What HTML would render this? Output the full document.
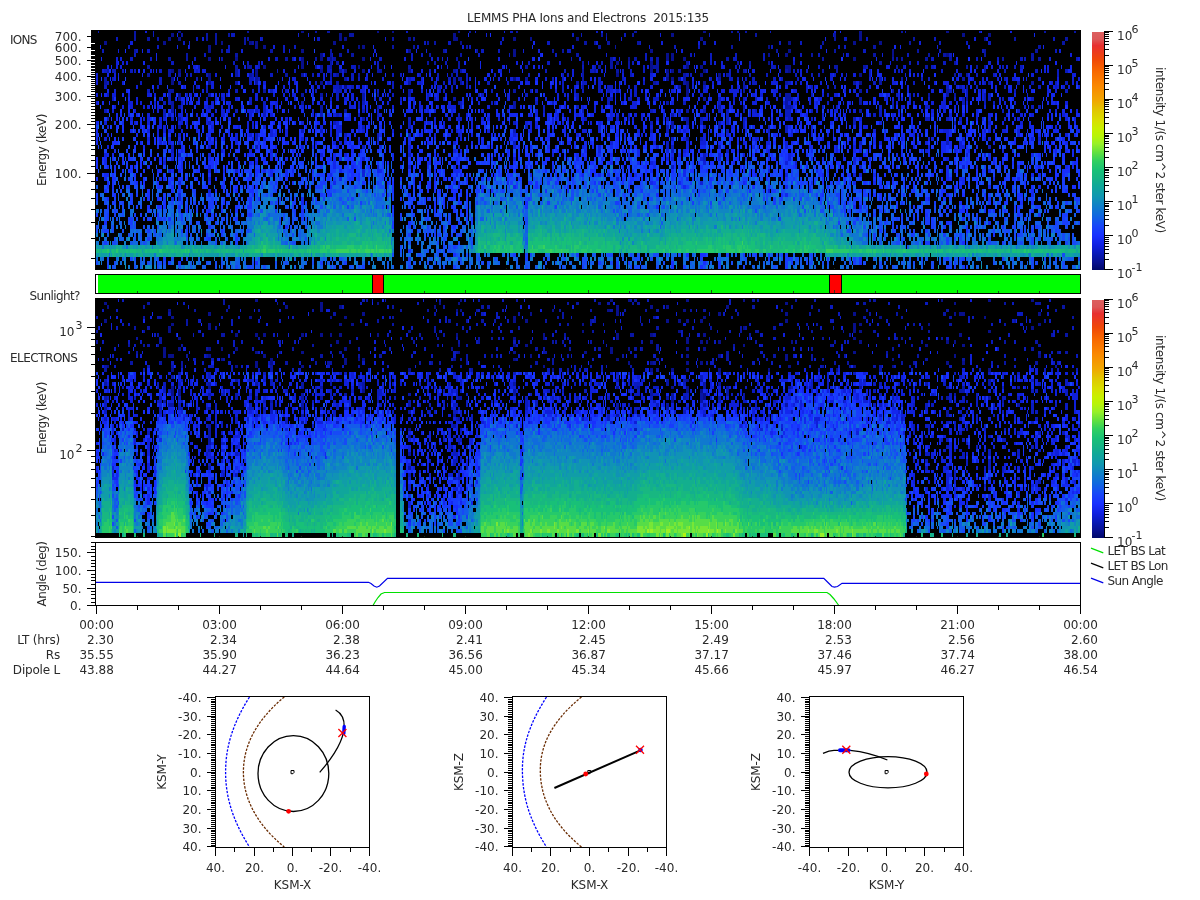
<!DOCTYPE html>
<html lang="en"><head><meta charset="utf-8"><title>LEMMS PHA Ions and Electrons 2015:135</title>
<style>
html,body{margin:0;padding:0;background:#fff;}
body{width:1200px;height:900px;overflow:hidden;}
svg{display:block;font-family:'DejaVu Sans','Liberation Sans',sans-serif;font-size:12px;fill:#2a2a2a;}
</style></head><body>
<svg width="1200" height="900" viewBox="0 0 1200 900">
<defs><linearGradient id="cb" x1="0" y1="1" x2="0" y2="0"><stop offset="0.0000" stop-color="#000868"/><stop offset="0.0314" stop-color="#081090"/><stop offset="0.0614" stop-color="#0818b0"/><stop offset="0.1029" stop-color="#1020e0"/><stop offset="0.1443" stop-color="#1830ff"/><stop offset="0.1857" stop-color="#1848f8"/><stop offset="0.2286" stop-color="#1068e0"/><stop offset="0.2700" stop-color="#1080c8"/><stop offset="0.3114" stop-color="#1098b0"/><stop offset="0.3543" stop-color="#10a898"/><stop offset="0.3957" stop-color="#18b880"/><stop offset="0.4171" stop-color="#18c078"/><stop offset="0.4586" stop-color="#30d060"/><stop offset="0.4929" stop-color="#60e040"/><stop offset="0.5300" stop-color="#98f028"/><stop offset="0.5629" stop-color="#b8f408"/><stop offset="0.5929" stop-color="#c8f000"/><stop offset="0.6257" stop-color="#d8e000"/><stop offset="0.6686" stop-color="#e0c800"/><stop offset="0.7100" stop-color="#f0a800"/><stop offset="0.7729" stop-color="#fa8800"/><stop offset="0.8357" stop-color="#f86800"/><stop offset="0.8857" stop-color="#f04808"/><stop offset="0.9429" stop-color="#e83030"/><stop offset="0.9700" stop-color="#dc5858"/><stop offset="1.0000" stop-color="#dc6060"/></linearGradient></defs>
<rect x="96" y="30" width="984" height="239" fill="#000"/>
<rect x="96" y="298" width="984" height="239" fill="#000"/>
<g fill="none" shape-rendering="crispEdges">
<path stroke="#070f8c" stroke-width="3" d="M178 31.5h3m120 0h3m73 0h2m13 0h2m64 0h2m243 0h3m153 0h3m84 0h3"/>
<path stroke="#070f8c" stroke-width="4" d="M171 35h3m165 0h3m111 0h3m215 0h3m185 0h3m100 0h3m23 0h3M168 39h3m7 0h3m158 0h3m2 0h3m61 0h3m42 0h5m55 0h3m14 0h2m44 0h3m121 0h3m156 0h3m122 0h2M104 43h3m56 0h3m55 0h2m26 0h3m3 0h3m75 0h3m124 0h2m326 0h3m62 0h3m23 0h3M208 47h3m44 0h3m5 0h3m92 0h2m2 0h3m403 0h2M208 51h3m90 0h3m104 0h3m102 0h3m134 0h3m135 0h3m101 0h2M320 55h3m190 0h3m150 0h3m2 0h3m94 0h2m15 0h3m104 0h2m52 0h3M208 59h3m24 0h3m63 0h3m16 0h3m7 0h2m30 0h3m263 0h2m36 0h3m2 0h3m9 0h3m167 0h3M301 63h3m312 0h3m31 0h3m115 0h2M263 67h3m35 0h3m54 0h2m290 0h3m33 0h3m11 0h3m82 0h6M171 71h3m4 0h3m74 0h3m62 0h3m21 0h3m15 0h3m43 0h3m239 0h3m13 0h3m2 0h3m29 0h3m82 0h3M208 75h3m44 0h3m358 0h3m81 0h3m15 0h3m138 0h3M171 79h3m34 0h3m302 0h3m150 0h3m2 0h3M171 83h3m34 0h3m109 0h3m363 0h3m14 0h3m153 0h3M344 87h3m339 0h3M686 91h3M178 95h3m505 0h3"/>
<path stroke="#0815a5" stroke-width="3" d="M134 31.5h2m111 0h2m66 0h2m10 0h3m139 0h2m45 0h2m116 0h3m94 0h2m4 0h2m6 0h2m154 0h2m141 0h2m28 0h2"/>
<path stroke="#0815a5" stroke-width="4" d="M134 35h2m45 0h2m23 0h2m7 0h2m11 0h2m119 0h5m247 0h2m3 0h1m25 0h2m121 0h2m77 0h2M134 39h2m11 0h3m7 0h2m47 0h2m7 0h2m27 0h2m1 0h2m143 0h2m19 0h2m419 0h2m77 0h2m99 0h2m49 0h3M215 43h2m27 0h2m6 0h2m173 0h2m5 0h2m148 0h3m7 0h2m11 0h3m27 0h3m63 0h3m116 0h2m85 0h2m151 0h3M392 47h2m19 0h2m51 0h2m130 0h3m14 0h1m115 0h2m140 0h3m162 0h3M134 51h2m85 0h2m47 0h3m57 0h2m111 0h2m31 0h2m74 0h2m8 0h2m212 0h2m56 0h2m81 0h2m65 0h2m49 0h3M186 55h2m47 0h3m92 0h2m7 0h3m9 0h3m75 0h2m29 0h2m114 0h3m232 0h2m60 0h3m52 0h2m13 0h3m38 0h2m45 0h3M168 59h3m15 0h2m33 0h2m62 0h3m27 0h2m16 0h3m120 0h2m152 0h3m21 0h3m19 0h3m67 0h3m93 0h2m68 0h2m2 0h2m3 0h2m22 0h3m21 0h3m50 0h2m27 0h3m4 0h3M330 63h2m4 0h3m88 0h2m5 0h2m22 0h2m122 0h2m26 0h3m15 0h2m26 0h3m27 0h3m48 0h2m10 0h2m128 0h3m72 0h2M147 67h3m85 0h3m9 0h5m63 0h2m3 0h3m7 0h2m76 0h3m47 0h2m65 0h3m70 0h3m9 0h3m15 0h2m23 0h6m175 0h4m25 0h3m30 0h2m27 0h3m38 0h2m8 0h2m6 0h2M107 71h2m59 0h3m64 0h3m101 0h3m35 0h5m71 0h3m4 0h2m120 0h2m10 0h2m20 0h3m37 0h3m19 0h3m62 0h2m40 0h3m34 0h2m12 0h2m146 0h2M147 75h3m18 0h3m7 0h3m54 0h3m11 0h3m33 0h3m13 0h3m26 0h2m4 0h3m19 0h2m91 0h2m129 0h2m82 0h3m14 0h3m40 0h3m225 0h2m10 0h2M104 79h3m148 0h3m86 0h3m106 0h3m2 0h4m63 0h3m54 0h2m94 0h3m2 0h3m32 0h3m180 0h2m59 0h3M104 83h3m128 0h3m17 0h3m78 0h3m69 0h3m42 0h3m4 0h2m4 0h2m108 0h3m74 0h3m27 0h3m57 0h2m40 0h3m65 0h3m23 0h3m72 0h2m32 0h3m26 0h3m11 0h3M339 87h3m240 0h2m94 0h3m62 0h2m221 0h2M168 91h6m89 0h3m142 0h3m102 0h3m227 0h2m114 0h3m30 0h2m52 0h3M208 95h3m90 0h3m16 0h3m39 0h3m12 0h2m29 0h3m374 0h6m137 0h2m16 0h3m5 0h2M178 99h3m181 0h3m88 0h3m247 0h3m79 0h6m68 0h3m104 0h2M171 103h3m127 0h3m154 0h2m53 0h3m150 0h3m116 0h3m71 0h3M171 107h3m4 0h3m139 0h3m54 0h2m134 0h3m202 0h3m22 0h2m40 0h6M171 111h3m146 0h3m21 0h3m339 0h3m14 0h3m153 0h3M671 115h3M178 119h3m181 0h3m321 0h3M671 123h3m12 0h3M178 127h3m490 0h3m44 0h3M686 139h3"/>
<path stroke="#0a1abf" stroke-width="3" d="M98 31.5h1m54 0h1m252 0h2m102 0h3m83 0h2m172 0h1m134 0h1m73 0h2"/>
<path stroke="#0a1abf" stroke-width="4" d="M153 35h1m77 0h4m337 0h2m7 0h1m42 0h2m83 0h1m29 0h1m93 0h1M116 39h2m78 0h2m63 0h2m54 0h3m182 0h2m102 0h1m237 0h3m19 0h2m66 0h2m117 0h2M183 43h2m239 0h2m22 0h3m49 0h2m45 0h3m90 0h1m138 0h2m19 0h2m137 0h2m25 0h2m20 0h3M128 47h2m27 0h2m69 0h2m53 0h2m9 0h2m121 0h2m50 0h2m203 0h2m22 0h2m71 0h2m47 0h2m16 0h2m4 0h2M102 51h2m32 0h2m9 0h3m76 0h4m53 0h2m62 0h2m96 0h2m34 0h3m14 0h2m67 0h4m292 0h3m73 0h2m41 0h2m71 0h2M134 55h2m68 0h2m126 0h1m78 0h2m8 0h2m55 0h2m29 0h1m45 0h2m88 0h2m43 0h2m18 0h2m23 0h2m26 0h2m35 0h2m16 0h2m23 0h1m3 0h2m58 0h2m40 0h3M130 59h3m17 0h2m42 0h2m79 0h3m14 0h2m33 0h3m2 0h1m46 0h3m29 0h2m24 0h2m132 0h1m43 0h1m29 0h2m3 0h3m57 0h2m21 0h4m26 0h2m166 0h3m42 0h2m19 0h2m21 0h3m1 0h2m50 0h2M171 63h3m59 0h2m12 0h2m9 0h2m117 0h2m66 0h2m81 0h2m17 0h3m9 0h2m40 0h2m29 0h2m69 0h3m4 0h2m81 0h2m114 0h2m6 0h2m24 0h3M198 67h2m58 0h2m67 0h3m21 0h5m21 0h2m203 0h2m10 0h2m47 0h2m38 0h3m49 0h2m12 0h2m20 0h5m42 0h2m46 0h2m35 0h2m26 0h3m68 0h2m10 0h2m4 0h3M104 71h3m5 0h4m6 0h2m6 0h3m1 0h2m23 0h3m34 0h2m79 0h1m16 0h2m31 0h5m97 0h2m25 0h2m87 0h2m17 0h2m24 0h4m28 0h2m6 0h2m11 0h2m61 0h2m21 0h2m6 0h2m6 0h2m46 0h2m2 0h2m7 0h2m61 0h2m27 0h2m41 0h2m61 0h2m29 0h3m19 0h2m6 0h3M186 75h2m2 0h2m14 0h2m44 0h2m16 0h3m32 0h2m5 0h2m19 0h3m15 0h3m38 0h2m6 0h2m17 0h2m16 0h2m17 0h2m8 0h2m26 0h2m32 0h2m32 0h2m3 0h2m61 0h2m54 0h3m1 0h2m37 0h2m18 0h2m15 0h2m27 0h2m14 0h2m5 0h2m14 0h2m33 0h2m88 0h3m14 0h2m15 0h2m62 0h2M112 79h2m45 0h3m34 0h2m51 0h5m4 0h2m70 0h2m19 0h3m4 0h2m48 0h3m26 0h2m9 0h3m15 0h2m84 0h2m8 0h2m34 0h3m21 0h2m86 0h2m17 0h4m4 0h2m6 0h2m5 0h3m18 0h3m5 0h2m14 0h2m80 0h3m2 0h2m35 0h2m5 0h2m74 0h2m32 0h3M107 83h2m31 0h2m17 0h3m16 0h3m68 0h3m63 0h2m10 0h3m62 0h2m25 0h2m13 0h2m7 0h2m42 0h3m17 0h2m53 0h2m18 0h5m11 0h3m42 0h2m11 0h3m93 0h5m31 0h3m4 0h2m76 0h3m37 0h2m69 0h2m69 0h2m8 0h3M104 87h3m50 0h2m37 0h2m8 0h2m125 0h6m12 0h3m38 0h2m6 0h2m35 0h4m10 0h2m13 0h2m94 0h2m34 0h3m6 0h6m15 0h2m4 0h3m66 0h3m39 0h2m59 0h2m3 0h2m14 0h2m5 0h2m110 0h3m10 0h3m14 0h2m26 0h2m32 0h3m14 0h2M147 91h3m56 0h2m27 0h3m14 0h2m16 0h3m12 0h3m27 0h2m19 0h6m35 0h2m60 0h2m2 0h2m6 0h2m38 0h2m37 0h2m3 0h3m24 0h2m10 0h2m6 0h2m14 0h3m6 0h3m6 0h3m15 0h3m169 0h2m141 0h3m10 0h3m1 0h2m46 0h2m49 0h3M107 95h2m59 0h3m15 0h2m148 0h3m53 0h2m33 0h2m49 0h2m1 0h3m41 0h3m48 0h3m55 0h3m63 0h3m108 0h2m14 0h2m67 0h2m11 0h2m2 0h2m51 0h2m16 0h2m2 0h3M112 99h2m45 0h3m6 0h3m35 0h2m13 0h2m26 0h3m78 0h2m4 0h3m61 0h2m25 0h2m5 0h2m7 0h2m122 0h2m7 0h3m28 0h6m15 0h4m21 0h6m59 0h3m12 0h2m8 0h2m10 0h2m9 0h2m23 0h2m135 0h2m24 0h2m6 0h3m19 0h2m2 0h3m11 0h2m27 0h3M163 103h3m2 0h3m10 0h2m66 0h3m11 0h3m92 0h2m2 0h3m95 0h2m29 0h2m1 0h2m39 0h3m14 0h2m53 0h3m73 0h3m32 0h3m106 0h2m63 0h2m19 0h2m47 0h3m19 0h2m7 0h2M208 107h3m52 0h3m92 0h2m100 0h2m81 0h2m31 0h3m212 0h2m29 0h2m12 0h2m41 0h3m10 0h2m31 0h5m101 0h3m4 0h3M104 111h3m56 0h3m69 0h3m17 0h3m5 0h3m96 0h3m12 0h2m164 0h2m37 0h2m66 0h3m25 0h3m37 0h3m5 0h3m14 0h2m10 0h2m28 0h6m20 0h2m66 0h3m120 0h2m13 0h3M163 115h3m2 0h3m92 0h3m54 0h3m13 0h3m19 0h2m17 0h2m79 0h2m168 0h2m96 0h3m56 0h6m82 0h3m3 0h3M107 119h2m62 0h3m234 0h3m47 0h4m122 0h3m29 0h3m9 0h2m36 0h3m14 0h3m14 0h3m23 0h3m14 0h2m43 0h3m20 0h2m40 0h3m69 0h5m16 0h3m10 0h3M208 123h3m122 0h3m72 0h3m102 0h3m134 0h3m47 0h3m15 0h3m5 0h3m14 0h2m108 0h3m98 0h2m32 0h3M362 127h3m43 0h3m114 0h3m138 0h3m34 0h3m37 0h2m23 0h2m15 0h3M301 131h3m16 0h3m190 0h3m134 0h3m13 0h3m57 0h3m39 0h2m15 0h3M255 135h3m86 0h3m30 0h2m29 0h3m47 0h2M255 139h3m119 0h2m292 0h3m26 0h3m65 0h2M178 143h3m332 0h3m150 0h3m190 0h3m84 0h3M171 147h3m34 0h3m44 0h3m104 0h3m301 0h3m2 0h3m44 0h3m267 0h3M171 151h3m497 0h3m52 0h3M178 155h3m227 0h3m292 0h3M703 159h3M671 167h3"/>
<path stroke="#0f1fd9" stroke-width="3" d="M145 31.5h2m328 0h1m28 0h1m329 0h2m174 0h2"/>
<path stroke="#0f1fd9" stroke-width="4" d="M298 35h1m9 0h1m177 0h1m173 0h1M202 39h2m56 0h1m124 0h1m235 0h1m117 0h1m234 0h2m10 0h2M130 43h3m56 0h1m406 0h2m63 0h2m35 0h2m14 0h2m203 0h2M189 47h1m83 0h2m67 0h2m118 0h2m108 0h2m75 0h1m287 0h1m30 0h2M118 51h1m122 0h2m46 0h1m84 0h2m30 0h2m18 0h1m96 0h1m14 0h2m141 0h2m376 0h2M323 55h2m281 0h1m87 0h1m151 0h1m35 0h1m187 0h2M116 59h2m2 0h2m146 0h2m29 0h2m103 0h2m25 0h2m9 0h1m4 0h1m50 0h2m79 0h2m32 0h2m4 0h1m173 0h2m254 0h2m27 0h2M116 63h2m4 0h2m2 0h2m133 0h2m69 0h1m41 0h2m140 0h2m70 0h1m7 0h2m116 0h2m5 0h2m48 0h2m27 0h2m88 0h1m65 0h2m30 0h3m6 0h2M107 67h2m7 0h2m2 0h2m71 0h3m48 0h2m9 0h3m183 0h1m5 0h1m54 0h2m34 0h2m52 0h2m21 0h1m31 0h2m48 0h1m23 0h4m161 0h4m15 0h1m28 0h2m55 0h2m6 0h2m5 0h2m39 0h2M102 71h2m46 0h2m1 0h1m40 0h2m2 0h2m2 0h4m32 0h2m43 0h2m57 0h2m10 0h2m55 0h2m8 0h2m39 0h4m34 0h2m7 0h1m62 0h2m22 0h2m3 0h2m67 0h1m81 0h3m24 0h2m19 0h2m75 0h2m15 0h2m5 0h2m6 0h2m45 0h2m39 0h2m21 0h3m21 0h2m1 0h2M96 75h2m16 0h2m99 0h2m21 0h2m77 0h3m3 0h2m17 0h2m22 0h2m49 0h2m28 0h1m124 0h2m7 0h1m40 0h2m8 0h2m16 0h3m70 0h2m75 0h2m28 0h3m8 0h2m3 0h1m6 0h3m49 0h1m7 0h2m2 0h2m49 0h2m25 0h2m34 0h3m38 0h4M96 79h2m16 0h2m176 0h4m27 0h2m22 0h2m17 0h2m14 0h2m27 0h4m6 0h2m8 0h2m36 0h2m27 0h2m10 0h3m3 0h4m25 0h2m77 0h2m17 0h2m18 0h2m52 0h1m112 0h3m11 0h2m23 0h2m85 0h2m10 0h2m2 0h2m8 0h2m13 0h2m7 0h2m4 0h4m10 0h1m30 0h2m13 0h2m4 0h2M96 83h2m24 0h2m87 0h3m49 0h3m28 0h2m34 0h2m55 0h2m28 0h2m2 0h2m25 0h3m11 0h2m14 0h2m45 0h5m29 0h2m33 0h2m5 0h2m17 0h1m3 0h2m45 0h3m18 0h2m18 0h2m3 0h1m31 0h2m20 0h7m22 0h2m18 0h2m34 0h3m33 0h4m38 0h2m7 0h6m25 0h2m3 0h2m1 0h2m22 0h2m43 0h2m19 0h2m2 0h2M136 87h2m45 0h2m8 0h1m4 0h2m11 0h3m44 0h2m23 0h2m27 0h2m3 0h3m3 0h2m22 0h4m7 0h2m2 0h3m1 0h2m63 0h2m12 0h2m22 0h2m47 0h2m30 0h2m22 0h2m5 0h1m68 0h3m21 0h2m16 0h2m37 0h2m4 0h2m46 0h3m21 0h2m3 0h2m40 0h3m10 0h2m36 0h2m47 0h2m4 0h3m30 0h2m32 0h2m22 0h2m2 0h2m3 0h3m3 0h2m8 0h2M114 91h2m37 0h1m39 0h1m8 0h2m24 0h2m28 0h2m45 0h2m26 0h3m8 0h3m2 0h2m9 0h5m24 0h2m20 0h2m8 0h2m14 0h2m116 0h2m44 0h2m7 0h3m17 0h2m39 0h3m29 0h5m13 0h4m4 0h10m1 0h2m31 0h5m15 0h4m47 0h2m7 0h3m10 0h2m39 0h2m22 0h3m7 0h2m36 0h2m1 0h2m24 0h2m37 0h2m6 0h2M96 95h2m14 0h4m12 0h2m17 0h3m4 0h2m34 0h2m29 0h4m1 0h2m27 0h3m15 0h2m8 0h2m7 0h4m16 0h2m37 0h3m33 0h2m40 0h2m6 0h2m6 0h2m60 0h3m47 0h2m5 0h2m1 0h2m5 0h2m30 0h1m17 0h2m4 0h2m13 0h2m62 0h1m23 0h4m15 0h3m5 0h3m10 0h3m3 0h2m16 0h2m23 0h2m10 0h4m18 0h3m27 0h2m10 0h2m17 0h2m63 0h2m30 0h2m11 0h1M136 99h2m60 0h2m15 0h2m6 0h2m10 0h3m17 0h3m19 0h1m16 0h2m24 0h3m21 0h3m4 0h3m25 0h3m31 0h2m22 0h2m32 0h2m34 0h3m8 0h2m15 0h3m7 0h2m10 0h2m42 0h2m21 0h2m11 0h3m5 0h2m76 0h2m20 0h2m29 0h2m19 0h2m10 0h2m7 0h4m8 0h3m51 0h4m4 0h2m4 0h2m1 0h2m6 0h2m32 0h3m36 0h2m43 0h1M96 103h2m30 0h5m3 0h2m2 0h2m12 0h2m30 0h2m8 0h2m13 0h3m14 0h3m44 0h3m34 0h2m35 0h2m36 0h2m11 0h2m11 0h2m4 0h2m27 0h3m27 0h2m142 0h2m8 0h5m34 0h3m32 0h2m25 0h2m5 0h2m10 0h5m9 0h4m13 0h2m3 0h3m4 0h2m12 0h2m5 0h2m20 0h2m3 0h1m5 0h2m45 0h2m11 0h2m20 0h3m7 0h5m3 0h3m4 0h2m8 0h2m36 0h2m8 0h2m39 0h2m8 0h3M114 107h2m6 0h2m6 0h3m10 0h2m2 0h3m7 0h5m19 0h2m21 0h4m3 0h3m7 0h2m5 0h2m25 0h3m12 0h3m2 0h2m17 0h2m5 0h3m45 0h5m8 0h3m14 0h3m10 0h2m19 0h2m4 0h4m14 0h2m9 0h8m31 0h3m20 0h3m17 0h2m27 0h2m3 0h2m16 0h2m10 0h2m5 0h2m7 0h3m17 0h7m66 0h3m25 0h2m168 0h4m36 0h5m8 0h2m28 0h2m38 0h2m31 0h2M112 111h2m20 0h2m21 0h2m22 0h2m23 0h5m4 0h2m4 0h4m3 0h2m17 0h7m4 0h2m17 0h1m34 0h2m105 0h2m3 0h2m1 0h2m5 0h2m15 0h2m28 0h3m23 0h2m26 0h3m17 0h2m37 0h2m14 0h3m40 0h3m7 0h2m35 0h3m18 0h2m26 0h2m1 0h3m40 0h2m3 0h2m14 0h2m9 0h2m5 0h4m11 0h2m2 0h3m42 0h2m21 0h2m8 0h3m9 0h3m30 0h2m77 0h2m19 0h2M128 115h2m17 0h3m28 0h5m3 0h2m8 0h2m13 0h3m7 0h4m24 0h3m18 0h3m39 0h2m1 0h2m16 0h3m3 0h3m37 0h3m47 0h2m20 0h2m13 0h2m62 0h2m3 0h3m5 0h2m12 0h2m3 0h2m12 0h3m31 0h3m3 0h3m15 0h3m4 0h2m20 0h2m13 0h3m25 0h2m29 0h2m10 0h2m1 0h7m22 0h2m23 0h2m14 0h2m14 0h2m4 0h2m23 0h2m21 0h2m7 0h2m6 0h2m38 0h3m10 0h3m11 0h2m10 0h3m15 0h2m12 0h3m8 0h3m28 0h3M130 119h3m10 0h2m2 0h3m9 0h3m1 0h3m15 0h2m23 0h2m41 0h3m33 0h3m89 0h2m55 0h2m12 0h3m5 0h2m13 0h2m8 0h3m3 0h3m8 0h2m52 0h2m1 0h2m7 0h2m1 0h2m13 0h2m23 0h6m19 0h2m7 0h2m13 0h3m44 0h5m37 0h2m38 0h3m3 0h2m29 0h2m12 0h2m21 0h3m30 0h2m2 0h2m51 0h3m24 0h2m10 0h3m13 0h2m8 0h2m1 0h3m45 0h3m6 0h2M104 123h3m27 0h2m11 0h3m9 0h3m16 0h5m3 0h2m18 0h2m39 0h2m3 0h2m47 0h3m32 0h3m74 0h2m9 0h2m1 0h4m3 0h2m7 0h2m26 0h2m52 0h3m2 0h2m3 0h3m14 0h2m3 0h2m3 0h2m18 0h2m6 0h2m6 0h3m217 0h2m59 0h3m77 0h3m40 0h2m16 0h3M107 127h2m48 0h5m1 0h3m45 0h3m7 0h2m15 0h2m7 0h2m3 0h2m9 0h3m49 0h2m3 0h3m7 0h2m4 0h6m16 0h2m83 0h2m26 0h2m57 0h2m3 0h3m60 0h3m49 0h3m33 0h3m42 0h2m78 0h2m50 0h5m120 0h3m64 0h2M147 131h3m7 0h2m4 0h3m2 0h3m10 0h2m13 0h2m72 0h3m12 0h3m42 0h2m4 0h6m16 0h2m2 0h3m27 0h2m57 0h2m3 0h2m2 0h2m25 0h3m40 0h2m20 0h2m28 0h5m11 0h3m36 0h3m38 0h3m2 0h3m59 0h2m44 0h2m18 0h2m60 0h3m37 0h2m28 0h6m35 0h2m2 0h3m2 0h2m7 0h4m11 0h3M107 135h2m48 0h2m19 0h3m54 0h3m11 0h3m18 0h3m12 0h3m42 0h2m4 0h3m80 0h2m13 0h2m24 0h2m9 0h2m40 0h3m51 0h2m7 0h3m28 0h3m31 0h2m60 0h3m20 0h3m39 0h2m21 0h2m18 0h2m14 0h2m84 0h2m31 0h3m68 0h3m45 0h3M104 139h3m40 0h3m9 0h3m6 0h3m37 0h3m4 0h2m6 0h2m10 0h3m14 0h2m9 0h3m35 0h3m40 0h3m11 0h2m100 0h2m221 0h3m17 0h3m49 0h4m57 0h2m4 0h2m25 0h2m41 0h2m7 0h2m25 0h2m1 0h3m12 0h3m13 0h3m19 0h2m2 0h3m40 0h3m4 0h3M159 143h3m6 0h3m64 0h3m77 0h2m16 0h3m3 0h3m16 0h2m17 0h2m74 0h3m154 0h3m40 0h3m30 0h3m11 0h6m37 0h2m21 0h4m15 0h3m91 0h3m43 0h3m31 0h3m31 0h2M107 147h2m192 0h3m32 0h3m69 0h3m47 0h2m6 0h2m45 0h3m66 0h2m14 0h3m55 0h3m27 0h3m96 0h3m48 0h2m15 0h3m3 0h3m51 0h2m13 0h2m29 0h6M221 151h2m26 0h3m18 0h3m135 0h3m42 0h3m4 0h2m136 0h3m65 0h3m14 0h3m82 0h2m66 0h2m21 0h3m63 0h3m26 0h2m46 0h2M104 155h3m64 0h3m34 0h3m109 0h3m21 0h3m111 0h2m92 0h2m74 0h2m88 0h3m22 0h2m23 0h2m18 0h3m175 0h2m16 0h2M171 159h3m61 0h3m124 0h3m148 0h3m112 0h2m36 0h3m2 0h3m26 0h3m15 0h3m67 0h3m62 0h3m3 0h3m84 0h3M163 163h3m89 0h3m392 0h3m50 0h3m79 0h3m7 0h2m56 0h3M208 167h3m166 0h2m29 0h3m47 0h2m399 0h3m100 0h3M168 171h3m37 0h3m24 0h3m124 0h3m403 0h2m184 0h2m32 0h3M362 175h3m420 0h3m65 0h3m3 0h3M208 179h3m405 0h3M178 183h3m277 0h2m240 0h3M208 191h3m557 0h2M178 195h3M178 199h3"/>
<path stroke="#1327ed" stroke-width="3" d="M601 31.5h2m237 0h1m140 0h1"/>
<path stroke="#1327ed" stroke-width="4" d="M177 35h1m290 0h1m565 0h1M825 39h1M533 43h2M100 47h1m76 0h1m10 0h1m184 0h1m158 0h1m361 0h2m4 0h1m142 0h1M142 51h1m273 0h1m58 0h1m200 0h1m149 0h1M156 55h1m216 0h1m166 0h2m236 0h1m159 0h1M101 59h1m54 0h1m62 0h1m74 0h2m74 0h1m161 0h3m341 0h1m79 0h2M118 63h1m24 0h2m47 0h1m114 0h1m156 0h2m14 0h1m140 0h1m15 0h3m26 0h3m20 0h1m50 0h2m129 0h1m144 0h1m38 0h2M111 67h1m76 0h2m6 0h2m27 0h1m72 0h1m18 0h3m19 0h3m29 0h1m12 0h1m95 0h1m23 0h1m1 0h1m13 0h2m11 0h2m70 0h1m88 0h1m44 0h1m38 0h1m191 0h2m14 0h2m35 0h1m20 0h2m15 0h1m8 0h2M143 71h2m11 0h1m28 0h1m66 0h2m180 0h2m55 0h2m5 0h2m105 0h1m14 0h1m149 0h1m92 0h3m104 0h2m2 0h2m92 0h4M107 75h2m9 0h1m23 0h1m104 0h2m77 0h1m45 0h1m53 0h1m2 0h2m56 0h3m10 0h2m36 0h2m21 0h1m42 0h1m48 0h3m60 0h1m116 0h1m43 0h5m39 0h2m35 0h1m40 0h2m13 0h2M185 79h1m68 0h1m27 0h1m82 0h1m40 0h2m28 0h1m38 0h1m8 0h3m6 0h1m12 0h1m28 0h3m33 0h1m18 0h2m2 0h2m54 0h3m39 0h2m15 0h1m6 0h1m25 0h1m36 0h2m21 0h4m86 0h2m64 0h1m11 0h2m14 0h2m28 0h4M111 83h1m82 0h2m64 0h1m27 0h2m6 0h2m11 0h2m14 0h2m44 0h1m2 0h2m13 0h2m13 0h4m28 0h1m38 0h1m44 0h2m30 0h2m65 0h1m98 0h3m70 0h2m13 0h2m88 0h2m7 0h1m62 0h2m21 0h2m6 0h2m41 0h1m6 0h2m6 0h2M241 87h2m20 0h3m23 0h1m6 0h2m44 0h2m12 0h2m76 0h2m5 0h1m14 0h2m17 0h1m91 0h2m7 0h3m25 0h1m10 0h1m3 0h1m57 0h1m28 0h3m3 0h2m25 0h1m39 0h2m35 0h2m59 0h2m11 0h1m10 0h2m25 0h2m28 0h1m11 0h2m19 0h2m15 0h4m35 0h2M107 91h2m17 0h2m145 0h2m7 0h1m5 0h1m7 0h2m14 0h2m54 0h2m4 0h2m50 0h1m57 0h2m120 0h1m6 0h3m3 0h2m20 0h2m4 0h2m12 0h2m11 0h2m22 0h2m17 0h1m31 0h2m4 0h2m3 0h5m6 0h2m38 0h2m1 0h2m6 0h2m74 0h2m65 0h1m8 0h2m2 0h1m5 0h2m9 0h2m13 0h2m14 0h1m4 0h3m15 0h2M104 95h3m15 0h2m26 0h2m11 0h3m28 0h2m4 0h1m14 0h2m2 0h1m69 0h1m36 0h1m5 0h1m9 0h2m38 0h2m1 0h1m40 0h1m7 0h3m29 0h2m1 0h2m25 0h2m45 0h2m58 0h1m6 0h3m2 0h1m4 0h1m28 0h1m6 0h3m11 0h1m21 0h2m24 0h3m34 0h2m122 0h4m5 0h2m53 0h3m32 0h3m66 0h2m2 0h4M128 99h2m45 0h1m5 0h4m1 0h2m5 0h1m44 0h2m21 0h2m3 0h2m17 0h3m59 0h2m7 0h2m16 0h2m13 0h2m13 0h2m2 0h5m13 0h1m9 0h1m25 0h2m12 0h2m20 0h2m54 0h1m19 0h2m11 0h1m27 0h1m55 0h3m9 0h6m9 0h2m8 0h4m9 0h2m70 0h2m46 0h2m30 0h3m45 0h2m36 0h3m10 0h2m2 0h5m18 0h2m7 0h2m2 0h2m10 0h2m3 0h2m20 0h2M102 103h2m46 0h2m5 0h2m24 0h2m4 0h3m6 0h2m4 0h4m18 0h2m42 0h5m6 0h1m35 0h3m3 0h2m5 0h2m12 0h3m7 0h2m9 0h3m14 0h2m47 0h2m29 0h2m32 0h2m52 0h2m3 0h2m7 0h2m28 0h4m49 0h2m4 0h3m4 0h1m2 0h2m32 0h1m19 0h1m11 0h2m62 0h2m19 0h2m31 0h2m14 0h5m1 0h2m2 0h3m1 0h2m7 0h2m19 0h2m16 0h3m71 0h2m26 0h1m14 0h1m4 0h2m2 0h4M128 107h2m24 0h2m38 0h2m35 0h2m8 0h2m36 0h2m18 0h2m4 0h2m2 0h2m25 0h3m15 0h2m10 0h2m58 0h3m2 0h2m9 0h3m2 0h1m61 0h1m10 0h2m59 0h1m2 0h3m19 0h1m107 0h2m1 0h1m3 0h4m4 0h2m29 0h3m30 0h2m7 0h2m10 0h4m15 0h1m4 0h2m7 0h2m58 0h2m6 0h2m22 0h2m25 0h2m29 0h2m7 0h2m2 0h2M107 111h2m19 0h2m23 0h1m38 0h1m9 0h2m22 0h2m38 0h2m2 0h3m10 0h2m16 0h3m28 0h1m33 0h2m21 0h2m15 0h7m8 0h2m3 0h1m15 0h1m10 0h3m40 0h2m11 0h1m59 0h2m3 0h2m3 0h2m20 0h3m11 0h1m76 0h2m3 0h1m14 0h2m23 0h2m32 0h2m3 0h2m31 0h2m19 0h3m10 0h1m40 0h2m53 0h2m13 0h2m10 0h2m10 0h1m29 0h2m16 0h1m22 0h2m11 0h3M116 115h2m2 0h2m14 0h2m33 0h3m1 0h1m26 0h2m2 0h2m18 0h2m5 0h2m92 0h3m19 0h2m38 0h2m13 0h2m15 0h2m22 0h3m21 0h2m16 0h3m6 0h4m2 0h2m5 0h9m10 0h2m17 0h3m5 0h2m17 0h2m3 0h5m6 0h4m12 0h1m6 0h2m7 0h2m19 0h2m2 0h2m25 0h2m45 0h2m12 0h2m3 0h2m37 0h2m19 0h2m2 0h2m24 0h3m10 0h1m22 0h2m16 0h2m8 0h2m2 0h2m31 0h3m57 0h2m19 0h2m10 0h2m3 0h2m16 0h2m2 0h2m6 0h2m4 0h3m8 0h4M116 119h2m22 0h2m44 0h2m10 0h2m15 0h2m11 0h3m7 0h2m23 0h3m9 0h2m13 0h2m52 0h7m3 0h2m4 0h2m4 0h2m53 0h2m46 0h2m36 0h2m38 0h3m7 0h2m15 0h2m5 0h1m42 0h2m19 0h2m16 0h2m44 0h1m19 0h2m32 0h2m3 0h2m1 0h2m3 0h2m36 0h2m18 0h2m50 0h2m23 0h2m69 0h2m67 0h2M96 123h2m16 0h2m6 0h2m6 0h3m3 0h2m2 0h2m51 0h1m17 0h3m41 0h3m15 0h2m4 0h2m13 0h2m21 0h3m3 0h2m33 0h4m6 0h2m19 0h2m48 0h2m17 0h2m21 0h3m18 0h2m5 0h1m6 0h2m10 0h2m29 0h2m6 0h2m32 0h2m12 0h5m4 0h2m6 0h2m32 0h3m52 0h4m4 0h2m14 0h2m53 0h2m18 0h2m8 0h3m13 0h1m12 0h3m49 0h2m21 0h2m30 0h2m44 0h2m15 0h2m37 0h2m4 0h2M140 127h2m1 0h2m26 0h3m12 0h2m2 0h2m4 0h2m35 0h5m39 0h1m27 0h2m53 0h2m6 0h2m9 0h3m18 0h2m9 0h2m11 0h2m22 0h3m25 0h2m38 0h2m46 0h2m40 0h1m3 0h3m21 0h3m6 0h4m45 0h2m39 0h2m10 0h2m2 0h2m1 0h3m18 0h3m12 0h3m4 0h2m3 0h2m47 0h2m2 0h3m3 0h3m36 0h2m1 0h2m8 0h2m4 0h2m87 0h2m9 0h6m6 0h5m17 0h2m15 0h2m6 0h2M96 131h2m32 0h3m1 0h2m7 0h2m26 0h3m24 0h2m8 0h6m14 0h2m17 0h2m26 0h2m2 0h2m70 0h3m6 0h2m59 0h2m1 0h2m1 0h6m4 0h2m19 0h2m9 0h2m57 0h2m17 0h3m12 0h4m8 0h2m14 0h2m24 0h3m24 0h2m41 0h3m11 0h3m7 0h2m19 0h4m2 0h2m16 0h2m6 0h2m1 0h2m27 0h4m15 0h2m17 0h1m50 0h2m23 0h2m23 0h2m3 0h4m6 0h3m2 0h2m26 0h2m22 0h2m6 0h2m11 0h1m7 0h3m15 0h6m17 0h4M96 135h2m38 0h2m60 0h2m6 0h5m12 0h2m3 0h2m14 0h2m1 0h2m9 0h2m13 0h4m43 0h3m24 0h4m3 0h2m23 0h3m18 0h2m11 0h2m6 0h2m6 0h2m12 0h2m2 0h4m40 0h2m1 0h2m20 0h2m29 0h3m14 0h2m50 0h3m5 0h2m11 0h3m5 0h2m3 0h3m13 0h3m49 0h3m8 0h2m2 0h2m14 0h2m22 0h5m10 0h3m27 0h2m13 0h1m10 0h2m23 0h2m13 0h2m10 0h2m3 0h4m4 0h4m4 0h2m2 0h2m26 0h3m14 0h2m14 0h4m52 0h3m3 0h2m1 0h2m25 0h2M96 139h2m80 0h3m50 0h4m42 0h1m27 0h2m29 0h3m10 0h2m17 0h2m38 0h3m2 0h2m12 0h2m5 0h2m42 0h2m1 0h3m25 0h4m22 0h3m7 0h5m7 0h2m22 0h1m19 0h2m21 0h2m4 0h2m8 0h1m9 0h3m78 0h2m4 0h2m1 0h2m7 0h2m1 0h3m63 0h2m14 0h2m37 0h3m8 0h2m10 0h2m5 0h2m8 0h2m67 0h2m30 0h2m39 0h2m5 0h3M96 143h2m42 0h2m5 0h3m13 0h3m5 0h3m34 0h6m44 0h2m25 0h3m4 0h2m11 0h2m37 0h3m2 0h2m57 0h3m16 0h4m8 0h2m30 0h2m5 0h2m1 0h3m23 0h2m50 0h2m1 0h2m3 0h4m3 0h2m8 0h3m3 0h2m79 0h3m16 0h2m26 0h3m8 0h2m6 0h2m6 0h2m8 0h2m34 0h2m4 0h2m10 0h2m16 0h2m18 0h2m4 0h3m17 0h3m37 0h2m2 0h2m22 0h5m3 0h3m62 0h2m8 0h2m12 0h3m10 0h2m12 0h3M143 147h2m12 0h2m22 0h2m55 0h2m12 0h2m21 0h2m35 0h2m1 0h2m34 0h3m14 0h2m9 0h3m94 0h2m9 0h3m1 0h2m25 0h2m10 0h2m15 0h3m5 0h2m17 0h2m8 0h3m5 0h2m16 0h3m17 0h2m68 0h6m34 0h2m10 0h3m2 0h2m7 0h2m41 0h4m7 0h2m5 0h2m5 0h2m33 0h2m70 0h5m3 0h3m24 0h2m77 0h2M114 151h2m65 0h2m13 0h2m25 0h2m52 0h1m14 0h2m57 0h3m6 0h2m94 0h2m8 0h2m39 0h2m21 0h2m20 0h2m3 0h2m3 0h2m3 0h2m15 0h3m35 0h2m4 0h2m7 0h3m46 0h3m21 0h2m19 0h4m2 0h2m16 0h2m9 0h2m23 0h2m2 0h2m14 0h2m9 0h2m10 0h2m17 0h3m45 0h2m6 0h2m10 0h2m5 0h2m11 0h5m10 0h2m1 0h3m6 0h2m42 0h2m41 0h2m8 0h3m4 0h2M107 155h2m3 0h2m72 0h2m40 0h2m17 0h7m16 0h3m2 0h2m38 0h2m16 0h3m22 0h2m32 0h2m40 0h2m1 0h2m55 0h2m11 0h2m26 0h3m38 0h3m3 0h2m14 0h3m9 0h3m24 0h3m31 0h3m4 0h3m2 0h3m20 0h2m18 0h3m62 0h2m13 0h2m35 0h1m19 0h3m30 0h2m3 0h2m25 0h2m11 0h2m45 0h3m40 0h3m21 0h2m15 0h2M104 159h3m52 0h3m1 0h3m15 0h2m25 0h3m44 0h3m5 0h3m4 0h3m12 0h3m42 0h2m1 0h3m3 0h3m50 0h2m45 0h2m15 0h2m8 0h2m23 0h2m83 0h3m5 0h3m14 0h2m123 0h3m8 0h2m6 0h2m21 0h2m41 0h2m9 0h2m10 0h2m7 0h3m23 0h2m8 0h3m61 0h3m16 0h3m11 0h2m10 0h3m2 0h2M104 163h3m74 0h2m66 0h3m81 0h3m91 0h4m25 0h2m152 0h3m24 0h3m13 0h3m77 0h2m14 0h2m76 0h2m125 0h2m37 0h2m7 0h2m70 0h2M107 167h2m25 0h2m11 0h3m31 0h2m150 0h3m15 0h3m73 0h2m24 0h3m54 0h3m12 0h3m2 0h2m20 0h2m68 0h2m29 0h3m87 0h2m50 0h2m9 0h2m117 0h3m18 0h3m27 0h2m39 0h3m18 0h3m24 0h3m4 0h2M157 171h2m12 0h3m4 0h3m42 0h2m38 0h3m4 0h3m12 0h3m4 0h2m45 0h3m35 0h5m52 0h2m17 0h7m92 0h2m96 0h3m30 0h3m130 0h2m9 0h2m112 0h2m3 0h3M104 175h5m140 0h3m18 0h3m12 0h3m42 0h2m102 0h2m20 0h2m2 0h2m68 0h2m50 0h2m14 0h3m6 0h3m20 0h2m2 0h3m46 0h3m69 0h2m65 0h2m49 0h3m70 0h3m82 0h3m4 0h3M104 179h3m52 0h3m1 0h3m173 0h3m92 0h2m7 0h2m8 0h3m10 0h2m218 0h3m203 0h2m52 0h3m10 0h6m28 0h2m22 0h3M107 183h2m99 0h3m122 0h3m117 0h3m51 0h2m141 0h3m25 0h3m62 0h2m66 0h2m40 0h3m17 0h3m86 0h3M221 187h2m235 0h2m53 0h3m167 0h3m99 0h3m166 0h2m3 0h3m26 0h3m47 0h3M235 191h3m716 0h2m75 0h3M208 195h3m197 0h3m42 0h3m329 0h3m158 0h3m82 0h3M171 199h3m127 0h3m624 0h2m58 0h3M301 203h3M853 207h3m3 0h3M208 211h3M988 223h3"/>
<path stroke="#182ffe" stroke-width="4" d="M490 35h1M314 39h1M125 51h1M376 55h1m165 0h1m410 0h1M841 59h2m125 0h2m11 0h1M342 63h2m178 0h1M391 67h1m45 0h2m103 0h1m153 0h1m111 0h1M109 71h2m27 0h2m228 0h2m152 0h1m142 0h1m29 0h1m175 0h1m51 0h1m58 0h2m57 0h1M175 75h1m55 0h2m71 0h1m80 0h1m17 0h1m374 0h1m92 0h1m37 0h2m23 0h2M110 79h1m7 0h1m55 0h1m2 0h1m42 0h1m68 0h1m17 0h1m94 0h1m20 0h1m131 0h2m7 0h2m115 0h2m130 0h1m26 0h1m31 0h1m3 0h1m29 0h1m116 0h1M206 83h2m30 0h2m14 0h1m3 0h2m18 0h1m144 0h1m98 0h1m12 0h3m4 0h1m7 0h2m3 0h2m24 0h1m33 0h1m21 0h3m56 0h1m1 0h2m37 0h2m26 0h1m60 0h1m6 0h1m67 0h2m140 0h1M152 87h2m27 0h2m2 0h1m34 0h1m9 0h1m80 0h1m53 0h1m176 0h1m12 0h2m31 0h1m16 0h1m70 0h1m70 0h1m11 0h1m48 0h1m32 0h2m1 0h2m30 0h1m72 0h3m64 0h1m6 0h1m37 0h1M128 91h2m113 0h3m22 0h2m5 0h2m32 0h2m54 0h1m37 0h1m25 0h2m44 0h3m26 0h1m4 0h1m14 0h1m7 0h1m94 0h1m17 0h2m13 0h1m16 0h4m13 0h1m70 0h1m25 0h2m50 0h1m5 0h2m40 0h1m47 0h2m82 0h1m10 0h1M101 95h1m74 0h1m8 0h1m3 0h1m6 0h2m13 0h3m14 0h2m117 0h2m16 0h1m6 0h1m107 0h1m5 0h1m35 0h1m137 0h1m16 0h1m62 0h2m5 0h1m90 0h2m4 0h2m55 0h2m62 0h1m31 0h2m62 0h1M114 99h2m46 0h1m13 0h1m13 0h2m25 0h2m85 0h1m7 0h2m89 0h1m41 0h2m34 0h5m38 0h1m152 0h1m11 0h1m36 0h3m10 0h1m17 0h3m35 0h2m11 0h1m5 0h4m72 0h1m119 0h2m16 0h1m14 0h1m2 0h1M98 103h1m10 0h1m82 0h1m22 0h2m2 0h1m3 0h2m63 0h1m9 0h1m109 0h3m18 0h2m40 0h2m69 0h1m4 0h3m4 0h1m33 0h1m26 0h1m5 0h1m2 0h3m10 0h3m9 0h1m58 0h1m34 0h2m54 0h1m18 0h2m32 0h1m117 0h2m38 0h2m11 0h1m33 0h2M112 107h2m129 0h1m22 0h2m9 0h1m30 0h1m17 0h1m3 0h2m38 0h1m37 0h3m25 0h1m4 0h1m27 0h2m52 0h2m29 0h1m6 0h3m3 0h2m36 0h1m1 0h3m39 0h1m9 0h1m1 0h2m26 0h1m4 0h1m50 0h2m23 0h1m2 0h3m19 0h2m93 0h1m5 0h2m15 0h2m4 0h2m25 0h3m13 0h3m28 0h2m33 0h1m36 0h3M120 111h2m11 0h1m34 0h3m4 0h1m9 0h1m58 0h2m22 0h2m12 0h1m5 0h1m69 0h2m14 0h2m53 0h2m12 0h2m26 0h2m2 0h1m2 0h2m50 0h2m27 0h2m26 0h1m16 0h1m56 0h2m8 0h3m3 0h1m3 0h2m48 0h4m25 0h3m28 0h2m4 0h2m7 0h2m32 0h1m25 0h2m37 0h1m19 0h3m21 0h3m10 0h3m105 0h2M133 115h1m8 0h1m103 0h1m5 0h2m7 0h2m3 0h2m5 0h2m55 0h2m15 0h2m19 0h2m1 0h1m112 0h2m34 0h2m28 0h2m2 0h1m32 0h2m18 0h3m20 0h2m38 0h1m23 0h1m3 0h2m59 0h1m11 0h2m29 0h2m30 0h2m4 0h1m47 0h2m17 0h2m8 0h2m6 0h5m7 0h1m3 0h2m13 0h2m14 0h2m4 0h1m16 0h2m11 0h2M111 119h1m7 0h1m6 0h2m22 0h2m1 0h3m10 0h1m16 0h3m22 0h3m12 0h2m56 0h2m6 0h1m8 0h1m16 0h2m54 0h1m10 0h2m35 0h2m21 0h1m23 0h2m36 0h1m33 0h2m22 0h2m62 0h1m43 0h1m23 0h1m19 0h2m43 0h1m37 0h2m7 0h2m33 0h2m13 0h3m42 0h4m32 0h1m28 0h2m40 0h2m13 0h1m18 0h1m4 0h2M98 123h1m20 0h1m33 0h3m36 0h1m3 0h4m17 0h2m11 0h1m29 0h1m9 0h3m12 0h3m1 0h1m25 0h2m8 0h1m4 0h2m47 0h3m2 0h1m41 0h1m14 0h1m42 0h2m1 0h3m55 0h2m3 0h2m20 0h2m14 0h1m7 0h2m30 0h2m13 0h2m11 0h3m11 0h1m21 0h2m77 0h2m6 0h2m2 0h2m12 0h2m7 0h5m30 0h2m34 0h2m93 0h2m2 0h2m6 0h2m5 0h2m64 0h2M111 127h1m4 0h2m4 0h2m23 0h3m25 0h1m18 0h2m12 0h3m44 0h3m12 0h3m6 0h2m4 0h3m16 0h1m28 0h3m30 0h2m66 0h3m2 0h4m15 0h2m2 0h2m20 0h2m10 0h2m2 0h2m36 0h2m7 0h3m2 0h2m13 0h2m2 0h3m29 0h1m9 0h2m1 0h3m59 0h3m2 0h3m11 0h1m2 0h3m11 0h2m7 0h2m35 0h3m41 0h2m40 0h1m47 0h4m15 0h2m19 0h2m18 0h2m6 0h4m4 0h2m12 0h2m9 0h2m49 0h5m8 0h2m9 0h2M122 131h2m78 0h2m37 0h2m3 0h1m13 0h3m10 0h2m7 0h1m16 0h2m11 0h2m1 0h2m6 0h2m1 0h1m29 0h2m8 0h2m14 0h2m22 0h2m18 0h1m20 0h1m14 0h2m7 0h2m11 0h2m118 0h1m1 0h1m13 0h1m35 0h3m22 0h2m25 0h1m12 0h2m19 0h1m45 0h3m9 0h6m14 0h2m5 0h3m6 0h2m21 0h3m39 0h2m4 0h2m6 0h2m2 0h2m4 0h3m40 0h6m57 0h3m4 0h3m6 0h2M111 135h1m35 0h3m13 0h3m2 0h3m12 0h2m1 0h2m43 0h2m19 0h2m7 0h5m33 0h5m62 0h2m24 0h2m23 0h2m79 0h2m10 0h3m7 0h2m1 0h1m26 0h2m2 0h1m24 0h2m6 0h1m13 0h3m11 0h1m37 0h3m27 0h3m22 0h1m5 0h2m1 0h1m3 0h4m54 0h2m33 0h2m25 0h2m4 0h2m10 0h3m11 0h3m18 0h2m38 0h2m32 0h4m2 0h2m3 0h2m14 0h2m23 0h3m3 0h1m2 0h5m8 0h1M114 139h2m38 0h2m1 0h2m24 0h2m13 0h2m11 0h3m7 0h2m7 0h1m16 0h5m27 0h2m2 0h2m5 0h2m2 0h2m3 0h2m22 0h2m62 0h4m13 0h2m20 0h1m4 0h2m12 0h2m9 0h2m38 0h2m2 0h2m11 0h5m2 0h2m45 0h4m11 0h2m12 0h2m17 0h4m34 0h3m25 0h2m34 0h1m11 0h2m52 0h2m35 0h2m11 0h1m4 0h2m7 0h2m4 0h3m30 0h4m66 0h2m14 0h2m21 0h2m7 0h4m18 0h1m2 0h2m28 0h2M112 143h6m36 0h2m38 0h2m8 0h2m25 0h2m5 0h2m23 0h3m4 0h3m9 0h3m9 0h2m21 0h3m12 0h1m14 0h2m11 0h2m4 0h4m34 0h2m18 0h2m5 0h2m15 0h3m5 0h2m33 0h2m50 0h2m47 0h2m21 0h4m9 0h2m10 0h1m4 0h2m16 0h2m56 0h2m50 0h3m7 0h2m8 0h2m11 0h2m10 0h2m9 0h1m8 0h2m3 0h3m42 0h2m8 0h2m1 0h2m8 0h2m15 0h2m7 0h1m24 0h3m3 0h2m42 0h2m12 0h1m2 0h2m13 0h2m1 0h2m4 0h2m7 0h3m13 0h2M112 147h2m20 0h2m47 0h2m4 0h1m16 0h2m7 0h2m9 0h2m3 0h2m25 0h2m3 0h3m4 0h5m24 0h2m24 0h1m6 0h4m6 0h2m3 0h4m3 0h4m31 0h2m20 0h2m4 0h2m18 0h2m61 0h2m14 0h2m7 0h3m43 0h1m43 0h4m3 0h2m10 0h3m6 0h4m6 0h3m56 0h2m9 0h2m20 0h2m2 0h2m9 0h3m5 0h2m18 0h3m9 0h2m39 0h2m1 0h2m3 0h2m22 0h3m3 0h3m4 0h4m2 0h2m9 0h2m10 0h2m14 0h3m12 0h3m5 0h4m8 0h2m49 0h3m24 0h2m1 0h4m25 0h2M143 151h2m33 0h3m2 0h2m26 0h3m16 0h1m4 0h5m15 0h5m23 0h2m9 0h2m5 0h3m16 0h5m7 0h1m44 0h2m6 0h1m3 0h2m28 0h4m86 0h1m8 0h2m27 0h3m5 0h2m24 0h1m33 0h1m8 0h2m6 0h2m16 0h3m37 0h2m6 0h2m17 0h4m62 0h2m17 0h2m34 0h2m7 0h2m7 0h3m7 0h2m1 0h2m75 0h3m17 0h2m6 0h2m68 0h2m3 0h2m2 0h2m13 0h2m8 0h2M128 155h2m93 0h2m19 0h2m20 0h2m24 0h2m2 0h2m1 0h2m22 0h2m22 0h2m2 0h3m57 0h2m4 0h2m29 0h3m9 0h2m25 0h3m12 0h2m5 0h1m3 0h3m2 0h2m5 0h5m29 0h2m3 0h2m8 0h2m5 0h1m2 0h3m9 0h2m65 0h2m1 0h3m17 0h3m3 0h2m3 0h1m2 0h3m7 0h2m9 0h2m14 0h2m13 0h3m5 0h3m8 0h2m8 0h2m2 0h3m5 0h2m58 0h3m10 0h2m20 0h2m17 0h2m47 0h2m46 0h4m6 0h2m1 0h3m18 0h3m21 0h3M96 159h2m4 0h2m8 0h2m8 0h2m4 0h2m10 0h2m12 0h2m22 0h3m30 0h3m1 0h2m58 0h3m42 0h3m4 0h3m17 0h4m9 0h2m6 0h2m30 0h2m6 0h3m6 0h6m1 0h2m3 0h2m22 0h3m2 0h2m38 0h4m16 0h2m8 0h2m15 0h5m17 0h2m25 0h2m7 0h1m6 0h3m9 0h2m39 0h2m13 0h3m36 0h1m17 0h2m34 0h5m9 0h3m26 0h2m40 0h3m39 0h2m3 0h2m4 0h2m20 0h3m48 0h2m18 0h2m2 0h2m45 0h2m7 0h3m11 0h2M96 163h2m24 0h2m12 0h2m2 0h2m1 0h2m14 0h3m42 0h2m2 0h6m1 0h2m11 0h2m8 0h2m12 0h2m9 0h3m11 0h1m1 0h2m2 0h2m30 0h2m10 0h3m17 0h2m2 0h5m4 0h2m15 0h2m3 0h2m3 0h2m19 0h3m8 0h2m13 0h2m1 0h4m7 0h3m7 0h2m9 0h2m5 0h4m14 0h2m13 0h1m3 0h3m12 0h2m5 0h3m5 0h4m5 0h2m20 0h2m14 0h4m7 0h2m4 0h3m14 0h2m15 0h2m2 0h2m19 0h3m5 0h2m10 0h3m9 0h2m10 0h4m17 0h2m33 0h2m8 0h2m40 0h2m16 0h4m9 0h2m12 0h3m3 0h2m32 0h2m4 0h2m2 0h2m26 0h2m16 0h3m4 0h2m44 0h2m6 0h3m21 0h2m7 0h2m17 0h2m2 0h2M96 167h2m16 0h2m14 0h3m7 0h2m36 0h3m17 0h2m4 0h4m3 0h3m1 0h2m6 0h2m1 0h2m10 0h2m37 0h1m1 0h2m11 0h2m26 0h3m31 0h2m4 0h2m6 0h2m30 0h2m11 0h2m51 0h2m23 0h2m5 0h2m16 0h2m56 0h2m18 0h2m32 0h2m13 0h4m3 0h3m21 0h2m24 0h3m37 0h2m26 0h2m11 0h2m10 0h2m5 0h2m25 0h2m1 0h3m5 0h2m1 0h3m25 0h2m13 0h2m6 0h2m2 0h2m19 0h2m2 0h2m43 0h2m38 0h2m19 0h1m1 0h2m4 0h3m9 0h2m6 0h2m11 0h2M114 171h2m6 0h2m4 0h5m10 0h2m14 0h3m19 0h2m13 0h4m15 0h2m21 0h2m15 0h5m52 0h2m35 0h5m54 0h3m8 0h2m8 0h2m6 0h4m2 0h2m15 0h2m36 0h2m7 0h2m4 0h3m29 0h2m17 0h2m10 0h3m11 0h6m36 0h2m11 0h2m24 0h3m16 0h4m12 0h2m21 0h2m9 0h2m1 0h2m4 0h2m1 0h3m26 0h2m2 0h3m32 0h2m21 0h1m19 0h3m45 0h2m4 0h2m15 0h2m20 0h2m18 0h2m57 0h3m11 0h2m4 0h2m5 0h8M112 175h2m20 0h2m72 0h3m12 0h2m13 0h2m15 0h3m34 0h2m33 0h3m21 0h3m4 0h2m61 0h2m6 0h2m8 0h2m10 0h2m13 0h2m23 0h2m1 0h2m11 0h2m1 0h3m42 0h2m24 0h1m8 0h2m2 0h2m28 0h2m15 0h2m2 0h2m102 0h2m1 0h3m11 0h2m13 0h2m35 0h4m5 0h2m14 0h1m3 0h4m33 0h2m10 0h2m19 0h2m12 0h3m42 0h2m46 0h2m18 0h2m9 0h4m3 0h3m13 0h2M96 179h2m14 0h4m27 0h2m26 0h3m4 0h5m3 0h2m8 0h2m17 0h2m6 0h2m10 0h3m9 0h5m33 0h3m24 0h2m13 0h3m19 0h5m4 0h2m40 0h2m11 0h2m6 0h2m22 0h2m1 0h3m20 0h2m8 0h3m3 0h3m4 0h2m11 0h2m9 0h2m37 0h2m63 0h2m6 0h4m7 0h2m13 0h3m7 0h3m41 0h2m54 0h2m13 0h2m2 0h3m34 0h2m14 0h2m4 0h2m27 0h3m52 0h2m11 0h2m6 0h3m24 0h2m26 0h2m6 0h4m39 0h2M112 183h2m22 0h2m5 0h2m12 0h2m9 0h3m52 0h2m50 0h2m15 0h2m68 0h3m22 0h2m3 0h2m19 0h2m4 0h2m6 0h4m3 0h2m30 0h2m60 0h4m3 0h3m17 0h2m37 0h2m26 0h2m6 0h2m21 0h3m75 0h2m12 0h2m44 0h2m29 0h2m20 0h2m3 0h2m12 0h3m3 0h2m8 0h3m10 0h2m19 0h2m28 0h3m13 0h3m14 0h2m24 0h2m20 0h2M107 187h2m3 0h2m43 0h5m9 0h3m4 0h3m5 0h2m18 0h2m15 0h2m10 0h3m9 0h2m3 0h2m1 0h3m19 0h1m7 0h3m17 0h2m23 0h2m60 0h2m6 0h2m6 0h3m16 0h4m3 0h2m12 0h5m28 0h3m51 0h3m29 0h2m59 0h2m122 0h3m54 0h2m16 0h2m50 0h3m31 0h2m41 0h2m46 0h2m18 0h2m5 0h3m38 0h4M104 191h3m40 0h3m21 0h3m4 0h3m34 0h2m32 0h5m138 0h2m33 0h2m5 0h2m3 0h2m10 0h7m2 0h2m19 0h3m7 0h2m52 0h2m20 0h2m59 0h2m11 0h2m106 0h2m58 0h2m102 0h2m6 0h2m18 0h5m56 0h2m61 0h3M114 195h2m31 0h3m102 0h2m76 0h2m134 0h2m188 0h3m122 0h2m39 0h2m49 0h3m3 0h3m21 0h2m36 0h2m19 0h3m19 0h2m31 0h6M107 199h2m38 0h3m7 0h2m4 0h3m83 0h3m6 0h2m140 0h2m11 0h2m12 0h2m14 0h2m6 0h5m2 0h2m6 0h2m411 0h3m2 0h2m39 0h3m15 0h3m71 0h3M163 203h3m49 0h2m6 0h2m24 0h3m182 0h2m7 0h2m13 0h4m63 0h3m373 0h2m56 0h3m26 0h3m13 0h2m14 0h3m8 0h3M107 207h2m38 0h3m7 0h5m1 0h3m12 0h3m40 0h2m12 0h3m9 0h5m140 0h2m40 0h2m15 0h2m72 0h3m128 0h3m237 0h2m15 0h2m31 0h3m13 0h3m19 0h2m31 0h3M186 211h2m18 0h2m13 0h2m12 0h3m63 0h3m130 0h2m17 0h3m4 0h2m4 0h2m491 0h6m1 0h2m16 0h2m2 0h3m2 0h2m9 0h2m25 0h3M157 215h2m47 0h2m41 0h3m673 0h3m38 0h2m49 0h3m18 0h3M168 219h3m64 0h3m228 0h2m494 0h3M104 223h3m301 0h3m47 0h2m486 0h3M208 227h3m74 0h3m165 0h3m510 0h2m34 0h2M221 231h2m743 0h2M993 235h2M208 239h3m24 0h3M962 243h3M408 251h3M453 255h3m230 0h3m11 0h6M408 259h3m448 0h3M178 263h3m74 0h3m413 0h3m29 0h3m153 0h3M671 267h3m26 0h3"/>
<path stroke="#183cfb" stroke-width="4" d="M314 51h1M468 59h1m69 0h2M243 63h1m70 0h1M829 67h1M125 71h1m622 0h1M1028 75h1M101 79h1m23 0h1m75 0h1m288 0h1m174 0h1m159 0h1m56 0h1m69 0h2m47 0h1M124 83h1m496 0h1m278 0h1m23 0h1m11 0h1M167 87h1m107 0h2m144 0h2m71 0h2m96 0h2m102 0h1m79 0h2m298 0h2M292 91h2m90 0h1m48 0h1m137 0h1m97 0h1m19 0h1m192 0h1m70 0h1M167 95h1m9 0h1m133 0h1m119 0h2m72 0h1m159 0h1m85 0h1m61 0h1m69 0h3m21 0h2m82 0h2M125 99h1m28 0h2m32 0h1m107 0h2m67 0h1m102 0h1m112 0h1m7 0h1m30 0h1m26 0h2m111 0h3m20 0h2M118 103h1m122 0h2m4 0h2m41 0h2m84 0h1m128 0h1m164 0h1m94 0h1m74 0h1m83 0h1m53 0h1M100 107h1m51 0h1m9 0h1m299 0h2m64 0h2m44 0h2m119 0h1m69 0h1m17 0h2m39 0h1m51 0h1m81 0h1m42 0h1m40 0h1M254 111h1m78 0h3m56 0h2m22 0h1m14 0h3m14 0h3m17 0h1m88 0h2m22 0h1m94 0h1m19 0h1m32 0h2m28 0h1m39 0h1m22 0h2m22 0h1m21 0h1m89 0h1m20 0h3m34 0h1m10 0h1m7 0h3M130 115h3m5 0h2m26 0h1m25 0h1m8 0h1m2 0h2m19 0h1m32 0h2m44 0h1m39 0h3m121 0h1m53 0h1m9 0h1m116 0h1m26 0h1m19 0h1m12 0h1m6 0h1m6 0h2m23 0h1m11 0h3m99 0h1m5 0h1m17 0h2m3 0h1m31 0h1m14 0h1m116 0h2M104 119h3m15 0h2m52 0h1m43 0h1m4 0h1m81 0h1m15 0h2m91 0h3m7 0h1m48 0h1m10 0h1m22 0h1m25 0h3m12 0h2m2 0h1m94 0h1m128 0h1m20 0h1m8 0h1m31 0h1m3 0h2m36 0h1m48 0h3m20 0h2m39 0h2m31 0h1m39 0h2m2 0h2M100 123h1m65 0h1m18 0h1m8 0h2m19 0h2m3 0h1m7 0h2m48 0h1m4 0h2m7 0h2m5 0h2m6 0h1m1 0h2m28 0h3m29 0h1m1 0h1m29 0h1m27 0h2m35 0h1m35 0h1m42 0h3m4 0h1m11 0h1m54 0h1m41 0h2m51 0h1m16 0h4m96 0h1m42 0h1m21 0h2m19 0h2m37 0h1m23 0h2m59 0h1M96 127h2m20 0h1m14 0h1m8 0h1m9 0h2m13 0h1m34 0h2m36 0h1m27 0h2m41 0h1m64 0h1m79 0h2m20 0h2m6 0h1m6 0h1m12 0h1m48 0h2m44 0h2m1 0h1m54 0h2m13 0h2m33 0h1m27 0h2m31 0h3m18 0h2m6 0h1m8 0h1m15 0h1m5 0h3m5 0h2m31 0h1m144 0h1m24 0h1m1 0h1m30 0h2M104 131h3m9 0h2m20 0h2m2 0h1m2 0h2m72 0h2m4 0h3m35 0h3m38 0h1m4 0h2m6 0h3m59 0h3m2 0h1m26 0h2m4 0h2m26 0h2m19 0h2m12 0h1m12 0h1m10 0h1m5 0h3m10 0h1m14 0h2m3 0h2m43 0h1m24 0h2m6 0h3m3 0h1m43 0h3m15 0h1m24 0h4m29 0h1m9 0h3m18 0h1m14 0h2m43 0h2m42 0h1m23 0h1m30 0h1m27 0h1m8 0h2m10 0h2m28 0h1m26 0h3m24 0h2M98 135h1m2 0h1m41 0h2m30 0h1m43 0h1m20 0h1m19 0h1m7 0h2m45 0h2m48 0h1m18 0h1m31 0h1m51 0h1m7 0h2m50 0h2m8 0h2m12 0h2m50 0h1m15 0h2m6 0h2m4 0h3m22 0h2m4 0h1m79 0h2m61 0h1m13 0h2m16 0h1m5 0h1m9 0h3m7 0h3m3 0h1m52 0h3m31 0h3m66 0h1m17 0h1m4 0h2m15 0h2m6 0h2M109 139h1m8 0h1m3 0h2m9 0h3m53 0h1m16 0h2m35 0h1m14 0h2m6 0h7m9 0h1m29 0h2m18 0h1m38 0h1m92 0h2m25 0h2m1 0h2m26 0h1m17 0h3m18 0h1m9 0h1m4 0h3m11 0h2m15 0h3m10 0h1m6 0h3m39 0h1m38 0h1m16 0h1m17 0h2m28 0h3m21 0h2m5 0h2m8 0h2m46 0h4m25 0h1m8 0h1m6 0h2m28 0h1m21 0h3m16 0h1m20 0h2m33 0h1m11 0h1m14 0h1m6 0h2M118 143h1m17 0h2m4 0h1m14 0h2m3 0h1m3 0h1m14 0h2m32 0h2m6 0h2m15 0h1m3 0h5m5 0h4m2 0h1m27 0h1m23 0h2m37 0h3m20 0h2m8 0h1m119 0h1m5 0h3m5 0h2m3 0h1m23 0h3m54 0h1m8 0h2m5 0h1m9 0h2m74 0h2m6 0h2m36 0h3m15 0h1m24 0h2m11 0h1m53 0h1m8 0h1m20 0h2m9 0h2m14 0h2m53 0h2m10 0h2m22 0h2m11 0h1m3 0h1m3 0h3m12 0h1m12 0h2m9 0h4M98 147h1m12 0h1m54 0h1m29 0h2m2 0h1m46 0h2m12 0h2m3 0h2m14 0h1m40 0h2m2 0h3m28 0h2m5 0h1m19 0h1m14 0h2m69 0h2m2 0h1m5 0h6m36 0h1m8 0h1m9 0h1m53 0h2m3 0h2m4 0h3m3 0h2m35 0h3m7 0h3m45 0h1m20 0h2m39 0h1m7 0h3m2 0h2m6 0h2m6 0h1m24 0h1m4 0h1m60 0h1m108 0h2m3 0h2m14 0h3m8 0h3m25 0h3m3 0h3M104 151h3m19 0h2m6 0h2m27 0h4m1 0h3m19 0h2m74 0h4m18 0h1m1 0h2m6 0h1m28 0h5m7 0h3m20 0h3m14 0h3m2 0h1m15 0h2m32 0h2m7 0h2m49 0h4m8 0h1m15 0h1m2 0h3m10 0h2m5 0h2m7 0h1m41 0h2m9 0h6m7 0h2m5 0h1m33 0h2m15 0h3m11 0h2m63 0h2m4 0h2m16 0h2m2 0h3m18 0h2m1 0h2m71 0h1m5 0h3m28 0h2m37 0h1m34 0h2m31 0h1m32 0h2M120 155h4m9 0h1m9 0h2m5 0h2m5 0h2m30 0h4m7 0h1m13 0h1m2 0h2m41 0h3m19 0h1m47 0h2m4 0h6m18 0h5m17 0h2m20 0h2m21 0h4m22 0h5m6 0h2m15 0h3m7 0h2m5 0h2m156 0h3m11 0h1m38 0h1m2 0h2m28 0h1m4 0h1m31 0h2m2 0h2m24 0h4m20 0h1m39 0h3m3 0h3m86 0h2m8 0h3m54 0h3m4 0h1m3 0h1M130 159h3m14 0h3m18 0h3m12 0h2m7 0h1m3 0h2m2 0h1m16 0h2m42 0h2m16 0h2m1 0h1m7 0h2m34 0h1m17 0h3m4 0h3m28 0h2m29 0h2m11 0h1m7 0h3m5 0h1m8 0h2m7 0h2m2 0h2m21 0h3m74 0h2m5 0h1m7 0h3m33 0h5m10 0h2m18 0h6m5 0h2m7 0h1m21 0h2m20 0h2m17 0h2m20 0h2m26 0h2m6 0h2m80 0h3m16 0h2m11 0h1m5 0h2m2 0h2m2 0h2m33 0h2m2 0h1m7 0h4m8 0h1m5 0h2m9 0h2m7 0h2m32 0h3M102 163h2m12 0h2m8 0h2m22 0h2m26 0h3m8 0h1m27 0h2m25 0h2m20 0h2m31 0h5m19 0h2m7 0h1m25 0h2m55 0h1m1 0h2m17 0h1m5 0h1m38 0h5m1 0h3m35 0h3m41 0h2m5 0h8m3 0h1m10 0h3m14 0h1m14 0h2m15 0h2m12 0h2m8 0h3m4 0h3m11 0h2m14 0h1m9 0h3m5 0h3m10 0h1m17 0h2m20 0h2m2 0h2m3 0h3m2 0h2m11 0h2m14 0h3m5 0h3m14 0h2m33 0h1m9 0h2m34 0h2m4 0h2m26 0h4m2 0h4m19 0h2m2 0h2m2 0h2m16 0h3m11 0h3m8 0h1m6 0h2m11 0h3M104 167h3m19 0h2m35 0h3m26 0h1m38 0h2m16 0h3m3 0h5m22 0h1m7 0h2m4 0h2m17 0h2m13 0h3m3 0h6m2 0h5m7 0h2m8 0h2m14 0h2m31 0h1m1 0h2m15 0h3m4 0h1m20 0h2m40 0h1m1 0h1m2 0h1m3 0h3m4 0h2m57 0h2m6 0h1m8 0h2m5 0h1m30 0h3m3 0h3m35 0h3m5 0h3m3 0h3m15 0h4m3 0h6m62 0h8m21 0h2m17 0h1m13 0h2m4 0h3m23 0h3m4 0h4m17 0h2m6 0h2m17 0h2m20 0h2m12 0h4m10 0h2m9 0h2m2 0h2m3 0h2m6 0h2m10 0h2m16 0h2m15 0h2m15 0h2M136 171h2m55 0h3m30 0h2m2 0h1m2 0h2m6 0h2m1 0h8m9 0h2m5 0h2m3 0h2m14 0h3m38 0h6m6 0h2m3 0h2m7 0h4m8 0h2m12 0h2m8 0h2m19 0h2m66 0h3m71 0h2m5 0h2m7 0h1m7 0h2m26 0h3m3 0h3m3 0h1m2 0h2m4 0h2m10 0h1m6 0h2m7 0h3m4 0h2m35 0h6m4 0h2m9 0h4m10 0h2m26 0h2m8 0h3m3 0h2m10 0h2m9 0h2m14 0h2m16 0h2m8 0h1m6 0h3m17 0h3m12 0h2m92 0h4m7 0h2m4 0h2m3 0h2m11 0h3m7 0h1m14 0h1m33 0h4M102 175h2m36 0h2m11 0h1m3 0h2m4 0h3m20 0h2m4 0h2m8 0h2m29 0h2m6 0h2m17 0h1m7 0h2m9 0h2m9 0h2m7 0h2m11 0h2m3 0h8m7 0h1m14 0h2m5 0h4m8 0h2m9 0h2m3 0h2m3 0h2m19 0h3m25 0h1m5 0h3m8 0h3m6 0h2m5 0h2m27 0h4m7 0h1m40 0h2m19 0h1m7 0h2m15 0h2m5 0h1m11 0h4m9 0h2m7 0h4m9 0h3m3 0h3m7 0h3m2 0h5m2 0h3m28 0h1m8 0h3m8 0h4m38 0h2m3 0h2m1 0h2m10 0h2m13 0h2m26 0h2m5 0h2m34 0h2m15 0h2m29 0h5m26 0h2m10 0h2m12 0h2m9 0h2m11 0h4m7 0h3m45 0h3M128 179h2m4 0h2m32 0h3m23 0h2m35 0h2m30 0h3m13 0h2m20 0h3m1 0h2m16 0h2m8 0h3m11 0h2m7 0h2m10 0h2m12 0h2m1 0h1m6 0h2m43 0h2m70 0h1m10 0h2m28 0h2m15 0h2m2 0h3m8 0h2m35 0h1m4 0h2m8 0h6m5 0h2m3 0h3m18 0h3m7 0h2m9 0h2m3 0h1m11 0h1m2 0h2m23 0h2m4 0h4m46 0h2m5 0h2m9 0h2m1 0h2m27 0h1m5 0h2m8 0h3m17 0h3m21 0h2m10 0h2m49 0h2m4 0h4m30 0h4m16 0h1m11 0h3m6 0h6m9 0h3m3 0h2m6 0h2M134 183h2m4 0h2m56 0h2m4 0h2m24 0h1m7 0h2m7 0h2m34 0h2m14 0h2m19 0h6m51 0h2m10 0h2m45 0h1m25 0h2m46 0h3m3 0h2m29 0h3m7 0h2m10 0h2m1 0h2m7 0h1m16 0h3m2 0h1m9 0h2m13 0h2m10 0h1m40 0h2m7 0h2m17 0h3m5 0h1m79 0h2m1 0h4m2 0h2m6 0h2m14 0h3m3 0h4m26 0h2m18 0h4m6 0h2m5 0h2m4 0h2m6 0h2m6 0h3m28 0h2m10 0h2m9 0h2m1 0h2m30 0h2m28 0h2m3 0h2m2 0h2m7 0h3m13 0h2M122 187h2m4 0h2m13 0h2m45 0h2m10 0h4m24 0h1m2 0h2m6 0h2m1 0h2m15 0h2m10 0h2m40 0h8m31 0h2m31 0h2m24 0h2m54 0h2m5 0h2m31 0h1m6 0h2m46 0h2m35 0h2m37 0h1m15 0h3m15 0h2m5 0h2m3 0h3m17 0h2m2 0h2m56 0h2m30 0h2m41 0h1m3 0h2m35 0h4m6 0h2m7 0h2m2 0h2m88 0h2m13 0h2m33 0h2m6 0h2m5 0h3m13 0h2M112 191h2m6 0h2m71 0h3m27 0h2m1 0h2m2 0h1m2 0h2m40 0h2m50 0h3m17 0h2m17 0h2m17 0h1m18 0h2m7 0h2m4 0h4m14 0h2m8 0h1m18 0h2m8 0h4m22 0h2m88 0h2m2 0h2m8 0h1m33 0h1m57 0h2m26 0h3m34 0h2m6 0h5m46 0h2m35 0h3m1 0h3m3 0h2m21 0h2m4 0h2m11 0h2m49 0h3m7 0h2m8 0h2m13 0h2m13 0h4m13 0h2m20 0h2m2 0h2m5 0h3M96 195h2m14 0h2m16 0h3m3 0h2m25 0h3m28 0h2m30 0h4m8 0h2m80 0h3m4 0h3m52 0h2m3 0h2m3 0h2m23 0h2m18 0h4m19 0h2m7 0h2m5 0h2m16 0h2m102 0h3m23 0h2m72 0h2m9 0h1m106 0h2m2 0h2m14 0h4m7 0h2m14 0h5m1 0h2m38 0h2m28 0h2m8 0h3m2 0h2m20 0h2m10 0h3m15 0h2m60 0h2m2 0h4M96 199h2m16 0h2m14 0h3m10 0h2m14 0h3m28 0h2m19 0h3m9 0h2m22 0h2m28 0h1m1 0h2m13 0h2m16 0h2m1 0h2m6 0h2m26 0h3m38 0h2m14 0h3m13 0h2m3 0h2m6 0h2m9 0h3m77 0h2m94 0h2m17 0h2m18 0h2m58 0h2m38 0h2m8 0h3m5 0h2m10 0h2m5 0h2m18 0h2m16 0h2m6 0h1m2 0h2m2 0h6m90 0h3m32 0h2m20 0h2m12 0h3m1 0h2m5 0h3m40 0h6M112 203h4m3 0h1m2 0h2m6 0h3m48 0h2m10 0h3m12 0h6m12 0h2m10 0h2m35 0h2m15 0h4m9 0h2m53 0h2m49 0h2m4 0h2m2 0h2m1 0h2m11 0h2m27 0h2m8 0h2m69 0h3m65 0h4m28 0h2m43 0h2m16 0h2m61 0h3m44 0h2m5 0h2m9 0h2m4 0h2m1 0h2m4 0h3m3 0h3m34 0h2m23 0h2m11 0h2m5 0h2m50 0h2m2 0h2m7 0h2m49 0h2m6 0h3m8 0h2M136 207h2m48 0h2m8 0h2m6 0h2m2 0h6m24 0h2m37 0h1m14 0h2m7 0h3m43 0h2m38 0h2m19 0h3m2 0h2m14 0h2m12 0h2m8 0h3m10 0h2m87 0h2m286 0h3m17 0h3m73 0h2m73 0h2m19 0h6m10 0h2m2 0h4M114 211h2m31 0h3m28 0h3m15 0h2m77 0h2m17 0h2m96 0h2m17 0h2m14 0h2m8 0h2m405 0h2m3 0h2m8 0h3m4 0h2m11 0h3m2 0h2m29 0h2m4 0h2m2 0h5m13 0h3m3 0h3m62 0h2m1 0h3m24 0h2m32 0h2M96 215h2m9 0h2m5 0h2m18 0h2m4 0h2m39 0h2m28 0h3m1 0h2m30 0h2m45 0h2m5 0h3m88 0h2m6 0h2m11 0h2m12 0h2m5 0h2m3 0h2m15 0h2m2 0h2m4 0h2m376 0h2m27 0h3m25 0h2m10 0h2m26 0h2m33 0h2m84 0h6M107 219h2m19 0h5m10 0h2m2 0h3m7 0h5m1 0h3m15 0h2m28 0h3m9 0h2m76 0h3m96 0h2m25 0h2m10 0h2m4 0h2m24 0h2m383 0h3m37 0h2m3 0h2m10 0h2m2 0h2m6 0h5m1 0h3m42 0h2m15 0h2m9 0h2m18 0h2m36 0h3M130 223h3m73 0h2m7 0h2m175 0h2m54 0h3m15 0h2m3 0h2m365 0h2m13 0h3m28 0h2m6 0h2m31 0h5m1 0h3m15 0h3m32 0h2m69 0h2m5 0h6M186 227h2m204 0h2m14 0h3m2 0h2m12 0h2m14 0h2m6 0h2m439 0h2m2 0h2m33 0h3m9 0h3m30 0h2m36 0h2m19 0h3M104 231h5m38 0h3m31 0h2m3 0h2m27 0h2m217 0h2m7 0h2m8 0h3m423 0h3m10 0h2m19 0h2m10 0h3m13 0h2m50 0h2m36 0h3m21 0h2M186 235h2m18 0h2m13 0h2m12 0h3m170 0h3m16 0h2m5 0h2m3 0h2m10 0h2m3 0h2m2 0h2m411 0h3m20 0h2m13 0h4m13 0h2m13 0h3m13 0h3m55 0h3M147 239h3m56 0h2m235 0h2m428 0h3m70 0h3m5 0h2m3 0h3m26 0h3m40 0h3M104 243h3m128 0h3m220 0h2m465 0h5m16 0h3m53 0h2m27 0h3M443 247h2m8 0h3M513 255h3m9 0h3m48 0h3m147 0h3m14 0h2m10 0h2m11 0h2m15 0h3M163 259h3m292 0h2m65 0h3m172 0h3m65 0h2m15 0h8m34 0h2m24 0h3m90 0h3m13 0h3m37 0h2M168 263h3m149 0h3m21 0h3m251 0h3m15 0h3m9 0h2m88 0h3m64 0h3m3 0h2m60 0h3m98 0h2M107 267h2m253 0h3m43 0h3m42 0h3m126 0h2m32 0h3m64 0h3m32 0h3m22 0h2m40 0h3m158 0h3m5 0h2m6 0h3m1 0h2"/>
<path stroke="#174af6" stroke-width="4" d="M486 91h1M374 95h2m164 0h2M314 99h1m590 0h1M217 103h2m196 0h1M504 107h1m28 0h2m477 0h2M241 111h2m84 0h3m54 0h1m1 0h1m16 0h1m98 0h2m29 0h2m84 0h1m128 0h1m30 0h2m120 0h2m34 0h1M124 115h1m42 0h1m22 0h2m119 0h1m5 0h3m71 0h1m197 0h1m75 0h1m31 0h1m127 0h1M260 119h1m255 0h2m163 0h2m12 0h1m27 0h2m15 0h2m62 0h2m18 0h1m114 0h2m11 0h1m31 0h2m73 0h2M120 123h2m192 0h1m292 0h3m59 0h1m25 0h1m69 0h1m117 0h1m157 0h1M102 127h2m6 0h1m117 0h2m31 0h2m15 0h1m35 0h1m59 0h2m8 0h1m6 0h1m39 0h2m35 0h1m18 0h3m15 0h1m73 0h2m88 0h1m46 0h2m61 0h2m32 0h3m17 0h1m96 0h1m6 0h1m14 0h1m25 0h1m2 0h1M240 131h1m67 0h1m107 0h1m19 0h1m68 0h1m95 0h2m7 0h3m213 0h1m59 0h2m64 0h2m24 0h1m93 0h2M153 135h1m47 0h1m39 0h2m96 0h3m103 0h2m31 0h2m22 0h2m185 0h1m58 0h1m2 0h1m19 0h2m40 0h1m84 0h2m101 0h1m57 0h2M99 139h1m93 0h1m79 0h2m32 0h1m3 0h1m61 0h1m5 0h3m29 0h2m55 0h1m36 0h1m22 0h2m62 0h2m40 0h3m12 0h1m9 0h1m14 0h2m20 0h1m24 0h4m35 0h3m50 0h1m80 0h2m21 0h2m19 0h1m27 0h2m29 0h2m25 0h2m31 0h2M100 143h1m18 0h1m57 0h1m23 0h1m19 0h2m38 0h2m15 0h1m20 0h2m19 0h3m48 0h1m1 0h1m29 0h1m17 0h2m11 0h2m6 0h3m2 0h1m39 0h3m40 0h2m10 0h1m45 0h1m35 0h2m6 0h2m82 0h1m42 0h1m103 0h3m3 0h2m63 0h2m65 0h1m6 0h2m64 0h2M101 147h1m26 0h2m37 0h1m33 0h3m17 0h2m73 0h2m9 0h2m61 0h1m32 0h1m23 0h2m7 0h1m16 0h3m24 0h1m15 0h2m37 0h3m19 0h2m17 0h3m27 0h1m19 0h1m68 0h1m10 0h2m2 0h2m9 0h2m14 0h2m16 0h2m16 0h3m49 0h1m75 0h2m65 0h2m32 0h2m6 0h2m11 0h1m2 0h1M118 151h1m14 0h1m16 0h2m24 0h1m37 0h1m97 0h2m3 0h3m46 0h2m2 0h2m96 0h1m36 0h1m7 0h3m16 0h1m7 0h2m40 0h2m17 0h4m29 0h3m6 0h4m18 0h1m3 0h1m4 0h2m30 0h2m41 0h2m1 0h3m4 0h1m5 0h1m12 0h1m18 0h2m15 0h2m2 0h2m21 0h2m63 0h1m16 0h1m13 0h1m11 0h3m13 0h1m91 0h2m17 0h2M138 155h2m23 0h3m10 0h1m6 0h3m16 0h2m17 0h2m10 0h2m19 0h1m57 0h2m40 0h2m9 0h1m37 0h1m128 0h1m7 0h3m58 0h2m2 0h2m19 0h1m7 0h3m10 0h2m4 0h3m58 0h4m7 0h1m7 0h2m5 0h2m7 0h2m19 0h1m2 0h3m21 0h2m9 0h1m17 0h1m3 0h3m43 0h3m13 0h2m9 0h2m6 0h2m25 0h1m26 0h1m16 0h2m69 0h2M114 159h2m2 0h1m6 0h1m7 0h3m6 0h1m32 0h2m27 0h2m15 0h2m24 0h2m45 0h2m2 0h1m5 0h1m10 0h2m48 0h3m4 0h1m72 0h2m15 0h2m4 0h1m15 0h2m21 0h2m11 0h2m52 0h2m28 0h1m21 0h1m7 0h3m40 0h1m74 0h3m11 0h2m13 0h2m14 0h3m68 0h1m2 0h1m12 0h2m27 0h2m41 0h2m54 0h2m17 0h3m1 0h3M176 163h1m8 0h1m10 0h2m4 0h2m10 0h1m16 0h2m49 0h1m9 0h4m2 0h1m13 0h2m16 0h2m4 0h3m27 0h2m3 0h1m31 0h1m7 0h2m55 0h1m11 0h1m5 0h1m4 0h3m22 0h2m12 0h3m9 0h1m12 0h2m31 0h1m5 0h2m20 0h3m13 0h5m53 0h2m4 0h1m3 0h3m3 0h2m15 0h2m12 0h2m21 0h5m16 0h2m33 0h2m22 0h1m15 0h3m3 0h1m21 0h2m4 0h1m15 0h1m10 0h2m30 0h3m4 0h2m65 0h1m11 0h3m9 0h2m2 0h2M110 167h2m7 0h1m16 0h2m18 0h1m18 0h1m1 0h1m11 0h1m3 0h1m58 0h2m14 0h2m5 0h2m22 0h5m1 0h2m10 0h3m38 0h2m11 0h1m7 0h3m5 0h2m62 0h2m11 0h2m56 0h1m5 0h2m2 0h1m10 0h2m12 0h2m5 0h2m10 0h3m3 0h2m4 0h1m1 0h4m11 0h1m13 0h1m1 0h1m5 0h1m4 0h2m3 0h3m9 0h1m6 0h3m44 0h6m5 0h2m13 0h4m9 0h1m16 0h4m3 0h2m3 0h2m3 0h2m5 0h2m19 0h2m12 0h4m30 0h1m9 0h4m2 0h1m29 0h2m36 0h1m22 0h3m3 0h1m22 0h3m6 0h2m58 0h2M98 171h1m12 0h1m40 0h1m64 0h2m47 0h2m7 0h4m9 0h1m5 0h2m2 0h1m6 0h2m2 0h2m33 0h3m18 0h1m4 0h1m2 0h3m11 0h2m13 0h1m24 0h2m12 0h2m35 0h3m5 0h1m6 0h1m2 0h2m2 0h2m3 0h1m18 0h1m3 0h2m8 0h2m2 0h3m22 0h2m3 0h2m7 0h1m2 0h4m28 0h3m1 0h1m5 0h1m7 0h3m4 0h4m4 0h1m10 0h3m3 0h3m5 0h2m2 0h3m5 0h3m27 0h1m9 0h3m2 0h2m24 0h2m17 0h2m19 0h2m5 0h2m5 0h2m9 0h2m28 0h1m18 0h1m18 0h1m37 0h2m9 0h2m24 0h1m25 0h2m4 0h2M111 175h1m2 0h2m4 0h2m11 0h1m37 0h3m1 0h2m4 0h2m2 0h1m14 0h1m57 0h2m22 0h3m3 0h1m9 0h1m9 0h1m6 0h2m32 0h2m17 0h2m4 0h2m3 0h3m2 0h1m28 0h3m1 0h2m39 0h2m56 0h4m39 0h3m12 0h2m12 0h1m12 0h2m16 0h1m2 0h2m76 0h6m10 0h1m9 0h3m6 0h2m22 0h4m7 0h1m2 0h3m19 0h4m92 0h1m29 0h2m14 0h1m11 0h3m32 0h2m30 0h1m3 0h3m19 0h2M130 179h3m12 0h2m6 0h1m2 0h1m9 0h1m18 0h1m16 0h2m39 0h4m8 0h6m14 0h2m4 0h2m25 0h1m6 0h2m9 0h1m52 0h3m7 0h2m67 0h2m15 0h3m32 0h6m17 0h2m5 0h2m5 0h3m9 0h2m18 0h2m11 0h2m11 0h1m4 0h5m5 0h1m7 0h2m31 0h2m11 0h2m2 0h3m37 0h3m5 0h3m13 0h1m4 0h1m9 0h2m1 0h3m5 0h2m18 0h5m2 0h2m11 0h3m5 0h2m9 0h2m17 0h1m9 0h3m18 0h2m22 0h2m3 0h1m4 0h2m6 0h2m67 0h3m25 0h1m3 0h3m1 0h2m5 0h3m8 0h1m3 0h1M109 183h1m4 0h2m2 0h1m11 0h4m19 0h1m2 0h1m14 0h3m2 0h1m4 0h2m9 0h1m28 0h2m29 0h2m1 0h3m3 0h2m7 0h3m4 0h1m11 0h1m11 0h3m1 0h2m5 0h2m16 0h2m12 0h3m2 0h2m7 0h2m5 0h1m13 0h3m2 0h1m23 0h3m30 0h1m9 0h2m7 0h2m2 0h2m30 0h2m2 0h2m2 0h1m1 0h1m13 0h2m10 0h1m7 0h2m19 0h1m5 0h2m5 0h2m8 0h3m3 0h4m13 0h3m5 0h1m4 0h2m10 0h2m7 0h2m2 0h2m2 0h1m10 0h3m35 0h2m18 0h3m2 0h2m4 0h2m8 0h4m12 0h2m11 0h2m9 0h2m2 0h5m11 0h1m4 0h2m3 0h2m83 0h2m41 0h1m50 0h3m8 0h2m3 0h2m14 0h4m3 0h2m14 0h1M104 187h3m12 0h1m6 0h2m6 0h4m24 0h1m5 0h3m21 0h1m47 0h1m8 0h3m29 0h1m27 0h2m14 0h1m30 0h2m2 0h2m12 0h2m3 0h5m33 0h4m15 0h1m47 0h2m5 0h2m27 0h2m3 0h3m5 0h2m3 0h2m12 0h2m17 0h3m2 0h3m5 0h3m1 0h1m7 0h2m15 0h6m7 0h1m7 0h6m1 0h2m10 0h3m21 0h1m16 0h1m44 0h1m7 0h1m22 0h1m10 0h2m28 0h2m16 0h1m3 0h1m2 0h2m44 0h1m9 0h2m12 0h1m14 0h2m18 0h2m6 0h3m13 0h1m2 0h2m6 0h3m14 0h4m20 0h3m39 0h2m4 0h3M107 191h2m27 0h2m4 0h1m38 0h2m9 0h1m53 0h3m6 0h3m15 0h2m13 0h2m36 0h1m3 0h2m1 0h3m48 0h1m57 0h1m28 0h2m2 0h1m11 0h3m6 0h2m2 0h2m2 0h1m15 0h2m3 0h3m31 0h3m9 0h3m36 0h3m3 0h5m9 0h2m28 0h1m2 0h2m27 0h2m9 0h3m12 0h3m26 0h1m18 0h2m10 0h1m2 0h4m14 0h1m11 0h2m14 0h2m5 0h2m5 0h2m6 0h2m2 0h6m14 0h3m25 0h2m22 0h3m3 0h3m5 0h2m17 0h1m19 0h1m38 0h3m6 0h1m8 0h3M118 195h1m26 0h2m10 0h2m9 0h3m4 0h1m7 0h2m8 0h1m12 0h2m3 0h3m35 0h3m3 0h3m8 0h2m2 0h3m50 0h3m32 0h2m14 0h2m8 0h1m21 0h2m5 0h2m28 0h4m11 0h2m60 0h2m8 0h2m8 0h2m29 0h3m29 0h1m12 0h3m3 0h2m10 0h3m6 0h2m2 0h3m44 0h1m47 0h1m4 0h1m18 0h2m2 0h1m12 0h2m17 0h2m25 0h1m11 0h2m34 0h2m9 0h3m5 0h2m3 0h2m12 0h2m2 0h4m2 0h5m28 0h1m36 0h6m25 0h1M104 199h3m68 0h1m5 0h2m3 0h2m18 0h5m4 0h2m4 0h2m12 0h3m3 0h2m39 0h1m7 0h2m47 0h3m5 0h2m62 0h2m8 0h2m11 0h2m5 0h1m39 0h3m16 0h2m23 0h3m2 0h2m39 0h3m13 0h1m15 0h1m15 0h1m10 0h2m18 0h3m17 0h1m19 0h2m74 0h2m11 0h2m52 0h1m7 0h2m16 0h3m7 0h2m6 0h2m9 0h2m2 0h4m80 0h3m20 0h2m28 0h2m7 0h3m8 0h2m4 0h2M104 203h3m13 0h2m49 0h3m1 0h1m2 0h3m5 0h2m2 0h2m6 0h2m2 0h2m17 0h2m5 0h2m16 0h1m13 0h1m9 0h3m4 0h1m1 0h2m34 0h2m25 0h2m60 0h7m8 0h2m20 0h2m4 0h1m36 0h2m20 0h1m54 0h1m9 0h1m47 0h1m61 0h2m35 0h3m58 0h2m60 0h2m20 0h3m24 0h1m12 0h2m20 0h5m40 0h2m7 0h2m1 0h2m15 0h2m46 0h4M119 207h1m2 0h2m16 0h2m43 0h1m3 0h1m36 0h2m13 0h2m1 0h2m39 0h4m7 0h2m22 0h3m2 0h1m56 0h2m42 0h1m20 0h1m16 0h2m3 0h2m148 0h1m17 0h3m7 0h2m14 0h2m137 0h2m23 0h2m1 0h4m43 0h6m3 0h2m4 0h2m15 0h2m6 0h2m2 0h2m11 0h2m18 0h2m10 0h2m4 0h2m21 0h2m5 0h2m16 0h3m51 0h2M104 211h5m7 0h2m4 0h2m29 0h1m39 0h1m8 0h2m26 0h1m16 0h5m8 0h3m29 0h2m123 0h2m37 0h2m65 0h1m89 0h2m140 0h2m47 0h2m14 0h4m9 0h1m7 0h2m4 0h2m7 0h3m14 0h3m6 0h1m5 0h2m4 0h2m21 0h2m15 0h2m3 0h2m38 0h2m10 0h2m6 0h2m1 0h2m2 0h2m21 0h2m16 0h2m19 0h2m6 0h2M104 215h3m15 0h2m30 0h2m34 0h2m34 0h2m3 0h2m8 0h2m40 0h2m104 0h2m20 0h2m23 0h3m4 0h2m3 0h3m11 0h2m5 0h2m153 0h2m21 0h2m184 0h1m15 0h2m66 0h2m9 0h2m9 0h2m5 0h3m23 0h2m21 0h2m11 0h2m10 0h3m4 0h1m1 0h2M104 219h3m9 0h2m18 0h2m12 0h2m52 0h2m2 0h3m10 0h2m7 0h1m2 0h2m44 0h2m2 0h2m7 0h2m2 0h2m7 0h2m47 0h2m68 0h3m14 0h1m6 0h3m5 0h2m67 0h3m251 0h2m105 0h2m4 0h4m2 0h2m7 0h2m59 0h2m2 0h2m5 0h2m33 0h2m10 0h1m2 0h2m16 0h2m16 0h3M128 223h2m4 0h2m54 0h2m4 0h4m21 0h2m3 0h2m51 0h2m11 0h2m117 0h2m112 0h3m318 0h3m20 0h2m8 0h3m4 0h2m13 0h2m8 0h2m21 0h2m3 0h2m56 0h2m15 0h2m31 0h2m8 0h2m9 0h2m4 0h2m2 0h2M96 227h2m4 0h2m8 0h2m16 0h3m1 0h2m7 0h2m12 0h2m52 0h3m76 0h2m13 0h2m132 0h2m422 0h3m13 0h3m19 0h4m29 0h2m46 0h2m28 0h2m10 0h2m5 0h3m4 0h3m12 0h6m6 0h3M96 231h2m4 0h2m8 0h2m8 0h2m30 0h2m33 0h1m8 0h2m23 0h2m16 0h2m4 0h2m34 0h2m126 0h2m4 0h2m5 0h2m1 0h4m416 0h4m18 0h2m13 0h2m8 0h2m13 0h2m57 0h2m34 0h6m4 0h2m4 0h3m1 0h2m21 0h2m2 0h2m4 0h4M128 235h2m4 0h2m4 0h2m12 0h2m34 0h2m19 0h3m78 0h2m130 0h2m5 0h2m4 0h2m6 0h3m10 0h2m406 0h2m16 0h2m12 0h2m56 0h2m8 0h2m14 0h2m20 0h2m8 0h2m4 0h3m6 0h2m7 0h3m16 0h2m3 0h3m7 0h2M114 239h2m18 0h2m50 0h2m10 0h2m4 0h2m9 0h2m9 0h2m10 0h2m65 0h2m117 0h2m19 0h2m22 0h2m413 0h2m12 0h2m1 0h4m109 0h2m11 0h1m10 0h3m3 0h2m5 0h2m9 0h3m3 0h2m2 0h2M112 243h4m27 0h2m70 0h2m75 0h4m112 0h3m26 0h2m4 0h2m26 0h2m423 0h4m1 0h2m18 0h2m36 0h3m4 0h2m20 0h3m29 0h3m34 0h2m6 0h3m4 0h4M400 247h2m46 0h3m5 0h2M400 251h2m25 0h2m8 0h4m2 0h2m3 0h3M392 255h2m23 0h4m16 0h2m4 0h2m11 0h2m8 0h2m62 0h2m30 0h2m43 0h6m17 0h2m5 0h3m13 0h6m7 0h3m9 0h3m25 0h2m41 0h2m1 0h3m21 0h2m3 0h2m26 0h4m249 0h3M107 259h2m21 0h3m1 0h2m21 0h2m12 0h3m7 0h2m3 0h2m70 0h2m70 0h2m7 0h3m87 0h2m8 0h2m7 0h3m9 0h2m16 0h2m14 0h2m47 0h2m2 0h3m14 0h2m16 0h5m35 0h2m10 0h6m1 0h2m7 0h3m92 0h2m8 0h2m38 0h4m7 0h2m3 0h2m36 0h2m70 0h2m20 0h3m13 0h3m69 0h3m10 0h2m9 0h2m21 0h2M96 263h2m9 0h2m5 0h2m31 0h3m7 0h5m1 0h3m40 0h2m7 0h2m4 0h2m29 0h2m21 0h2m8 0h3m24 0h2m94 0h3m2 0h2m12 0h2m5 0h2m24 0h2m19 0h3m3 0h3m55 0h2m35 0h5m23 0h3m50 0h2m41 0h2m23 0h2m73 0h2m1 0h4m9 0h2m3 0h2m20 0h2m12 0h3m13 0h3m31 0h2m6 0h2m8 0h3m15 0h3m7 0h3m31 0h2m36 0h3m1 0h3m24 0h3M112 267h2m20 0h2m21 0h2m19 0h3m34 0h2m4 0h2m12 0h3m9 0h7m9 0h3m64 0h2m1 0h3m3 0h3m7 0h2m7 0h2m83 0h2m80 0h3m34 0h2m66 0h2m2 0h6m1 0h2m13 0h3m44 0h3m67 0h3m103 0h3m10 0h2m37 0h3m15 0h3m50 0h2m27 0h3m28 0h3"/>
<path stroke="#135bea" stroke-width="4" d="M695 87h1M109 115h1m213 0h2m179 0h1M101 123h1m850 0h1M524 127h1m226 0h1m131 0h1m25 0h2M133 131h1m239 0h1m195 0h2m18 0h1m87 0h1m45 0h2m23 0h1m103 0h1m105 0h1M415 135h1m88 0h1m84 0h1m426 0h1M163 139h3m74 0h1m252 0h1m127 0h1m55 0h1m32 0h2m128 0h1M193 143h1m2 0h2m326 0h1m36 0h1m43 0h1m120 0h3m75 0h2m35 0h2m47 0h1M304 147h1m77 0h2m122 0h1m26 0h2m10 0h2m112 0h1m178 0h2m66 0h1m63 0h2M464 151h2m98 0h2m64 0h2m38 0h1m142 0h1m10 0h1m38 0h3m87 0h1m27 0h1M119 155h1m20 0h2m39 0h2m5 0h1m84 0h2m104 0h3m9 0h1m146 0h2m81 0h1m67 0h1m73 0h2m48 0h1m109 0h1m12 0h1m49 0h2m71 0h2M167 159h1m188 0h2m117 0h1m29 0h1m32 0h2m2 0h1m14 0h2m39 0h3m44 0h2m36 0h3m3 0h1m7 0h3m21 0h2m17 0h2m37 0h2m28 0h2m15 0h1m3 0h3m43 0h1m11 0h2m4 0h2M110 163h1m13 0h1m186 0h1m64 0h1m2 0h3m3 0h1m5 0h1m41 0h1m72 0h1m13 0h2m50 0h2m32 0h1m36 0h2m32 0h1m3 0h2m62 0h2m1 0h1m42 0h2m7 0h2m27 0h1m53 0h1m21 0h1m17 0h1m28 0h1m21 0h2m52 0h1m12 0h1m28 0h2M118 167h1m48 0h1m17 0h1m125 0h1m37 0h2m40 0h1m10 0h2m25 0h2m16 0h1m46 0h2m4 0h2m3 0h1m53 0h2m1 0h2m5 0h3m34 0h1m83 0h2m3 0h1m13 0h1m13 0h2m20 0h2m1 0h7m58 0h1m11 0h1m10 0h2m143 0h1m52 0h1m6 0h1M214 171h1m4 0h1m8 0h2m1 0h2m46 0h2m44 0h1m10 0h3m21 0h2m4 0h2m8 0h1m8 0h1m149 0h3m2 0h2m5 0h3m9 0h2m128 0h1m5 0h2m40 0h2m21 0h3m2 0h3m25 0h4m17 0h2m10 0h1m20 0h2m19 0h1m61 0h1m31 0h3m1 0h2m40 0h2m49 0h2M110 175h1m14 0h1m4 0h3m95 0h2m16 0h3m3 0h2m7 0h2m12 0h2m56 0h6m5 0h3m29 0h1m34 0h2m14 0h2m12 0h1m34 0h2m6 0h2m10 0h2m8 0h1m21 0h2m12 0h1m2 0h2m40 0h1m1 0h1m20 0h3m63 0h1m4 0h2m3 0h3m3 0h2m1 0h2m9 0h2m4 0h4m7 0h2m8 0h2m2 0h2m3 0h3m3 0h1m29 0h1m9 0h3m2 0h2m16 0h2m3 0h2m8 0h1m74 0h2m4 0h2m21 0h1m5 0h1m25 0h3m14 0h2m20 0h1m24 0h1m41 0h2M107 179h2m7 0h2m7 0h1m99 0h1m51 0h2m41 0h3m7 0h2m4 0h3m5 0h3m13 0h5m12 0h2m7 0h1m19 0h2m3 0h2m16 0h2m25 0h2m6 0h2m34 0h2m3 0h1m22 0h2m5 0h3m7 0h2m5 0h2m1 0h2m5 0h2m2 0h1m7 0h2m14 0h2m2 0h4m5 0h1m11 0h1m11 0h1m19 0h2m4 0h3m27 0h3m10 0h1m1 0h2m3 0h3m15 0h4m4 0h2m2 0h2m14 0h2m1 0h3m65 0h2m3 0h1m7 0h1m13 0h2m2 0h1m84 0h1m1 0h1m29 0h2m8 0h1m2 0h1m53 0h3M175 183h1m1 0h1m5 0h2m5 0h2m10 0h2m16 0h1m10 0h2m21 0h1m3 0h2m13 0h2m23 0h1m8 0h1m3 0h1m5 0h3m6 0h1m5 0h1m3 0h6m14 0h2m10 0h2m6 0h1m23 0h2m9 0h2m24 0h2m36 0h1m2 0h2m1 0h3m10 0h2m2 0h2m38 0h2m3 0h2m9 0h1m51 0h1m9 0h3m5 0h3m29 0h3m4 0h2m1 0h3m2 0h3m9 0h7m6 0h1m6 0h3m2 0h1m16 0h1m7 0h2m14 0h2m6 0h2m36 0h2m37 0h2m4 0h1m2 0h1m3 0h2m3 0h1m24 0h2m74 0h1m27 0h1m75 0h2M96 187h2m42 0h2m14 0h1m9 0h1m47 0h1m10 0h1m44 0h3m2 0h2m22 0h2m31 0h1m6 0h3m7 0h5m4 0h2m5 0h1m7 0h1m3 0h2m5 0h1m18 0h3m39 0h2m6 0h5m10 0h1m9 0h2m6 0h1m17 0h1m2 0h2m46 0h2m5 0h2m2 0h1m15 0h2m6 0h2m2 0h2m7 0h1m2 0h4m33 0h2m20 0h1m3 0h1m1 0h3m15 0h1m6 0h1m1 0h5m6 0h1m2 0h2m9 0h2m1 0h3m2 0h2m16 0h2m6 0h3m6 0h2m3 0h2m15 0h3m2 0h6m7 0h2m10 0h2m2 0h2m2 0h1m13 0h3m3 0h1m2 0h2m2 0h3m32 0h2m11 0h2m12 0h2m29 0h3m65 0h2m18 0h1M116 191h2m10 0h2m22 0h1m4 0h5m15 0h1m62 0h1m13 0h1m15 0h3m6 0h2m17 0h1m9 0h1m6 0h8m9 0h1m3 0h6m20 0h4m4 0h1m18 0h2m11 0h1m3 0h2m85 0h1m13 0h6m9 0h1m1 0h1m5 0h2m1 0h2m19 0h1m2 0h2m5 0h2m10 0h3m11 0h2m13 0h1m28 0h6m5 0h2m2 0h7m10 0h4m4 0h2m2 0h3m2 0h3m8 0h3m3 0h3m6 0h1m11 0h2m2 0h1m7 0h4m22 0h1m16 0h2m40 0h2m18 0h2m3 0h1m2 0h1m19 0h3m37 0h1m8 0h2m6 0h1m13 0h1m46 0h2M100 195h2m20 0h2m28 0h1m14 0h1m8 0h2m3 0h2m2 0h1m29 0h2m2 0h1m43 0h3m24 0h2m2 0h2m5 0h3m45 0h2m14 0h1m6 0h1m4 0h2m10 0h2m12 0h1m82 0h4m48 0h2m19 0h2m15 0h3m28 0h3m5 0h1m11 0h3m15 0h2m16 0h2m1 0h4m8 0h3m9 0h2m4 0h1m19 0h1m1 0h3m2 0h2m18 0h2m7 0h3m8 0h2m3 0h2m18 0h3m4 0h2m2 0h3m6 0h1m2 0h2m1 0h2m10 0h1m3 0h3m1 0h2m7 0h1m12 0h6m22 0h2m31 0h2m63 0h2m20 0h2m8 0h2m18 0h1m11 0h1M118 199h1m57 0h1m17 0h2m4 0h1m13 0h1m37 0h2m1 0h3m27 0h3m10 0h1m77 0h6m5 0h2m14 0h1m11 0h1m3 0h2m2 0h1m9 0h1m5 0h2m35 0h2m2 0h1m21 0h4m4 0h3m9 0h1m1 0h1m17 0h1m11 0h1m7 0h2m2 0h1m2 0h2m10 0h1m8 0h2m2 0h2m9 0h1m39 0h2m2 0h1m6 0h4m5 0h1m3 0h1m16 0h3m8 0h1m45 0h2m4 0h2m19 0h1m28 0h1m6 0h3m7 0h2m4 0h2m2 0h3m14 0h1m47 0h1m14 0h1m32 0h2m25 0h2m2 0h2m21 0h2m33 0h1m5 0h1m11 0h1M96 203h2m9 0h2m29 0h4m20 0h1m5 0h3m5 0h2m7 0h1m57 0h1m3 0h2m5 0h4m25 0h2m27 0h2m3 0h3m24 0h3m18 0h1m2 0h2m6 0h1m46 0h1m32 0h2m6 0h2m3 0h2m4 0h1m4 0h1m5 0h1m7 0h4m24 0h2m9 0h2m5 0h3m14 0h2m61 0h1m1 0h2m3 0h1m4 0h2m3 0h3m19 0h1m38 0h2m8 0h1m20 0h2m9 0h2m24 0h2m61 0h4m10 0h1m5 0h2m1 0h1m29 0h1m3 0h2m12 0h1m5 0h1m42 0h3m14 0h2m8 0h2m8 0h2m26 0h3m26 0h1m24 0h4m6 0h2M114 207h2m12 0h2m3 0h1m37 0h3m3 0h1m14 0h1m24 0h2m35 0h1m50 0h2m26 0h3m15 0h3m22 0h1m27 0h2m33 0h3m33 0h1m28 0h1m11 0h2m5 0h2m29 0h1m43 0h3m25 0h2m2 0h2m17 0h1m3 0h3m5 0h2m47 0h2m47 0h1m3 0h2m11 0h2m44 0h3m15 0h1m8 0h2m15 0h2m16 0h2m5 0h1m27 0h2m20 0h2m16 0h3m3 0h1m65 0h4m26 0h1m14 0h2M98 211h1m2 0h1m10 0h2m36 0h2m5 0h5m1 0h4m9 0h1m8 0h1m3 0h3m48 0h1m64 0h2m10 0h3m6 0h1m44 0h1m49 0h2m1 0h2m15 0h2m32 0h1m11 0h3m10 0h2m20 0h1m2 0h3m88 0h3m2 0h1m6 0h4m17 0h1m27 0h1m156 0h2m4 0h1m2 0h1m8 0h4m6 0h4m43 0h4m157 0h2M118 215h4m23 0h2m16 0h3m5 0h3m2 0h1m1 0h3m5 0h2m16 0h2m29 0h3m5 0h1m8 0h2m4 0h2m8 0h2m11 0h1m10 0h2m5 0h2m3 0h1m82 0h2m17 0h2m33 0h1m51 0h1m30 0h4m91 0h1m1 0h1m6 0h2m7 0h3m21 0h2m53 0h1m82 0h1m24 0h1m44 0h2m21 0h2m12 0h1m2 0h2m43 0h2m3 0h3m6 0h2m18 0h7m4 0h2m13 0h3m9 0h1m32 0h2m13 0h2M99 219h1m12 0h2m19 0h1m28 0h1m3 0h1m8 0h1m1 0h4m5 0h2m2 0h2m25 0h2m7 0h2m18 0h1m2 0h3m14 0h2m20 0h2m4 0h2m12 0h1m38 0h2m43 0h2m17 0h2m16 0h2m27 0h2m15 0h1m4 0h4m2 0h1m37 0h1m101 0h1m33 0h1m16 0h1m61 0h1m38 0h1m50 0h1m19 0h2m2 0h3m12 0h1m10 0h3m52 0h2m1 0h1m36 0h2m10 0h2m18 0h2m8 0h1m3 0h3m26 0h2m4 0h4M111 223h1m7 0h3m46 0h6m1 0h1m5 0h4m32 0h2m16 0h3m3 0h2m3 0h1m41 0h2m11 0h3m1 0h2m106 0h2m4 0h2m15 0h1m4 0h2m4 0h1m12 0h2m61 0h1m137 0h2m196 0h3m20 0h1m5 0h3m18 0h2m10 0h2m53 0h2m1 0h2m23 0h2m11 0h3m15 0h6m18 0h2M98 227h1m5 0h3m4 0h1m21 0h1m13 0h3m3 0h1m14 0h3m5 0h1m12 0h1m2 0h2m26 0h1m2 0h2m6 0h2m10 0h1m35 0h2m7 0h1m5 0h4m108 0h2m13 0h2m6 0h2m3 0h2m9 0h2m9 0h2m4 0h4m59 0h3m132 0h1m172 0h1m15 0h2m22 0h3m1 0h2m3 0h1m22 0h1m1 0h2m40 0h3m10 0h4m4 0h2m2 0h2m3 0h2m12 0h2m9 0h2m11 0h6m26 0h4M111 231h1m21 0h1m2 0h2m7 0h2m3 0h2m1 0h1m12 0h1m8 0h2m16 0h3m10 0h2m27 0h3m8 0h1m2 0h3m38 0h2m7 0h2m105 0h2m11 0h2m5 0h1m4 0h2m4 0h4m10 0h2m7 0h4m7 0h2m2 0h1m49 0h3m354 0h1m22 0h1m22 0h2m4 0h2m38 0h2m2 0h1m12 0h2m4 0h2m3 0h2m23 0h1m10 0h3m3 0h2M107 235h2m10 0h3m25 0h5m7 0h3m19 0h2m25 0h3m12 0h2m5 0h1m2 0h2m6 0h2m3 0h1m7 0h1m30 0h3m1 0h1m8 0h3m105 0h2m35 0h2m396 0h2m20 0h3m51 0h2m35 0h2m6 0h3m9 0h2m12 0h3m17 0h2m16 0h1m17 0h2m13 0h2m7 0h2M119 239h5m16 0h2m8 0h2m38 0h2m1 0h1m94 0h1m10 0h2m99 0h2m2 0h4m3 0h2m4 0h2m15 0h2m5 0h1m29 0h2m50 0h1m1 0h3m351 0h3m37 0h4m16 0h2m8 0h3m10 0h3m3 0h2m2 0h4m3 0h2m3 0h2m20 0h2m21 0h2m16 0h4m8 0h2M102 243h2m3 0h2m7 0h2m12 0h3m7 0h2m3 0h2m28 0h1m18 0h2m25 0h2m7 0h1m15 0h1m38 0h3m2 0h2m125 0h2m106 0h3m351 0h3m10 0h4m9 0h1m9 0h4m15 0h2m5 0h2m11 0h2m35 0h6m7 0h2m2 0h2m7 0h3m9 0h2m16 0h4m25 0h2M404 247h2m30 0h1m8 0h2m4 0h2m7 0h2m4 0h2m3 0h2m434 0h2M411 251h2m11 0h2m10 0h1m10 0h1m3 0h5M400 255h2m19 0h2m1 0h2m8 0h2m9 0h2m11 0h2m9 0h2m5 0h4m22 0h2m6 0h3m32 0h2m25 0h2m18 0h4m5 0h2m3 0h1m12 0h1m12 0h2m11 0h2m16 0h2m9 0h2m16 0h2m41 0h2m23 0h3m8 0h2m6 0h2m12 0h2m19 0h2m4 0h2M122 259h2m16 0h2m1 0h2m9 0h2m42 0h2m21 0h2m3 0h2m10 0h2m12 0h2m40 0h2m16 0h2m9 0h2m8 0h3m6 0h2m77 0h2m8 0h2m43 0h2m18 0h2m18 0h2m39 0h2m3 0h2m39 0h1m12 0h3m13 0h2m37 0h3m12 0h3m8 0h1m19 0h4m19 0h2m1 0h2m28 0h3m5 0h2m17 0h2m18 0h2m21 0h1m12 0h3m14 0h3m10 0h2m21 0h2m6 0h2m6 0h3m11 0h2m13 0h4m8 0h2m10 0h1m33 0h2m15 0h2m18 0h2m8 0h2m7 0h6M134 263h2m4 0h2m1 0h2m45 0h2m1 0h1m4 0h2m8 0h3m19 0h1m4 0h5m4 0h2m37 0h2m20 0h2m20 0h3m2 0h1m9 0h2m18 0h3m3 0h2m17 0h2m17 0h2m11 0h2m16 0h2m6 0h2m9 0h2m11 0h2m7 0h2m18 0h2m7 0h2m7 0h2m7 0h5m25 0h2m2 0h2m8 0h2m19 0h4m7 0h3m20 0h2m14 0h1m15 0h3m31 0h2m8 0h3m7 0h2m28 0h2m3 0h2m16 0h2m3 0h2m25 0h4m1 0h2m42 0h2m10 0h3m25 0h2m15 0h4m4 0h2m28 0h2m2 0h3m10 0h2m54 0h2m6 0h3m4 0h1m25 0h4M114 267h2m24 0h2m21 0h3m24 0h2m10 0h4m20 0h2m3 0h2m5 0h2m15 0h5m15 0h2m17 0h2m5 0h3m16 0h3m28 0h3m6 0h2m25 0h2m3 0h2m35 0h4m6 0h2m15 0h4m6 0h2m1 0h2m7 0h2m7 0h3m26 0h4m8 0h2m5 0h3m5 0h2m14 0h2m3 0h2m18 0h3m14 0h2m40 0h4m45 0h2m15 0h1m27 0h2m13 0h3m21 0h2m15 0h2m5 0h2m7 0h2m3 0h2m11 0h2m14 0h1m2 0h1m39 0h2m6 0h4m9 0h4m2 0h2m6 0h2m53 0h2m34 0h2m10 0h2m18 0h2m3 0h2m6 0h2m6 0h3m4 0h4m2 0h2"/>
<path stroke="#106bdd" stroke-width="4" d="M891 107h1M243 111h1M152 119h1M970 123h2M98 127h1m578 0h1M883 131h1M406 135h2M194 139h2m612 0h1m62 0h1m86 0h1M175 143h1M403 151h1m534 0h1m75 0h2M1034 155h1M110 159h1m170 0h1m29 0h1m46 0h2m114 0h1m94 0h2m18 0h1m37 0h1m4 0h2m218 0h1m112 0h1M145 163h2m131 0h1m29 0h1m47 0h2m146 0h1m57 0h2m3 0h2m182 0h1m59 0h2m12 0h1m74 0h1M214 167h1m25 0h1m84 0h1m39 0h1m19 0h1m156 0h1m11 0h1m34 0h1m14 0h1m64 0h2m137 0h1m17 0h1m155 0h2M281 171h1m32 0h3m6 0h2m47 0h1m117 0h1m66 0h2m29 0h2m11 0h3m1 0h1m4 0h3m196 0h2m55 0h2m81 0h3m68 0h4M240 175h1m25 0h2m9 0h1m3 0h1m32 0h1m45 0h2m8 0h1m2 0h1m17 0h1m39 0h2m40 0h1m4 0h2m6 0h1m26 0h3m17 0h9m12 0h1m7 0h2m3 0h2m7 0h3m5 0h3m19 0h1m52 0h1m3 0h2m5 0h1m19 0h2m6 0h2m45 0h3m15 0h2M124 179h1m145 0h3m69 0h2m140 0h2m7 0h1m4 0h2m4 0h1m25 0h2m6 0h2m3 0h2m9 0h1m6 0h1m2 0h2m10 0h3m2 0h1m2 0h5m9 0h3m3 0h1m72 0h1m17 0h1m10 0h2m6 0h2m19 0h2m3 0h2m34 0h2m19 0h2m5 0h2M154 183h2m107 0h3m2 0h2m24 0h2m13 0h2m31 0h2m10 0h2m4 0h2m9 0h1m1 0h1m113 0h3m3 0h1m8 0h2m5 0h1m3 0h3m2 0h2m13 0h2m10 0h2m5 0h2m17 0h1m4 0h3m10 0h1m6 0h2m29 0h1m15 0h2m29 0h2m1 0h1m28 0h2m6 0h3m9 0h3m8 0h2m20 0h1m13 0h3m12 0h3m35 0h1m41 0h1m14 0h1m46 0h1M153 187h1m21 0h1m87 0h3m2 0h2m12 0h1m43 0h1m6 0h6m5 0h5m42 0h1m34 0h1m20 0h1m23 0h2m21 0h2m2 0h4m41 0h2m2 0h5m5 0h4m31 0h2m11 0h1m4 0h3m6 0h1m4 0h2m24 0h3m10 0h2m1 0h3m1 0h1m7 0h3m9 0h2m5 0h1m5 0h3m2 0h1m9 0h3m4 0h1m14 0h2m1 0h4m8 0h2m3 0h3m16 0h2m21 0h2m26 0h3m5 0h2M126 191h2m46 0h1m66 0h2m15 0h3m7 0h2m79 0h7m12 0h2m3 0h3m1 0h2m8 0h2m2 0h1m102 0h2m2 0h2m13 0h3m2 0h2m3 0h1m11 0h3m36 0h2m6 0h2m5 0h1m14 0h1m17 0h2m19 0h2m2 0h2m7 0h3m2 0h2m8 0h3m3 0h1m8 0h3m17 0h3m28 0h2m1 0h2m3 0h2m1 0h1m2 0h8m1 0h3m22 0h6m11 0h2m2 0h2m8 0h2m2 0h2m8 0h3m3 0h2m6 0h2m57 0h2m12 0h2m5 0h1m11 0h1m19 0h2m48 0h2m34 0h1M102 195h2m20 0h1m31 0h1m35 0h1m8 0h1m31 0h2m26 0h2m5 0h2m8 0h1m4 0h2m11 0h2m14 0h2m19 0h3m3 0h8m7 0h2m10 0h2m3 0h1m7 0h3m22 0h2m13 0h2m12 0h1m44 0h2m4 0h2m20 0h3m4 0h5m7 0h3m14 0h1m2 0h5m2 0h5m5 0h4m16 0h2m3 0h1m2 0h2m4 0h2m8 0h1m3 0h3m6 0h2m5 0h1m10 0h4m9 0h6m18 0h4m5 0h6m11 0h8m6 0h2m5 0h2m3 0h5m9 0h2m29 0h2m18 0h2m11 0h4m5 0h1m13 0h2m4 0h1m10 0h2m5 0h1m53 0h1m30 0h1m15 0h1m38 0h2m15 0h2m14 0h2M102 199h2m36 0h2m10 0h1m40 0h1m7 0h3m13 0h2m11 0h1m30 0h2m25 0h1m38 0h3m2 0h1m3 0h3m3 0h2m5 0h2m3 0h2m12 0h2m2 0h1m1 0h2m6 0h2m58 0h1m32 0h1m2 0h2m26 0h1m2 0h1m10 0h2m42 0h2m22 0h2m32 0h2m42 0h3m26 0h1m2 0h5m3 0h2m6 0h2m5 0h2m14 0h5m3 0h3m4 0h3m30 0h3m16 0h2m3 0h2m2 0h1m16 0h3m1 0h4m6 0h2m5 0h1m11 0h3m6 0h1m10 0h1m6 0h1m10 0h2m14 0h2m19 0h1m62 0h1m8 0h2M128 203h2m20 0h2m106 0h2m13 0h2m24 0h2m10 0h1m8 0h3m7 0h2m1 0h3m3 0h3m9 0h3m2 0h2m4 0h3m12 0h8m68 0h3m22 0h2m1 0h3m3 0h3m23 0h3m46 0h2m28 0h2m4 0h5m7 0h5m9 0h3m1 0h2m10 0h1m15 0h3m6 0h1m3 0h2m3 0h2m1 0h1m18 0h1m28 0h1m42 0h2m34 0h2m7 0h1m4 0h2m16 0h2m13 0h1m19 0h1m51 0h2m18 0h3m26 0h2m21 0h2m31 0h1m15 0h2m16 0h3M110 207h1m56 0h4m43 0h1m37 0h2m1 0h3m15 0h2m15 0h2m12 0h1m6 0h1m27 0h3m18 0h2m12 0h2m1 0h5m20 0h1m59 0h2m27 0h2m12 0h1m3 0h1m100 0h3m3 0h3m1 0h1m1 0h2m4 0h2m11 0h2m7 0h3m13 0h3m26 0h1m10 0h2m13 0h2m2 0h1m22 0h1m3 0h7m6 0h1m48 0h2m4 0h2m14 0h2m3 0h2m26 0h2m81 0h1m15 0h2m11 0h1m67 0h2m11 0h3M100 211h1m29 0h3m21 0h2m12 0h6m37 0h3m9 0h3m26 0h2m53 0h1m4 0h2m13 0h3m40 0h1m2 0h1m57 0h2m6 0h2m160 0h2m17 0h1m29 0h3m3 0h3m11 0h1m24 0h2m11 0h1m22 0h2m32 0h1m31 0h2m9 0h1m5 0h2m20 0h2m48 0h2m17 0h1m24 0h1m50 0h3m54 0h4m17 0h2m4 0h3M100 215h1m29 0h3m19 0h1m6 0h3m5 0h1m7 0h1m7 0h2m3 0h1m11 0h1m18 0h2m34 0h3m12 0h11m4 0h3m17 0h4m2 0h1m11 0h3m16 0h2m29 0h1m2 0h1m5 0h2m24 0h3m10 0h2m22 0h2m62 0h1m8 0h2m3 0h1m91 0h1m14 0h2m9 0h2m2 0h2m16 0h2m45 0h2m88 0h2m12 0h2m9 0h1m10 0h2m2 0h3m3 0h1m19 0h2m11 0h3m9 0h1m110 0h2m30 0h4M101 219h1m8 0h1m8 0h1m47 0h1m3 0h3m9 0h2m3 0h1m17 0h2m39 0h2m14 0h3m7 0h5m34 0h2m101 0h1m5 0h2m46 0h2m34 0h1m16 0h1m93 0h3m2 0h3m19 0h2m181 0h1m11 0h2m6 0h1m4 0h2m6 0h3m1 0h3m7 0h3m1 0h2m12 0h1m14 0h1m47 0h2m3 0h3m66 0h1M98 223h1m13 0h2m49 0h3m11 0h1m7 0h1m22 0h3m9 0h1m9 0h1m7 0h2m4 0h2m8 0h1m13 0h2m15 0h3m16 0h1m10 0h5m53 0h1m11 0h1m45 0h2m10 0h4m379 0h1m25 0h1m10 0h3m5 0h1m1 0h3m37 0h2m8 0h1m17 0h2m23 0h2m18 0h2m7 0h2m9 0h2m12 0h4m37 0h1m14 0h2M116 227h2m2 0h2m30 0h1m9 0h1m15 0h3m13 0h2m4 0h1m13 0h1m13 0h2m17 0h2m29 0h1m3 0h1m16 0h2m6 0h1m95 0h1m19 0h1m2 0h1m409 0h2m15 0h3m12 0h1m2 0h1m28 0h1m37 0h1m2 0h2m35 0h1m5 0h2m11 0h2m2 0h1m26 0h1m12 0h1m5 0h2m23 0h2M99 231h1m1 0h1m28 0h3m5 0h4m17 0h3m23 0h1m22 0h3m9 0h1m17 0h3m36 0h1m3 0h1m3 0h3m6 0h2m5 0h3m4 0h1m80 0h2m9 0h2m6 0h3m12 0h1m9 0h1m11 0h2m22 0h2m148 0h1m29 0h1m190 0h1m5 0h1m9 0h3m4 0h5m5 0h3m24 0h3m18 0h2m14 0h1m11 0h3m7 0h3m26 0h3m8 0h2m27 0h1m14 0h1m9 0h2M101 235h1m28 0h3m5 0h2m16 0h3m26 0h1m10 0h2m27 0h1m75 0h6m95 0h1m38 0h1m29 0h2m51 0h4m324 0h1m9 0h1m6 0h2m8 0h3m4 0h2m13 0h2m6 0h2m14 0h3m11 0h2m17 0h1m11 0h2m14 0h2m11 0h2m22 0h3m5 0h4m8 0h1m3 0h2m12 0h1m3 0h3M104 239h3m26 0h1m4 0h2m5 0h2m9 0h3m18 0h1m14 0h1m3 0h2m21 0h1m5 0h1m7 0h2m43 0h1m2 0h1m22 0h1m103 0h3m4 0h1m13 0h2m6 0h2m3 0h1m23 0h2m391 0h4m3 0h2m28 0h2m15 0h2m8 0h1m7 0h3m9 0h3m20 0h2m36 0h2m4 0h2m5 0h7m4 0h1m6 0h3m8 0h1m8 0h2m4 0h1m3 0h3m6 0h2M98 243h1m34 0h5m4 0h1m33 0h1m9 0h2m4 0h1m18 0h3m29 0h1m37 0h4m4 0h1m11 0h3m1 0h3m1 0h2m110 0h2m6 0h4m1 0h3m11 0h5m16 0h2m391 0h6m20 0h2m21 0h4m22 0h1m1 0h2m8 0h3m22 0h2m10 0h2m22 0h2m11 0h1m44 0h2m8 0h2M126 247h2m24 0h1m136 0h1m131 0h2m4 0h4m27 0h2m2 0h2m60 0h1m380 0h1m31 0h1m27 0h1m50 0h1M403 251h1m19 0h1m2 0h1m14 0h2m13 0h4M109 255h1m261 0h1m31 0h1m2 0h5m25 0h1m25 0h2m20 0h2m21 0h2m24 0h2m12 0h3m21 0h1m12 0h3m34 0h3m25 0h1m21 0h3m9 0h3m8 0h1m23 0h3m10 0h2m7 0h3m4 0h1m11 0h1m10 0h1m31 0h2m243 0h2M96 259h2m4 0h2m12 0h2m117 0h3m3 0h2m12 0h3m24 0h1m6 0h1m11 0h3m16 0h3m2 0h2m17 0h3m7 0h2m21 0h2m24 0h1m23 0h2m5 0h2m9 0h3m16 0h4m3 0h2m40 0h3m45 0h1m14 0h3m8 0h1m10 0h3m6 0h3m46 0h3m2 0h2m3 0h3m14 0h3m8 0h1m19 0h2m5 0h4m1 0h3m13 0h1m33 0h2m26 0h2m3 0h2m23 0h2m5 0h2m60 0h2m44 0h3m16 0h4m7 0h2m12 0h2m9 0h2m4 0h2m5 0h3m45 0h3M98 263h1m17 0h2m2 0h2m20 0h1m7 0h2m2 0h2m15 0h3m49 0h2m1 0h2m30 0h2m28 0h1m12 0h3m21 0h1m10 0h3m17 0h2m24 0h2m31 0h1m8 0h2m13 0h2m1 0h3m8 0h3m6 0h2m7 0h2m21 0h4m63 0h1m9 0h1m16 0h1m41 0h2m28 0h1m22 0h3m6 0h3m31 0h3m20 0h2m15 0h2m3 0h2m6 0h2m7 0h3m42 0h1m56 0h1m16 0h2m59 0h2m2 0h2m21 0h2m9 0h2m36 0h2m3 0h2M136 267h2m21 0h3m21 0h2m7 0h1m1 0h2m48 0h3m14 0h2m3 0h2m14 0h3m27 0h2m42 0h2m26 0h1m15 0h2m4 0h2m3 0h2m13 0h1m145 0h4m22 0h3m5 0h1m12 0h1m8 0h2m31 0h2m3 0h3m1 0h1m15 0h3m1 0h2m2 0h1m3 0h2m23 0h2m32 0h2m4 0h2m6 0h2m29 0h2m18 0h2m17 0h2m4 0h2m24 0h3m6 0h1m76 0h3m10 0h2m4 0h1m41 0h3m24 0h2m6 0h2"/>
<path stroke="#1079cf" stroke-width="4" d="M906 143h1m135 0h1M254 147h1M342 159h2m89 0h1m179 0h2M370 163h1m125 0h2m353 0h1M100 167h1m142 0h1m17 0h2m60 0h2m213 0h2m70 0h3m76 0h1m112 0h2M125 171h1m41 0h1m216 0h1m148 0h2m31 0h1m110 0h1m3 0h2M189 175h1m175 0h1m50 0h1m293 0h2M304 179h1m68 0h1m2 0h1m113 0h1m5 0h2m103 0h2m66 0h2m80 0h1m3 0h2m229 0h2M480 183h1m3 0h2m19 0h1m44 0h2m14 0h1m12 0h2m6 0h1m31 0h1m49 0h1m22 0h2m3 0h1m14 0h2m7 0h2m12 0h2m11 0h1m16 0h3m3 0h2m3 0h2m40 0h2m21 0h2m19 0h1M142 187h1m24 0h1m92 0h1m62 0h2m43 0h2m19 0h2m96 0h3m3 0h1m11 0h1m12 0h2m10 0h2m10 0h1m2 0h2m7 0h1m65 0h1m6 0h1m17 0h4m43 0h2m41 0h4m34 0h3m44 0h2m69 0h1m109 0h1M261 191h2m46 0h2m12 0h2m17 0h5m13 0h2m9 0h1m4 0h1m2 0h5m102 0h1m18 0h1m10 0h2m14 0h1m5 0h2m2 0h3m2 0h5m3 0h2m5 0h2m15 0h2m3 0h3m7 0h2m2 0h5m4 0h3m5 0h1m10 0h1m62 0h1m20 0h2m2 0h2m13 0h4m6 0h1m2 0h3m46 0h8m1 0h2m12 0h2m9 0h1M128 195h2m12 0h1m115 0h2m49 0h2m21 0h1m3 0h3m8 0h2m2 0h3m8 0h3m3 0h2m3 0h1m2 0h1m121 0h6m5 0h1m8 0h2m15 0h3m5 0h2m22 0h2m5 0h2m5 0h1m2 0h3m2 0h1m2 0h4m5 0h2m1 0h1m16 0h1m10 0h2m7 0h2m28 0h3m7 0h2m6 0h1m7 0h1m10 0h1m1 0h4m17 0h8m6 0h2m1 0h1m11 0h3m2 0h1m7 0h5m15 0h2m2 0h2m19 0h2M126 199h2m135 0h5m2 0h7m43 0h3m2 0h1m7 0h3m8 0h3m9 0h9m1 0h2m2 0h2m112 0h6m1 0h2m3 0h2m18 0h4m3 0h1m19 0h2m2 0h3m2 0h2m3 0h4m6 0h2m13 0h2m8 0h2m2 0h7m1 0h1m2 0h8m1 0h3m9 0h2m4 0h3m3 0h3m10 0h3m5 0h2m8 0h3m2 0h1m1 0h3m15 0h1m6 0h3m2 0h6m3 0h4m4 0h4m2 0h2m9 0h1m12 0h2m8 0h1m2 0h2m6 0h3m4 0h2m3 0h3m4 0h4m15 0h2m8 0h1m41 0h2M252 203h2m9 0h5m14 0h1m31 0h1m12 0h3m6 0h3m10 0h2m3 0h2m17 0h3m9 0h1m3 0h2m48 0h2m50 0h2m5 0h2m9 0h4m15 0h2m2 0h1m12 0h2m3 0h2m12 0h2m10 0h3m3 0h5m7 0h2m8 0h1m38 0h4m3 0h3m8 0h4m6 0h3m4 0h3m5 0h3m1 0h2m2 0h1m2 0h1m2 0h3m18 0h2m8 0h2m4 0h3m2 0h5m4 0h8m4 0h2m6 0h2m3 0h3m2 0h2m10 0h2m2 0h2m1 0h2m6 0h5m1 0h4m4 0h2m9 0h3m73 0h2m163 0h2M156 207h1m24 0h2m57 0h1m5 0h1m16 0h3m48 0h6m3 0h2m5 0h2m12 0h3m2 0h2m19 0h2m12 0h2m94 0h1m3 0h2m24 0h3m22 0h3m7 0h2m12 0h2m1 0h2m2 0h3m7 0h3m5 0h3m2 0h1m4 0h2m5 0h2m3 0h4m3 0h3m16 0h2m6 0h1m2 0h2m32 0h6m7 0h4m2 0h1m1 0h2m8 0h1m9 0h3m5 0h3m4 0h2m2 0h2m1 0h2m5 0h1m1 0h3m8 0h3m5 0h5m8 0h4m12 0h3m9 0h2m23 0h2m10 0h3m2 0h1m10 0h1m27 0h1m3 0h2m150 0h1M96 211h2m26 0h1m8 0h1m43 0h1m77 0h3m8 0h2m2 0h5m2 0h1m45 0h2m11 0h6m7 0h2m11 0h3m1 0h2m14 0h2m3 0h2m30 0h2m48 0h2m5 0h2m3 0h3m2 0h1m4 0h2m20 0h3m2 0h2m4 0h1m5 0h3m7 0h2m8 0h2m2 0h1m7 0h4m10 0h5m6 0h1m1 0h1m14 0h1m5 0h3m6 0h1m14 0h6m13 0h3m5 0h2m2 0h4m2 0h3m2 0h1m4 0h2m3 0h3m9 0h2m6 0h2m31 0h1m5 0h2m5 0h3m2 0h2m4 0h2m1 0h4m8 0h1m20 0h1m11 0h2m11 0h1m13 0h2m98 0h1M124 215h1m43 0h3m18 0h1m6 0h2m68 0h2m14 0h1m31 0h1m2 0h3m6 0h1m27 0h2m9 0h1m2 0h2m1 0h1m2 0h2m9 0h2m84 0h2m2 0h3m3 0h3m18 0h2m28 0h1m72 0h1m14 0h1m1 0h2m2 0h1m5 0h5m3 0h1m8 0h1m3 0h3m38 0h1m62 0h2m1 0h3m3 0h2m11 0h2m23 0h2m28 0h2m2 0h2m12 0h1m6 0h3m96 0h1m6 0h1m77 0h1M102 219h2m52 0h1m32 0h1m78 0h2m15 0h3m21 0h2m15 0h1m62 0h3m12 0h2m58 0h2m10 0h2m22 0h2m4 0h1m80 0h1m39 0h1m35 0h2m27 0h2m23 0h1m13 0h2m27 0h3m8 0h5m44 0h2m8 0h3m8 0h5m1 0h2m74 0h1m41 0h1m76 0h1m27 0h2M124 223h1m8 0h1m22 0h1m21 0h3m8 0h1m53 0h1m3 0h5m6 0h2m13 0h2m23 0h1m9 0h1m3 0h2m11 0h1m63 0h2m35 0h1m49 0h2m12 0h1m13 0h1m84 0h1m26 0h3m28 0h2m106 0h2m70 0h2m11 0h1m15 0h3m7 0h2m15 0h1m81 0h1m62 0h1M125 227h1m37 0h4m4 0h3m24 0h2m30 0h1m18 0h5m23 0h1m36 0h1m2 0h6m48 0h1m19 0h1m23 0h1m8 0h2m42 0h1m2 0h2m51 0h1m88 0h2m5 0h1m3 0h2m88 0h3m25 0h1m91 0h2m7 0h1m12 0h6m22 0h2m38 0h1m34 0h3m19 0h1M110 231h1m23 0h2m32 0h3m7 0h3m11 0h1m38 0h2m10 0h1m54 0h1m93 0h2m70 0h2m2 0h1m5 0h1m166 0h2m198 0h2m8 0h1m24 0h1m79 0h2m37 0h2m13 0h2m29 0h1M96 235h2m55 0h1m9 0h3m12 0h3m2 0h2m16 0h1m12 0h1m16 0h2m45 0h1m4 0h2m5 0h2m2 0h2m170 0h3m4 0h1m49 0h1m316 0h1m8 0h3m1 0h6m17 0h1m30 0h2m21 0h1m6 0h1m3 0h2m3 0h3m19 0h2m9 0h2m20 0h1m51 0h2M99 239h1m16 0h2m8 0h2m31 0h3m12 0h2m2 0h3m62 0h1m38 0h1m2 0h3m4 0h2m2 0h2m3 0h3m7 0h1m13 0h1m65 0h1m24 0h1m2 0h2m32 0h5m66 0h1m328 0h6m18 0h2m12 0h1m17 0h2m6 0h2m6 0h5m6 0h1m4 0h2m13 0h2m24 0h2m42 0h1M96 243h2m27 0h1m21 0h3m7 0h2m8 0h1m6 0h1m15 0h2m9 0h1m6 0h3m3 0h1m5 0h1m4 0h1m165 0h1m12 0h2m17 0h1m9 0h1m34 0h1m407 0h1m14 0h1m51 0h3m26 0h2m2 0h2m19 0h2m42 0h1m17 0h2M102 247h2m97 0h1m200 0h1m5 0h3m26 0h2m86 0h3m323 0h1m78 0h1m8 0h2m27 0h2m31 0h1M392 251h2m27 0h2m8 0h3m26 0h4m2 0h2M154 255h2m33 0h1m121 0h1m104 0h1m6 0h1m63 0h3m14 0h1m54 0h2m5 0h1m7 0h2m28 0h1m23 0h2m20 0h3m16 0h1m6 0h1m18 0h1m70 0h2m204 0h2m55 0h2m20 0h2M100 259h2m16 0h1m6 0h1m24 0h2m4 0h1m35 0h1m21 0h1m10 0h1m18 0h2m39 0h3m19 0h1m41 0h2m11 0h3m7 0h1m6 0h3m3 0h1m3 0h2m20 0h2m24 0h2m12 0h2m3 0h2m11 0h2m9 0h1m49 0h3m61 0h2m5 0h2m7 0h3m13 0h1m33 0h1m64 0h1m39 0h1m27 0h2m21 0h2m11 0h1m17 0h2m3 0h1m13 0h2m8 0h1m2 0h3m14 0h2m144 0h1m19 0h3M99 263h1m1 0h1m23 0h1m62 0h1m7 0h2m2 0h1m30 0h4m8 0h1m37 0h1m16 0h1m5 0h1m12 0h3m53 0h1m10 0h1m63 0h3m25 0h2m15 0h1m44 0h2m12 0h2m12 0h1m59 0h1m7 0h3m8 0h2m12 0h1m14 0h3m21 0h2m8 0h1m28 0h3m19 0h1m116 0h1m21 0h2m24 0h1m76 0h1m6 0h2m4 0h3m12 0h2m30 0h1M110 267h1m17 0h2m46 0h1m4 0h2m5 0h1m30 0h1m8 0h2m3 0h2m5 0h1m2 0h1m24 0h2m47 0h3m12 0h1m39 0h2m17 0h1m32 0h2m49 0h1m34 0h3m11 0h1m15 0h2m48 0h2m18 0h3m13 0h1m79 0h2m2 0h4m12 0h3m30 0h1m28 0h3m4 0h2m14 0h2m27 0h1m11 0h1m50 0h2m81 0h2"/>
<path stroke="#1086c2" stroke-width="4" d="M589 147h1M747 171h2M502 179h2m161 0h1M382 183h2m204 0h1m105 0h1m52 0h1m45 0h2m21 0h2m106 0h1M266 187h2m108 0h1m113 0h1m19 0h3m68 0h1m5 0h1m10 0h3m132 0h2m16 0h1M358 191h2m120 0h1m88 0h2m10 0h1m21 0h1m17 0h1m59 0h2m7 0h2m20 0h2m9 0h2m79 0h2m7 0h1M279 195h2m26 0h1m52 0h2m8 0h1m14 0h1m94 0h4m7 0h2m3 0h2m6 0h1m23 0h2m3 0h2m22 0h2m2 0h1m7 0h2m8 0h2m7 0h1m103 0h2m23 0h1m21 0h1m9 0h2m4 0h4m19 0h1m45 0h1M268 199h2m56 0h1m3 0h2m41 0h1m15 0h2m103 0h2m2 0h2m13 0h3m16 0h8m10 0h2m3 0h2m19 0h3m5 0h3m50 0h3m20 0h1m20 0h5m6 0h3m34 0h2m2 0h4m20 0h6m48 0h2M174 203h1m106 0h1m8 0h2m31 0h2m7 0h1m14 0h2m9 0h2m6 0h2m4 0h1m13 0h3m113 0h2m3 0h2m7 0h4m15 0h3m14 0h5m2 0h2m5 0h5m3 0h2m3 0h2m6 0h1m2 0h2m4 0h2m5 0h1m1 0h5m24 0h3m12 0h1m3 0h3m27 0h3m9 0h1m10 0h2m1 0h1m13 0h2m1 0h3m4 0h4m10 0h2m10 0h4m7 0h1m14 0h8m2 0h2m5 0h2m2 0h2m17 0h1M260 207h3m5 0h5m53 0h1m9 0h3m19 0h2m6 0h4m19 0h2m85 0h2m3 0h3m3 0h4m3 0h6m2 0h2m9 0h3m4 0h2m6 0h4m1 0h2m3 0h4m1 0h2m2 0h7m7 0h1m9 0h5m6 0h2m4 0h1m1 0h4m10 0h1m16 0h1m12 0h3m28 0h1m5 0h3m12 0h3m5 0h1m2 0h1m2 0h6m6 0h2m2 0h1m6 0h2m17 0h1m2 0h2m19 0h2m5 0h3m3 0h2m4 0h3m5 0h4m3 0h2m9 0h2m3 0h4m18 0h2m12 0h1m151 0h2M258 211h2m8 0h2m9 0h2m39 0h3m10 0h3m6 0h7m2 0h3m6 0h2m6 0h2m4 0h3m2 0h3m2 0h2m94 0h1m13 0h6m2 0h2m3 0h2m1 0h3m3 0h2m2 0h2m13 0h3m5 0h7m5 0h4m2 0h1m5 0h4m1 0h2m8 0h2m4 0h1m1 0h2m2 0h2m2 0h3m2 0h1m3 0h3m5 0h1m6 0h5m5 0h2m6 0h1m2 0h4m16 0h2m24 0h1m13 0h3m6 0h2m4 0h11m13 0h1m4 0h1m12 0h3m7 0h3m3 0h2m1 0h6m3 0h3m2 0h2m31 0h3m1 0h3M185 215h1m68 0h1m54 0h2m1 0h2m1 0h2m3 0h3m9 0h4m3 0h3m16 0h4m4 0h2m2 0h1m1 0h1m140 0h3m6 0h1m12 0h3m2 0h2m3 0h2m8 0h2m9 0h1m5 0h2m2 0h3m5 0h3m1 0h1m1 0h2m4 0h2m3 0h4m1 0h9m28 0h2m5 0h3m3 0h3m7 0h4m8 0h5m7 0h4m4 0h5m5 0h2m13 0h2m20 0h2m1 0h1m3 0h3m10 0h1m2 0h2m3 0h5m5 0h2m3 0h3m6 0h2m19 0h2m2 0h2m3 0h3m13 0h1M252 219h8m18 0h1m32 0h1m8 0h3m7 0h2m4 0h3m3 0h5m13 0h2m8 0h1m5 0h1m2 0h3m20 0h1m20 0h1m66 0h1m2 0h1m4 0h2m72 0h2m27 0h2m1 0h1m2 0h6m6 0h2m7 0h4m2 0h3m32 0h1m8 0h3m13 0h2m27 0h3m9 0h2m8 0h2m10 0h2m9 0h2m38 0h3m14 0h1m220 0h1M157 223h2m8 0h1m84 0h2m7 0h2m7 0h3m5 0h1m3 0h3m26 0h1m8 0h3m37 0h2m9 0h1m4 0h1m39 0h1m4 0h2m45 0h1m25 0h2m13 0h1m8 0h4m18 0h2m3 0h2m24 0h1m12 0h3m7 0h4m22 0h1m1 0h2m13 0h6m2 0h2m3 0h3m6 0h1m10 0h1m21 0h2m87 0h2m19 0h2m21 0h1m7 0h1m2 0h2m3 0h5m16 0h1m5 0h1m89 0h1m15 0h2M159 227h3m19 0h2m57 0h1m19 0h1m12 0h2m6 0h1m26 0h3m14 0h1m56 0h2m63 0h1m27 0h1m18 0h2m109 0h1m28 0h3m4 0h2m20 0h2m24 0h1m7 0h1m31 0h2m78 0h2m9 0h2m5 0h3m8 0h2m1 0h2m1 0h2m6 0h1m13 0h2m55 0h1m122 0h1M152 231h1m4 0h2m3 0h4m11 0h1m100 0h3m11 0h2m23 0h3m185 0h1m16 0h2m103 0h1m28 0h3m117 0h2m21 0h1m36 0h2m21 0h3m9 0h2m18 0h1m124 0h1M118 235h1m56 0h2m40 0h2m28 0h2m39 0h1m19 0h1m108 0h2m411 0h4m2 0h2m5 0h4m25 0h1m42 0h2m134 0h2M162 239h1m3 0h1m9 0h1m4 0h4m4 0h1m54 0h8m31 0h2m9 0h2m2 0h1m8 0h1m1 0h2m3 0h1m77 0h2m39 0h1m41 0h1m146 0h2m4 0h2m233 0h3m3 0h2m1 0h1m10 0h1m10 0h2m38 0h2m107 0h1M124 243h1m34 0h4m18 0h2m40 0h2m6 0h2m14 0h2m65 0h1m126 0h1m178 0h1m11 0h2m215 0h2m5 0h6m10 0h1m9 0h1m36 0h2m61 0h2m51 0h3M124 247h1m56 0h2m55 0h2m224 0h2m3 0h2m446 0h2m37 0h2m23 0h1m4 0h2m22 0h2m5 0h3m3 0h1m3 0h2m2 0h3m7 0h1m7 0h2m23 0h2M471 251h2m1 0h1M125 255h1m135 0h2m109 0h1m145 0h2m12 0h1m36 0h2m276 0h2m41 0h1m12 0h2m71 0h2m45 0h1m4 0h1m17 0h1M124 259h1m77 0h2m71 0h2m94 0h1m19 0h1m44 0h1m16 0h3m6 0h2m29 0h1m13 0h2m57 0h3m5 0h2m14 0h2m55 0h2m130 0h2m45 0h1m19 0h1m43 0h1m46 0h1m38 0h2M124 263h1m64 0h1m164 0h2m35 0h1m41 0h1m56 0h1m66 0h2m20 0h2m24 0h1m115 0h2m90 0h1m4 0h2m31 0h1m67 0h2m32 0h1m27 0h1m17 0h2m77 0h2M145 267h2m3 0h2m2 0h2m21 0h1m8 0h2m1 0h1m3 0h1m105 0h2m26 0h3m44 0h2m26 0h1m204 0h3m66 0h1m293 0h2m36 0h2m16 0h1m15 0h1m18 0h1"/>
<path stroke="#1093b5" stroke-width="4" d="M676 187h1M356 191h2m194 0h2m225 0h2M532 195h1m72 0h1m145 0h1m57 0h2M167 199h1m146 0h1m50 0h1m18 0h1m122 0h2m36 0h2m14 0h1m12 0h2m39 0h1m61 0h1m113 0h2m9 0h2m25 0h1M370 203h1m133 0h2m14 0h2m8 0h2m11 0h2m27 0h2m7 0h1m7 0h1m76 0h3m20 0h1m13 0h3m6 0h6M327 207h3m2 0h1m21 0h4m4 0h4m7 0h1m104 0h2m6 0h1m6 0h1m6 0h2m5 0h2m9 0h2m2 0h1m9 0h1m24 0h2m5 0h2m3 0h2m16 0h1m8 0h2m5 0h1m56 0h1m8 0h1m13 0h3m3 0h1m19 0h1m4 0h2m15 0h2m2 0h2m6 0h2m33 0h1m9 0h5m11 0h4M263 211h3m59 0h1m6 0h1m23 0h4m12 0h1m4 0h2m10 0h2m87 0h2m4 0h2m4 0h1m2 0h1m10 0h1m4 0h1m18 0h2m3 0h2m17 0h2m17 0h1m9 0h1m2 0h3m5 0h2m12 0h1m20 0h1m13 0h2m4 0h2m11 0h1m13 0h2m2 0h3m2 0h3m6 0h2m3 0h1m2 0h3m7 0h2m2 0h4m11 0h2m2 0h6m34 0h3m9 0h3m14 0h2m2 0h2m5 0h1m2 0h4m5 0h1m74 0h1M192 215h1m68 0h5m61 0h5m4 0h3m5 0h5m2 0h3m2 0h2m4 0h3m12 0h5m2 0h1m6 0h1m86 0h3m3 0h6m15 0h1m4 0h3m3 0h2m10 0h4m1 0h2m7 0h1m4 0h3m7 0h7m10 0h2m5 0h1m10 0h4m2 0h3m15 0h3m51 0h6m1 0h1m5 0h6m7 0h2m5 0h5m4 0h2m3 0h6m6 0h4m4 0h3m2 0h3m2 0h1m1 0h3m7 0h1m3 0h2m6 0h2m12 0h3m3 0h2m9 0h2m2 0h2m1 0h5m6 0h2M260 219h3m7 0h3m42 0h5m3 0h3m6 0h4m3 0h3m9 0h3m4 0h2m2 0h4m6 0h1m4 0h2m6 0h1m92 0h2m14 0h4m6 0h1m2 0h2m1 0h10m8 0h2m2 0h3m3 0h2m2 0h1m4 0h3m2 0h3m2 0h7m5 0h3m2 0h2m8 0h3m3 0h2m4 0h2m8 0h1m6 0h2m17 0h2m3 0h3m1 0h2m2 0h2m3 0h10m6 0h3m1 0h4m9 0h3m14 0h8m4 0h4m2 0h5m10 0h2m5 0h2m5 0h1m3 0h6m2 0h1m3 0h5m8 0h2m3 0h2m8 0h2m2 0h4m3 0h2m7 0h7m4 0h2m3 0h2m4 0h5m2 0h1M176 223h1m78 0h3m2 0h1m14 0h3m45 0h2m2 0h6m3 0h6m7 0h2m21 0h1m1 0h2m3 0h3m2 0h1m95 0h1m3 0h2m14 0h2m5 0h2m13 0h1m5 0h2m12 0h3m10 0h2m9 0h1m12 0h2m20 0h2m3 0h7m8 0h1m2 0h3m1 0h6m15 0h1m6 0h3m1 0h1m2 0h3m5 0h5m2 0h3m5 0h3m11 0h3m22 0h1m19 0h2m2 0h2m1 0h3m13 0h2m1 0h5m7 0h2m10 0h2m2 0h1m22 0h2m5 0h4m1 0h2m15 0h1M175 227h1m79 0h3m17 0h2m35 0h2m1 0h2m6 0h2m19 0h3m25 0h1m4 0h2m94 0h1m2 0h2m2 0h1m10 0h2m12 0h1m1 0h2m9 0h2m2 0h1m10 0h2m29 0h2m6 0h2m13 0h1m16 0h1m11 0h3m2 0h1m8 0h2m8 0h1m20 0h2m6 0h2m3 0h2m49 0h1m9 0h2m23 0h3m7 0h3m8 0h4m8 0h2m4 0h1m26 0h1m3 0h3m14 0h2M167 231h1m3 0h3m40 0h1m37 0h3m6 0h2m7 0h7m30 0h1m1 0h2m15 0h1m58 0h1m87 0h1m2 0h2m6 0h2m32 0h2m4 0h1m101 0h1m7 0h6m3 0h2m2 0h2m4 0h3m5 0h2m13 0h1m18 0h1m118 0h2m8 0h2m3 0h1m8 0h2m4 0h2m7 0h3m6 0h1M102 235h2m62 0h5m78 0h5m12 0h2m11 0h3m27 0h2m1 0h2m73 0h2m87 0h2m27 0h1m118 0h2m1 0h1m2 0h2m28 0h3m175 0h2m7 0h2m10 0h3m166 0h1m12 0h1M128 239h2m33 0h3m1 0h7m11 0h1m74 0h1m14 0h3m1 0h2m36 0h3m185 0h1m330 0h2m2 0h1m2 0h3m5 0h1M110 243h1m55 0h1m11 0h3m73 0h1m33 0h1m186 0h3m44 0h3m315 0h1m5 0h1m6 0h3m13 0h2m29 0h1M98 247h1m10 0h1m1 0h1m10 0h2m9 0h1m2 0h2m7 0h2m36 0h2m3 0h1m25 0h3m8 0h3m7 0h3m58 0h2m94 0h2m74 0h1m4 0h1m397 0h1m1 0h3m8 0h2m5 0h1m9 0h2m6 0h4m41 0h2m10 0h2m2 0h4m2 0h2m1 0h2m1 0h2m11 0h2m9 0h2m6 0h2m10 0h1m7 0h4m5 0h3m1 0h2m2 0h4m13 0h2M469 251h2m54 0h3m93 0h1M98 255h1m12 0h1m89 0h1m15 0h2m7 0h2m3 0h4m38 0h2m3 0h1m11 0h2m31 0h2m40 0h1m4 0h1m5 0h1m7 0h1m440 0h2m2 0h1m13 0h1m32 0h1m5 0h1m1 0h2m8 0h2m9 0h1m9 0h4m6 0h3m9 0h2m7 0h3m19 0h2m8 0h3m3 0h2m9 0h2m4 0h3m2 0h4m10 0h3m1 0h2m16 0h1m14 0h2m15 0h2m2 0h2M133 259h1m525 0h1m164 0h1m181 0h2M506 263h1m33 0h2m77 0h1m285 0h1m137 0h1M142 267h1m4 0h3m35 0h1m104 0h2m188 0h1m57 0h2m536 0h2"/>
<path stroke="#109da8" stroke-width="4" d="M493 199h1m180 0h2m72 0h1M371 203h1m454 0h1M342 207h2m28 0h1m206 0h2m93 0h3m40 0h1m11 0h2m8 0h1m68 0h1m17 0h1M330 211h2m33 0h1m20 0h1m118 0h1m36 0h1m16 0h2m13 0h2m20 0h2m7 0h1m63 0h1m20 0h2m17 0h1m30 0h2m6 0h4m39 0h2m2 0h2m3 0h2m7 0h2M177 215h1m82 0h1m88 0h2m139 0h3m1 0h8m2 0h1m1 0h1m13 0h2m21 0h2m5 0h5m9 0h2m1 0h2m2 0h1m7 0h2m1 0h2m75 0h2m15 0h1m12 0h1m24 0h2m9 0h4m4 0h2m5 0h2m13 0h2m13 0h1m10 0h2m10 0h4m11 0h1m7 0h2M327 219h3m26 0h2m10 0h2m1 0h1m1 0h3m6 0h3m1 0h3m95 0h2m1 0h3m19 0h1m10 0h2m8 0h2m3 0h3m2 0h2m1 0h4m8 0h2m9 0h3m12 0h3m5 0h1m4 0h2m2 0h3m2 0h1m1 0h1m9 0h1m24 0h1m6 0h2m12 0h2m11 0h3m4 0h2m3 0h3m8 0h1m10 0h4m4 0h1m9 0h5m6 0h2m3 0h1m5 0h3m19 0h1m12 0h8m9 0h2m2 0h2m12 0h2m4 0h1M263 223h5m46 0h1m18 0h3m6 0h7m2 0h3m8 0h4m4 0h1m6 0h2m3 0h2m3 0h2m2 0h1m83 0h1m5 0h3m3 0h3m3 0h1m4 0h2m2 0h2m1 0h1m4 0h8m12 0h2m1 0h5m9 0h3m4 0h1m2 0h4m6 0h2m3 0h7m3 0h2m6 0h2m12 0h2m13 0h1m7 0h1m6 0h3m6 0h2m8 0h3m10 0h4m6 0h1m4 0h2m7 0h2m3 0h3m5 0h14m6 0h2m1 0h7m2 0h4m1 0h2m1 0h2m2 0h1m3 0h1m5 0h2m4 0h2m1 0h2m2 0h1m5 0h2m1 0h2m4 0h10m2 0h2m5 0h5m2 0h3m4 0h4m2 0h1M254 227h1m3 0h2m6 0h7m54 0h5m1 0h3m15 0h3m8 0h6m5 0h4m2 0h3m2 0h2m92 0h2m6 0h1m22 0h1m18 0h5m12 0h2m3 0h2m3 0h6m15 0h3m15 0h2m2 0h6m2 0h1m3 0h3m2 0h1m6 0h2m2 0h2m4 0h2m3 0h3m3 0h2m2 0h6m3 0h3m7 0h3m7 0h1m1 0h3m11 0h2m1 0h2m3 0h6m3 0h5m17 0h2m4 0h2m9 0h1m3 0h3m4 0h1m16 0h5m4 0h6m4 0h2m11 0h1m4 0h3m2 0h2m2 0h2m38 0h1m13 0h1M201 231h1m61 0h3m2 0h2m12 0h1m29 0h5m3 0h3m2 0h1m1 0h3m17 0h2m13 0h3m6 0h1m5 0h2m7 0h1m91 0h3m5 0h1m3 0h1m2 0h1m13 0h6m7 0h2m25 0h5m7 0h2m3 0h2m23 0h1m17 0h3m5 0h1m5 0h5m2 0h6m6 0h1m4 0h2m12 0h1m3 0h2m5 0h1m7 0h3m16 0h1m19 0h4m39 0h3m2 0h3m2 0h3m5 0h3m28 0h2m2 0h1m6 0h2m5 0h2m1 0h3m10 0h1M171 235h3m81 0h5m10 0h8m29 0h1m9 0h9m34 0h2m10 0h1m9 0h2m91 0h1m127 0h2m10 0h1m5 0h1m4 0h1m1 0h2m7 0h3m1 0h2m2 0h2m3 0h3m10 0h2m86 0h1m18 0h3m51 0h1m2 0h2m5 0h2M252 239h3m6 0h2m5 0h5m39 0h2m154 0h1m7 0h2m111 0h1m44 0h3m6 0h2m15 0h1m4 0h1m163 0h1m4 0h2m2 0h2m9 0h2m1 0h1M163 243h3m2 0h6m3 0h1m71 0h5m61 0h2m75 0h2m271 0h1m156 0h2m12 0h4m4 0h2m6 0h1M96 247h2m1 0h3m2 0h5m1 0h1m1 0h4m9 0h1m2 0h2m4 0h2m4 0h2m5 0h3m4 0h2m3 0h3m28 0h2m2 0h4m4 0h2m2 0h5m6 0h2m2 0h2m5 0h7m6 0h2m3 0h1m41 0h1m3 0h4m5 0h3m1 0h2m167 0h1m384 0h3m10 0h1m4 0h5m4 0h5m1 0h8m3 0h2m8 0h4m2 0h2m2 0h2m6 0h3m2 0h1m1 0h1m2 0h8m4 0h1m4 0h1m15 0h2m21 0h4m1 0h4m6 0h2m6 0h3m1 0h2m3 0h2m24 0h7m10 0h2M110 251h1m31 0h1m100 0h1m229 0h1m152 0h1M96 255h2m3 0h6m13 0h2m8 0h3m3 0h2m5 0h2m5 0h2m1 0h1m9 0h3m1 0h1m6 0h1m8 0h2m7 0h2m6 0h1m3 0h13m4 0h2m2 0h1m2 0h3m7 0h2m6 0h3m11 0h1m9 0h3m4 0h1m4 0h1m5 0h1m3 0h2m5 0h2m3 0h1m2 0h1m7 0h5m19 0h8m9 0h2m27 0h2m2 0h2m443 0h4m14 0h4m3 0h4m6 0h2m1 0h1m4 0h2m4 0h1m2 0h2m8 0h2m8 0h5m8 0h2m3 0h1m9 0h2m3 0h4m6 0h4m1 0h4m4 0h3m9 0h2m5 0h3m4 0h3m2 0h2m9 0h2m6 0h5m18 0h6m18 0h2m4 0h5m2 0h2m2 0h2M290 259h2M109 267h1m15 0h1m812 0h1m42 0h1"/>
<path stroke="#10a69b" stroke-width="4" d="M490 199h1M490 203h1M354 211h2m182 0h2m26 0h1m127 0h1m48 0h2m14 0h1M507 215h2m29 0h2m29 0h2m16 0h1m1 0h1m145 0h2m93 0h3M349 219h2m15 0h2m123 0h2m57 0h2m24 0h5m7 0h1m3 0h2m95 0h3m4 0h1m1 0h2m43 0h2m48 0h2m4 0h1m6 0h2M326 223h1m27 0h2m2 0h2m6 0h4m108 0h2m6 0h1m4 0h2m3 0h2m8 0h1m25 0h1m5 0h2m10 0h4m8 0h4m15 0h1m5 0h2m3 0h2m4 0h3m2 0h1m9 0h3m61 0h1m5 0h3m3 0h1m4 0h1m3 0h2m17 0h6m10 0h2m4 0h1m2 0h1m16 0h4m2 0h1m12 0h1m21 0h2m7 0h2M261 227h5m60 0h1m5 0h1m3 0h8m3 0h4m3 0h6m8 0h3m15 0h5m93 0h2m1 0h3m3 0h1m4 0h6m2 0h1m3 0h8m2 0h2m13 0h3m4 0h3m2 0h3m17 0h2m5 0h2m3 0h8m2 0h5m2 0h2m21 0h1m8 0h2m15 0h2m6 0h3m15 0h3m3 0h1m3 0h8m9 0h2m8 0h1m9 0h3m2 0h2m8 0h2m4 0h3m3 0h2m2 0h3m3 0h4m4 0h7m3 0h3m15 0h2m4 0h2m1 0h8m3 0h2m3 0h2m6 0h1M255 231h3m2 0h1m5 0h2m43 0h1m11 0h2m5 0h6m3 0h8m2 0h7m4 0h2m3 0h1m2 0h2m3 0h1m5 0h3m2 0h1m2 0h2m2 0h1m95 0h3m1 0h2m1 0h4m4 0h3m8 0h5m10 0h7m7 0h1m12 0h4m3 0h2m2 0h3m2 0h1m2 0h2m12 0h1m3 0h2m2 0h2m3 0h2m2 0h1m4 0h5m1 0h3m1 0h1m29 0h3m7 0h1m5 0h4m1 0h5m1 0h1m8 0h6m2 0h1m1 0h1m1 0h2m3 0h3m4 0h2m19 0h4m12 0h1m1 0h2m1 0h3m2 0h2m4 0h2m3 0h2m3 0h3m5 0h2m2 0h14m1 0h4m4 0h1m2 0h2m5 0h2m2 0h2m2 0h1m6 0h3M260 235h3m5 0h2m44 0h1m11 0h1m3 0h2m1 0h3m3 0h3m2 0h3m9 0h2m10 0h3m13 0h2m3 0h3m86 0h6m2 0h1m19 0h1m3 0h3m7 0h3m22 0h2m3 0h2m7 0h2m23 0h3m11 0h3m5 0h7m3 0h5m1 0h2m8 0h5m3 0h1m2 0h2m4 0h1m3 0h7m5 0h4m1 0h1m6 0h1m3 0h2m13 0h2m2 0h3m5 0h1m1 0h2m2 0h2m1 0h1m3 0h2m32 0h2m9 0h2m5 0h3m2 0h1m12 0h4m4 0h1m8 0h1m7 0h8m2 0h1m2 0h1M255 239h3m57 0h2m6 0h2m5 0h2m40 0h1m9 0h2m102 0h1m3 0h1m7 0h2m105 0h1m10 0h3m1 0h1m16 0h3m1 0h2m2 0h5m9 0h1m1 0h2m108 0h2m47 0h2m3 0h1m7 0h1m7 0h2m3 0h1M156 243h1m98 0h3m2 0h1m9 0h3m2 0h6m31 0h2m6 0h5m1 0h1m159 0h1m23 0h3m108 0h3m2 0h2m6 0h3m8 0h2m12 0h1m137 0h2m30 0h4m1 0h2m5 0h3m3 0h2M118 247h2m10 0h3m5 0h2m2 0h3m5 0h2m1 0h1m2 0h3m15 0h1m10 0h3m1 0h1m8 0h3m3 0h2m5 0h3m5 0h1m20 0h1m2 0h3m39 0h3m10 0h3m3 0h1m3 0h1m166 0h3m45 0h1m98 0h2m4 0h2m10 0h1m6 0h2m175 0h1m13 0h2m6 0h3m4 0h3m6 0h4m3 0h2m11 0h1m38 0h2m2 0h5m4 0h2m13 0h4m6 0h6m19 0h2m2 0h7m13 0h2m28 0h3m1 0h1m3 0h1m15 0h6m2 0h2m6 0h2M190 251h2m283 0h1m8 0h2m37 0h1m95 0h1m27 0h2m361 0h2m64 0h2M100 255h1m6 0h2m7 0h2m1 0h1m4 0h1m1 0h4m3 0h1m11 0h5m2 0h1m3 0h1m2 0h3m9 0h3m1 0h1m9 0h3m2 0h2m2 0h4m4 0h2m16 0h1m19 0h3m1 0h2m6 0h2m1 0h5m6 0h4m9 0h3m1 0h5m10 0h1m6 0h2m1 0h1m11 0h3m2 0h1m1 0h5m1 0h3m11 0h9m2 0h7m14 0h3m9 0h1m435 0h2m1 0h4m4 0h5m1 0h2m3 0h3m4 0h3m4 0h5m11 0h3m6 0h2m1 0h3m4 0h5m8 0h4m6 0h2m5 0h2m1 0h3m2 0h1m6 0h3m12 0h4m3 0h1m20 0h2m3 0h2m4 0h2m11 0h2m5 0h3m6 0h2m6 0h1m6 0h1m1 0h1m5 0h2m2 0h4m4 0h1m8 0h2"/>
<path stroke="#13af8e" stroke-width="4" d="M542 207h1M502 219h2m60 0h2M356 223h2m28 0h1m174 0h1m7 0h2m177 0h1m65 0h4M360 227h2m119 0h3m6 0h1m5 0h2m6 0h1m33 0h4m10 0h3m6 0h3m2 0h1m2 0h3m16 0h1m18 0h3m49 0h1m5 0h1m24 0h2m2 0h1m11 0h2m9 0h1m8 0h3m14 0h2m2 0h1M258 231h2m76 0h3m17 0h2m8 0h2m2 0h1m1 0h1m1 0h3m5 0h2m97 0h3m14 0h4m4 0h1m28 0h5m3 0h4m5 0h2m7 0h1m7 0h2m1 0h2m2 0h6m2 0h4m2 0h2m2 0h2m2 0h3m2 0h1m2 0h1m58 0h1m15 0h5m6 0h2m6 0h3m3 0h4m2 0h4m5 0h10m4 0h7m1 0h4m8 0h2m2 0h1m23 0h2m21 0h2m8 0h2M263 235h3m49 0h2m10 0h3m2 0h1m3 0h3m3 0h2m3 0h2m9 0h2m2 0h6m3 0h1m1 0h3m1 0h5m102 0h2m1 0h6m7 0h5m8 0h3m2 0h2m10 0h2m1 0h5m4 0h3m9 0h1m6 0h1m2 0h2m5 0h1m2 0h5m2 0h1m5 0h9m5 0h2m2 0h1m7 0h2m54 0h1m1 0h6m1 0h3m2 0h12m3 0h2m3 0h5m1 0h1m2 0h2m2 0h1m1 0h3m4 0h1m5 0h2m4 0h3m5 0h3m1 0h2m1 0h3m4 0h1m5 0h1m2 0h2m6 0h2m1 0h12m4 0h2m3 0h8m1 0h4M258 239h2m3 0h3m7 0h2m45 0h3m3 0h4m2 0h4m3 0h8m2 0h7m4 0h5m1 0h2m2 0h2m1 0h4m7 0h5m91 0h6m1 0h3m1 0h3m2 0h2m4 0h3m11 0h4m2 0h1m7 0h3m9 0h1m7 0h2m3 0h2m4 0h3m17 0h1m24 0h7m2 0h1m3 0h1m1 0h1m2 0h3m3 0h4m6 0h1m9 0h9m4 0h2m1 0h3m2 0h3m4 0h3m5 0h3m1 0h2m3 0h1m2 0h5m5 0h1m3 0h4m1 0h1m13 0h2m7 0h2m5 0h4m8 0h4m2 0h6m2 0h5m3 0h2m2 0h12m3 0h2m4 0h5m11 0h3m1 0h3m1 0h3M258 243h2m3 0h3m2 0h2m3 0h2m36 0h1m5 0h3m7 0h5m1 0h9m5 0h4m3 0h8m23 0h1m1 0h2m101 0h3m1 0h2m10 0h1m77 0h3m18 0h1m13 0h1m4 0h2m4 0h2m5 0h4m2 0h2m2 0h12m4 0h2m5 0h1m7 0h5m29 0h2m15 0h2m2 0h2m13 0h1m6 0h2m3 0h3m2 0h3m3 0h2m6 0h2m12 0h2m4 0h1m8 0h1m11 0h2m5 0h2m4 0h1M116 247h2m2 0h2m40 0h4m2 0h6m2 0h5m11 0h2m26 0h1m2 0h2m22 0h5m2 0h4m12 0h3m2 0h2m2 0h6m22 0h1m1 0h3m2 0h1m2 0h3m5 0h1m47 0h1m12 0h1m4 0h1m89 0h3m3 0h3m12 0h2m62 0h1m46 0h2m6 0h1m4 0h1m10 0h3m9 0h7m13 0h1m6 0h1m83 0h3m2 0h1m56 0h2m9 0h1m6 0h4m8 0h1m3 0h3m7 0h3m7 0h1m6 0h1m16 0h1m77 0h1m97 0h2M99 251h1m1 0h1m17 0h1m23 0h2m47 0h1m5 0h2m4 0h2m5 0h3m6 0h1m12 0h2m241 0h2m135 0h2m5 0h1m6 0h1m12 0h1m24 0h1m4 0h1m142 0h1m77 0h1m31 0h1m13 0h1m5 0h3m6 0h1m33 0h2m16 0h2m59 0h3M99 255h1m10 0h1m3 0h2m2 0h1m3 0h2m10 0h2m2 0h5m14 0h2m3 0h1m3 0h1m1 0h3m5 0h7m5 0h1m9 0h2m19 0h1m3 0h2m10 0h3m11 0h3m2 0h1m8 0h3m9 0h2m12 0h1m4 0h4m3 0h3m5 0h2m1 0h2m12 0h1m5 0h1m3 0h3m27 0h4m3 0h3m1 0h2m3 0h2m3 0h2m457 0h1m24 0h1m1 0h3m77 0h1m12 0h2m2 0h2m27 0h2m30 0h3m10 0h2"/>
<path stroke="#18b781" stroke-width="4" d="M721 227h2M358 231h2m180 0h2m12 0h1m27 0h2m20 0h1m111 0h1m25 0h1m5 0h1m2 0h1m52 0h2M349 235h7m20 0h1m9 0h1m106 0h7m7 0h3m6 0h2m10 0h2m2 0h1m5 0h4m5 0h3m2 0h2m1 0h4m3 0h2m2 0h5m1 0h2m5 0h2m1 0h2m12 0h2m49 0h2m46 0h1m27 0h2m1 0h5m2 0h4m3 0h5m3 0h1m8 0h2m1 0h5m32 0h2m14 0h3m9 0h1M266 239h2m68 0h3m8 0h2m7 0h4m5 0h1m2 0h2m7 0h5m7 0h2m87 0h2m14 0h2m4 0h2m4 0h10m4 0h2m6 0h2m3 0h2m3 0h4m3 0h2m5 0h2m5 0h2m5 0h3m2 0h10m1 0h7m1 0h15m8 0h2m12 0h1m41 0h2m3 0h4m3 0h5m3 0h1m2 0h3m1 0h2m5 0h3m3 0h3m9 0h2m2 0h6m2 0h4m2 0h1m5 0h2m5 0h7m4 0h2m13 0h3m2 0h2m12 0h3m2 0h2m7 0h9M266 243h2m57 0h1m6 0h1m9 0h5m4 0h3m11 0h1m2 0h2m2 0h4m1 0h7m5 0h2m89 0h6m7 0h1m2 0h2m6 0h2m3 0h1m3 0h5m14 0h1m17 0h2m2 0h5m2 0h1m4 0h1m5 0h2m2 0h3m3 0h2m4 0h1m1 0h4m4 0h5m3 0h1m3 0h9m9 0h2m30 0h3m3 0h4m1 0h6m6 0h3m6 0h3m2 0h9m2 0h1m5 0h2m1 0h1m3 0h2m2 0h1m5 0h2m10 0h2m2 0h1m1 0h2m6 0h3m8 0h3m2 0h5m5 0h10m9 0h2m2 0h2m3 0h9m5 0h2M166 247h2m7 0h1m76 0h2m4 0h2m1 0h2m5 0h2m3 0h2m2 0h2m11 0h2m20 0h2m1 0h2m13 0h2m1 0h3m48 0h1m2 0h2m89 0h2m6 0h1m26 0h3m4 0h3m10 0h2m24 0h3m5 0h4m1 0h2m7 0h1m16 0h3m4 0h2m8 0h1m4 0h1m3 0h2m1 0h1m2 0h7m4 0h4m14 0h7m4 0h4m3 0h1m3 0h2m12 0h2m17 0h2m17 0h2m20 0h5m3 0h2m1 0h4m3 0h5m1 0h4m2 0h3m7 0h5m2 0h2m12 0h6m3 0h1m1 0h6m3 0h2m6 0h2m3 0h2M96 251h2m2 0h1m8 0h1m1 0h1m2 0h2m2 0h1m1 0h6m2 0h2m6 0h6m5 0h3m7 0h2m7 0h1m1 0h3m3 0h2m1 0h4m13 0h2m5 0h3m4 0h3m3 0h3m4 0h5m2 0h5m2 0h5m6 0h1m13 0h1m27 0h1m3 0h2m2 0h3m5 0h3m4 0h1m168 0h1m6 0h3m52 0h1m26 0h2m51 0h4m2 0h6m3 0h3m1 0h4m4 0h1m6 0h3m7 0h3m26 0h1m63 0h4m3 0h2m3 0h2m5 0h1m16 0h2m5 0h2m16 0h2m2 0h1m47 0h1m9 0h1m1 0h2m6 0h4m10 0h1m12 0h2m3 0h1m3 0h8m10 0h3m4 0h3m3 0h3m3 0h3m2 0h4m2 0h2m4 0h4m5 0h6m2 0h5m2 0h2m8 0h1m3 0h3m3 0h1m4 0h3m9 0h3m1 0h4m10 0h4m3 0h8m2 0h2M112 255h2m129 0h1m70 0h1m553 0h1m54 0h1"/>
<path stroke="#18c078" stroke-width="4" d="M535 239h3m5 0h2m2 0h3m4 0h1m2 0h2m5 0h2m3 0h2m135 0h2m8 0h1m1 0h3m2 0h2m12 0h2m3 0h3m6 0h1m52 0h2M261 243h2m99 0h3m1 0h2m2 0h2m4 0h1m7 0h1m1 0h1m91 0h2m7 0h3m8 0h6m3 0h2m9 0h4m6 0h4m1 0h17m2 0h2m5 0h2m1 0h4m1 0h5m2 0h2m5 0h1m5 0h1m1 0h1m4 0h4m5 0h2m2 0h3m31 0h2m34 0h1m8 0h6m3 0h1m10 0h2m1 0h3m4 0h1m1 0h3m2 0h2m1 0h3m6 0h7m3 0h2m4 0h4m8 0h2m13 0h1m2 0h2m12 0h2m3 0h2m2 0h2m3 0h2m13 0h1M260 247h1m5 0h2m52 0h3m9 0h1m3 0h11m7 0h6m2 0h4m2 0h5m1 0h2m1 0h7m1 0h1m3 0h2m89 0h1m9 0h4m2 0h2m2 0h2m3 0h5m6 0h4m8 0h4m3 0h3m7 0h10m2 0h2m3 0h4m13 0h2m1 0h5m1 0h10m3 0h4m2 0h6m3 0h4m25 0h2m9 0h3m7 0h3m5 0h2m2 0h3m2 0h12m2 0h11m4 0h2m2 0h7m2 0h1m5 0h2m2 0h2m5 0h1m2 0h2m1 0h7m16 0h2m5 0h1m4 0h2m3 0h7m5 0h2m4 0h2m1 0h7m10 0h1m7 0h2M98 251h1m3 0h5m5 0h2m12 0h2m2 0h6m9 0h2m3 0h7m5 0h4m1 0h1m3 0h3m2 0h1m4 0h4m1 0h2m1 0h1m3 0h1m2 0h2m2 0h1m5 0h2m9 0h3m6 0h2m12 0h3m1 0h2m1 0h8m11 0h2m7 0h3m1 0h2m1 0h6m1 0h3m2 0h2m3 0h5m4 0h1m3 0h8m7 0h3m148 0h2m1 0h3m2 0h1m3 0h3m1 0h2m4 0h6m1 0h3m3 0h7m2 0h1m5 0h2m8 0h4m1 0h2m9 0h1m17 0h2m2 0h5m6 0h3m2 0h4m5 0h12m2 0h4m15 0h3m8 0h2m3 0h6m3 0h4m8 0h7m3 0h5m3 0h5m2 0h1m17 0h2m2 0h8m9 0h2m5 0h3m6 0h4m13 0h3m2 0h5m1 0h6m3 0h5m4 0h3m8 0h5m1 0h2m2 0h2m2 0h2m1 0h1m23 0h2m1 0h7m3 0h4m10 0h6m4 0h5m5 0h7m4 0h12m2 0h2m2 0h3m10 0h5m6 0h3m4 0h3m3 0h3m3 0h2m4 0h2m2 0h4m6 0h3m6 0h2m9 0h2m2 0h4m1 0h3m3 0h1m3 0h1m1 0h2m3 0h9m3 0h1m4 0h10"/>
<path stroke="#25c96b" stroke-width="4" d="M579 243h2m115 0h1M263 247h3m57 0h2m1 0h4m17 0h7m6 0h2m4 0h2m116 0h2m8 0h2m2 0h2m4 0h1m5 0h3m25 0h5m12 0h2m14 0h1m2 0h5m8 0h1m120 0h4m11 0h2m1 0h5m6 0h5m1 0h2m2 0h1m22 0h1m33 0h2m2 0h1M107 251h2m7 0h2m41 0h3m23 0h1m2 0h1m66 0h5m1 0h2m5 0h7m3 0h1m2 0h1m25 0h1m1 0h2m9 0h7m3 0h6m13 0h2m5 0h2m2 0h5m5 0h1m3 0h2m1 0h2m5 0h2m1 0h2m2 0h1m101 0h1m2 0h4m6 0h1m3 0h3m7 0h2m8 0h8m7 0h5m2 0h2m1 0h6m1 0h7m2 0h1m2 0h2m5 0h6m3 0h2m4 0h5m62 0h2m4 0h1m8 0h3m5 0h3m5 0h1m2 0h17m2 0h2m8 0h9m2 0h2m1 0h2m3 0h6m4 0h4m4 0h3m19 0h3m5 0h2m5 0h2m2 0h4m8 0h2m15 0h16m2 0h1m7 0h3m4 0h6m1 0h3m7 0h1m19 0h3m30 0h1m87 0h2m2 0h1"/>
<path stroke="#36d25c" stroke-width="4" d="M742 243h1M376 247h1m155 0h1m10 0h2M263 251h3m70 0h13m2 0h5m2 0h2m5 0h5m1 0h3m2 0h1m2 0h5m2 0h1m2 0h2m159 0h2m9 0h1m177 0h1m86 0h7"/>
<path stroke="#070f8c" stroke-width="3" d="M104 303.5h3m213 0h3m54 0h2m60 0h2m17 0h2m138 0h3m184 0h3m166 0h2M168 310.5h3m149 0h3m133 0h2m2 0h2m90 0h2m53 0h3m6 0h3m64 0h3M171 317.5h3m75 0h3m78 0h2m12 0h3m166 0h3m187 0h3m173 0h3m102 0h2M171 324.5h3m34 0h3m128 0h3m9 0h3m228 0h2m269 0h3m3 0h3m66 0h2m108 0h3M168 331.5h3m237 0h3m171 0h2m94 0h3m172 0h3m3 0h3m126 0h3M178 338.5h3m332 0h3m27 0h2m71 0h3m67 0h3m164 0h3M458 345.5h2m53 0h3m9 0h3m215 0h2m180 0h3m34 0h3M163 352.5h3m89 0h3m43 0h3m154 0h2m53 0h3m68 0h3m23 0h3m240 0h3M107 359.5h2m112 0h2m47 0h3m71 0h3m11 0h2m2 0h3m88 0h3m57 0h3m100 0h3m166 0h3m104 0h2M107 366.5h2m126 0h3m17 0h3m43 0h3m239 0h2m243 0h3m62 0h3m36 0h2M686 380.5h3M171 387.5h3m34 0h3m405 0h3m52 0h3m12 0h3M171 394.5h3m4 0h3m522 0h3M671 401.5h3M301 408.5h3M408 429.5h3M408 436.5h3"/>
<path stroke="#070f8c" stroke-width="4" d="M255 300h3m202 0h2m148 0h3m15 0h2m56 0h3m54 0h2m196 0h2m45 0h3m40 0h3M107 307h2m176 0h3m32 0h3m16 0h3m92 0h2m180 0h3m31 0h3m13 0h3m57 0h3M208 314h3m151 0h3m165 0h2m84 0h3m99 0h3m64 0h3m65 0h3m98 0h2m3 0h6m73 0h3M104 321h3m406 0h3m9 0h3m138 0h3m9 0h3m5 0h3m11 0h3m82 0h3M168 328h3m37 0h3m532 0h2m108 0h3m175 0h3M235 335h3m17 0h3m5 0h3m35 0h3m16 0h3m7 0h2m7 0h3m35 0h2m77 0h2m85 0h2m71 0h3m31 0h3m50 0h3m253 0h3M336 342h3m311 0h3m33 0h3m11 0h3m3 0h2m10 0h3m70 0h2m66 0h3m84 0h3m5 0h2M163 349h3m12 0h3m27 0h3m10 0h2m12 0h3m106 0h3m104 0h2m157 0h3m15 0h2m56 0h3m14 0h3M163 356h3m2 0h6m34 0h3m52 0h3m264 0h2m154 0h3m29 0h3m64 0h3m166 0h2m82 0h3M255 363h3m12 0h3m71 0h3m281 0h2m20 0h3m33 0h3m11 0h3m243 0h3m13 0h3M171 370h3m234 0h3m141 0h2m96 0h3m18 0h3m12 0h3m29 0h3m47 0h2m66 0h2m150 0h3M171 391h3m4 0h3m181 0h3m321 0h3m11 0h3M703 398h3"/>
<path stroke="#0815a5" stroke-width="3" d="M147 303.5h3m73 0h2m52 0h1m289 0h2m7 0h3m28 0h3m22 0h2m3 0h3m223 0h3m138 0h2m29 0h6M194 310.5h2m30 0h2m30 0h2m52 0h2m86 0h2m25 0h2m47 0h2m81 0h2m29 0h2m18 0h3m11 0h2m19 0h2m9 0h3m31 0h2m11 0h3m75 0h2m35 0h2m46 0h2m78 0h3m106 0h2M143 317.5h2m12 0h5m59 0h2m169 0h2m163 0h2m3 0h2m89 0h3m75 0h2m130 0h3m35 0h2m46 0h3m120 0h2M186 324.5h2m178 0h2m24 0h2m62 0h2m109 0h2m21 0h2m49 0h2m138 0h2m23 0h2m8 0h2m95 0h2m34 0h3m52 0h2M96 331.5h2m45 0h2m289 0h2m3 0h2m25 0h2m23 0h2m99 0h2m146 0h2m13 0h4m52 0h2m30 0h1m29 0h3m52 0h2M136 338.5h2m21 0h3m96 0h2m140 0h2m35 0h2m17 0h2m20 0h2m11 0h2m74 0h2m140 0h1m39 0h2m71 0h2m72 0h2m3 0h2m38 0h2M128 345.5h2m13 0h2m2 0h3m7 0h2m22 0h2m129 0h2m16 0h2m105 0h2m27 0h2m188 0h3m74 0h2m95 0h3m78 0h2m125 0h3M136 352.5h2m141 0h2m58 0h3m114 0h2m85 0h4m179 0h3m157 0h2m150 0h3m16 0h2m6 0h3M223 359.5h2m235 0h2m4 0h2m48 0h2m34 0h2m102 0h3m67 0h3m28 0h2m7 0h2m43 0h2m9 0h2m101 0h3m34 0h3M104 366.5h3m64 0h3m7 0h2m87 0h3m85 0h2m91 0h2m7 0h2m68 0h2m58 0h2m38 0h2m190 0h2m25 0h2m22 0h3m3 0h3m27 0h2m144 0h2M178 373.5h3m537 0h3M235 380.5h3m378 0h3m47 0h3m14 0h3m14 0h3m285 0h3M107 387.5h2m192 0h3m16 0h3m39 0h3m272 0h3m63 0h3m20 0h3m59 0h3m68 0h3m84 0h3m13 0h3m52 0h3M208 394.5h3m24 0h3m63 0h3m40 0h3m61 0h3m102 0h3m27 0h2m105 0h3m18 0h3m26 0h3m23 0h3m14 0h2m23 0h2m18 0h3m101 0h2m60 0h2m10 0h2M163 401.5h3m104 0h3m104 0h2m29 0h3m165 0h3m121 0h3m225 0h2m72 0h2M104 408.5h3m101 0h3m52 0h3m54 0h3m293 0h3m47 0h3m319 0h3M255 415.5h3m43 0h3m149 0h3m160 0h3m149 0h2m176 0h3M301 422.5h3M208 429.5h3M208 436.5h3M208 443.5h3m247 0h2M208 450.5h3"/>
<path stroke="#0815a5" stroke-width="4" d="M223 300h2m141 0h2m71 0h2m37 0h2m36 0h2m112 0h2m2 0h3m115 0h3m2 0h2m36 0h2m72 0h2m2 0h3M143 307h2m83 0h2m162 0h2m49 0h2m36 0h3m3 0h3m262 0h3m36 0h2m18 0h2m249 0h3M168 314h3m162 0h3m98 0h2m82 0h2m42 0h2m173 0h2m70 0h2m58 0h2m25 0h2m45 0h3M186 321h2m189 0h2m69 0h3m15 0h2m13 0h3m10 0h2m49 0h2m43 0h2m2 0h2m418 0h2m28 0h2M134 328h2m11 0h3m65 0h2m217 0h2m82 0h2m136 0h3m51 0h2m28 0h2m3 0h2m26 0h3m145 0h2M157 335h2m62 0h4m194 0h2m22 0h2m119 0h2m64 0h4m19 0h3m93 0h2m98 0h2m200 0h2m12 0h3M96 342h2m61 0h3m187 0h2m62 0h2m43 0h2m18 0h2m50 0h2m20 0h2m1 0h2m5 0h2m26 0h2m49 0h2m112 0h2m38 0h2m37 0h2m85 0h2m81 0h2m29 0h3M206 349h2m84 0h2m64 0h2m175 0h3m5 0h2m24 0h2m27 0h3m33 0h3m4 0h2m13 0h3m152 0h2m79 0h2m137 0h3M186 356h2m18 0h2m112 0h3m35 0h2m19 0h3m84 0h2m23 0h2m74 0h2m53 0h2m10 0h3m89 0h3m44 0h3m35 0h2m31 0h2m71 0h2M130 363h3m26 0h3m19 0h2m102 0h3m27 0h2m10 0h5m87 0h2m10 0h2m6 0h2m25 0h2m10 0h2m55 0h3m14 0h2m99 0h3m50 0h2m126 0h2m11 0h2m52 0h2m10 0h2m89 0h2m29 0h3M104 370h3m163 0h3m166 0h2m30 0h2m94 0h2m87 0h3m159 0h2m59 0h3M171 377h3M104 384h3m101 0h3m44 0h3m43 0h3m26 0h2m30 0h3m148 0h3m150 0h3m34 0h3m12 0h3m204 0h3m60 0h3M513 391h3m134 0h3m73 0h3m230 0h6M104 398h3m128 0h3m17 0h3m43 0h3m16 0h3m135 0h4m204 0h3m2 0h3m9 0h3m14 0h3m15 0h3m22 0h2m201 0h3m39 0h3M168 405h6m127 0h3m104 0h3m205 0h3m47 0h3m34 0h3m79 0h3m104 0h2m123 0h3M408 412h3m535 0h3M458 419h2M208 426h3m242 0h3m510 0h2M208 433h3M208 440h3M408 454h3M208 468h3m197 0h3"/>
<path stroke="#0a1abf" stroke-width="3" d="M183 303.5h2m98 0h2m75 0h2m55 0h2m310 0h2m125 0h3m29 0h2m35 0h3m84 0h2M102 310.5h2m12 0h2m161 0h2m197 0h2m22 0h2m231 0h2M96 317.5h2m140 0h2m52 0h2m88 0h2m5 0h2m54 0h2m49 0h4m71 0h1m22 0h2m44 0h1m327 0h2m2 0h2m52 0h1M122 324.5h2m4 0h2m101 0h2m243 0h2m22 0h2m57 0h2m42 0h1m79 0h3m23 0h1m39 0h2m28 0h2m16 0h2m70 0h2m6 0h2m9 0h2m101 0h2m27 0h3M198 331.5h2m31 0h2m5 0h2m149 0h2m109 0h2m8 0h3m42 0h2m58 0h1m65 0h2m34 0h1m11 0h2m293 0h2m27 0h2m2 0h2M299 338.5h2m55 0h2m53 0h2m8 0h2m75 0h2m2 0h2m41 0h2m17 0h2m207 0h3m112 0h2m4 0h2m13 0h2m35 0h3M134 345.5h2m97 0h2m150 0h1m130 0h2m46 0h2m40 0h1m153 0h3m70 0h1m7 0h2m55 0h2M128 352.5h2m103 0h2m23 0h2m70 0h2m53 0h1m27 0h2m38 0h3m53 0h1m120 0h2m128 0h3m73 0h2m213 0h2m6 0h2M116 359.5h2m75 0h3m15 0h3m98 0h2m137 0h2m94 0h3m12 0h2m28 0h2m103 0h1m14 0h2m100 0h2m166 0h2m30 0h2m35 0h2M114 366.5h2m31 0h3m58 0h6m17 0h2m8 0h2m84 0h3m12 0h2m43 0h2m109 0h2m9 0h1m64 0h2m5 0h1m19 0h2m3 0h1m90 0h1m42 0h2m67 0h2m9 0h2m16 0h2m54 0h2m19 0h2m32 0h3m45 0h2m15 0h2M208 373.5h3m52 0h3m73 0h3m2 0h3m106 0h3m57 0h3m9 0h3m15 0h2m65 0h3m3 0h3m9 0h2m20 0h3m73 0h3m124 0h3m98 0h2m32 0h3m26 0h3M104 380.5h3m61 0h3m10 0h2m66 0h3m11 0h3m4 0h3m2 0h2m43 0h3m7 0h2m1 0h3m3 0h3m35 0h2m48 0h2m27 0h2m2 0h2m73 0h3m29 0h2m21 0h2m30 0h2m4 0h2m11 0h2m10 0h3m135 0h2m18 0h2m5 0h2m7 0h2m5 0h2m27 0h3m127 0h2m19 0h2m15 0h3m31 0h3M122 387.5h2m33 0h2m4 0h3m55 0h2m24 0h2m66 0h2m16 0h3m3 0h3m16 0h2m74 0h2m3 0h2m189 0h2m2 0h3m16 0h6m86 0h2m44 0h2m13 0h2m1 0h4m14 0h2m5 0h2m77 0h2m87 0h2M221 394.5h4m24 0h3m78 0h2m1 0h3m41 0h5m57 0h2m15 0h2m8 0h2m50 0h2m10 0h2m98 0h2m2 0h6m13 0h6m24 0h6m42 0h2m146 0h3m14 0h2m33 0h3m15 0h3m24 0h2m87 0h3M104 401.5h3m50 0h5m19 0h2m80 0h3m35 0h3m8 0h2m19 0h3m107 0h2m21 0h2m23 0h2m20 0h3m9 0h3m7 0h3m72 0h3m40 0h3m22 0h3m37 0h3m22 0h4m8 0h2m16 0h3m67 0h1m105 0h3m2 0h2m3 0h6m1 0h2m8 0h2m6 0h2M159 408.5h3m16 0h5m13 0h2m8 0h2m7 0h2m32 0h5m16 0h3m63 0h3m5 0h3m104 0h2m5 0h2m65 0h3m2 0h2m11 0h2m7 0h2m10 0h2m41 0h3m12 0h2m6 0h2m2 0h6m16 0h3m27 0h3m54 0h2m10 0h4m59 0h2m105 0h3m21 0h3m10 0h3m28 0h2m36 0h3m31 0h3M163 415.5h3m154 0h3m10 0h3m124 0h2m9 0h2m70 0h2m62 0h3m18 0h2m7 0h3m63 0h3m173 0h3m80 0h3m11 0h2m15 0h2M215 422.5h2m4 0h2m12 0h3m47 0h3m48 0h3m95 0h2m174 0h3m130 0h2m201 0h3m5 0h2m64 0h3m8 0h3M157 429.5h2m76 0h3m222 0h2m4 0h2m166 0h3m144 0h2m130 0h2m13 0h2m32 0h3m1 0h2m8 0h2m6 0h2m18 0h2M157 436.5h2m64 0h2m218 0h2m8 0h3m469 0h3m60 0h3M221 443.5h4m741 0h2M429 450.5h2m3 0h2m17 0h3m2 0h2m11 0h2m440 0h2m28 0h3m8 0h2m3 0h3m22 0h2m2 0h3m26 0h3m18 0h3M456 457.5h2m2 0h2m9 0h2m486 0h6M208 464.5h3m242 0h3m510 0h2m20 0h3M221 471.5h2m196 0h2m32 0h3m2 0h2m494 0h2m10 0h2m34 0h2M453 478.5h3m2 0h2m494 0h2m32 0h3M984 485.5h2M208 492.5h3"/>
<path stroke="#0a1abf" stroke-width="4" d="M122 300h2m238 0h3m20 0h1m78 0h2m36 0h2m90 0h2m51 0h2m80 0h2m83 0h2m233 0h2M342 307h2m43 0h2m274 0h2m165 0h3m65 0h2M456 314h2m4 0h2m17 0h3m12 0h2m124 0h2m85 0h1m13 0h2m113 0h2m177 0h6m24 0h2M198 321h2m31 0h2m25 0h2m19 0h2m79 0h2m65 0h2m16 0h2m60 0h2m83 0h2m21 0h1m24 0h1m189 0h4m32 0h2m18 0h2m80 0h2m42 0h2m15 0h2m18 0h2M98 328h1m17 0h2m293 0h2m49 0h2m5 0h2m27 0h2m192 0h2m126 0h2m11 0h1m192 0h1m45 0h2M154 335h2m37 0h1m8 0h2m69 0h2m30 0h2m80 0h2m47 0h1m115 0h2m127 0h2m14 0h3m60 0h3m114 0h2m15 0h2m112 0h2m43 0h2M102 342h2m24 0h2m10 0h2m91 0h2m6 0h2m36 0h2m13 0h2m180 0h2m35 0h3m2 0h2m49 0h2m32 0h1m110 0h2m128 0h2m1 0h2m142 0h2m21 0h2M114 349h2m136 0h2m135 0h2m33 0h2m70 0h2m96 0h2m44 0h1m92 0h2m48 0h2m8 0h2m5 0h2m195 0h2m25 0h2M112 356h2m22 0h2m66 0h2m22 0h2m102 0h1m9 0h2m67 0h2m18 0h2m20 0h3m28 0h2m10 0h2m2 0h2m16 0h2m51 0h1m81 0h3m25 0h2m80 0h2m28 0h2m43 0h2m46 0h2m10 0h2m104 0h2m38 0h2m3 0h2m25 0h2M171 363h3m28 0h2m24 0h3m37 0h2m29 0h2m61 0h3m64 0h2m279 0h4m15 0h2m21 0h3m16 0h2m24 0h2m116 0h2m74 0h2m60 0h2m2 0h2M143 370h2m59 0h2m25 0h2m25 0h2m32 0h2m5 0h2m67 0h2m99 0h2m76 0h3m9 0h3m12 0h2m3 0h2m3 0h3m14 0h2m29 0h2m11 0h2m62 0h1m201 0h2m66 0h2m63 0h2m5 0h2m4 0h2m17 0h2M208 377h3m147 0h2m311 0h3m26 0h3m52 0h2m11 0h2m122 0h2m65 0h3M157 384h2m4 0h3m12 0h3m25 0h2m7 0h2m53 0h3m85 0h4m15 0h2m13 0h2m6 0h2m17 0h2m8 0h2m17 0h3m9 0h2m90 0h2m8 0h2m10 0h2m8 0h3m3 0h2m6 0h3m27 0h2m4 0h6m38 0h3m2 0h3m71 0h2m52 0h2m14 0h2m44 0h3m3 0h3m16 0h2m43 0h3m92 0h3m24 0h3M163 391h3m2 0h3m52 0h2m60 0h3m27 0h2m13 0h2m19 0h3m23 0h5m10 0h2m33 0h2m14 0h2m6 0h2m3 0h2m2 0h2m85 0h3m2 0h2m8 0h2m20 0h3m41 0h2m7 0h3m112 0h3m11 0h2m43 0h2m60 0h3m117 0h2m36 0h3m1 0h3m27 0h3M107 398h2m25 0h2m23 0h3m9 0h3m4 0h3m27 0h3m119 0h2m45 0h2m15 0h2m23 0h2m30 0h2m3 0h2m67 0h3m17 0h2m5 0h2m5 0h2m15 0h3m19 0h3m6 0h3m31 0h2m7 0h3m33 0h3m21 0h2m83 0h2m66 0h3m26 0h2m19 0h2m26 0h2m6 0h3m10 0h3m11 0h2m6 0h2m16 0h4m11 0h3M104 405h3m71 0h3m5 0h2m27 0h2m32 0h3m18 0h3m2 0h2m59 0h3m40 0h3m37 0h2m8 0h2m12 0h2m8 0h5m8 0h2m57 0h3m7 0h3m90 0h2m26 0h3m90 0h2m4 0h2m116 0h3m3 0h3m31 0h2m10 0h3m3 0h3m42 0h2m15 0h2m7 0h2m27 0h3m21 0h2m8 0h3M104 412h3m52 0h3m101 0h3m4 0h3m2 0h2m56 0h3m41 0h2m13 0h2m33 0h4m3 0h2m17 0h5m2 0h2m168 0h2m2 0h3m16 0h3m27 0h3m105 0h2m18 0h2m88 0h2m56 0h3m4 0h2m34 0h2m27 0h3m1 0h3M104 419h3m99 0h2m27 0h3m9 0h2m36 0h3m27 0h2m83 0h2m54 0h2m8 0h2m3 0h2m79 0h2m28 0h2m23 0h3m145 0h2m144 0h2m56 0h3m14 0h2m57 0h3M206 426h2m7 0h2m4 0h2m89 0h2m137 0h2m460 0h2m10 0h5m24 0h2m28 0h2M147 433h3m71 0h2m237 0h2m451 0h2m44 0h3m55 0h3m18 0h3m21 0h3M443 440h2m13 0h4m479 0h2m3 0h3m13 0h3m28 0h2m7 0h4M235 447h3m213 0h2m13 0h2m478 0h3m27 0h2m53 0h3M206 454h2m27 0h3m215 0h5m467 0h5m32 0h3m23 0h3m26 0h3M221 461h2m206 0h2m8 0h2m12 0h5m2 0h2m451 0h2m10 0h3m38 0h2m20 0h3M460 468h2m4 0h2m457 0h3m18 0h3m35 0h2m2 0h3m11 0h2m27 0h3M223 475h2m10 0h3m170 0h3m47 0h2m494 0h2M1038 482h3"/>
<path stroke="#0f1fd9" stroke-width="3" d="M613 303.5h2m62 0h1M240 310.5h1m13 0h1m71 0h4m106 0h1m103 0h2m154 0h1M116 317.5h2m32 0h2m108 0h1m27 0h1m180 0h2m185 0h3m181 0h1M111 324.5h1m154 0h2m97 0h1m118 0h2m421 0h2m10 0h2M142 331.5h1m57 0h1m240 0h1m90 0h1m71 0h1M475 338.5h1m56 0h1m192 0h1m21 0h1m54 0h2m25 0h1m98 0h2m7 0h1m30 0h2m29 0h2M118 345.5h1m37 0h1m122 0h2m161 0h1m316 0h1m210 0h2M142 352.5h1m46 0h1m71 0h2m18 0h1m100 0h3m30 0h1m521 0h1M98 359.5h1m3 0h2m16 0h2m66 0h1m28 0h2m442 0h2m53 0h1m253 0h2m55 0h1M102 366.5h2m71 0h1m9 0h1m60 0h3m19 0h2m39 0h2m15 0h1m88 0h1m155 0h1m142 0h2m63 0h2m101 0h1m93 0h2m13 0h2m36 0h2m41 0h2M157 373.5h2m9 0h3m15 0h2m18 0h2m7 0h2m4 0h2m29 0h2m61 0h2m16 0h3m15 0h3m6 0h2m15 0h2m29 0h3m2 0h2m12 0h4m35 0h2m3 0h2m8 0h3m10 0h2m11 0h2m38 0h3m9 0h2m1 0h2m3 0h2m7 0h3m197 0h2m10 0h3m4 0h4m7 0h2m19 0h2m7 0h2m5 0h3m3 0h2m12 0h3m18 0h2m107 0h2m7 0h4m29 0h3m6 0h2m9 0h4m6 0h3m4 0h2M122 380.5h2m6 0h3m1 0h2m42 0h3m9 0h2m4 0h2m6 0h2m32 0h2m7 0h2m3 0h2m1 0h3m19 0h1m14 0h2m11 0h2m10 0h3m24 0h3m2 0h2m11 0h3m3 0h2m19 0h2m3 0h2m4 0h2m22 0h2m5 0h2m74 0h2m4 0h3m41 0h2m56 0h1m16 0h2m9 0h2m64 0h3m43 0h4m7 0h2m13 0h7m9 0h2m15 0h4m25 0h1m15 0h3m39 0h4m6 0h2m30 0h3m10 0h2m62 0h3m1 0h2m9 0h3m17 0h2M130 387.5h3m3 0h2m40 0h3m21 0h2m29 0h2m42 0h1m34 0h2m3 0h3m27 0h2m2 0h3m6 0h2m4 0h2m14 0h2m10 0h2m25 0h2m1 0h2m5 0h2m14 0h4m20 0h2m8 0h3m26 0h6m2 0h2m35 0h4m31 0h4m51 0h2m36 0h3m24 0h4m4 0h3m8 0h2m2 0h2m20 0h2m3 0h3m5 0h2m1 0h2m43 0h2m12 0h3m5 0h2m4 0h3m32 0h3m2 0h6m2 0h2m118 0h4m8 0h2m18 0h2m5 0h2m9 0h3m13 0h2M122 394.5h2m4 0h2m6 0h2m12 0h2m7 0h3m28 0h2m1 0h1m10 0h4m3 0h3m14 0h2m8 0h2m15 0h3m19 0h1m16 0h2m16 0h2m1 0h10m57 0h2m1 0h1m43 0h2m6 0h2m9 0h5m25 0h2m27 0h2m53 0h2m5 0h2m3 0h2m14 0h2m15 0h3m31 0h2m63 0h2m1 0h1m27 0h2m1 0h2m21 0h2m11 0h2m3 0h2m33 0h2m2 0h2m8 0h3m5 0h2m6 0h1m9 0h3m7 0h2m1 0h2m30 0h4m4 0h2m10 0h2m11 0h2m72 0h2m7 0h6m32 0h2m15 0h6M112 401.5h2m8 0h2m6 0h3m35 0h6m4 0h3m9 0h2m4 0h2m4 0h2m22 0h2m2 0h1m16 0h2m6 0h5m15 0h2m2 0h2m13 0h2m21 0h3m22 0h2m3 0h4m3 0h2m12 0h2m43 0h2m9 0h2m1 0h2m8 0h2m12 0h2m25 0h2m14 0h4m2 0h2m26 0h2m17 0h3m2 0h2m3 0h2m10 0h2m10 0h1m10 0h2m21 0h1m18 0h3m6 0h2m18 0h2m44 0h1m21 0h4m2 0h2m21 0h3m13 0h2m17 0h4m1 0h2m7 0h2m3 0h2m14 0h4m10 0h2m17 0h5m1 0h2m23 0h2m15 0h4m97 0h4m4 0h3m3 0h1m4 0h3m1 0h3m13 0h2m2 0h2m17 0h2M128 408.5h5m65 0h2m47 0h2m9 0h2m32 0h4m9 0h2m8 0h2m30 0h2m2 0h3m4 0h7m3 0h2m7 0h2m8 0h2m5 0h2m4 0h2m11 0h2m16 0h2m10 0h2m8 0h3m42 0h2m10 0h3m77 0h4m7 0h2m12 0h1m55 0h3m9 0h3m14 0h3m9 0h2m9 0h2m8 0h4m15 0h3m13 0h2m6 0h2m3 0h2m17 0h2m42 0h2m46 0h4m15 0h2m107 0h3m1 0h2m21 0h2m4 0h2m19 0h2M128 415.5h2m4 0h4m21 0h3m24 0h2m2 0h2m23 0h2m18 0h3m20 0h2m23 0h2m20 0h2m44 0h3m6 0h2m6 0h2m24 0h2m15 0h2m11 0h2m3 0h2m17 0h3m104 0h2m12 0h2m23 0h2m36 0h2m78 0h2m23 0h2m13 0h3m2 0h2m4 0h2m6 0h2m123 0h2m3 0h4m16 0h2m26 0h3m45 0h2m15 0h2M114 422.5h2m27 0h2m45 0h2m2 0h2m8 0h2m5 0h3m17 0h2m19 0h2m19 0h2m30 0h2m10 0h6m26 0h2m43 0h2m15 0h2m16 0h2m17 0h5m3 0h6m14 0h2m3 0h3m44 0h2m104 0h3m179 0h2m25 0h1m42 0h4m4 0h2m5 0h2m8 0h2m28 0h2m6 0h3m10 0h3m11 0h2m84 0h3M112 429.5h2m8 0h2m10 0h2m7 0h2m2 0h3m65 0h2m68 0h3m17 0h2m93 0h2m35 0h4m7 0h3m5 0h2m18 0h2m282 0h3m34 0h2m35 0h2m81 0h2m30 0h3m2 0h2m3 0h3m52 0h2m4 0h3m21 0h2m7 0h2m17 0h6M206 436.5h2m7 0h2m16 0h7m173 0h2m12 0h4m17 0h3m7 0h2m6 0h2m8 0h2m303 0h2m126 0h2m20 0h3m9 0h3m51 0h2m25 0h2m9 0h3m17 0h2m8 0h5M114 443.5h2m18 0h2m11 0h3m40 0h2m19 0h3m24 0h2m4 0h2m167 0h2m9 0h2m1 0h2m10 0h2m7 0h3m18 0h4m440 0h2m6 0h2m26 0h3m30 0h2m30 0h2m19 0h3m13 0h2M114 450.5h2m31 0h3m56 0h2m13 0h4m19 0h2m162 0h3m2 0h2m4 0h2m27 0h3m498 0h3m103 0h4m6 0h3M114 457.5h2m18 0h2m58 0h2m10 0h8m1 0h2m6 0h2m6 0h2m194 0h2m502 0h3m7 0h2m6 0h3m32 0h2m31 0h3m35 0h2m19 0h2M143 464.5h2m2 0h3m54 0h2m202 0h3m10 0h2m4 0h2m14 0h2m21 0h2m449 0h2m9 0h2m19 0h3m52 0h2m45 0h2m9 0h3m9 0h2M96 471.5h2m49 0h3m48 0h2m23 0h2m13 0h2m187 0h2m16 0h2m470 0h2m6 0h5m1 0h3m9 0h3m38 0h2m7 0h2m9 0h2M147 478.5h3m46 0h2m210 0h3m8 0h2m13 0h2m7 0h2m11 0h2m2 0h2m451 0h2m31 0h3m10 0h3m14 0h2m26 0h2m11 0h3m45 0h3M206 485.5h2m15 0h2m183 0h3m16 0h2m29 0h2m11 0h2m473 0h3m27 0h2m53 0h3m1 0h3M458 492.5h4m492 0h2m10 0h2m49 0h3M966 499.5h2m20 0h3M408 506.5h3"/>
<path stroke="#0f1fd9" stroke-width="4" d="M118 300h1m156 0h2m95 0h1m50 0h1m12 0h1m533 0h2M188 307h1m317 0h1m13 0h2m6 0h2m24 0h1m17 0h2m202 0h2m269 0h2M475 314h1m8 0h2m134 0h1m55 0h1M120 321h2m78 0h1m238 0h2m179 0h1m28 0h1m44 0h1m304 0h2m25 0h1M99 328h1m11 0h1m509 0h1m177 0h1m8 0h1m32 0h2m62 0h1m117 0h1M176 335h1m100 0h1m10 0h1m117 0h2m281 0h1m49 0h1m43 0h2M217 342h2m42 0h2m15 0h1m3 0h1m15 0h1m75 0h2m8 0h1m203 0h1m316 0h1M183 349h3m188 0h2m322 0h2m78 0h1m62 0h2m76 0h2M140 356h2m396 0h2m14 0h1m6 0h1m20 0h2m14 0h3m120 0h2m19 0h1m52 0h2m173 0h2M145 363h2m47 0h2m77 0h2m50 0h1m48 0h2m6 0h2m263 0h2m321 0h2m79 0h2m6 0h2M181 370h2m32 0h4m27 0h1m51 0h1m33 0h1m49 0h2m63 0h1m52 0h2m85 0h1m59 0h2m98 0h1m56 0h2m24 0h3m5 0h2m122 0h3m7 0h2m57 0h3m1 0h3M107 377h2m34 0h2m14 0h3m16 0h3m25 0h2m13 0h2m40 0h3m11 0h1m52 0h2m19 0h3m8 0h3m27 0h2m33 0h2m24 0h5m8 0h2m10 0h2m11 0h2m37 0h2m20 0h2m8 0h2m20 0h3m11 0h3m15 0h3m18 0h3m97 0h2m27 0h2m23 0h2m25 0h2m7 0h2m5 0h2m37 0h3m20 0h2m3 0h2m18 0h2m2 0h5m13 0h3m16 0h3m11 0h2m24 0h2m10 0h2m1 0h3M107 384h2m3 0h2m26 0h2m5 0h3m21 0h3m16 0h2m38 0h3m5 0h2m18 0h2m13 0h2m4 0h2m9 0h2m28 0h3m21 0h5m33 0h2m29 0h2m12 0h2m65 0h2m13 0h4m12 0h3m17 0h5m17 0h2m25 0h4m18 0h3m5 0h2m6 0h2m6 0h3m31 0h2m34 0h2m23 0h2m26 0h2m41 0h2m1 0h2m7 0h2m26 0h3m10 0h3m1 0h3m18 0h2m17 0h2m4 0h2m4 0h2m45 0h3m3 0h2m12 0h2m51 0h3m13 0h2m4 0h2m9 0h2m6 0h2M96 391h2m9 0h2m5 0h2m12 0h2m4 0h2m4 0h2m1 0h2m45 0h2m10 0h2m4 0h3m15 0h4m25 0h5m3 0h3m9 0h2m6 0h2m20 0h2m13 0h3m4 0h3m30 0h2m25 0h2m5 0h2m41 0h2m14 0h3m20 0h2m20 0h2m9 0h1m6 0h2m25 0h4m8 0h2m2 0h2m29 0h6m36 0h2m11 0h2m43 0h2m14 0h2m10 0h3m19 0h2m15 0h2m1 0h3m10 0h3m12 0h3m6 0h2m17 0h2m9 0h2m14 0h3m3 0h2m2 0h3m10 0h2m1 0h2m15 0h2m13 0h2m6 0h2m6 0h2m69 0h3m53 0h2m5 0h2m2 0h2m5 0h3m7 0h2m2 0h2M114 398h2m12 0h5m63 0h2m28 0h2m19 0h5m11 0h3m26 0h4m3 0h2m4 0h2m42 0h2m7 0h4m4 0h4m9 0h3m7 0h2m38 0h2m6 0h2m8 0h1m33 0h3m66 0h2m3 0h2m7 0h2m3 0h2m3 0h2m8 0h3m3 0h2m9 0h2m29 0h2m9 0h2m45 0h2m34 0h3m6 0h2m20 0h2m7 0h2m17 0h6m56 0h2m7 0h3m10 0h2m13 0h2m10 0h2m13 0h2m4 0h2m35 0h2m41 0h2m25 0h2m1 0h1m16 0h2m1 0h2m19 0h2m2 0h6M96 405h2m61 0h3m34 0h2m8 0h2m36 0h2m17 0h3m24 0h2m13 0h2m5 0h2m19 0h3m13 0h2m34 0h1m6 0h2m45 0h2m6 0h1m70 0h2m8 0h2m25 0h2m7 0h2m56 0h4m37 0h2m6 0h3m12 0h3m17 0h2m4 0h2m15 0h10m1 0h2m24 0h2m5 0h3m17 0h2m5 0h2m67 0h2m13 0h2m15 0h2m6 0h4m43 0h2m24 0h2m13 0h2m75 0h2M128 412h2m51 0h2m13 0h2m6 0h2m5 0h3m1 0h2m4 0h2m10 0h7m9 0h3m27 0h2m11 0h2m33 0h3m57 0h2m24 0h2m6 0h2m55 0h2m11 0h2m5 0h2m25 0h3m17 0h7m12 0h2m8 0h5m11 0h2m9 0h2m71 0h2m27 0h3m29 0h2m3 0h2m10 0h3m5 0h3m18 0h2m60 0h1m54 0h2m9 0h6m6 0h2m2 0h3m6 0h2m36 0h2m32 0h2m19 0h1m16 0h2m28 0h2M112 419h4m12 0h2m27 0h2m24 0h2m5 0h2m4 0h2m10 0h3m4 0h2m62 0h2m24 0h2m20 0h3m64 0h2m12 0h3m2 0h2m38 0h3m13 0h2m38 0h1m13 0h1m66 0h2m48 0h1m68 0h1m50 0h3m3 0h2m46 0h6m49 0h2m25 0h2m5 0h2m83 0h3m6 0h2m15 0h2m49 0h3m6 0h2M112 426h2m82 0h2m28 0h2m228 0h2m20 0h2m36 0h2m222 0h2m24 0h2m13 0h2m33 0h2m93 0h2m30 0h3m13 0h3m76 0h3m3 0h2m5 0h2m19 0h2m4 0h2M112 433h2m22 0h2m52 0h2m4 0h2m17 0h2m11 0h3m7 0h2m168 0h3m10 0h2m6 0h2m12 0h2m3 0h3m18 0h2m5 0h2m371 0h2m5 0h3m44 0h2m4 0h2m10 0h2m5 0h2m19 0h3m4 0h2m26 0h2m22 0h2m4 0h2m4 0h3m28 0h2m25 0h2M114 440h2m18 0h2m7 0h2m2 0h3m258 0h3m2 0h2m14 0h2m20 0h2m3 0h2m11 0h4m440 0h2m6 0h2m16 0h2m86 0h1m7 0h3m15 0h4m11 0h2m4 0h2M147 447h3m46 0h2m8 0h5m4 0h2m21 0h2m168 0h3m23 0h2m12 0h3m25 0h2m322 0h2m126 0h2m19 0h3m4 0h2m10 0h2m23 0h2m9 0h2m29 0h3m27 0h3M136 454h2m5 0h2m2 0h3m58 0h3m17 0h2m8 0h2m173 0h2m36 0h2m456 0h2m20 0h3m15 0h3m14 0h2m14 0h2m30 0h2m35 0h2m2 0h4m3 0h3M228 461h2m183 0h2m51 0h2m449 0h2m22 0h5m30 0h2m15 0h2m25 0h3m34 0h2m3 0h3m3 0h2m2 0h4m2 0h2M112 468h2m33 0h3m263 0h2m12 0h2m27 0h2m20 0h2m463 0h3m30 0h2m26 0h2m8 0h2m1 0h3m37 0h2m13 0h2M112 475h2m107 0h2m190 0h2m14 0h2m17 0h5m460 0h2m31 0h6m32 0h2m69 0h4M913 482h2m13 0h2m16 0h3m5 0h2m37 0h2m40 0h3m27 0h3m6 0h2M206 489h2m200 0h3m42 0h5m2 0h2m463 0h3m18 0h3m5 0h2m6 0h3m19 0h2m2 0h3m47 0h3M988 496h3M408 503h3m555 0h2"/>
<path stroke="#1327ed" stroke-width="3" d="M177 303.5h1m194 0h1M505 310.5h1m219 0h1m180 0h1m134 0h1M110 317.5h1m312 0h1m81 0h1m16 0h1M101 324.5h1m117 0h1m273 0h1M311 331.5h1M416 338.5h1m196 0h2M402 345.5h1m13 0h1m451 0h1m7 0h1m109 0h2M370 352.5h1m171 0h1m116 0h1m16 0h1m62 0h1m132 0h1m113 0h2M219 359.5h1m91 0h1M481 366.5h5m7 0h1m171 0h1m185 0h2m181 0h1m11 0h1m14 0h1m3 0h3M102 373.5h2m24 0h2m4 0h2m4 0h2m5 0h3m80 0h1m7 0h2m18 0h2m17 0h1m5 0h2m5 0h2m2 0h2m3 0h2m19 0h5m2 0h3m6 0h3m10 0h2m17 0h2m19 0h2m1 0h2m10 0h2m5 0h2m4 0h2m2 0h2m13 0h3m21 0h2m7 0h2m5 0h4m18 0h2m2 0h2m5 0h1m8 0h4m60 0h2m6 0h2m4 0h2m3 0h2m29 0h2m9 0h2m26 0h3m16 0h4m9 0h5m15 0h2m4 0h2m2 0h2m2 0h2m4 0h2m7 0h3m13 0h2m48 0h2m10 0h3m5 0h2m26 0h2m20 0h2m8 0h2m3 0h2m4 0h2m51 0h3m5 0h2m10 0h2m13 0h2m7 0h2m19 0h1m23 0h2m23 0h2M107 380.5h2m19 0h2m13 0h2m2 0h3m4 0h2m29 0h1m6 0h2m37 0h4m8 0h1m55 0h2m3 0h1m18 0h2m7 0h1m3 0h3m8 0h2m7 0h2m8 0h2m17 0h1m59 0h2m11 0h2m2 0h2m2 0h2m7 0h1m17 0h1m8 0h2m6 0h3m17 0h2m11 0h2m16 0h1m10 0h2m8 0h2m10 0h2m41 0h3m34 0h2m16 0h2m23 0h1m3 0h2m14 0h2m29 0h2m9 0h2m21 0h2m2 0h2m1 0h2m11 0h2m23 0h2m37 0h2m2 0h1m1 0h2m13 0h2m32 0h2m31 0h2m2 0h1m5 0h2m5 0h2m24 0h3m6 0h2m1 0h2m11 0h1m6 0h4m23 0h2M114 387.5h2m3 0h1m6 0h4m3 0h1m11 0h2m3 0h2m23 0h1m7 0h2m1 0h2m5 0h1m52 0h1m11 0h2m13 0h2m13 0h1m7 0h2m1 0h2m88 0h2m35 0h3m7 0h1m8 0h2m9 0h2m17 0h5m27 0h2m14 0h1m38 0h2m7 0h1m31 0h2m10 0h1m3 0h1m27 0h2m12 0h2m34 0h1m19 0h1m5 0h2m41 0h2m27 0h2m5 0h2m4 0h1m73 0h1m11 0h2m41 0h1m11 0h3m16 0h2m21 0h2m34 0h1m3 0h3m8 0h1m4 0h2M98 394.5h1m64 0h3m2 0h3m23 0h2m6 0h2m135 0h3m9 0h3m30 0h1m39 0h2m1 0h2m14 0h5m36 0h2m16 0h2m31 0h5m12 0h2m33 0h1m38 0h1m39 0h3m45 0h2m2 0h5m48 0h2m12 0h3m21 0h2m30 0h2m10 0h3m6 0h1m21 0h2m92 0h1m20 0h2m9 0h2M116 401.5h2m36 0h2m37 0h1m50 0h3m13 0h3m18 0h2m56 0h3m2 0h3m15 0h3m17 0h2m1 0h1m1 0h2m28 0h2m23 0h1m10 0h3m15 0h2m2 0h1m33 0h1m10 0h2m1 0h1m8 0h1m17 0h2m7 0h2m6 0h2m18 0h1m15 0h1m33 0h3m10 0h3m39 0h3m8 0h3m15 0h2m56 0h2m4 0h3m39 0h2m27 0h6m15 0h2m3 0h1m9 0h2m40 0h2m63 0h2m7 0h2m17 0h1m21 0h2m8 0h2M107 408.5h2m13 0h2m2 0h2m5 0h1m13 0h3m18 0h6m14 0h1m42 0h2m27 0h1m24 0h3m42 0h2m24 0h2m46 0h2m20 0h1m15 0h1m28 0h2m14 0h3m10 0h2m4 0h1m6 0h3m31 0h3m9 0h2m10 0h1m4 0h3m9 0h1m9 0h3m2 0h1m43 0h2m21 0h1m26 0h1m5 0h3m65 0h2m12 0h3m34 0h2m5 0h1m11 0h2m6 0h2m28 0h4m24 0h2m6 0h2m51 0h2m25 0h2m2 0h2m7 0h2M133 415.5h1m41 0h1m2 0h3m2 0h3m6 0h1m15 0h3m19 0h1m21 0h2m7 0h2m7 0h5m13 0h1m5 0h2m19 0h2m8 0h1m13 0h3m16 0h2m11 0h1m5 0h2m42 0h2m8 0h2m9 0h1m38 0h3m7 0h2m1 0h2m6 0h2m2 0h1m6 0h3m9 0h3m2 0h2m15 0h5m9 0h1m9 0h1m7 0h2m15 0h2m8 0h1m6 0h3m3 0h1m20 0h1m6 0h2m12 0h2m47 0h2m97 0h2m22 0h1m39 0h3m16 0h2m11 0h1m7 0h2m53 0h2m2 0h2m32 0h2m18 0h1m38 0h3m10 0h2M102 422.5h5m15 0h2m12 0h2m12 0h2m40 0h1m54 0h2m6 0h3m5 0h3m16 0h1m43 0h1m35 0h3m20 0h1m20 0h2m37 0h2m24 0h2m11 0h2m14 0h2m28 0h2m129 0h2m29 0h2m79 0h3m28 0h2m8 0h2m11 0h2m37 0h2m9 0h2m11 0h1m18 0h2m23 0h2m32 0h2m21 0h2m6 0h2m3 0h2m2 0h2m4 0h2m1 0h3m27 0h2m19 0h2M150 429.5h2m2 0h2m37 0h3m34 0h1m10 0h2m23 0h2m55 0h2m17 0h2m60 0h2m11 0h2m22 0h2m4 0h1m5 0h3m6 0h2m59 0h1m91 0h1m141 0h2m52 0h2m33 0h1m9 0h3m37 0h2m9 0h2m2 0h2m69 0h2m24 0h2m39 0h2M136 436.5h2m60 0h2m4 0h2m103 0h2m95 0h2m28 0h1m10 0h1m14 0h2m14 0h2m427 0h2m12 0h2m45 0h2m14 0h2m5 0h2m6 0h2m9 0h2m5 0h3m11 0h3m13 0h4m23 0h2m2 0h2M96 443.5h2m42 0h2m11 0h1m38 0h1m38 0h2m57 0h2m125 0h4m10 0h2m1 0h2m5 0h1m18 0h2m317 0h2m158 0h2m13 0h2m35 0h2m13 0h2m9 0h3m33 0h2m23 0h2M116 450.5h2m22 0h2m56 0h2m221 0h2m1 0h2m10 0h1m5 0h1m4 0h1m21 0h2m7 0h2m40 0h2m385 0h2m10 0h2m13 0h2m3 0h2m35 0h2m30 0h2m43 0h2m7 0h3m11 0h4M154 457.5h2m169 0h1m78 0h2m20 0h1m21 0h3m2 0h3m457 0h2m31 0h3m5 0h2m37 0h2m2 0h2m9 0h2m16 0h1m41 0h2M140 464.5h2m51 0h1m47 0h2m163 0h2m9 0h2m12 0h2m4 0h2m12 0h2m5 0h2m455 0h2m8 0h3m18 0h3m57 0h2m19 0h1m7 0h3m15 0h2m2 0h2m11 0h2m6 0h2M112 471.5h2m22 0h2m16 0h2m40 0h2m10 0h3m15 0h2m5 0h2m171 0h2m3 0h2m11 0h2m13 0h2m505 0h3m57 0h4m19 0h2m20 0h4m10 0h3m6 0h2m2 0h2M112 478.5h6m18 0h2m73 0h3m207 0h2m6 0h2m14 0h2m19 0h2m1 0h2m463 0h2m20 0h2m24 0h2m30 0h2m8 0h2m12 0h3m12 0h4M136 485.5h2m58 0h2m6 0h2m2 0h3m15 0h2m191 0h2m22 0h2m466 0h4m34 0h3m2 0h2m18 0h2m81 0h2m3 0h8M196 492.5h2m33 0h2m191 0h2m3 0h2m6 0h2m474 0h2m10 0h3m65 0h2m9 0h2m25 0h3m1 0h3m17 0h2m15 0h2m2 0h2M147 499.5h3m71 0h2m220 0h2m468 0h2m28 0h3m13 0h3m22 0h2m16 0h2m61 0h3M954 506.5h2m10 0h2M408 520.5h3"/>
<path stroke="#1327ed" stroke-width="4" d="M382 300h2m89 0h1m50 0h1m413 0h1M152 314h1m155 0h1m567 0h1M143 321h2m323 0h1m403 0h1m143 0h1M402 328h2M100 335h2m50 0h1m217 0h1m428 0h1m52 0h1M676 342h1M100 349h1m32 0h1m269 0h1m106 0h3m147 0h1m147 0h1M110 356h1m166 0h1m96 0h2m148 0h1m101 0h1m173 0h2m44 0h1m199 0h1M110 363h1m100 0h3m254 0h1m119 0h1m70 0h1m36 0h1m62 0h1m163 0h1M147 370h3m44 0h2m83 0h2m167 0h3m578 0h2M122 377h2m6 0h3m1 0h2m57 0h1m8 0h2m7 0h3m14 0h2m14 0h2m44 0h4m55 0h2m3 0h2m4 0h2m4 0h2m21 0h2m3 0h2m21 0h6m3 0h1m18 0h2m11 0h4m14 0h2m18 0h4m2 0h2m3 0h3m3 0h3m12 0h2m15 0h2m8 0h2m2 0h2m8 0h2m5 0h3m3 0h2m6 0h2m4 0h2m8 0h1m17 0h2m6 0h5m46 0h3m17 0h5m9 0h4m22 0h2m15 0h3m8 0h2m8 0h2m5 0h3m2 0h2m21 0h2m2 0h2m21 0h3m23 0h2m15 0h2m15 0h2m61 0h2m6 0h2m6 0h2m40 0h3m30 0h2M120 384h2m59 0h2m9 0h1m1 0h4m54 0h2m9 0h3m23 0h1m6 0h2m53 0h3m35 0h2m13 0h2m56 0h2m7 0h2m62 0h3m26 0h2m13 0h2m119 0h3m88 0h2m2 0h2m7 0h2m14 0h4m17 0h2m10 0h3m6 0h1m33 0h2m21 0h2m7 0h2m46 0h2m15 0h2m7 0h2m6 0h2m19 0h3m25 0h2m11 0h2M104 391h3m12 0h1m10 0h3m12 0h2m12 0h4m20 0h2m21 0h2m13 0h2m23 0h1m2 0h3m14 0h2m2 0h3m63 0h3m43 0h2m50 0h2m5 0h1m6 0h3m53 0h1m30 0h3m58 0h2m32 0h2m24 0h3m1 0h1m42 0h3m4 0h2m47 0h1m23 0h2m6 0h2m9 0h2m18 0h2m17 0h2m4 0h2m28 0h2m15 0h2m17 0h2m19 0h2m30 0h4m2 0h2m21 0h2m5 0h2m55 0h2M116 398h2m32 0h2m40 0h1m1 0h2m44 0h1m25 0h2m21 0h1m25 0h2m15 0h1m9 0h2m41 0h1m48 0h2m58 0h2m2 0h2m10 0h6m22 0h2m3 0h2m9 0h1m2 0h2m20 0h2m1 0h2m21 0h1m9 0h4m9 0h2m44 0h2m47 0h2m17 0h1m27 0h1m8 0h2m2 0h2m19 0h2m8 0h2m17 0h1m9 0h1m9 0h3m23 0h3m12 0h2m2 0h2m79 0h2M111 405h1m7 0h1m37 0h2m4 0h3m17 0h2m23 0h3m35 0h1m8 0h3m21 0h2m7 0h1m50 0h3m20 0h3m12 0h2m27 0h2m9 0h2m18 0h2m45 0h2m12 0h2m2 0h2m46 0h2m10 0h2m3 0h2m10 0h2m6 0h1m8 0h5m2 0h1m9 0h2m5 0h1m19 0h1m9 0h6m5 0h2m29 0h2m6 0h3m14 0h4m62 0h2m6 0h2m9 0h2m16 0h4m9 0h1m12 0h1m35 0h1m3 0h2m2 0h1m16 0h2m19 0h2m40 0h2m27 0h2M111 412h1m41 0h1m9 0h3m2 0h6m1 0h1m2 0h3m39 0h1m7 0h2m17 0h2m3 0h2m1 0h3m24 0h1m2 0h3m13 0h3m19 0h3m6 0h1m25 0h2m2 0h3m17 0h2m52 0h1m5 0h1m15 0h2m4 0h2m18 0h2m8 0h2m17 0h3m4 0h2m6 0h2m22 0h2m8 0h2m15 0h2m3 0h4m18 0h1m9 0h4m46 0h3m1 0h1m26 0h1m2 0h3m11 0h2m27 0h2m18 0h2m20 0h6m11 0h2m29 0h1m43 0h2m13 0h6m9 0h2m30 0h2m50 0h2m6 0h2m7 0h2m2 0h2m35 0h2m25 0h4M102 419h2m12 0h2m2 0h2m18 0h2m11 0h1m21 0h1m55 0h2m22 0h3m3 0h2m7 0h5m21 0h2m1 0h5m52 0h2m8 0h2m14 0h2m8 0h2m25 0h2m41 0h2m40 0h1m76 0h1m2 0h4m17 0h2m23 0h2m115 0h1m9 0h2m9 0h2m1 0h2m6 0h2m10 0h2m7 0h2m2 0h2m23 0h1m17 0h2m17 0h2m11 0h3m6 0h2m2 0h4m66 0h3m7 0h2m5 0h2m21 0h2m13 0h3m6 0h1m45 0h2m4 0h2M116 426h2m71 0h1m3 0h3m2 0h2m30 0h1m21 0h2m25 0h2m9 0h2m4 0h2m27 0h1m40 0h2m116 0h2m34 0h2m1 0h1m45 0h2m168 0h1m2 0h1m2 0h2m86 0h1m83 0h2m12 0h3m36 0h2m23 0h2m2 0h2m46 0h2m4 0h2m10 0h3M116 433h2m22 0h2m11 0h1m77 0h2m66 0h2m136 0h2m2 0h2m13 0h2m13 0h2m297 0h3m10 0h2m194 0h2m23 0h2m21 0h1m19 0h2M111 440h1m38 0h2m1 0h1m5 0h3m59 0h2m3 0h2m5 0h2m61 0h2m147 0h2m1 0h3m379 0h4m4 0h2m114 0h2m2 0h1m7 0h2m11 0h2m3 0h2m11 0h4m41 0h1m4 0h2m2 0h2m25 0h2M136 447h2m16 0h2m38 0h2m30 0h2m3 0h2m56 0h1m114 0h4m19 0h2m2 0h2m12 0h2m6 0h3m6 0h2m453 0h2m6 0h3m26 0h2m23 0h2m3 0h2m16 0h2M96 454h2m4 0h2m49 0h1m35 0h1m8 0h2m4 0h2m24 0h1m94 0h1m91 0h2m2 0h2m4 0h2m2 0h2m25 0h2m2 0h2m470 0h2m3 0h2m31 0h2m21 0h2m15 0h2m33 0h2m4 0h2m23 0h2M190 461h2m6 0h2m11 0h3m12 0h2m5 0h2m9 0h2m160 0h2m19 0h2m18 0h1m14 0h2m5 0h2m463 0h2m13 0h3m20 0h2m8 0h2m54 0h3M96 468h2m56 0h2m70 0h4m5 0h3m168 0h2m3 0h2m29 0h1m4 0h1m393 0h2m64 0h2m6 0h2m37 0h2m52 0h2m14 0h2m3 0h2m18 0h2m2 0h2M116 475h2m36 0h2m34 0h2m1 0h3m37 0h2m208 0h2m17 0h2m445 0h4m28 0h2m59 0h2m25 0h2m13 0h2m1 0h2m13 0h3m11 0h2M134 482h2m60 0h2m28 0h2m196 0h2m3 0h2m17 0h5m5 0h2m6 0h2m8 0h2m433 0h2m4 0h2m15 0h2m30 0h2m20 0h3m13 0h4m6 0h2m8 0h2m25 0h4m17 0h2M140 489h2m5 0h3m40 0h2m235 0h2m10 0h2m2 0h2m21 0h2m445 0h2m26 0h2m6 0h3m4 0h2m18 0h2m42 0h3m1 0h2m5 0h3m1 0h3m6 0h2m11 0h2M143 496h2m2 0h3m73 0h2m183 0h3m8 0h2m6 0h2m5 0h2m15 0h2m3 0h2m463 0h2m5 0h2m11 0h11m2 0h2m28 0h2m7 0h2m22 0h3m18 0h3M147 503h3m56 0h2m221 0h2m12 0h2m6 0h2m7 0h2m9 0h2m486 0h6m52 0h3m11 0h3M966 510h2m49 0h3"/>
<path stroke="#182ffe" stroke-width="3" d="M201 324.5h1m611 0h1M391 338.5h1m359 0h1m61 0h1m122 0h1M953 345.5h1M391 352.5h1m538 0h1M174 366.5h1m650 0h1M111 373.5h1m6 0h1m1 0h2m11 0h1m16 0h2m29 0h2m31 0h1m11 0h2m5 0h2m11 0h1m8 0h3m2 0h1m9 0h3m28 0h3m22 0h1m27 0h2m44 0h2m1 0h1m15 0h2m5 0h1m60 0h3m33 0h1m6 0h2m1 0h2m10 0h2m25 0h2m13 0h1m17 0h1m7 0h2m5 0h1m79 0h3m7 0h2m4 0h2m39 0h2m74 0h1m12 0h3m7 0h7m52 0h2m8 0h3m6 0h2m10 0h3m9 0h1m6 0h3m8 0h2m13 0h2m2 0h2m2 0h2m25 0h1m2 0h2m18 0h2m8 0h2M96 380.5h2m28 0h2m48 0h1m11 0h1m19 0h3m9 0h1m23 0h3m68 0h2m10 0h3m21 0h3m48 0h2m15 0h2m59 0h1m42 0h1m14 0h2m52 0h2m12 0h1m6 0h2m12 0h1m6 0h3m40 0h4m22 0h3m19 0h1m14 0h2m5 0h1m40 0h3m4 0h2m2 0h1m29 0h1m8 0h2m31 0h1m47 0h2m16 0h1m20 0h4m3 0h1m77 0h1M98 387.5h1m3 0h2m34 0h2m16 0h1m5 0h1m57 0h1m19 0h1m41 0h1m96 0h3m69 0h2m9 0h2m4 0h1m64 0h2m87 0h2m111 0h2m41 0h1m14 0h2m5 0h2m47 0h2m11 0h1m43 0h1m77 0h2m37 0h1m25 0h2m10 0h1M118 394.5h1m15 0h2m2 0h2m2 0h1m4 0h3m6 0h1m19 0h1m108 0h3m1 0h1m14 0h1m2 0h1m107 0h2m36 0h3m37 0h3m32 0h2m15 0h2m7 0h1m50 0h1m15 0h5m33 0h1m14 0h2m32 0h1m7 0h1m43 0h3m2 0h1m38 0h5m9 0h2m4 0h1m22 0h4m8 0h3m133 0h2m26 0h1m46 0h2M107 401.5h2m29 0h2m3 0h2m109 0h1m49 0h1m2 0h1m7 0h2m9 0h4m40 0h1m52 0h1m56 0h1m37 0h2m13 0h2m39 0h2m12 0h1m5 0h2m44 0h1m15 0h4m23 0h3m11 0h1m8 0h2m39 0h1m4 0h3m4 0h1m10 0h1m7 0h1m9 0h3m15 0h3m7 0h2m4 0h2m5 0h1m8 0h3m5 0h1m5 0h4m12 0h1m27 0h7m83 0h2m35 0h1m18 0h1m3 0h1M101 408.5h1m7 0h2m65 0h1m78 0h3m8 0h2m28 0h2m74 0h1m3 0h1m7 0h1m95 0h1m35 0h2m10 0h2m2 0h3m3 0h2m5 0h2m3 0h2m3 0h2m25 0h2m10 0h4m28 0h2m22 0h3m24 0h4m13 0h1m11 0h2m10 0h3m4 0h1m3 0h2m9 0h2m17 0h1m18 0h1m9 0h5m6 0h1m2 0h2m4 0h1m5 0h4m15 0h1m4 0h2m12 0h1m6 0h3m6 0h1m4 0h3m8 0h2m4 0h1m52 0h3m45 0h2m35 0h1m17 0h1m4 0h2M96 415.5h2m1 0h1m4 0h3m11 0h1m3 0h2m52 0h1m12 0h1m57 0h5m23 0h3m3 0h2m2 0h3m1 0h1m18 0h1m17 0h1m3 0h2m12 0h7m21 0h2m5 0h5m3 0h2m13 0h1m83 0h1m29 0h2m4 0h1m15 0h2m2 0h1m11 0h1m9 0h2m15 0h1m6 0h1m1 0h4m7 0h2m7 0h3m9 0h2m17 0h2m13 0h3m4 0h2m13 0h3m9 0h2m8 0h3m3 0h3m24 0h4m8 0h3m1 0h2m25 0h2m1 0h2m12 0h2m2 0h2m1 0h2m6 0h1m2 0h2m14 0h3m4 0h2m11 0h2m3 0h1m15 0h1m29 0h3m18 0h2m16 0h1m1 0h2m24 0h1m36 0h2m40 0h2m9 0h2M100 422.5h1m18 0h1m13 0h3m21 0h2m3 0h1m8 0h3m4 0h3m4 0h1m12 0h3m19 0h1m17 0h2m26 0h2m2 0h3m8 0h1m1 0h2m4 0h1m25 0h2m10 0h5m22 0h2m4 0h2m9 0h3m5 0h3m10 0h2m6 0h2m19 0h2m16 0h2m46 0h3m8 0h2m9 0h4m7 0h2m2 0h1m7 0h1m5 0h2m5 0h5m14 0h2m1 0h2m7 0h3m9 0h1m3 0h4m5 0h2m2 0h1m14 0h1m6 0h1m2 0h2m24 0h3m86 0h2m13 0h3m5 0h2m6 0h3m16 0h2m29 0h1m9 0h2m2 0h1m8 0h2m1 0h1m15 0h1m96 0h3m61 0h2m3 0h4m8 0h1m29 0h2M98 429.5h1m3 0h2m24 0h2m58 0h2m8 0h2m40 0h1m63 0h1m20 0h2m88 0h1m48 0h2m27 0h1m15 0h1m28 0h2m15 0h2m44 0h2m27 0h2m44 0h1m17 0h1m14 0h1m56 0h2m3 0h2m12 0h3m11 0h1m9 0h2m18 0h1m3 0h1m15 0h2m20 0h1m19 0h1m6 0h2m37 0h1m3 0h2m15 0h1M114 436.5h2m2 0h1m9 0h2m15 0h5m3 0h1m31 0h1m10 0h2m42 0h1m2 0h1m3 0h2m36 0h4m16 0h4m6 0h2m83 0h2m73 0h1m10 0h1m19 0h1m98 0h1m146 0h3m16 0h2m24 0h2m7 0h2m16 0h1m38 0h3m18 0h2m5 0h1m27 0h2m16 0h1m1 0h4m35 0h1m59 0h3m16 0h2m13 0h2M99 443.5h1m10 0h1m22 0h1m8 0h3m80 0h1m7 0h5m5 0h1m37 0h1m3 0h3m1 0h1m4 0h2m2 0h1m103 0h1m73 0h4m367 0h2m22 0h1m28 0h1m6 0h2m6 0h2m2 0h2m16 0h1m20 0h1m9 0h2m8 0h1m37 0h1m3 0h3m20 0h1m2 0h1m25 0h4M96 450.5h3m2 0h1m52 0h2m36 0h1m38 0h2m2 0h3m5 0h1m37 0h1m121 0h1m13 0h2m22 0h1m22 0h2m10 0h2m44 0h1m236 0h1m42 0h2m5 0h2m18 0h1m8 0h2m85 0h3m115 0h1m15 0h2m13 0h2M98 457.5h1m13 0h2m33 0h3m2 0h1m36 0h1m2 0h1m33 0h2m7 0h5m86 0h1m76 0h1m11 0h1m26 0h1m32 0h1m490 0h2m6 0h4m10 0h3m13 0h2m38 0h2m5 0h2m19 0h2M112 464.5h4m22 0h2m52 0h1m24 0h2m11 0h1m9 0h1m2 0h1m65 0h2m92 0h1m19 0h1m38 0h4m9 0h3m42 0h2m415 0h1m72 0h2m11 0h1m14 0h3m14 0h2m2 0h2M98 471.5h1m17 0h3m15 0h2m6 0h1m13 0h1m28 0h1m4 0h3m13 0h2m35 0h1m160 0h2m2 0h3m4 0h1m27 0h2m15 0h6m10 0h2m433 0h2m8 0h2m26 0h3m10 0h3m23 0h3m26 0h3m4 0h2M98 478.5h1m39 0h2m10 0h2m56 0h3m19 0h1m195 0h1m12 0h2m21 0h2m56 0h2m387 0h2m14 0h3m21 0h3m13 0h3m2 0h2m38 0h2m17 0h2m16 0h2m13 0h3M96 485.5h2m18 0h2m16 0h2m4 0h2m1 0h4m3 0h2m2 0h2m65 0h2m5 0h2m1 0h2m8 0h2m161 0h2m28 0h2m12 0h3m9 0h2m477 0h2m38 0h2m10 0h2m6 0h2m1 0h2m2 0h2m6 0h2m1 0h3m6 0h1m20 0h2m2 0h6m17 0h2M150 492.5h2m2 0h2m38 0h2m6 0h4m20 0h2m193 0h2m3 0h1m18 0h2m4 0h2m456 0h2m4 0h4m20 0h2m5 0h3m46 0h2m9 0h2m19 0h1m40 0h2m4 0h2m2 0h2M198 499.5h2m8 0h6m1 0h2m196 0h2m16 0h2m15 0h3m9 0h2m7 0h2m457 0h2m4 0h2m20 0h2m56 0h2m11 0h1m1 0h2m4 0h3m38 0h2M206 506.5h8m215 0h2m3 0h2m3 0h2m12 0h5m455 0h2m6 0h2m5 0h2m11 0h2m6 0h3m7 0h3m14 0h2m34 0h2m3 0h3m31 0h2M147 513.5h3m58 0h3m4 0h2m4 0h2m233 0h2m470 0h2m16 0h3m17 0h2m36 0h2m11 0h3m11 0h3M966 520.5h2m20 0h3"/>
<path stroke="#182ffe" stroke-width="4" d="M995 349h2M938 370h1M98 377h1m13 0h4m2 0h1m9 0h2m3 0h1m32 0h1m19 0h2m64 0h2m14 0h2m11 0h1m12 0h2m2 0h1m21 0h3m10 0h3m38 0h2m6 0h2m20 0h4m31 0h3m27 0h2m16 0h3m35 0h3m4 0h1m10 0h2m5 0h2m2 0h1m52 0h3m3 0h2m5 0h1m1 0h2m4 0h2m10 0h1m15 0h3m1 0h1m13 0h2m5 0h2m6 0h1m8 0h2m10 0h2m14 0h3m20 0h2m55 0h2m3 0h2m1 0h2m43 0h4m19 0h1m8 0h1m13 0h1m31 0h1m8 0h3m30 0h2m14 0h2m13 0h2m19 0h3m10 0h2m28 0h2M96 384h2m16 0h2m14 0h3m5 0h2m14 0h2m32 0h1m22 0h4m39 0h1m101 0h2m36 0h2m20 0h1m30 0h1m38 0h1m9 0h2m6 0h1m27 0h3m69 0h2m16 0h2m25 0h1m62 0h2m2 0h1m42 0h1m39 0h1m8 0h1m31 0h1m15 0h3m7 0h6m22 0h2m53 0h3m6 0h1m7 0h2m76 0h2M111 391h1m65 0h1m22 0h1m18 0h1m5 0h1m12 0h2m52 0h2m15 0h2m15 0h1m44 0h1m13 0h1m31 0h2m20 0h2m53 0h2m130 0h1m49 0h2m38 0h1m59 0h2m15 0h2m5 0h2m4 0h3m5 0h2m10 0h1m2 0h1m4 0h2m23 0h3m36 0h2m31 0h3m31 0h1m77 0h1M98 398h2m10 0h1m29 0h2m20 0h4m9 0h1m44 0h1m10 0h2m35 0h7m2 0h1m1 0h2m63 0h3m7 0h2m9 0h1m5 0h1m30 0h1m72 0h1m10 0h1m53 0h2m62 0h1m25 0h2m15 0h3m9 0h2m102 0h2m32 0h5m4 0h2m8 0h2m6 0h1m2 0h6m3 0h2m21 0h3m6 0h1m4 0h3m62 0h1m43 0h2m2 0h2m35 0h1M102 405h2m14 0h1m7 0h2m5 0h1m33 0h1m21 0h3m36 0h2m17 0h2m11 0h1m65 0h1m17 0h3m18 0h1m18 0h1m4 0h2m60 0h2m16 0h2m4 0h3m13 0h2m1 0h2m47 0h2m45 0h2m13 0h1m53 0h1m16 0h1m32 0h1m15 0h1m42 0h3m10 0h2m5 0h3m8 0h1m18 0h2m14 0h2m8 0h2m3 0h2m8 0h3m36 0h2m58 0h1m27 0h2m28 0h1M98 412h2m2 0h2m10 0h2m17 0h1m9 0h2m2 0h3m16 0h1m39 0h2m9 0h2m6 0h1m14 0h1m3 0h2m14 0h1m17 0h1m19 0h1m6 0h3m12 0h3m21 0h5m2 0h3m16 0h1m18 0h2m20 0h2m67 0h1m26 0h2m9 0h2m10 0h2m3 0h3m5 0h2m10 0h2m25 0h2m8 0h2m4 0h3m3 0h1m8 0h2m7 0h4m1 0h3m11 0h2m6 0h4m3 0h3m1 0h1m25 0h3m19 0h1m1 0h2m14 0h3m2 0h4m4 0h1m9 0h2m4 0h2m11 0h2m25 0h2m3 0h2m4 0h2m1 0h2m5 0h2m22 0h1m3 0h2m27 0h3m6 0h1m1 0h2m5 0h1m39 0h3m24 0h1m11 0h2m38 0h2m49 0h1M98 419h1m8 0h2m2 0h1m18 0h3m30 0h3m23 0h1m8 0h2m44 0h2m6 0h3m8 0h3m28 0h2m8 0h1m2 0h1m9 0h3m16 0h6m2 0h3m7 0h2m4 0h2m6 0h2m1 0h1m13 0h1m1 0h2m13 0h1m12 0h1m64 0h4m3 0h3m1 0h2m7 0h2m3 0h1m7 0h3m4 0h2m6 0h2m3 0h2m3 0h2m5 0h2m7 0h1m19 0h5m42 0h3m4 0h2m15 0h2m6 0h3m3 0h1m3 0h2m25 0h2m2 0h1m13 0h1m3 0h2m15 0h2m9 0h2m1 0h2m7 0h3m4 0h1m3 0h2m11 0h3m2 0h2m5 0h3m18 0h4m12 0h1m12 0h2m12 0h1m6 0h3m29 0h1m33 0h3m114 0h1m14 0h2m3 0h3M104 426h3m12 0h1m2 0h2m6 0h4m8 0h1m42 0h1m31 0h2m19 0h2m15 0h3m24 0h3m4 0h1m2 0h2m5 0h2m16 0h6m10 0h3m24 0h2m3 0h1m4 0h1m45 0h1m2 0h2m43 0h2m9 0h1m11 0h3m14 0h1m49 0h1m12 0h2m15 0h3m5 0h2m11 0h1m43 0h1m40 0h2m33 0h1m31 0h2m14 0h3m15 0h2m4 0h3m24 0h1m11 0h2m11 0h2m11 0h4m3 0h2m15 0h2m12 0h1m2 0h3m3 0h2m35 0h3m9 0h1m6 0h1m44 0h2m12 0h2m2 0h1m26 0h4m3 0h3M99 433h1m33 0h1m70 0h2m17 0h2m10 0h3m8 0h1m2 0h3m37 0h1m8 0h1m2 0h3m5 0h2m4 0h2m8 0h1m4 0h2m39 0h1m15 0h2m22 0h2m10 0h1m40 0h4m18 0h1m18 0h1m14 0h3m15 0h2m73 0h2m9 0h2m133 0h1m5 0h1m7 0h3m17 0h2m2 0h2m3 0h2m36 0h1m57 0h2m31 0h3m40 0h2m2 0h1m44 0h3m9 0h3m4 0h1m22 0h3M99 440h1m12 0h2m19 0h1m11 0h2m9 0h1m68 0h1m9 0h3m5 0h1m54 0h1m112 0h2m2 0h2m7 0h3m12 0h2m81 0h1m193 0h1m42 0h1m5 0h1m52 0h2m4 0h1m27 0h1m31 0h2m31 0h2m30 0h3m76 0h1m28 0h2m17 0h2M99 447h1m12 0h2m43 0h2m62 0h2m17 0h1m2 0h1m156 0h4m15 0h2m54 0h1m328 0h2m28 0h2m16 0h1m66 0h2m134 0h2m11 0h2m6 0h2M98 454h1m15 0h4m70 0h1m22 0h3m3 0h2m4 0h2m8 0h2m6 0h2m1 0h2m48 0h2m13 0h2m92 0h1m30 0h2m3 0h2m23 0h2m9 0h5m40 0h2m259 0h2m14 0h2m69 0h1m50 0h2m16 0h1m85 0h1m11 0h3m21 0h3m3 0h3M99 461h1m47 0h3m73 0h2m13 0h2m160 0h2m6 0h3m8 0h2m16 0h2m2 0h1m9 0h2m22 0h3m44 0h1m301 0h1m9 0h2m85 0h2m55 0h1m48 0h1m15 0h1m21 0h3m8 0h2M118 468h1m14 0h1m8 0h3m8 0h1m42 0h2m25 0h2m13 0h2m3 0h3m190 0h1m6 0h2m31 0h2m459 0h1m21 0h3m3 0h1m27 0h2m70 0h3m2 0h2M99 475h1m18 0h1m17 0h2m2 0h2m1 0h4m51 0h2m4 0h2m2 0h3m19 0h1m173 0h2m13 0h2m16 0h2m2 0h1m14 0h2m6 0h4m55 0h1m413 0h1m30 0h2m6 0h2m10 0h3m4 0h2m45 0h1m6 0h2m21 0h4M116 482h2m20 0h2m14 0h2m52 0h3m22 0h2m169 0h2m2 0h3m28 0h2m6 0h1m459 0h2m28 0h1m24 0h3m7 0h2m38 0h2m17 0h3M134 489h2m7 0h2m9 0h2m70 0h2m185 0h2m11 0h1m20 0h1m14 0h2m453 0h2m40 0h3m29 0h2m13 0h2m6 0h2m56 0h2m2 0h4M193 496h1m2 0h2m4 0h2m22 0h2m2 0h1m7 0h2m177 0h2m2 0h2m14 0h4m2 0h4m464 0h2m2 0h4m12 0h3m22 0h2m10 0h2m12 0h2m11 0h2m9 0h6m32 0h2m3 0h2m11 0h3m3 0h2M190 503h2m4 0h2m4 0h4m2 0h3m213 0h2m1 0h2m10 0h2m7 0h3m470 0h2m20 0h3m56 0h4m29 0h3m17 0h4M413 510h2m12 0h2m5 0h2m20 0h2m470 0h2m19 0h3m41 0h2m7 0h4m29 0h6M453 517h3m2 0h2m465 0h3m38 0h2m20 0h3m40 0h3M408 524h3"/>
<path stroke="#183cfb" stroke-width="3" d="M96 373.5h2m45 0h2m75 0h1m2 0h2m50 0h2m31 0h1m3 0h2m3 0h3m12 0h1m37 0h1m74 0h2m4 0h2m63 0h2m6 0h1m17 0h1m9 0h2m70 0h2m21 0h3m10 0h1m48 0h1m15 0h1m21 0h1m1 0h2m48 0h1m11 0h2m66 0h3m96 0h1m33 0h2M100 380.5h1m113 0h1m46 0h2m48 0h1m58 0h1m62 0h1m39 0h1m2 0h2m72 0h2m27 0h2m84 0h1m178 0h2m16 0h1m13 0h1m76 0h1m43 0h2M99 387.5h1m101 0h1m271 0h1m68 0h1m55 0h3m182 0h2m12 0h2m19 0h2m16 0h2m90 0h2m23 0h1m2 0h2m12 0h2m2 0h2m19 0h2m62 0h2M100 394.5h1m56 0h2m8 0h1m9 0h1m20 0h2m25 0h1m142 0h3m208 0h2m32 0h2m178 0h4m5 0h2m7 0h2m12 0h2m2 0h1m4 0h4m6 0h2m17 0h3m58 0h1m5 0h1m5 0h1m97 0h1M167 401.5h1m15 0h2m29 0h1m77 0h2m174 0h1m73 0h1m23 0h1m52 0h1m94 0h2m35 0h1m31 0h2m8 0h2m16 0h2m11 0h1m16 0h2m4 0h2m34 0h1m6 0h1m61 0h1M98 408.5h1m17 0h2m18 0h2m36 0h1m132 0h1m4 0h2m252 0h1m78 0h2m16 0h2m11 0h1m13 0h2m16 0h1m5 0h2m47 0h2m18 0h2m19 0h2m20 0h3m5 0h2m15 0h1m1 0h6m12 0h1m11 0h1m7 0h1m9 0h2m75 0h1m65 0h2M119 415.5h3m2 0h1m29 0h2m1 0h2m9 0h3m23 0h2m67 0h5m44 0h2m48 0h3m21 0h1m4 0h1m76 0h1m21 0h1m2 0h1m13 0h2m1 0h3m5 0h2m13 0h5m2 0h2m15 0h4m6 0h2m3 0h2m2 0h3m5 0h3m11 0h3m33 0h3m6 0h2m5 0h3m13 0h4m11 0h8m7 0h4m9 0h1m7 0h1m8 0h5m11 0h3m20 0h1m17 0h8m4 0h2m5 0h2m12 0h6m3 0h2m11 0h2m16 0h6m4 0h2m4 0h1m4 0h2m3 0h1m1 0h2m167 0h2M107 422.5h2m11 0h2m3 0h1m33 0h3m1 0h3m2 0h3m6 0h1m23 0h1m17 0h1m41 0h2m36 0h2m3 0h1m7 0h2m11 0h1m7 0h3m3 0h3m5 0h2m7 0h4m8 0h2m7 0h2m8 0h5m34 0h1m6 0h1m57 0h2m11 0h2m17 0h1m11 0h3m5 0h2m21 0h1m2 0h2m8 0h2m6 0h1m2 0h2m14 0h1m8 0h1m16 0h2m16 0h3m17 0h1m26 0h1m27 0h1m26 0h3m2 0h2m4 0h5m17 0h6m2 0h2m5 0h2m6 0h1m9 0h2m10 0h3m8 0h2m1 0h2m5 0h1m17 0h2m1 0h1m6 0h3m10 0h2m4 0h2m30 0h1m22 0h1m18 0h2m7 0h1m46 0h1m49 0h2M96 429.5h2m2 0h1m55 0h1m95 0h2m23 0h2m13 0h4m5 0h3m11 0h8m63 0h1m5 0h2m77 0h2m17 0h1m3 0h2m56 0h3m14 0h2m19 0h4m12 0h1m53 0h1m31 0h2m48 0h3m7 0h5m8 0h1m25 0h6m17 0h6m6 0h3m14 0h3m5 0h1m1 0h3m3 0h3m6 0h1m4 0h4m15 0h2m147 0h1m17 0h2m7 0h2M104 436.5h3m2 0h2m8 0h1m54 0h1m50 0h1m18 0h2m3 0h3m38 0h2m4 0h2m1 0h6m6 0h1m8 0h5m159 0h2m14 0h2m18 0h2m57 0h2m7 0h1m12 0h2m31 0h3m108 0h2m1 0h1m6 0h2m6 0h2m14 0h2m4 0h3m21 0h2m19 0h3m14 0h4m21 0h1m42 0h2m13 0h1m7 0h1m42 0h1m64 0h1M124 443.5h1m129 0h1m52 0h1m3 0h1m11 0h2m79 0h2m117 0h1m254 0h1m6 0h3m25 0h1m11 0h1m15 0h2m25 0h1m4 0h4m5 0h1m3 0h4m2 0h2m2 0h2m5 0h2m25 0h1m95 0h1m2 0h2m39 0h2M112 450.5h2m6 0h2m12 0h2m21 0h2m41 0h1m13 0h1m26 0h2m4 0h2m5 0h1m23 0h1m9 0h1m22 0h1m79 0h1m41 0h1m354 0h3m13 0h2m8 0h2m20 0h2m38 0h1m146 0h1m5 0h2M96 457.5h2m1 0h1m141 0h2m1 0h2m69 0h2m83 0h3m34 0h2m27 0h2m1 0h2m5 0h4m345 0h1m20 0h1m24 0h1m43 0h2m19 0h1m35 0h2m55 0h2m15 0h3m25 0h2M100 464.5h1m35 0h2m16 0h2m33 0h1m10 0h1m18 0h4m5 0h2m3 0h7m184 0h2m7 0h1m37 0h2m357 0h3m43 0h1m61 0h1m13 0h1m42 0h2m45 0h1m25 0h2m6 0h2M99 471.5h2m39 0h2m58 0h1m29 0h3m2 0h3m58 0h2m115 0h2m8 0h1m10 0h2m30 0h3m360 0h1m75 0h1m17 0h1m32 0h2m39 0h2m13 0h2m9 0h1m25 0h2m21 0h2m2 0h2M99 478.5h1m42 0h1m58 0h1m23 0h1m207 0h1m365 0h1m90 0h1m48 0h2m11 0h1m26 0h2m3 0h4m39 0h2m12 0h1m15 0h2m13 0h2M99 485.5h1m12 0h2m4 0h1m19 0h2m7 0h3m40 0h2m19 0h3m3 0h2m184 0h1m12 0h3m5 0h2m30 0h2m8 0h2m1 0h2m4 0h1m46 0h1m339 0h1m43 0h1m29 0h1m28 0h1m6 0h2m46 0h3m1 0h2m2 0h1m5 0h1M136 492.5h2m9 0h3m6 0h1m36 0h1m29 0h2m3 0h2m10 0h1m176 0h2m17 0h1m11 0h3m5 0h2m6 0h2m462 0h2m7 0h1m24 0h4m4 0h2m38 0h2m30 0h1m1 0h2m13 0h2m9 0h2M140 499.5h2m3 0h2m84 0h2m173 0h2m3 0h2m13 0h1m14 0h2m4 0h1m3 0h9m16 0h2m427 0h1m9 0h2m20 0h1m11 0h3m16 0h2m25 0h2m9 0h2m41 0h2m19 0h2M143 506.5h2m45 0h2m12 0h2m20 0h4m191 0h2m3 0h1m10 0h2m4 0h8m7 0h2m465 0h3m18 0h3m25 0h2m6 0h2m4 0h3m2 0h6m32 0h3m13 0h2m10 0h2m7 0h2M143 513.5h2m49 0h2m15 0h3m194 0h3m18 0h2m500 0h3m15 0h3m16 0h2m50 0h3m12 0h3M223 520.5h2m194 0h2m3 0h2m32 0h2m453 0h2m2 0h2m9 0h2m1 0h3m20 0h2m64 0h3m8 0h3M946 527.5h3m53 0h2"/>
<path stroke="#183cfb" stroke-width="4" d="M177 335h1M370 370h1M111 377h1m38 0h2m24 0h2m36 0h1m4 0h1m85 0h3m36 0h3m23 0h1m1 0h1m3 0h1m60 0h2m4 0h2m41 0h1m6 0h1m12 0h1m26 0h2m22 0h2m44 0h1m59 0h2m12 0h1m31 0h1m42 0h3m2 0h2m65 0h1m31 0h3m4 0h3m28 0h2m2 0h2m23 0h1m99 0h1m22 0h1M102 384h2m20 0h1m122 0h2m62 0h1m122 0h2m153 0h1m11 0h2m78 0h2m68 0h1m29 0h4m66 0h1m61 0h2m9 0h1m117 0h1M109 391h1m197 0h1m83 0h1m31 0h1m38 0h2m41 0h1m4 0h3m93 0h1m13 0h1m74 0h1m13 0h1m89 0h1m13 0h1m11 0h1m10 0h5m5 0h1m9 0h3m77 0h1M102 398h2m157 0h2m19 0h1m7 0h2m176 0h1m18 0h4m31 0h1m147 0h1m10 0h2m29 0h2m51 0h1m25 0h4m14 0h2m11 0h2m1 0h1m8 0h2m26 0h1m9 0h1m9 0h2m157 0h1m4 0h1M100 405h1m23 0h2m24 0h2m41 0h1m105 0h2m31 0h1m14 0h2m147 0h2m196 0h1m100 0h2m46 0h1m3 0h2m4 0h3m6 0h7m8 0h2m4 0h1m97 0h1m9 0h2M119 412h1m47 0h1m9 0h1m7 0h1m68 0h1m18 0h2m40 0h2m37 0h4m2 0h2m12 0h3m8 0h1m82 0h1m12 0h3m26 0h3m58 0h1m9 0h1m21 0h1m6 0h3m27 0h1m6 0h2m22 0h3m16 0h2m6 0h2m12 0h2m3 0h1m29 0h1m3 0h1m27 0h2m12 0h2m2 0h2m5 0h2m20 0h1m9 0h2m18 0h6m4 0h2m1 0h2m8 0h3m4 0h2m17 0h1m73 0h2M118 419h1m5 0h1m34 0h3m6 0h3m3 0h1m2 0h6m3 0h2m58 0h1m11 0h2m15 0h3m42 0h3m7 0h2m26 0h2m2 0h3m5 0h1m5 0h1m2 0h3m9 0h1m102 0h2m2 0h2m25 0h3m2 0h2m3 0h3m5 0h2m2 0h5m3 0h2m2 0h2m5 0h1m2 0h2m21 0h6m5 0h2m5 0h3m3 0h3m5 0h2m1 0h1m4 0h5m4 0h4m11 0h3m7 0h3m5 0h2m2 0h3m2 0h3m6 0h2m4 0h2m17 0h1m3 0h4m1 0h3m2 0h6m46 0h2m12 0h2m21 0h4m25 0h2m2 0h6m4 0h3m5 0h1m5 0h2m19 0h3m27 0h2M100 426h2m5 0h2m1 0h2m14 0h2m28 0h1m84 0h2m1 0h5m9 0h2m3 0h3m11 0h1m7 0h4m12 0h3m19 0h2m11 0h3m29 0h2m2 0h1m3 0h1m9 0h1m84 0h2m13 0h1m9 0h2m27 0h3m14 0h1m4 0h3m9 0h2m26 0h1m6 0h2m8 0h1m64 0h5m21 0h1m1 0h1m19 0h1m8 0h3m14 0h2m6 0h1m3 0h2m3 0h3m2 0h1m12 0h1m14 0h4m14 0h5m14 0h3m20 0h3m15 0h1m4 0h1m7 0h2m4 0h1m1 0h2m2 0h4m81 0h1M104 433h3m2 0h1m15 0h1m8 0h2m18 0h2m3 0h3m5 0h1m7 0h1m18 0h2m2 0h2m41 0h2m45 0h1m1 0h2m20 0h2m6 0h3m26 0h2m25 0h1m14 0h1m2 0h2m37 0h1m82 0h2m194 0h2m31 0h2m8 0h2m51 0h1m11 0h2m2 0h2m21 0h2m17 0h2m3 0h1m7 0h3m1 0h1m6 0h1m10 0h2m21 0h1m70 0h2m4 0h1m24 0h1m1 0h1m30 0h2M122 440h2m77 0h1m21 0h2m6 0h2m5 0h2m20 0h1m21 0h1m9 0h2m11 0h2m4 0h1m13 0h1m74 0h2m15 0h2m54 0h1m16 0h1m29 0h2m1 0h1m96 0h1m167 0h3m23 0h4m7 0h1m1 0h2m17 0h1m6 0h6m33 0h2m12 0h3m92 0h1m32 0h1m30 0h3M145 447h2m5 0h1m58 0h3m9 0h3m243 0h2m19 0h1m31 0h1m268 0h2m9 0h2m23 0h2m43 0h1m10 0h1m16 0h1m22 0h1m99 0h1m3 0h1m13 0h2m35 0h2M112 454h2m107 0h2m3 0h2m3 0h2m190 0h1m375 0h1m29 0h1m33 0h3m183 0h2M96 461h2m14 0h6m2 0h2m14 0h2m2 0h2m12 0h2m46 0h2m2 0h2m33 0h2m159 0h1m1 0h2m36 0h1m30 0h1m46 0h2m304 0h1m24 0h1m122 0h2m40 0h1m9 0h1m7 0h1M100 468h1m13 0h4m32 0h2m46 0h2m11 0h3m6 0h3m76 0h2m167 0h1m2 0h2m2 0h1m370 0h1m36 0h1m52 0h1m15 0h1m5 0h1m109 0h2M202 475h2m2 0h2m3 0h3m1 0h2m3 0h1m5 0h2m13 0h3m158 0h1m65 0h1m2 0h2m5 0h2m319 0h1m134 0h2m78 0h2m8 0h2m8 0h1m6 0h1m1 0h1m34 0h2M96 482h3m15 0h2m24 0h2m1 0h2m2 0h3m43 0h1m31 0h1m2 0h2m10 0h1m172 0h2m4 0h5m29 0h5m4 0h2m11 0h1m332 0h1m112 0h2m18 0h2m41 0h2m69 0h2m4 0h4m5 0h2m6 0h2M118 489h1m34 0h1m35 0h1m2 0h1m18 0h3m3 0h2m2 0h2m180 0h1m17 0h2m14 0h2m2 0h1m3 0h2m4 0h2m5 0h2m455 0h2m14 0h3m9 0h3m12 0h1m7 0h4m2 0h2m72 0h1m23 0h2M134 496h2m9 0h2m53 0h1m5 0h5m193 0h2m20 0h1m2 0h2m27 0h4m4 0h2m439 0h2m10 0h2m13 0h2m1 0h1m24 0h3m13 0h1m47 0h2m27 0h2m13 0h4M145 503h2m3 0h2m2 0h2m55 0h3m197 0h2m6 0h2m24 0h2m6 0h5m4 0h4m451 0h2m9 0h2m4 0h2m52 0h3m2 0h2m11 0h2m4 0h2m28 0h1m22 0h3M211 510h3m194 0h3m10 0h2m6 0h2m6 0h2m9 0h3m2 0h3m475 0h3m9 0h3m42 0h3m15 0h4m14 0h2m1 0h1m29 0h2M147 517h3m46 0h2m241 0h2m25 0h2m445 0h2m6 0h2m79 0h2m13 0h3m35 0h2M206 524h5m223 0h2m20 0h4m486 0h3m35 0h2m52 0h3"/>
<path stroke="#174af6" stroke-width="3" d="M130 373.5h3m52 0h1m61 0h2m32 0h1m14 0h3m6 0h2m59 0h2m23 0h1m56 0h3m77 0h2m34 0h2m53 0h1m2 0h2m2 0h1m42 0h1m108 0h1m50 0h1m21 0h1m59 0h2m6 0h2m60 0h1m61 0h1m3 0h2M124 380.5h1m157 0h1m181 0h2m98 0h2m37 0h1m406 0h2M605 387.5h1m227 0h1M692 394.5h2m103 0h2m23 0h2m3 0h2m4 0h1m6 0h1m2 0h1m94 0h1m107 0h1M176 401.5h1m121 0h1m26 0h1m279 0h1m185 0h2m9 0h2m14 0h2m16 0h2m11 0h2m11 0h1m25 0h2m15 0h1M162 408.5h1m83 0h1m78 0h1m44 0h1m169 0h2m62 0h1m36 0h4m16 0h2m6 0h1m47 0h1m29 0h1m3 0h1m41 0h2m2 0h2m7 0h2m1 0h4m17 0h3m3 0h2m5 0h1m3 0h2m14 0h3m30 0h2M110 415.5h1m70 0h2m77 0h1m7 0h2m39 0h2m45 0h2m8 0h2m2 0h1m125 0h2m54 0h2m66 0h1m28 0h1m3 0h3m4 0h1m10 0h3m2 0h2m11 0h1m28 0h5m17 0h2m31 0h3m5 0h2m8 0h2m20 0h3m14 0h3m3 0h2m8 0h1m2 0h2m11 0h1m6 0h2m23 0h2m57 0h1m74 0h1M111 422.5h1m44 0h1m9 0h1m14 0h2m3 0h3m57 0h1m2 0h3m16 0h2m5 0h3m1 0h2m42 0h2m7 0h1m11 0h3m4 0h3m20 0h2m8 0h1m117 0h2m12 0h4m5 0h3m5 0h2m19 0h1m4 0h3m9 0h5m5 0h1m2 0h3m2 0h1m6 0h5m2 0h2m11 0h3m26 0h5m13 0h3m5 0h5m1 0h1m8 0h3m1 0h2m11 0h3m3 0h1m2 0h2m4 0h7m12 0h5m6 0h1m10 0h1m21 0h4m6 0h2m6 0h1m6 0h2m3 0h3m6 0h5m4 0h1m4 0h2m10 0h1m6 0h6m3 0h1m10 0h3m7 0h1m7 0h1m4 0h2m5 0h2M104 429.5h6m1 0h1m2 0h2m10 0h2m5 0h1m28 0h1m20 0h5m58 0h3m5 0h6m10 0h3m6 0h3m1 0h2m3 0h1m1 0h2m16 0h3m3 0h1m12 0h6m11 0h5m11 0h2m3 0h1m11 0h5m99 0h3m7 0h2m13 0h1m11 0h2m4 0h1m7 0h3m39 0h2m6 0h2m19 0h2m5 0h3m7 0h1m1 0h4m2 0h2m11 0h2m34 0h1m36 0h2m10 0h3m10 0h1m9 0h2m8 0h1m13 0h3m12 0h3m9 0h2m2 0h4m28 0h2m28 0h2m9 0h2m3 0h1m3 0h2m6 0h2m4 0h1m2 0h2M124 436.5h1m127 0h2m19 0h2m4 0h4m15 0h1m13 0h3m10 0h2m39 0h2m3 0h2m18 0h1m130 0h2m58 0h2m5 0h1m6 0h2m5 0h2m8 0h2m6 0h1m4 0h1m32 0h1m69 0h2m8 0h1m2 0h1m14 0h3m10 0h1m12 0h2m6 0h6m2 0h1m2 0h2m9 0h1m4 0h4m12 0h6m1 0h3m12 0h3m3 0h1m35 0h2m3 0h2M98 443.5h1m3 0h2m22 0h2m8 0h4m43 0h2m62 0h2m9 0h3m31 0h2m2 0h2m6 0h3m5 0h5m3 0h3m4 0h3m3 0h3m8 0h3m26 0h1m26 0h2m31 0h1m39 0h1m10 0h2m34 0h3m66 0h1m153 0h2m2 0h1m35 0h2m3 0h5m2 0h4m1 0h2m4 0h3m11 0h2m2 0h1m4 0h4m7 0h1m3 0h2m3 0h2m1 0h1m13 0h2m16 0h2m15 0h2M136 450.5h2m81 0h1m5 0h1m14 0h1m48 0h1m4 0h2m3 0h2m4 0h2m13 0h5m75 0h2m71 0h1m16 0h1m32 0h1m219 0h2m12 0h2m20 0h2m2 0h2m6 0h2m6 0h1m8 0h1m31 0h1m27 0h1m3 0h1m4 0h2m11 0h1m3 0h2m9 0h1m72 0h1m93 0h2M111 457.5h1m6 0h1m5 0h1m15 0h2m101 0h1m16 0h1m213 0h1m45 0h2m261 0h2m31 0h4m13 0h1m2 0h4m7 0h5m30 0h1m11 0h2m7 0h2m123 0h1m41 0h2M223 464.5h2m21 0h1m222 0h2m2 0h2m3 0h2m333 0h1m4 0h2m4 0h1m13 0h2m28 0h3m201 0h2M188 471.5h1m55 0h2m62 0h1m128 0h2m30 0h2m3 0h1m3 0h2m299 0h2m27 0h1m16 0h1m18 0h3m15 0h1m3 0h2m38 0h1m103 0h2m50 0h3M152 478.5h1m62 0h2m21 0h2m175 0h1m11 0h2m19 0h5m18 0h2m434 0h2m27 0h1m137 0h6M156 485.5h1m36 0h1m4 0h2m19 0h2m14 0h5m4 0h2m169 0h1m52 0h1m469 0h1m29 0h2m38 0h2m36 0h1m29 0h4M100 492.5h1m33 0h2m4 0h2m64 0h2m13 0h2m2 0h1m4 0h1m13 0h2m157 0h1m2 0h2m15 0h1m3 0h2m482 0h2m23 0h1m79 0h1m9 0h1m24 0h2M99 499.5h1m16 0h2m18 0h4m50 0h2m4 0h2m4 0h2m15 0h1m3 0h2m1 0h2m7 0h5m183 0h1m3 0h2m35 0h4m443 0h2m8 0h2m15 0h1m13 0h1m1 0h2m41 0h4m22 0h1m14 0h3m5 0h1m10 0h8M116 506.5h2m20 0h2m5 0h2m51 0h2m17 0h2m4 0h2m15 0h1m2 0h1m169 0h3m7 0h1m18 0h1m17 0h2m2 0h2m499 0h1m4 0h4m25 0h2m9 0h2m12 0h2m35 0h1m10 0h2M140 513.5h2m8 0h2m38 0h3m11 0h4m15 0h2m179 0h2m5 0h2m18 0h2m1 0h2m9 0h3m10 0h2m2 0h2m443 0h2m8 0h2m20 0h2m15 0h2m14 0h4m8 0h2m13 0h2m7 0h2m2 0h4m22 0h3m27 0h2M134 520.5h2m7 0h2m57 0h2m7 0h3m12 0h2m199 0h2m5 0h2m12 0h3m9 0h2m449 0h2m12 0h3m18 0h6m30 0h2m7 0h2m4 0h2m13 0h4m11 0h1m23 0h2m2 0h2m5 0h3m3 0h2M147 527.5h3m56 0h5m197 0h3m565 0h2m28 0h2m6 0h2m15 0h3m4 0h3"/>
<path stroke="#174af6" stroke-width="4" d="M174 377h1m48 0h2m5 0h1m16 0h2m6 0h3m12 0h3m112 0h1m82 0h1m12 0h3m16 0h2m85 0h1m55 0h2m2 0h2m12 0h2m77 0h2m199 0h2m10 0h1m93 0h2M385 384h1m411 0h2m1 0h2m31 0h1m236 0h2M314 391h1m334 0h1m75 0h1m98 0h1m26 0h1M200 398h2m201 0h1m70 0h1m72 0h3m261 0h2m5 0h4m16 0h5m3 0h1m43 0h2M162 405h1m25 0h1m134 0h2m208 0h2m19 0h1m223 0h1m18 0h2m7 0h7m1 0h4m6 0h1m2 0h2m11 0h3m8 0h2m18 0h1m16 0h2m4 0h2M118 412h1m3 0h2m255 0h3m4 0h1m99 0h1m46 0h2m22 0h2m30 0h1m31 0h1m41 0h3m26 0h2m15 0h1m60 0h1m12 0h2m23 0h1m20 0h1m4 0h2m2 0h2m6 0h1m2 0h2m1 0h1m10 0h3m2 0h1m19 0h3m9 0h1m23 0h1M101 419h1m60 0h1m8 0h3m2 0h1m8 0h1m2 0h1m60 0h3m29 0h1m32 0h1m10 0h1m7 0h3m6 0h2m3 0h4m21 0h1m4 0h2m111 0h1m41 0h1m7 0h2m20 0h2m24 0h1m9 0h3m12 0h2m22 0h3m7 0h2m1 0h3m7 0h1m10 0h3m7 0h2m3 0h3m11 0h6m12 0h3m16 0h2m3 0h1m30 0h3m48 0h1m2 0h2m4 0h1m2 0h2m2 0h1m3 0h2m5 0h1m21 0h3m6 0h1m1 0h4M124 426h1m13 0h2m17 0h6m8 0h3m12 0h2m61 0h3m8 0h1m7 0h5m2 0h2m4 0h1m16 0h1m16 0h2m10 0h3m9 0h3m2 0h3m32 0h3m2 0h2m1 0h4m89 0h4m9 0h1m4 0h6m2 0h4m3 0h3m12 0h2m2 0h1m10 0h2m5 0h2m5 0h2m13 0h2m2 0h3m17 0h7m7 0h5m1 0h4m6 0h1m5 0h5m16 0h6m4 0h2m12 0h1m16 0h1m34 0h2m2 0h2m12 0h1m15 0h2m3 0h2m1 0h2m10 0h2m3 0h3m9 0h2m4 0h2m1 0h2m11 0h2m3 0h3m4 0h2m4 0h1m2 0h1m2 0h1m12 0h3m4 0h2m23 0h1m9 0h2m83 0h2m71 0h2M107 433h2m2 0h1m6 0h1m1 0h2m35 0h2m93 0h3m8 0h3m2 0h2m5 0h3m4 0h1m2 0h3m4 0h4m12 0h1m2 0h1m5 0h3m7 0h3m3 0h9m2 0h3m13 0h2m41 0h1m41 0h2m21 0h1m11 0h4m12 0h2m4 0h2m68 0h2m18 0h2m25 0h1m7 0h1m9 0h3m97 0h2m1 0h2m1 0h2m2 0h1m1 0h3m14 0h4m6 0h2m7 0h8m16 0h2m3 0h2m6 0h2m3 0h2m1 0h4m2 0h4m1 0h5m7 0h3m13 0h2m2 0h3m8 0h2m2 0h2m1 0h3m6 0h1M109 440h1m47 0h2m18 0h1m10 0h1m22 0h3m71 0h3m1 0h1m9 0h5m8 0h2m3 0h6m21 0h3m9 0h2m14 0h1m13 0h1m7 0h2m78 0h1m109 0h3m39 0h1m5 0h2m40 0h2m73 0h3m3 0h2m6 0h2m8 0h3m5 0h2m8 0h4m4 0h3m4 0h2m32 0h1m2 0h1m3 0h2m10 0h3m4 0h2m18 0h2m2 0h1m5 0h2m5 0h2m63 0h2M114 447h2m40 0h1m89 0h1m41 0h1m12 0h4m15 0h3m4 0h3m35 0h1m4 0h1m11 0h2m364 0h1m21 0h1m5 0h5m2 0h2m12 0h2m7 0h2m3 0h2m1 0h2m2 0h2m4 0h1m37 0h1m5 0h1m13 0h1m18 0h2M118 454h1m21 0h2m101 0h1m44 0h1m10 0h2m22 0h2m75 0h2m35 0h2m30 0h2m2 0h1m277 0h1m3 0h2m14 0h2m22 0h2m7 0h2m2 0h1m15 0h1m15 0h1m8 0h2m1 0h1m38 0h1m4 0h2m3 0h2m3 0h1m8 0h2m61 0h1m89 0h2m4 0h2M101 461h1m16 0h1m15 0h2m2 0h2m2 0h1m45 0h1m4 0h1m41 0h3m165 0h1m67 0h2m5 0h2m298 0h1m30 0h2m11 0h2m5 0h1m10 0h1m21 0h1m40 0h2m1 0h1m16 0h1m135 0h2M98 468h1m35 0h6m90 0h1m2 0h2m6 0h2m45 0h1m113 0h1m59 0h2m5 0h2m51 0h1m279 0h2m22 0h3m90 0h2m141 0h3M98 475h1m15 0h2m37 0h1m42 0h2m3 0h1m26 0h2m173 0h1m70 0h1m1 0h2m317 0h2m29 0h1m13 0h1m121 0h3m26 0h2M156 482h1m32 0h1m25 0h2m6 0h2m13 0h2m4 0h2m165 0h2m20 0h1m37 0h2m371 0h2m92 0h1m10 0h3m16 0h2m73 0h1M96 489h2m14 0h4m34 0h2m52 0h2m2 0h3m12 0h2m10 0h5m164 0h2m11 0h2m50 0h2m463 0h2m16 0h1m25 0h1m14 0h2m6 0h1m26 0h1m5 0h1m18 0h4m8 0h3M99 496h1m12 0h2m22 0h2m12 0h2m2 0h2m61 0h2m2 0h2m12 0h3m2 0h1m3 0h2m157 0h1m19 0h1m24 0h3m455 0h1m16 0h1m35 0h3m24 0h2m58 0h1m6 0h2m2 0h2M118 503h1m73 0h1m5 0h2m21 0h2m2 0h1m9 0h3m196 0h3m5 0h1m15 0h2m449 0h2m8 0h2m25 0h6m24 0h3m12 0h2m4 0h2m15 0h2m13 0h2m7 0h3m3 0h2m13 0h2M419 510h2m18 0h3m1 0h2m17 0h2m473 0h1m8 0h3m30 0h2m14 0h2m47 0h2m1 0h2m10 0h2M112 517h2m76 0h2m6 0h2m4 0h2m9 0h2m9 0h2m183 0h2m8 0h2m11 0h2m11 0h1m498 0h3m9 0h1m13 0h2m5 0h2m1 0h2m13 0h2m13 0h2m12 0h1m15 0h1m4 0h2M112 524h2m299 0h2m2 0h4m27 0h5m458 0h2m8 0h2m5 0h2m11 0h5m36 0h2m9 0h2M443 531h2m11 0h2m2 0h2m466 0h2m32 0h3m37 0h2"/>
<path stroke="#135bea" stroke-width="3" d="M243 373.5h1m24 0h2m132 0h1m479 0h1M386 380.5h1M799 394.5h3M372 401.5h1m375 0h1m50 0h1m4 0h2m14 0h2m12 0h2M493 408.5h1m11 0h1m318 0h1m21 0h1m25 0h1M171 415.5h3m105 0h2m108 0h2m141 0h1m12 0h2m257 0h4m14 0h2m17 0h5m7 0h3m7 0h3m5 0h1m14 0h2M126 422.5h7m42 0h2m6 0h2m69 0h1m41 0h2m44 0h2m22 0h2m118 0h1m3 0h1m3 0h4m8 0h1m6 0h3m34 0h4m1 0h2m25 0h2m23 0h3m11 0h5m2 0h2m11 0h2m10 0h3m4 0h1m5 0h3m7 0h1m4 0h5m3 0h1m4 0h1m11 0h3m5 0h2m17 0h4m42 0h2m16 0h2m3 0h2m5 0h2m22 0h1m4 0h2m7 0h2m10 0h3m1 0h3m16 0h1m1 0h2M120 429.5h2m2 0h2m4 0h3m26 0h3m4 0h1m9 0h1m1 0h3m68 0h3m8 0h1m2 0h3m9 0h2m22 0h2m6 0h1m28 0h6m7 0h2m11 0h3m1 0h2m5 0h3m8 0h2m3 0h2m3 0h2m84 0h1m3 0h2m1 0h3m6 0h2m7 0h1m4 0h6m12 0h2m15 0h2m10 0h2m2 0h3m2 0h1m4 0h3m7 0h1m2 0h4m25 0h2m6 0h1m5 0h1m4 0h2m3 0h4m28 0h1m4 0h2m5 0h2m3 0h3m1 0h2m5 0h3m12 0h2m11 0h1m3 0h2m2 0h2m2 0h2m6 0h2m16 0h2m3 0h3m5 0h2m5 0h2m23 0h1m4 0h1m6 0h4m1 0h1m4 0h3m5 0h2m7 0h2m3 0h1m26 0h3m2 0h2m4 0h1m14 0h1M111 436.5h1m8 0h2m4 0h2m2 0h3m26 0h3m5 0h1m7 0h1m5 0h2m72 0h3m2 0h13m2 0h2m1 0h1m10 0h1m4 0h2m21 0h3m7 0h17m3 0h4m3 0h2m26 0h5m2 0h2m3 0h2m6 0h1m77 0h1m10 0h2m3 0h4m4 0h1m20 0h3m15 0h4m3 0h2m17 0h2m10 0h1m24 0h4m18 0h2m13 0h2m11 0h3m2 0h2m18 0h2m33 0h1m20 0h2m8 0h1m1 0h2m9 0h3m3 0h4m3 0h6m9 0h3m9 0h2m9 0h2m1 0h2m9 0h1m1 0h3m3 0h1m10 0h2m6 0h4m3 0h3m7 0h2m2 0h3m3 0h3m4 0h2m4 0h6m3 0h2M104 443.5h3m13 0h2m8 0h3m24 0h2m7 0h1m82 0h3m3 0h3m5 0h3m13 0h2m1 0h1m18 0h3m4 0h1m8 0h3m5 0h1m16 0h2m50 0h2m84 0h1m17 0h2m69 0h2m51 0h2m6 0h2m84 0h1m14 0h2m22 0h4m4 0h7m32 0h2m7 0h2m3 0h2m4 0h2m3 0h2m4 0h1m4 0h2m3 0h1m7 0h1m1 0h3m3 0h3m7 0h2m23 0h2m2 0h2M99 450.5h1m26 0h2m60 0h1m72 0h2m22 0h3m2 0h4m2 0h2m14 0h2m12 0h1m6 0h3m36 0h1m134 0h2m15 0h1m62 0h1m13 0h2m18 0h1m129 0h1m18 0h1m5 0h2m3 0h2m2 0h3m5 0h2m2 0h2m1 0h2m9 0h2m7 0h5m2 0h2m1 0h4m10 0h2m7 0h6m24 0h1m8 0h2m7 0h2M156 457.5h1m97 0h1m33 0h1m1 0h11m3 0h1m7 0h2m3 0h3m22 0h2m136 0h1m41 0h1m253 0h2m3 0h2m8 0h6m2 0h3m2 0h2m3 0h2m2 0h1m10 0h1m9 0h2m16 0h4m3 0h3m17 0h3m6 0h3m9 0h1m4 0h1m128 0h1M109 464.5h1m1 0h1m44 0h1m31 0h1m99 0h1m7 0h3m6 0h2m10 0h3m458 0h3m14 0h2m2 0h1m9 0h2m11 0h2m1 0h1m1 0h2m4 0h3m37 0h3m8 0h4m17 0h1M189 471.5h1m111 0h3m5 0h2m209 0h2m271 0h2m7 0h2m2 0h2m39 0h2m2 0h1m25 0h2m191 0h2M96 478.5h2m2 0h1m17 0h1m21 0h2m14 0h1m32 0h1m43 0h5m60 0h1m124 0h1m18 0h1m33 0h2m44 0h1m272 0h2m37 0h2m4 0h1m8 0h2m11 0h1m61 0h1m143 0h2M114 485.5h2m73 0h1m4 0h2m4 0h1m29 0h1m9 0h1m172 0h2m21 0h1m37 0h1m1 0h4m344 0h1m128 0h1m16 0h2m38 0h2m49 0h1M96 492.5h2m40 0h2m49 0h3m19 0h3m19 0h5m3 0h2m223 0h2m3 0h2m3 0h2m42 0h2m308 0h3m120 0h1m37 0h2m15 0h2m51 0h1M114 499.5h2m26 0h1m9 0h1m77 0h1m2 0h2m6 0h2m190 0h1m3 0h2m23 0h2m9 0h1m450 0h1m76 0h1m22 0h2m18 0h2m22 0h2m2 0h4M114 506.5h2m34 0h2m44 0h2m21 0h2m10 0h4m181 0h3m12 0h3m32 0h2m1 0h2m497 0h2m21 0h2m15 0h2m43 0h2m7 0h6m2 0h2M142 513.5h1m10 0h1m46 0h1m24 0h3m3 0h2m10 0h1m179 0h3m13 0h2m1 0h1m5 0h3m9 0h2m2 0h4m438 0h1m2 0h2m2 0h2m21 0h1m25 0h4m44 0h2m12 0h2m29 0h2M116 520.5h2m24 0h1m4 0h3m3 0h1m46 0h1m7 0h3m240 0h2m3 0h2m13 0h2m442 0h2m26 0h3m13 0h3m8 0h2m21 0h2m7 0h2m34 0h3m31 0h2M116 527.5h2m97 0h2m189 0h2m9 0h4m10 0h2m4 0h2m27 0h2m441 0h4m18 0h3m20 0h2m3 0h6m32 0h2m9 0h2m2 0h2m37 0h2"/>
<path stroke="#135bea" stroke-width="4" d="M696 377h1m304 0h1M118 384h1M820 391h2M802 398h2m4 0h1m40 0h2m1 0h1M506 405h1m142 0h1m115 0h1m72 0h2M183 412h2m123 0h1m233 0h1m173 0h1m96 0h1m4 0h2m2 0h2m6 0h3m14 0h2m4 0h3M260 419h1m5 0h4m81 0h3m20 0h2m8 0h1m99 0h3m15 0h2m2 0h1m9 0h2m24 0h1m21 0h2m6 0h2m46 0h1m48 0h2m6 0h1m11 0h1m6 0h1m9 0h2m2 0h2m4 0h1m68 0h3m14 0h2m2 0h3m21 0h3m1 0h2M120 426h2m6 0h2m33 0h3m8 0h1m1 0h1m4 0h4m93 0h1m15 0h2m34 0h3m14 0h13m2 0h3m9 0h2m1 0h2m13 0h2m130 0h1m5 0h2m1 0h5m7 0h2m19 0h1m14 0h1m38 0h1m3 0h2m1 0h5m5 0h3m1 0h8m1 0h3m6 0h1m1 0h2m3 0h3m5 0h3m6 0h3m3 0h1m8 0h2m3 0h6m3 0h2m4 0h3m10 0h2m19 0h3m15 0h1m8 0h2m4 0h3m14 0h2m16 0h2m4 0h1m11 0h2m1 0h2m1 0h2m5 0h1m31 0h1m4 0h2m4 0h2M119 433h1m4 0h1m3 0h5m29 0h4m12 0h3m5 0h2m59 0h2m6 0h3m3 0h2m3 0h2m2 0h5m4 0h2m2 0h2m20 0h2m16 0h2m1 0h1m5 0h1m18 0h3m4 0h2m2 0h4m2 0h3m1 0h1m1 0h2m13 0h2m9 0h2m91 0h3m2 0h4m2 0h1m13 0h2m10 0h3m2 0h3m2 0h3m4 0h3m7 0h2m3 0h2m2 0h1m9 0h3m8 0h1m2 0h2m2 0h7m3 0h3m3 0h3m2 0h1m4 0h1m7 0h2m2 0h2m9 0h4m2 0h1m10 0h3m7 0h1m7 0h3m11 0h2m1 0h1m13 0h1m19 0h4m2 0h2m15 0h3m2 0h2m1 0h5m16 0h2m12 0h2m3 0h2m4 0h2m3 0h3m4 0h2m9 0h1m4 0h2m10 0h1m5 0h1m41 0h2M102 440h2m3 0h2m1 0h1m8 0h3m3 0h3m57 0h1m60 0h3m14 0h3m7 0h2m6 0h1m1 0h2m5 0h2m12 0h1m2 0h1m7 0h2m9 0h1m3 0h2m1 0h3m3 0h3m24 0h2m8 0h3m13 0h2m87 0h3m14 0h2m6 0h1m35 0h3m16 0h1m25 0h1m2 0h2m9 0h3m2 0h4m3 0h2m7 0h4m2 0h2m19 0h1m87 0h2m8 0h1m4 0h3m5 0h3m5 0h2m9 0h2m4 0h3m9 0h2m3 0h4m14 0h4m5 0h1m4 0h4m3 0h2m6 0h3m17 0h10m3 0h1m8 0h1M102 447h2m3 0h3m1 0h1m6 0h1m14 0h1m51 0h1m2 0h1m60 0h5m27 0h7m2 0h2m4 0h2m9 0h1m1 0h2m1 0h2m54 0h2m21 0h1m76 0h1m5 0h1m5 0h1m23 0h1m18 0h1m8 0h1m31 0h2m56 0h4m6 0h2m118 0h5m9 0h2m3 0h5m9 0h3m21 0h2m19 0h4m2 0h2m2 0h1m8 0h2m8 0h3m1 0h3m7 0h3m14 0h1m1 0h2m11 0h1M104 454h3m35 0h1m13 0h3m101 0h1m29 0h4m23 0h6m157 0h1m256 0h2m8 0h1m12 0h5m8 0h5m5 0h5m3 0h2m13 0h2m1 0h4m3 0h2m7 0h1m4 0h3m3 0h4m1 0h2m13 0h6m10 0h1m13 0h2m2 0h1m3 0h2m7 0h2M110 461h1m22 0h1m23 0h2m30 0h1m27 0h2m66 0h3m4 0h2m2 0h2m9 0h2m3 0h2m3 0h3m425 0h2m18 0h1m22 0h3m2 0h2m4 0h1m11 0h2m3 0h2m7 0h1m4 0h3m14 0h2m27 0h1m23 0h3m2 0h1m164 0h2M156 468h1m83 0h1m5 0h1m60 0h1m9 0h3m425 0h2m31 0h1m6 0h3m3 0h4m9 0h2m18 0h2m12 0h3m11 0h1m33 0h5M100 475h1m33 0h2m20 0h1m31 0h1m110 0h2m7 0h1m160 0h2m4 0h1m44 0h2m280 0h2m7 0h2m9 0h4m17 0h1m3 0h4m2 0h3m130 0h2m82 0h2M112 482h2m4 0h1m73 0h1m38 0h2m2 0h3m5 0h1m159 0h1m65 0h2m328 0h1m24 0h1m9 0h2m2 0h3m15 0h3m9 0h1m101 0h2M228 489h2m1 0h2m8 0h2m225 0h1m2 0h2m47 0h2m350 0h1m51 0h1m149 0h2M96 496h2m18 0h2m35 0h1m74 0h2m176 0h2m63 0h4m590 0h3m6 0h2M100 503h1m13 0h2m85 0h1m21 0h2m1 0h4m1 0h2m5 0h2m177 0h2m2 0h2m43 0h3m382 0h1m86 0h1m13 0h1m48 0h1m32 0h1m6 0h1m30 0h4M114 510h2m22 0h2m2 0h1m2 0h2m43 0h2m2 0h2m10 0h5m4 0h2m9 0h2m3 0h2m183 0h1m6 0h1m21 0h2m11 0h4m2 0h4m438 0h1m6 0h2m2 0h2m40 0h3m84 0h1m4 0h2m8 0h4m11 0h4M99 517h1m50 0h2m1 0h1m39 0h1m12 0h2m198 0h5m16 0h2m7 0h1m6 0h2m6 0h2m7 0h2m469 0h3m7 0h5m13 0h6m30 0h2m2 0h2m3 0h2m23 0h2m4 0h3m13 0h2M221 524h2m208 0h2m4 0h2m2 0h1m473 0h4m6 0h3m11 0h2m13 0h2m3 0h3m12 0h2m32 0h2m19 0h2M134 531h2m11 0h3m52 0h2m7 0h3m12 0h2m180 0h3m8 0h2m8 0h2m6 0h2m19 0h2m457 0h2m22 0h5m3 0h3m7 0h3m73 0h3m6 0h2m7 0h2"/>
<path stroke="#106bdd" stroke-width="3" d="M152 373.5h1M813 408.5h1M624 415.5h2m265 0h1M260 422.5h1m121 0h2m123 0h2m33 0h1m19 0h2m55 0h1m6 0h1m10 0h4m2 0h2m24 0h1m8 0h3m15 0h1m1 0h5m7 0h2m5 0h1m8 0h7m16 0h2m149 0h1M110 429.5h1m52 0h3m2 0h6m1 0h1m5 0h2m78 0h2m5 0h2m3 0h2m58 0h3m15 0h9m8 0h3m11 0h2m3 0h2m97 0h1m17 0h1m2 0h2m7 0h2m7 0h3m12 0h2m1 0h2m2 0h5m7 0h2m3 0h2m1 0h2m7 0h3m10 0h1m4 0h7m15 0h4m6 0h1m18 0h2m3 0h9m7 0h3m1 0h4m4 0h3m2 0h3m9 0h2m3 0h3m3 0h2m2 0h2m5 0h8m6 0h2m7 0h2m9 0h1m26 0h3m21 0h2m36 0h3m19 0h1m6 0h2m30 0h2M102 436.5h2m3 0h2m13 0h2m54 0h3m2 0h2m1 0h2m58 0h1m11 0h2m17 0h1m5 0h2m7 0h2m50 0h3m13 0h6m2 0h2m3 0h1m5 0h3m10 0h2m87 0h3m3 0h3m4 0h2m6 0h2m3 0h9m2 0h2m8 0h4m8 0h2m15 0h2m2 0h3m2 0h1m5 0h2m10 0h3m3 0h6m2 0h3m14 0h4m1 0h1m1 0h4m1 0h1m2 0h4m6 0h3m23 0h3m1 0h1m3 0h2m2 0h3m9 0h5m14 0h1m2 0h2m17 0h2m7 0h2m1 0h2m71 0h2m28 0h1m24 0h1m5 0h2m3 0h2m4 0h2M107 443.5h3m1 0h1m7 0h1m5 0h1m33 0h3m1 0h3m15 0h2m3 0h2m64 0h2m7 0h2m7 0h5m2 0h2m20 0h2m25 0h1m3 0h2m4 0h6m9 0h7m2 0h6m2 0h2m4 0h2m3 0h3m3 0h2m94 0h3m2 0h1m22 0h1m8 0h2m13 0h7m15 0h2m14 0h1m24 0h7m13 0h4m1 0h1m4 0h1m1 0h2m2 0h5m16 0h3m3 0h1m26 0h3m20 0h3m30 0h1m2 0h2m1 0h3m8 0h4m7 0h8m3 0h2m10 0h2m4 0h1m9 0h2m3 0h2m2 0h2m6 0h1m7 0h4m18 0h3m4 0h3m11 0h5m1 0h1m6 0h2M104 450.5h5m21 0h4m32 0h1m18 0h3m58 0h1m2 0h5m1 0h3m2 0h1m7 0h7m8 0h2m13 0h1m2 0h3m3 0h4m3 0h6m5 0h1m30 0h2m12 0h1m116 0h3m4 0h2m8 0h1m28 0h2m5 0h2m40 0h2m8 0h2m10 0h2m1 0h3m5 0h1m113 0h2m6 0h3m23 0h5m27 0h2m9 0h2m5 0h1m2 0h4m14 0h2m5 0h3m2 0h5m8 0h3m1 0h5m3 0h1m7 0h4m3 0h2m3 0h1m4 0h2m5 0h2M104 457.5h3m3 0h1m17 0h2m27 0h2m27 0h2m58 0h3m3 0h2m24 0h4m1 0h5m1 0h1m11 0h3m1 0h2m1 0h3m9 0h5m2 0h3m3 0h3m55 0h1m2 0h2m94 0h1m13 0h1m61 0h1m184 0h1m5 0h2m1 0h5m6 0h2m5 0h1m6 0h6m6 0h2m3 0h2m2 0h3m2 0h2m1 0h2m6 0h2m2 0h7m7 0h1m15 0h3m14 0h3m1 0h2m5 0h2m6 0h2m7 0h2M101 464.5h6m178 0h3m4 0h2m7 0h4m2 0h1m7 0h2m3 0h5m75 0h3m77 0h1m41 0h2m227 0h1m21 0h3m7 0h2m6 0h4m2 0h2m1 0h2m9 0h2m7 0h2m14 0h2m5 0h1m2 0h3m3 0h7m3 0h1m3 0h2m9 0h2m11 0h4m4 0h5M120 471.5h2m124 0h1m67 0h1m11 0h1m75 0h2m67 0h2m49 0h1m255 0h1m2 0h2m5 0h5m4 0h2m1 0h2m2 0h2m3 0h2m5 0h6m5 0h2m9 0h2m1 0h2m6 0h2m12 0h3m5 0h1m19 0h1m11 0h2M241 478.5h2m1 0h3m42 0h1m17 0h1m9 0h3m82 0h1m75 0h2m43 0h1m267 0h4m13 0h1m4 0h1m2 0h2m7 0h1m4 0h3m5 0h2m6 0h1m4 0h1m1 0h3m32 0h2m10 0h1M133 485.5h1m386 0h2m280 0h2m2 0h2m8 0h2m7 0h1m8 0h2m2 0h2m6 0h3m7 0h3m13 0h1m15 0h2m15 0h1M98 492.5h1m2 0h1m10 0h2m4 0h1m119 0h2m3 0h1m225 0h2m4 0h1M112 499.5h2m106 0h1m250 0h2m2 0h1m430 0h1m136 0h1m34 0h2M99 506.5h2m11 0h2m20 0h4m2 0h3m4 0h3m52 0h2m26 0h1m4 0h5m234 0h1m442 0h2m101 0h3m4 0h1m29 0h2m15 0h2M202 513.5h2m31 0h5m181 0h2m10 0h1m17 0h2m15 0h1m4 0h1m48 0h1m415 0h1m13 0h1m38 0h2m2 0h2m5 0h2m49 0h2m2 0h4m9 0h2M100 520.5h1m51 0h1m37 0h2m2 0h2m24 0h3m15 0h3m170 0h4m14 0h4m10 0h4m459 0h1m12 0h2m37 0h1m9 0h2m53 0h3m16 0h1m1 0h3M150 527.5h2m1 0h1m63 0h2m9 0h2m196 0h3m18 0h1m5 0h3m463 0h2m4 0h5m7 0h1m1 0h2m27 0h4m6 0h1m20 0h2m9 0h2m11 0h1m11 0h3m4 0h1"/>
<path stroke="#106bdd" stroke-width="4" d="M814 412h2m11 0h2m12 0h2M557 419h2m12 0h1m7 0h2m84 0h1m29 0h1m99 0h2m16 0h1m12 0h1m49 0h1m13 0h1M166 426h2m9 0h4m80 0h2m10 0h2m51 0h1m164 0h2m1 0h2m14 0h3m27 0h2m10 0h2m1 0h2m5 0h4m5 0h1m2 0h2m3 0h2m1 0h2m4 0h1m1 0h2m11 0h1m2 0h4m5 0h1m6 0h2m16 0h1m19 0h1m4 0h1m12 0h5m3 0h3m3 0h2m2 0h1m3 0h3m6 0h3m2 0h2m5 0h4m10 0h4m10 0h2m53 0h2m12 0h2m27 0h2m3 0h1m3 0h3m14 0h3m3 0h4M102 433h2m18 0h2m2 0h2m38 0h1m1 0h3m5 0h1m4 0h2m75 0h2m18 0h1m2 0h1m32 0h1m27 0h2m22 0h2m14 0h2m1 0h1m6 0h2m90 0h2m4 0h3m13 0h10m8 0h6m13 0h4m3 0h2m2 0h1m4 0h2m3 0h2m1 0h2m2 0h1m9 0h6m1 0h1m12 0h3m3 0h3m6 0h3m3 0h2m6 0h2m2 0h3m10 0h2m1 0h10m3 0h2m12 0h1m5 0h3m3 0h1m6 0h4m6 0h2m2 0h2m2 0h2m1 0h1m3 0h2m3 0h3m4 0h2m7 0h1m36 0h2m18 0h1m4 0h2m10 0h2m41 0h3m1 0h3m2 0h1m3 0h1m3 0h1m9 0h2m8 0h2M104 440h3m21 0h2m33 0h3m83 0h3m9 0h2m3 0h4m5 0h3m1 0h2m13 0h2m18 0h1m8 0h2m2 0h3m2 0h1m3 0h3m3 0h2m10 0h2m2 0h2m5 0h1m5 0h1m2 0h2m3 0h3m2 0h1m2 0h2m14 0h1m80 0h2m8 0h4m2 0h2m2 0h1m2 0h3m6 0h2m7 0h3m4 0h6m7 0h2m7 0h1m2 0h2m5 0h7m5 0h3m3 0h2m5 0h1m2 0h4m2 0h3m3 0h1m29 0h6m5 0h2m47 0h1m2 0h1m12 0h2m14 0h3m6 0h2m2 0h3m1 0h4m1 0h1m8 0h2m7 0h2m3 0h2m3 0h2m5 0h2m10 0h2m11 0h3m51 0h1m5 0h1m10 0h3m6 0h2m8 0h5M104 447h3m12 0h5m1 0h8m26 0h3m5 0h1m13 0h2m3 0h2m59 0h2m6 0h6m2 0h3m4 0h3m2 0h3m1 0h2m11 0h4m3 0h2m4 0h2m1 0h1m2 0h1m3 0h5m3 0h4m9 0h6m5 0h2m5 0h2m4 0h5m6 0h1m4 0h1m8 0h1m3 0h2m3 0h2m91 0h3m8 0h2m2 0h2m1 0h1m10 0h2m20 0h2m2 0h1m11 0h1m29 0h3m1 0h1m12 0h3m1 0h2m6 0h2m4 0h1m6 0h1m3 0h2m2 0h3m79 0h1m25 0h3m2 0h1m1 0h2m8 0h1m8 0h2m11 0h2m5 0h3m2 0h4m25 0h2m1 0h1m12 0h2m1 0h5m1 0h2m2 0h1m1 0h6m7 0h2m1 0h2m8 0h3m6 0h2m4 0h6m3 0h2M107 454h2m1 0h1m19 0h4m25 0h3m24 0h2m58 0h1m2 0h3m6 0h2m8 0h2m15 0h3m13 0h4m2 0h1m4 0h3m15 0h2m1 0h3m6 0h2m29 0h1m18 0h4m97 0h1m29 0h1m30 0h1m46 0h2m16 0h1m2 0h2m6 0h2m120 0h3m2 0h2m6 0h1m12 0h3m7 0h3m2 0h2m5 0h4m14 0h2m2 0h2m10 0h2m7 0h1m3 0h2m4 0h3m6 0h1m3 0h2m1 0h2m6 0h2m5 0h2m6 0h2m4 0h2m5 0h1M107 461h3m9 0h1m4 0h1m34 0h3m84 0h1m42 0h1m8 0h3m3 0h1m6 0h1m3 0h2m3 0h3m200 0h1m8 0h1m132 0h1m94 0h5m5 0h1m2 0h5m13 0h2m2 0h2m3 0h8m10 0h2m13 0h1m2 0h2m3 0h2m1 0h3m2 0h2m1 0h7m4 0h13m1 0h2m4 0h1m6 0h1m3 0h2M104 468h3m2 0h1m49 0h3m85 0h2m36 0h3m1 0h1m14 0h1m3 0h1m2 0h1m2 0h1m8 0h2m31 0h2m42 0h2m78 0h1m271 0h3m18 0h5m17 0h5m6 0h2m1 0h2m3 0h4m2 0h4m19 0h1m3 0h4m17 0h1m7 0h1m17 0h2m5 0h2m2 0h1M133 475h1m110 0h3m41 0h1m1 0h2m13 0h3m7 0h5m80 0h2m376 0h3m7 0h7m5 0h2m25 0h2m5 0h2m8 0h2m23 0h2m11 0h1m8 0h1m13 0h1M188 482h1m12 0h1m39 0h2m45 0h1m22 0h1m88 0h2m76 0h2m40 0h2m282 0h4m3 0h2m5 0h2m9 0h1m3 0h1m2 0h2m3 0h3m2 0h1m4 0h2m19 0h1m3 0h1m28 0h1m17 0h1m75 0h2M145 489h2m9 0h1m68 0h1m7 0h2m76 0h1m90 0h1m75 0h2m42 0h1m285 0h1m11 0h2m4 0h1m29 0h3M156 496h1m57 0h1m26 0h2m168 0h2m62 0h3m480 0h1m57 0h1m12 0h2m45 0h2M99 503h1m16 0h2m25 0h2m7 0h1m3 0h1m32 0h1m40 0h1m9 0h1m200 0h1m34 0h2m428 0h1m30 0h1m48 0h2m39 0h1m21 0h2m11 0h3m5 0h2m6 0h2M96 510h2m2 0h1m35 0h2m5 0h2m5 0h2m40 0h1m3 0h2m6 0h2m8 0h1m8 0h2m3 0h2m5 0h5m1 0h2m225 0h1m512 0h1m83 0h3M138 517h2m12 0h1m48 0h1m12 0h1m6 0h2m5 0h2m218 0h3m472 0h1m12 0h1m39 0h2m6 0h4m28 0h1m26 0h3m7 0h2m4 0h2m4 0h3m8 0h4M147 524h3m40 0h2m28 0h1m185 0h2m3 0h2m3 0h1m6 0h3m13 0h2m1 0h1m17 0h2m451 0h2m16 0h3m31 0h1m65 0h3m1 0h3m11 0h2M98 531h1m94 0h1m4 0h2m226 0h1m4 0h2m1 0h2m11 0h1m3 0h2m486 0h2m13 0h2m12 0h2m8 0h1m5 0h2m2 0h3m2 0h4m20 0h3m9 0h2m26 0h2m11 0h2"/>
<path stroke="#1079cf" stroke-width="3" d="M174 422.5h1m201 0h1m180 0h2m100 0h1M174 429.5h1m2 0h1m194 0h1m3 0h1m121 0h6m26 0h2m3 0h3m4 0h1m45 0h1m18 0h3m33 0h2m4 0h1m9 0h1m1 0h2m2 0h1m23 0h1m13 0h3m2 0h1m7 0h1m18 0h2M125 436.5h1m36 0h5m1 0h6m3 0h1m10 0h1m65 0h1m96 0h3m4 0h2m27 0h2m101 0h1m33 0h1m7 0h6m4 0h1m4 0h3m2 0h5m2 0h2m3 0h2m1 0h2m2 0h1m2 0h5m8 0h1m22 0h3m6 0h1m25 0h2m2 0h7m7 0h2m6 0h3m2 0h1m6 0h7m6 0h7m3 0h2m2 0h2m2 0h2m1 0h6m3 0h3m4 0h2m30 0h1m56 0h2m42 0h3m7 0h1m13 0h1M122 443.5h2m4 0h2m38 0h3m6 0h4m4 0h1m82 0h2m13 0h2m47 0h1m14 0h4m7 0h2m10 0h1m1 0h1m4 0h2m5 0h1m2 0h7m93 0h3m1 0h7m2 0h5m1 0h1m3 0h8m6 0h4m2 0h2m8 0h5m5 0h4m7 0h8m5 0h15m1 0h2m2 0h2m7 0h2m1 0h9m5 0h1m3 0h2m11 0h10m2 0h4m3 0h3m6 0h1m5 0h3m7 0h2m7 0h2m8 0h9m8 0h4m4 0h1m9 0h7m10 0h3m49 0h2m40 0h1m15 0h1M109 450.5h2m8 0h1m2 0h2m1 0h1m33 0h3m1 0h3m11 0h1m80 0h2m3 0h3m9 0h3m1 0h2m23 0h1m22 0h5m4 0h3m3 0h5m2 0h2m3 0h2m4 0h2m3 0h1m2 0h2m1 0h1m10 0h2m3 0h4m1 0h2m86 0h7m4 0h3m4 0h6m1 0h2m2 0h4m12 0h3m2 0h2m6 0h2m5 0h7m2 0h3m14 0h5m3 0h2m8 0h3m4 0h5m2 0h1m2 0h1m6 0h2m1 0h5m3 0h2m6 0h2m16 0h3m12 0h4m5 0h2m1 0h1m18 0h1m11 0h1m5 0h2m15 0h2m7 0h3m2 0h3m1 0h2m1 0h5m3 0h3m8 0h5m76 0h1m9 0h1m6 0h2m2 0h3m12 0h2m8 0h2M102 457.5h2m3 0h3m10 0h4m2 0h2m2 0h3m26 0h4m25 0h1m36 0h1m23 0h3m3 0h5m6 0h4m3 0h2m2 0h1m4 0h1m24 0h1m57 0h1m5 0h1m5 0h2m3 0h2m97 0h3m2 0h4m23 0h3m7 0h1m33 0h2m28 0h1m1 0h1m4 0h2m8 0h1m8 0h2m7 0h2m4 0h2m17 0h2m40 0h1m33 0h2m15 0h7m1 0h1m3 0h5m9 0h5m2 0h3m3 0h2m39 0h2m19 0h5m17 0h5m4 0h1m3 0h1m6 0h1m2 0h2m3 0h1m4 0h4M107 464.5h2m1 0h1m15 0h2m2 0h4m23 0h5m24 0h2m59 0h5m3 0h3m5 0h3m13 0h3m1 0h2m4 0h3m2 0h2m3 0h2m7 0h1m3 0h2m16 0h3m9 0h2m24 0h2m3 0h1m2 0h1m9 0h1m7 0h2m88 0h3m105 0h2m10 0h2m21 0h1m2 0h2m111 0h5m4 0h5m3 0h3m3 0h2m3 0h2m12 0h6m11 0h6m6 0h4m8 0h1m2 0h1m10 0h1m8 0h3m7 0h3m1 0h3m5 0h2m6 0h5m4 0h2m6 0h2m5 0h2M101 471.5h1m5 0h2m19 0h2m3 0h1m23 0h2m27 0h2m52 0h1m27 0h2m13 0h5m1 0h5m10 0h3m4 0h1m3 0h2m83 0h2m121 0h1m224 0h1m11 0h3m13 0h2m5 0h5m7 0h2m14 0h2m20 0h5m5 0h1m9 0h9m11 0h4m5 0h1m1 0h6m2 0h2m2 0h2m2 0h1M101 478.5h1m26 0h2m3 0h1m23 0h2m129 0h1m3 0h4m3 0h2m8 0h2m1 0h2m6 0h5m453 0h1m2 0h4m3 0h3m6 0h2m1 0h4m14 0h2m2 0h2m2 0h1m9 0h2m14 0h1m10 0h3m7 0h3m6 0h1m8 0h3m7 0h2M298 485.5h3m7 0h3m6 0h3m7 0h3m446 0h2m5 0h2m8 0h6m1 0h2m2 0h2m2 0h1m5 0h2m6 0h2m2 0h1m6 0h1m19 0h3m15 0h1m24 0h2m3 0h2M99 492.5h1m14 0h2m188 0h1m95 0h2m76 0h2m315 0h2m3 0h2m24 0h1m13 0h1m3 0h2m5 0h5m45 0h2M96 499.5h2m3 0h1m32 0h2m20 0h1m32 0h1m50 0h1m2 0h3m156 0h1m426 0h1M403 506.5h1m67 0h2m3 0h2m44 0h1m415 0h1m77 0h1M96 513.5h3m17 0h2m16 0h2m53 0h1m3 0h1m23 0h3m10 0h1m2 0h2m63 0h1m142 0h1m29 0h2m448 0h2m11 0h2m1 0h1m43 0h1m34 0h1m12 0h2m34 0h3m4 0h2m2 0h2M228 520.5h2m11 0h2m172 0h1m1 0h2m14 0h1m3 0h2m2 0h1m20 0h6m5 0h2m432 0h2m14 0h1m14 0h3m11 0h1m19 0h2m34 0h2m47 0h4m4 0h3m2 0h2m2 0h2M142 527.5h1m47 0h2m22 0h1m4 0h4m190 0h2m6 0h2m1 0h2m3 0h2m3 0h2m12 0h5m3 0h2m2 0h2m2 0h2m475 0h2m13 0h2m8 0h2m16 0h4m5 0h2m21 0h1m7 0h3m2 0h2m10 0h1m4 0h1m12 0h2"/>
<path stroke="#1079cf" stroke-width="4" d="M825 405h1M841 419h3M168 426h3m4 0h1m195 0h1m118 0h1m27 0h2m41 0h1m154 0h1m91 0h1M171 433h4m2 0h1m5 0h3m161 0h2m5 0h4m15 0h1m3 0h5m2 0h1m102 0h3m62 0h2m1 0h2m4 0h1m7 0h2m3 0h2m3 0h2m8 0h1m51 0h2m22 0h5m1 0h6m9 0h3m1 0h2m2 0h1m8 0h3m2 0h1m7 0h1m1 0h3m2 0h3m13 0h1m86 0h1m35 0h1m19 0h1M130 440h3m29 0h1m3 0h2m3 0h3m1 0h2m1 0h7m1 0h2m64 0h8m10 0h3m5 0h1m68 0h7m6 0h5m17 0h2m1 0h1m3 0h2m96 0h3m1 0h3m8 0h2m1 0h1m4 0h6m8 0h1m3 0h4m6 0h4m5 0h7m1 0h2m2 0h2m1 0h2m7 0h3m5 0h3m6 0h1m7 0h2m12 0h3m2 0h5m1 0h1m8 0h2m8 0h1m6 0h2m1 0h3m3 0h3m2 0h2m7 0h1m19 0h4m6 0h10m2 0h4m1 0h8m4 0h2m11 0h1m35 0h1m32 0h2m13 0h1m36 0h3m28 0h2M110 447h1m51 0h5m1 0h3m3 0h1m8 0h2m69 0h1m23 0h1m19 0h1m15 0h1m15 0h6m6 0h5m2 0h2m5 0h4m6 0h2m4 0h1m1 0h2m1 0h2m13 0h2m87 0h5m5 0h2m13 0h4m3 0h3m8 0h8m1 0h2m5 0h2m1 0h2m7 0h2m3 0h4m8 0h5m2 0h3m2 0h1m7 0h1m6 0h5m6 0h6m2 0h4m2 0h1m6 0h2m13 0h2m2 0h2m1 0h3m3 0h3m10 0h1m1 0h3m3 0h1m12 0h2m2 0h2m4 0h3m9 0h2m12 0h3m4 0h2m4 0h3m3 0h2m4 0h1m5 0h2m1 0h5m43 0h1m4 0h1m2 0h2m2 0h2m4 0h1m2 0h1m16 0h1m24 0h1m4 0h3m5 0h4m3 0h1M101 454h1m7 0h1m9 0h1m4 0h2m128 0h4m5 0h3m4 0h3m2 0h2m1 0h1m3 0h3m4 0h1m6 0h2m7 0h2m4 0h1m3 0h2m9 0h1m9 0h6m2 0h3m2 0h2m7 0h2m2 0h4m5 0h1m5 0h2m3 0h3m4 0h2m99 0h3m11 0h2m3 0h7m16 0h3m47 0h2m5 0h1m6 0h2m8 0h1m3 0h6m43 0h1m5 0h1m46 0h2m17 0h2m6 0h8m2 0h2m8 0h1m6 0h5m43 0h2m4 0h2m4 0h3m4 0h1m10 0h2m27 0h3m3 0h3m6 0h2m10 0h1M104 461h3m4 0h1m10 0h2m1 0h1m2 0h2m56 0h2m59 0h7m1 0h3m15 0h2m4 0h2m1 0h3m3 0h1m1 0h2m2 0h2m5 0h3m1 0h2m2 0h2m3 0h1m11 0h1m5 0h4m3 0h3m52 0h2m84 0h1m6 0h4m18 0h1m64 0h2m37 0h2m1 0h4m123 0h2m10 0h4m7 0h4m15 0h3m26 0h2m4 0h2m5 0h2m9 0h2m3 0h1m15 0h3m17 0h4m3 0h4m1 0h3M157 468h2m26 0h4m72 0h2m15 0h1m3 0h1m7 0h9m2 0h3m5 0h2m1 0h2m1 0h2m3 0h3m10 0h3m184 0h2m1 0h1m223 0h1m9 0h2m9 0h2m11 0h4m15 0h2m6 0h1m2 0h3m4 0h2m10 0h4m2 0h2m13 0h1m1 0h3m3 0h3m1 0h3m5 0h1m7 0h3m10 0h2m2 0h4m3 0h2M101 475h1m23 0h1m31 0h2m130 0h1m2 0h2m10 0h1m6 0h3m9 0h3m147 0h1m297 0h2m8 0h2m14 0h2m5 0h7m2 0h5m11 0h5m2 0h4m1 0h2m13 0h3m3 0h4m7 0h3m1 0h2m4 0h3m2 0h3m3 0h2m2 0h5M101 482h1m31 0h1m23 0h2m135 0h4m3 0h3m5 0h2m91 0h1m119 0h1m253 0h2m5 0h2m3 0h5m4 0h2m1 0h2m7 0h2m3 0h2m6 0h2m6 0h3m16 0h2m2 0h3m3 0h3M98 489h3m8 0h1m14 0h1m119 0h2m42 0h1m19 0h1m166 0h3m303 0h2m8 0h2m4 0h2m3 0h4m7 0h1m4 0h2m4 0h1m19 0h2m1 0h4m25 0h1m5 0h1M100 496h1m8 0h1m4 0h2m24 0h2m101 0h1m234 0h2m40 0h2m269 0h2m9 0h2m47 0h1M98 503h1m13 0h2m24 0h2m93 0h2m8 0h1m189 0h1m35 0h2m590 0h1m14 0h2M112 510h2m2 0h2m16 0h2m4 0h2m56 0h2m20 0h1m9 0h1m2 0h2m5 0h1m228 0h4m513 0h2m35 0h1m2 0h1m28 0h2m17 0h2M98 517h1m35 0h2m4 0h2m52 0h2m24 0h1m2 0h2m19 0h2m170 0h3m12 0h3m3 0h2m2 0h1m14 0h2m4 0h4m3 0h4m446 0h2m3 0h1m66 0h2m21 0h2m4 0h3m26 0h2m11 0h3m7 0h2M96 524h2m16 0h2m20 0h2m7 0h2m6 0h1m39 0h1m2 0h2m13 0h3m11 0h1m15 0h2m172 0h1m13 0h2m16 0h1m5 0h3m10 0h2m438 0h1m29 0h1m15 0h1m13 0h2m18 0h2m13 0h3m8 0h2m13 0h1m25 0h2m4 0h2m7 0h2M150 531h2m4 0h1m35 0h1m15 0h3m6 0h2m1 0h1m10 0h2m5 0h2m171 0h2m10 0h1m17 0h2m26 0h2m448 0h2m55 0h2m36 0h2m4 0h3m49 0h2"/>
<path stroke="#1086c2" stroke-width="3" d="M167 429.5h1m411 0h2m66 0h2m14 0h2m159 0h1M176 436.5h1m179 0h2m16 0h2m1 0h2m137 0h2m20 0h2m97 0h3m20 0h1m4 0h1m3 0h1m7 0h1m17 0h1m7 0h3m2 0h1m14 0h3m9 0h2M162 443.5h1m4 0h1m3 0h5m90 0h2m7 0h2m89 0h2m3 0h1m4 0h1m113 0h1m14 0h1m1 0h2m19 0h2m2 0h1m12 0h5m4 0h1m2 0h4m11 0h2m31 0h1m9 0h1m11 0h1m32 0h1m5 0h3m1 0h1m3 0h3m1 0h3m2 0h3m6 0h5m15 0h4m5 0h4m1 0h5m2 0h2M102 450.5h2m7 0h1m16 0h2m32 0h1m4 0h7m1 0h1m2 0h7m81 0h2m14 0h1m49 0h1m6 0h3m5 0h2m2 0h3m4 0h2m2 0h3m1 0h2m6 0h2m1 0h5m2 0h3m7 0h2m100 0h2m15 0h7m15 0h3m4 0h3m7 0h2m5 0h2m1 0h4m1 0h4m5 0h3m2 0h1m2 0h3m1 0h1m5 0h2m14 0h3m9 0h2m3 0h3m4 0h3m4 0h8m7 0h4m9 0h1m8 0h5m9 0h4m4 0h3m3 0h2m2 0h4m9 0h2m1 0h3m4 0h2m33 0h2m8 0h1m47 0h1m57 0h2M119 457.5h1m5 0h1m37 0h3m2 0h3m3 0h1m2 0h9m75 0h2m7 0h3m2 0h2m37 0h1m15 0h3m3 0h6m5 0h7m2 0h2m4 0h3m1 0h5m1 0h4m3 0h3m2 0h1m1 0h1m5 0h2m97 0h2m3 0h2m2 0h2m4 0h1m3 0h3m3 0h2m7 0h5m3 0h2m3 0h4m1 0h2m2 0h3m4 0h1m6 0h1m5 0h2m7 0h11m1 0h1m1 0h4m4 0h3m2 0h1m1 0h8m3 0h4m1 0h1m2 0h2m1 0h1m2 0h2m2 0h3m3 0h1m4 0h2m67 0h3m1 0h5m2 0h1m3 0h2m4 0h5m7 0h1m1 0h2m8 0h1m5 0h1m96 0h1m5 0h1M119 464.5h3m2 0h1m3 0h2m33 0h3m1 0h1m86 0h1m3 0h3m7 0h9m1 0h1m3 0h1m28 0h1m14 0h1m6 0h3m3 0h3m2 0h5m2 0h3m2 0h9m1 0h2m6 0h2m6 0h2m3 0h2m3 0h2m96 0h1m3 0h2m2 0h2m4 0h1m2 0h2m9 0h2m15 0h3m5 0h2m9 0h1m4 0h2m42 0h1m3 0h3m6 0h4m4 0h2m6 0h2m15 0h1m27 0h1m43 0h2m14 0h2m1 0h3m6 0h2m6 0h2m6 0h1m2 0h3m5 0h2m3 0h2m25 0h1m32 0h2m1 0h2m48 0h2M102 471.5h5m2 0h1m1 0h1m7 0h1m4 0h4m31 0h4m89 0h3m3 0h2m3 0h3m4 0h3m9 0h1m11 0h2m2 0h3m6 0h1m4 0h2m3 0h9m1 0h12m47 0h1m93 0h1m3 0h2m19 0h1m4 0h3m29 0h1m36 0h2m6 0h1m36 0h2m116 0h1m2 0h3m1 0h2m1 0h8m3 0h2m1 0h4m29 0h1m13 0h3m6 0h3m1 0h1m13 0h1m11 0h1m16 0h2m1 0h1m6 0h3m8 0h1m7 0h2m1 0h2M110 478.5h1m14 0h1m60 0h2m59 0h5m6 0h2m30 0h2m4 0h2m3 0h3m1 0h2m1 0h1m2 0h1m3 0h2m9 0h1m73 0h2m78 0h1m262 0h2m3 0h1m6 0h2m3 0h5m14 0h2m4 0h3m16 0h4m1 0h4m1 0h2m4 0h2m2 0h1m2 0h3m3 0h1m7 0h2m4 0h2m7 0h6m6 0h3m6 0h5m2 0h4m6 0h2M98 485.5h1m58 0h2m27 0h3m57 0h1m38 0h4m7 0h2m3 0h3m3 0h1m3 0h6m6 0h3m74 0h3m77 0h1m285 0h2m20 0h3m8 0h1m9 0h5m6 0h2m5 0h3m6 0h2m3 0h5m3 0h2m8 0h3m1 0h3m2 0h1m8 0h2m3 0h1m1 0h2m6 0h4m7 0h2M116 492.5h2m15 0h1m54 0h1m101 0h2m13 0h2m4 0h1m2 0h1m87 0h1m119 0h1m228 0h1m45 0h3m9 0h2m9 0h4m5 0h1m6 0h4m23 0h3m5 0h2m21 0h2m4 0h1m2 0h2M118 499.5h1m188 0h1m92 0h2m76 0h2m40 0h3m268 0h2m51 0h2M98 506.5h1m2 0h1m16 0h1m37 0h1m84 0h2m232 0h1m602 0h2M101 513.5h1m10 0h2m4 0h1m17 0h4m16 0h1m41 0h2m28 0h2m14 0h2m170 0h1m52 0h2m4 0h1m586 0h3m9 0h2M96 520.5h2m16 0h2m20 0h2m2 0h2m14 0h1m35 0h1m3 0h2m33 0h2m2 0h3m165 0h1m72 0h2m44 0h1m487 0h2m37 0h2m10 0h1M98 527.5h1m55 0h2m42 0h2m1 0h1m39 0h2m200 0h2m24 0h2m453 0h1m24 0h3m22 0h2m5 0h1m19 0h1m53 0h2"/>
<path stroke="#1086c2" stroke-width="4" d="M799 419h1M373 426h1m498 0h1M533 433h2m86 0h1m4 0h1m13 0h1m40 0h2m17 0h3M124 440h1m43 0h3m197 0h3m2 0h1m112 0h1m31 0h2m54 0h2m29 0h1m21 0h1m13 0h4m8 0h3m4 0h1m2 0h2m6 0h3m2 0h2m3 0h9m8 0h2m25 0h1m5 0h4m35 0h1M124 447h1m50 0h6m80 0h2m3 0h4m3 0h2m76 0h3m19 0h1m5 0h3m2 0h1m1 0h3m97 0h1m6 0h5m12 0h3m5 0h2m15 0h3m7 0h7m3 0h2m4 0h3m3 0h2m5 0h2m3 0h2m1 0h2m3 0h1m2 0h6m8 0h1m15 0h1m6 0h1m9 0h6m6 0h1m3 0h3m4 0h3m2 0h4m1 0h1m5 0h1m1 0h5m3 0h4m2 0h2m3 0h1m8 0h2m1 0h3m2 0h2m1 0h1m3 0h2m2 0h1m3 0h4m2 0h4m26 0h1M111 454h1m8 0h4m4 0h2m33 0h4m1 0h3m6 0h1m3 0h4m62 0h2m3 0h2m12 0h2m11 0h3m45 0h3m2 0h1m21 0h2m4 0h2m6 0h3m3 0h2m3 0h3m4 0h1m94 0h3m2 0h4m4 0h2m6 0h2m12 0h4m4 0h4m2 0h2m3 0h3m4 0h1m2 0h9m1 0h27m2 0h5m1 0h2m2 0h2m2 0h3m2 0h2m11 0h3m7 0h1m1 0h2m4 0h6m3 0h2m15 0h1m2 0h2m1 0h3m1 0h1m3 0h2m16 0h2m3 0h1m16 0h2m13 0h2m2 0h4m11 0h1m64 0h1m57 0h1m4 0h1m6 0h1M102 461h2m22 0h2m2 0h3m48 0h4m73 0h5m3 0h2m2 0h3m2 0h4m2 0h1m41 0h3m1 0h5m4 0h3m3 0h2m5 0h5m2 0h4m2 0h8m6 0h8m2 0h1m5 0h2m90 0h2m14 0h4m1 0h4m4 0h3m8 0h1m3 0h2m20 0h2m2 0h1m2 0h5m2 0h3m5 0h2m2 0h3m11 0h6m2 0h3m2 0h2m2 0h3m12 0h2m2 0h2m6 0h3m39 0h1m58 0h2m3 0h3m4 0h1m1 0h6m16 0h2m8 0h2m14 0h2m9 0h1m4 0h1m70 0h2m10 0h4M101 468h3m3 0h2m2 0h1m7 0h14m116 0h3m14 0h2m7 0h2m4 0h1m1 0h2m20 0h2m19 0h1m3 0h3m3 0h11m25 0h1m11 0h1m9 0h2m91 0h3m14 0h1m2 0h2m50 0h2m5 0h1m31 0h3m19 0h1m1 0h2m3 0h1m2 0h2m2 0h3m98 0h8m5 0h3m4 0h2m2 0h6m5 0h3m6 0h2m7 0h3m38 0h1m4 0h2m8 0h2m10 0h3m3 0h1m3 0h2m1 0h2m1 0h4m1 0h2m3 0h1m1 0h2m5 0h1M102 475h5m2 0h1m9 0h1m66 0h2m59 0h2m3 0h2m29 0h5m8 0h3m2 0h3m5 0h2m9 0h3m9 0h1m61 0h2m84 0h1m9 0h1m2 0h1m246 0h5m4 0h2m6 0h2m1 0h3m2 0h6m2 0h3m9 0h3m30 0h2m26 0h1m4 0h2m6 0h3m4 0h3m2 0h2m3 0h1m2 0h3m4 0h2m4 0h2m2 0h2m5 0h2M109 482h2m135 0h3m5 0h1m30 0h3m2 0h2m13 0h2m1 0h1m3 0h2m1 0h5m5 0h1m1 0h3m144 0h1m274 0h2m14 0h1m15 0h2m2 0h3m5 0h4m5 0h2m9 0h1m2 0h2m2 0h2m3 0h1m1 0h2m18 0h2m13 0h6m1 0h2m11 0h1m3 0h2m4 0h2m2 0h7M101 489h1m8 0h1m22 0h1m54 0h1m57 0h1m47 0h2m9 0h2m469 0h2m15 0h2m4 0h1m6 0h2m6 0h2m13 0h1m3 0h1m2 0h8m2 0h1m5 0h1m9 0h1m23 0h2m12 0h1m2 0h3M118 496h1m177 0h2m16 0h1m10 0h1m74 0h3m66 0h2m322 0h2m4 0h3m9 0h2m5 0h4m14 0h2m8 0h3m10 0h3m9 0h1M96 503h2m36 0h2m108 0h2m232 0h2m336 0h2M118 510h1m106 0h1m17 0h3m61 0h1m94 0h2m664 0h2M116 517h2m84 0h2m21 0h1m4 0h1m4 0h5m1 0h2m160 0h1m69 0h1m463 0h1m32 0h2m74 0h1m10 0h2m15 0h2M134 524h2m2 0h2m12 0h1m3 0h1m57 0h1m8 0h2m3 0h3m4 0h3m2 0h1m204 0h2m21 0h3m2 0h1m48 0h1m415 0h1m23 0h3m49 0h2m35 0h2m4 0h2m6 0h3m6 0h2M114 531h2m20 0h2m5 0h2m9 0h2m59 0h2m6 0h2m3 0h2m191 0h2m16 0h2m25 0h2m457 0h3m18 0h3m23 0h2m5 0h3m22 0h2m2 0h2m2 0h2m13 0h2m2 0h4m11 0h1m2 0h4m6 0h2"/>
<path stroke="#1093b5" stroke-width="3" d="M370 436.5h1m276 0h2M382 443.5h2m208 0h2m53 0h2m12 0h4m12 0h1m19 0h3M174 450.5h1m1 0h1m196 0h1m2 0h1m155 0h1m24 0h2m2 0h1m4 0h1m63 0h2m5 0h4m8 0h1m3 0h3m5 0h4m5 0h4m2 0h1m6 0h9m5 0h3m3 0h3m3 0h1m7 0h4m14 0h2M166 457.5h2m95 0h3m78 0h3m7 0h2m2 0h4m14 0h1m8 0h1m1 0h4m102 0h1m4 0h2m2 0h2m1 0h1m1 0h3m8 0h2m4 0h1m5 0h2m3 0h3m4 0h1m2 0h2m3 0h4m1 0h2m2 0h2m1 0h4m5 0h1m2 0h2m20 0h2m3 0h2m12 0h1m4 0h1m5 0h1m5 0h2m3 0h3m3 0h2m4 0h10m4 0h7m4 0h7m2 0h6m3 0h5m1 0h8m2 0h2m2 0h2m3 0h1m8 0h3m2 0h4m134 0h2M122 464.5h2m1 0h1m36 0h1m3 0h1m1 0h3m3 0h1m6 0h2m2 0h1m66 0h2m7 0h2m3 0h2m9 0h1m47 0h1m10 0h3m10 0h2m3 0h2m14 0h2m5 0h2m5 0h2m3 0h2m90 0h3m3 0h3m1 0h3m8 0h2m1 0h2m2 0h7m9 0h5m2 0h3m3 0h2m2 0h1m2 0h2m3 0h4m1 0h4m5 0h5m3 0h2m2 0h12m1 0h3m2 0h9m3 0h1m3 0h6m4 0h2m4 0h1m1 0h2m7 0h3m3 0h2m18 0h2m1 0h3m1 0h1m10 0h2m13 0h1m3 0h3m5 0h1m24 0h4m2 0h1m19 0h1m3 0h2M110 471.5h1m11 0h2m6 0h3m30 0h4m9 0h1m4 0h2m64 0h5m3 0h3m15 0h2m2 0h1m1 0h3m6 0h1m50 0h10m5 0h2m2 0h8m2 0h2m2 0h2m2 0h3m8 0h4m3 0h2m85 0h3m9 0h1m2 0h2m8 0h4m14 0h1m5 0h5m31 0h3m3 0h2m10 0h3m1 0h1m3 0h2m7 0h3m3 0h3m6 0h3m2 0h1m4 0h1m1 0h2m4 0h3m6 0h2m88 0h2m4 0h3m1 0h2m25 0h6m54 0h3m35 0h1m14 0h1m10 0h2M102 478.5h8m9 0h6m1 0h2m2 0h3m26 0h3m26 0h1m65 0h1m15 0h5m6 0h1m1 0h5m16 0h1m9 0h1m10 0h1m1 0h12m35 0h3m10 0h2m5 0h2m95 0h3m10 0h1m13 0h2m22 0h1m60 0h1m23 0h3m110 0h2m3 0h2m2 0h6m2 0h3m5 0h13m65 0h3m25 0h2m3 0h1m6 0h1m12 0h4m3 0h3M101 485.5h3m6 0h1m13 0h2m2 0h5m26 0h3m85 0h2m26 0h2m12 0h1m2 0h4m9 0h2m13 0h3m3 0h1m6 0h3m55 0h1m2 0h2m192 0h2m152 0h1m2 0h3m7 0h5m3 0h2m6 0h2m5 0h1m2 0h2m2 0h3m3 0h2m25 0h2m10 0h3m7 0h1m10 0h2m13 0h2m1 0h2m2 0h4m2 0h3m4 0h2m2 0h1m7 0h3M102 492.5h2m53 0h2m87 0h1m38 0h3m4 0h2m2 0h3m10 0h2m14 0h1m450 0h2m5 0h10m11 0h5m2 0h9m4 0h2m1 0h2m5 0h2m5 0h3m2 0h5m17 0h3m11 0h2m2 0h2m4 0h2m2 0h2m7 0h1M299 499.5h2m4 0h2m1 0h6m474 0h3m2 0h4m2 0h1m6 0h3m2 0h2m3 0h4m4 0h1m1 0h1m3 0h3m5 0h5m3 0h3m3 0h1m3 0h3m3 0h4m2 0h1m8 0h2m24 0h2M96 506.5h2m35 0h1m55 0h1m54 0h3m155 0h1m70 0h1m4 0h2m40 0h2m304 0h1m14 0h2m25 0h1M100 513.5h1m13 0h2m125 0h2m160 0h1m637 0h1m36 0h2M99 520.5h1m12 0h2m119 0h2m8 0h1m224 0h3m605 0h2M112 527.5h2m4 0h1m15 0h2m4 0h2m81 0h2m1 0h2m7 0h6m170 0h2m10 0h1m38 0h2m7 0h2m479 0h1m109 0h6m8 0h2"/>
<path stroke="#1093b5" stroke-width="4" d="M659 440h1m6 0h4m8 0h3m14 0h2M171 447h3m326 0h2m64 0h1m78 0h2m12 0h1m3 0h2m9 0h2m7 0h3m10 0h1m1 0h2m3 0h3m12 0h3m2 0h2M126 454h2m34 0h1m4 0h1m3 0h3m1 0h2m1 0h3m4 0h1m75 0h2m10 0h2m2 0h1m69 0h2m2 0h3m2 0h2m8 0h2m4 0h1m3 0h1m8 0h1m1 0h2m2 0h1m92 0h2m10 0h6m4 0h3m19 0h2m8 0h4m1 0h2m47 0h2m13 0h3m10 0h2m2 0h2m1 0h1m4 0h2m6 0h3m4 0h2m1 0h9m2 0h2m8 0h3m2 0h13m1 0h2m2 0h1m3 0h5m3 0h6m4 0h1m1 0h5m2 0h4M162 461h4m1 0h7m3 0h4m4 0h1m68 0h1m8 0h3m2 0h2m74 0h3m7 0h2m15 0h3m11 0h1m1 0h2m92 0h3m2 0h1m4 0h9m10 0h3m3 0h4m5 0h3m2 0h2m1 0h5m4 0h8m2 0h2m1 0h2m5 0h2m3 0h4m10 0h9m6 0h2m7 0h2m3 0h3m2 0h1m4 0h2m2 0h2m2 0h6m3 0h6m2 0h2m2 0h10m1 0h1m2 0h2m5 0h6m13 0h1m2 0h2m2 0h1m1 0h5m7 0h4m2 0h7m2 0h10m2 0h3m39 0h2m2 0h2M110 468h1m51 0h4m9 0h1m1 0h1m3 0h4m67 0h9m2 0h3m2 0h7m4 0h2m44 0h1m1 0h3m17 0h2m5 0h2m2 0h2m5 0h1m4 0h1m3 0h3m2 0h5m1 0h6m90 0h6m4 0h2m1 0h6m2 0h2m6 0h3m3 0h2m7 0h3m2 0h2m8 0h2m1 0h2m9 0h1m6 0h1m2 0h2m5 0h3m2 0h6m5 0h1m2 0h2m4 0h2m6 0h1m2 0h6m3 0h4m4 0h2m2 0h2m2 0h2m3 0h3m7 0h2m10 0h1m11 0h3m29 0h3m37 0h2m6 0h1m13 0h3m132 0h1M107 475h2m1 0h2m8 0h5m1 0h7m26 0h7m83 0h3m2 0h4m3 0h2m14 0h2m3 0h1m11 0h2m30 0h6m1 0h6m3 0h2m3 0h4m9 0h2m12 0h3m14 0h1m89 0h3m48 0h1m5 0h2m22 0h2m2 0h1m22 0h3m24 0h4m1 0h3m101 0h1m13 0h1m5 0h2m5 0h5m2 0h1m3 0h2m11 0h2m5 0h2m35 0h2M102 482h7m2 0h1m8 0h2m2 0h4m34 0h1m23 0h2m64 0h2m21 0h2m4 0h1m10 0h2m4 0h3m3 0h1m2 0h1m6 0h1m5 0h5m1 0h1m3 0h2m17 0h2m34 0h1m8 0h2m127 0h1m97 0h1m123 0h2m8 0h10m5 0h6m2 0h3m45 0h1m46 0h3m1 0h5m1 0h1m4 0h4m2 0h2m7 0h2M111 489h1m45 0h2m27 0h2m55 0h1m17 0h2m15 0h1m4 0h5m1 0h3m7 0h5m3 0h1m1 0h2m3 0h1m5 0h5m75 0h2m345 0h1m12 0h3m7 0h1m2 0h3m7 0h8m4 0h2m3 0h2m7 0h4m3 0h2m4 0h2m3 0h2m1 0h3m1 0h2m15 0h1m1 0h3m3 0h3m1 0h5m3 0h1m5 0h5m1 0h1m7 0h9m1 0h2M98 496h1m34 0h1m23 0h2m87 0h1m41 0h1m1 0h2m2 0h2m5 0h3m1 0h2m2 0h5m3 0h3m202 0h1m250 0h3m9 0h6m6 0h2m5 0h7m3 0h4m11 0h1m3 0h3m4 0h1m2 0h3m10 0h3m3 0h1m3 0h2m15 0h1m6 0h1m1 0h2m11 0h1M101 503h1m139 0h2m55 0h1m9 0h1m94 0h1m116 0h2m278 0h2m6 0h1m4 0h1m15 0h1m3 0h1m4 0h3m11 0h4m49 0h1M156 510h1m147 0h1m171 0h4m590 0h2M96 517h2m3 0h1m12 0h2m2 0h1m17 0h2m51 0h1m43 0h2m5 0h1m2 0h1m230 0h1m431 0h1M226 524h2m3 0h4m3 0h2m4 0h2m157 0h3m65 0h2m2 0h3m490 0h2m77 0h2m13 0h3m13 0h2M138 531h4m11 0h1m35 0h1m31 0h2m2 0h1m4 0h1m2 0h2m227 0h4m5 0h3m437 0h2m8 0h3m29 0h1m2 0h2m28 0h2m73 0h4m3 0h2m6 0h2"/>
<path stroke="#109da8" stroke-width="3" d="M176 443.5h1m492 0h1m19 0h1M528 450.5h2m96 0h1m33 0h1m55 0h1m4 0h2m2 0h1M171 457.5h3m1 0h2m307 0h2m8 0h2m36 0h1m36 0h2m1 0h2m67 0h2m17 0h3m7 0h4m7 0h2m7 0h2m5 0h1m8 0h2m2 0h2M171 464.5h3m1 0h1m1 0h4m2 0h2m142 0h3m42 0h1m6 0h3m9 0h1m104 0h2m2 0h2m14 0h2m6 0h1m5 0h2m8 0h2m5 0h3m11 0h1m7 0h3m2 0h2m46 0h2m10 0h3m3 0h3m4 0h2m1 0h6m3 0h1m5 0h1m5 0h6m1 0h3m2 0h3m3 0h3m2 0h2m1 0h3m3 0h5m1 0h5m3 0h4m4 0h8M167 471.5h4m6 0h4m2 0h2m75 0h3m3 0h2m7 0h2m1 0h1m77 0h2m8 0h2m3 0h1m2 0h2m3 0h7m6 0h2m92 0h7m1 0h2m2 0h7m13 0h2m5 0h5m5 0h3m2 0h2m3 0h5m4 0h5m2 0h5m3 0h3m4 0h3m2 0h1m8 0h2m2 0h7m3 0h1m1 0h1m3 0h6m3 0h2m1 0h2m3 0h1m2 0h4m3 0h3m1 0h2m2 0h2m13 0h3m2 0h1m17 0h3m3 0h1m8 0h2m8 0h6m2 0h2m3 0h4m1 0h7m2 0h4m12 0h1m13 0h1M111 478.5h1m50 0h1m11 0h1m1 0h1m4 0h5m66 0h2m1 0h3m2 0h8m7 0h3m1 0h2m1 0h1m56 0h10m2 0h7m4 0h6m2 0h3m9 0h3m7 0h2m87 0h5m8 0h2m2 0h2m5 0h2m3 0h3m11 0h9m5 0h2m3 0h2m2 0h3m4 0h1m9 0h2m1 0h4m11 0h2m3 0h2m1 0h2m2 0h4m3 0h2m3 0h9m1 0h3m1 0h1m3 0h2m4 0h2m2 0h3m8 0h2m43 0h2m31 0h2m12 0h3m2 0h1m4 0h1m118 0h2M107 485.5h3m9 0h5m2 0h2m57 0h1m63 0h5m1 0h3m2 0h1m2 0h3m11 0h1m3 0h4m5 0h2m12 0h1m25 0h2m4 0h3m5 0h3m13 0h2m6 0h2m7 0h2m108 0h3m19 0h4m53 0h1m15 0h2m6 0h2m2 0h2m8 0h2m9 0h1m5 0h1m4 0h1m3 0h2m108 0h2m1 0h2m3 0h7m5 0h3m5 0h2m3 0h3m3 0h2m110 0h1M104 492.5h8m7 0h1m4 0h2m2 0h5m53 0h2m59 0h2m33 0h1m5 0h2m4 0h2m3 0h5m3 0h1m4 0h2m1 0h10m1 0h6m4 0h3m55 0h2m84 0h1m3 0h2m37 0h2m102 0h1m115 0h4m1 0h3m4 0h8m3 0h2m3 0h5m2 0h5m10 0h2m7 0h2m29 0h1m22 0h7m3 0h2m5 0h9m6 0h4m6 0h2M104 499.5h3m26 0h1m23 0h2m87 0h3m36 0h9m2 0h3m2 0h4m9 0h12m167 0h1m279 0h3m7 0h2m12 0h2m1 0h6m3 0h2m9 0h4m3 0h2m4 0h5m5 0h1m5 0h2m2 0h3m3 0h3m4 0h2m3 0h6m2 0h3m1 0h5m4 0h11M290 506.5h2m2 0h2m15 0h3m486 0h2m12 0h2m6 0h2m6 0h3m5 0h2m6 0h5m11 0h1m40 0h2M99 513.5h1m140 0h1m67 0h3m163 0h1m1 0h4M98 520.5h1m39 0h2m49 0h1m11 0h1m28 0h1m13 0h2m229 0h1m602 0h2M96 527.5h2m16 0h2m20 0h4m90 0h1m2 0h2m8 0h1m224 0h1m437 0h1m161 0h8"/>
<path stroke="#109da8" stroke-width="4" d="M174 440h1M708 447h1M174 454h1m430 0h1m39 0h2m2 0h1m19 0h1m19 0h1m5 0h2m6 0h3m11 0h1m5 0h2M166 461h1m8 0h2m170 0h2m11 0h2m8 0h1m3 0h2m8 0h1m4 0h3m112 0h1m33 0h4m29 0h1m7 0h2m20 0h2m40 0h2m2 0h2m10 0h1m1 0h2m3 0h4m7 0h4m2 0h6m1 0h2m2 0h1m2 0h1m5 0h5m1 0h1m4 0h2m7 0h2m34 0h1M167 468h7m4 0h3m96 0h1m71 0h5m6 0h5m1 0h4m1 0h1m1 0h1m17 0h3m96 0h1m2 0h1m6 0h2m4 0h1m2 0h1m3 0h3m2 0h2m4 0h1m7 0h8m2 0h1m2 0h9m1 0h4m3 0h2m3 0h2m5 0h2m6 0h5m1 0h2m2 0h4m5 0h3m1 0h2m6 0h3m5 0h1m4 0h1m13 0h7m3 0h9m2 0h2m2 0h4m7 0h2m3 0h11m3 0h3m8 0h10m1 0h16M166 475h1m1 0h3m5 0h5m4 0h1m72 0h3m2 0h7m3 0h4m2 0h3m32 0h1m24 0h3m2 0h3m4 0h5m2 0h2m2 0h3m3 0h4m5 0h9m1 0h4m1 0h2m90 0h6m4 0h8m3 0h5m6 0h4m4 0h4m2 0h2m1 0h5m2 0h2m1 0h12m4 0h2m3 0h2m1 0h20m1 0h1m3 0h2m4 0h15m2 0h1m4 0h1m3 0h3m3 0h10m26 0h3m8 0h1m18 0h1m6 0h3m12 0h7m8 0h2m2 0h2m8 0h2m2 0h1M119 482h1m2 0h2m6 0h3m26 0h3m87 0h3m3 0h5m1 0h7m2 0h5m3 0h1m3 0h1m6 0h1m42 0h1m9 0h5m9 0h2m2 0h5m1 0h4m2 0h2m2 0h3m3 0h2m5 0h2m89 0h6m5 0h2m1 0h4m7 0h1m10 0h4m4 0h1m3 0h4m3 0h5m2 0h1m11 0h1m14 0h2m13 0h3m2 0h1m6 0h2m5 0h4m6 0h8m6 0h1m2 0h4m15 0h1m45 0h1m46 0h3m2 0h2m2 0h4m11 0h4M104 489h5m10 0h1m2 0h2m1 0h1m33 0h3m23 0h1m61 0h7m9 0h5m11 0h2m1 0h1m9 0h2m2 0h3m5 0h1m7 0h2m1 0h5m5 0h7m19 0h3m2 0h2m122 0h1m17 0h2m23 0h1m8 0h1m71 0h1m22 0h1m117 0h2m2 0h6m8 0h2m1 0h2m3 0h2m6 0h2m44 0h1m42 0h3m2 0h3m8 0h2m2 0h3M101 496h8m15 0h2m59 0h4m58 0h5m30 0h1m2 0h3m1 0h1m2 0h2m5 0h2m3 0h1m2 0h2m6 0h2m3 0h5m1 0h1m3 0h3m53 0h1m136 0h1m225 0h3m5 0h3m11 0h2m5 0h1m2 0h4m10 0h2m16 0h1m8 0h7m1 0h3m5 0h2m1 0h2m6 0h2m2 0h3m7 0h3m2 0h1m3 0h4m1 0h5m2 0h2m2 0h2m1 0h1m4 0h2m3 0h4M110 503h1m13 0h1m8 0h1m23 0h2m29 0h1m99 0h8m13 0h2m1 0h2m1 0h2m83 0h3m367 0h1m2 0h3m2 0h1m4 0h5m5 0h2m4 0h1m4 0h2m3 0h2m3 0h2m6 0h2m2 0h1m9 0h2m3 0h2m1 0h2m1 0h4m15 0h2m11 0h3m1 0h1m16 0h1m2 0h2M189 510h1m98 0h1m10 0h2m7 0h1m211 0h3M100 517h1m55 0h1m245 0h1m65 0h1m6 0h5m42 0h1m545 0h2M100 524h2m14 0h3m21 0h2m101 0h1m766 0h2m49 0h1m8 0h4m2 0h2M96 531h2m1 0h1m12 0h2m2 0h3m116 0h3m6 0h2m222 0h1m6 0h1m2 0h2m502 0h2M243 535h1"/>
<path stroke="#10a69b" stroke-width="3" d="M659 457.5h1M176 464.5h1m188 0h1m196 0h2m24 0h1m56 0h2m9 0h3m1 0h3m6 0h1m16 0h3m3 0h2m20 0h3m6 0h2M171 471.5h3m1 0h1m173 0h5m16 0h1m142 0h5m20 0h2m3 0h2m5 0h4m5 0h2m13 0h2m6 0h2m5 0h1m15 0h1m34 0h1m6 0h2m1 0h10m3 0h2m1 0h17m3 0h3m1 0h8m2 0h8m6 0h2m2 0h3m4 0h1M163 478.5h11m3 0h4m87 0h2m8 0h1m70 0h2m7 0h4m6 0h2m7 0h5m3 0h2m2 0h2m95 0h5m5 0h2m2 0h4m3 0h3m3 0h5m15 0h5m2 0h2m3 0h2m3 0h4m3 0h7m2 0h1m5 0h10m2 0h3m2 0h1m8 0h3m3 0h1m10 0h1m3 0h1m2 0h2m2 0h1m5 0h2m3 0h8m8 0h6m1 0h1m5 0h4m1 0h3m3 0h1m5 0h3m3 0h1m4 0h3m3 0h3m3 0h4m2 0h4m2 0h5m2 0h8m2 0h2M104 485.5h3m4 0h1m55 0h1m86 0h1m3 0h2m1 0h2m3 0h9m3 0h1m53 0h1m6 0h5m3 0h13m5 0h3m3 0h1m1 0h1m2 0h1m2 0h7m1 0h2m3 0h2m87 0h3m2 0h1m3 0h4m2 0h10m7 0h3m2 0h2m3 0h1m1 0h7m10 0h3m5 0h7m4 0h1m2 0h2m3 0h5m5 0h3m5 0h1m4 0h2m2 0h7m3 0h1m3 0h5m1 0h3m1 0h1m1 0h2m3 0h3m4 0h3m3 0h1m15 0h3m37 0h1m9 0h2m17 0h1m3 0h2m8 0h1m25 0h1m4 0h1m112 0h1M120 492.5h4m2 0h2m31 0h4m15 0h3m4 0h1m63 0h9m2 0h3m3 0h9m2 0h5m1 0h2m23 0h1m23 0h1m6 0h10m17 0h2m17 0h1m3 0h2m90 0h3m2 0h7m7 0h2m5 0h2m45 0h1m41 0h2m5 0h1m1 0h1m4 0h3m6 0h1m4 0h2m113 0h4m9 0h3m8 0h3m2 0h3m113 0h2M107 499.5h4m13 0h4m2 0h3m26 0h3m24 0h3m63 0h2m4 0h2m13 0h2m4 0h6m9 0h2m31 0h5m4 0h3m43 0h2m139 0h1m218 0h1m16 0h4m3 0h7m3 0h7m2 0h3m26 0h2m53 0h2m11 0h1m5 0h2M102 506.5h2m16 0h2m35 0h2m124 0h5m1 0h1m2 0h2m2 0h2m3 0h10m6 0h3m3 0h2m1 0h1m73 0h2m121 0h1m224 0h1m27 0h5m10 0h9m2 0h4m2 0h1m7 0h4m5 0h1m3 0h1m3 0h1m2 0h2m13 0h1m1 0h3m3 0h3m4 0h2m15 0h1m7 0h1M109 513.5h1m23 0h1m54 0h1m57 0h1m73 0h3m77 0h2m118 0h2M101 520.5h1m16 0h1m170 0h1m110 0h2m76 0h2m40 0h2M100 527.5h1m87 0h1m42 0h2m11 0h2m156 0h1m72 0h1m2 0h2m40 0h3"/>
<path stroke="#10a69b" stroke-width="4" d="M174 461h1m506 0h2m12 0h1m12 0h1M166 468h1m7 0h1m1 0h1m200 0h2m126 0h1m22 0h2m39 0h2m78 0h1m10 0h1m2 0h2m4 0h2m3 0h2m2 0h3m11 0h3m3 0h5m13 0h1m16 0h2M167 475h1m3 0h5m5 0h4m85 0h3m83 0h2m7 0h3m4 0h2m12 0h1m104 0h2m9 0h3m5 0h6m12 0h2m12 0h1m12 0h4m28 0h1m6 0h4m15 0h2m12 0h3m11 0h2m2 0h4m1 0h6m3 0h1m5 0h1m3 0h1m1 0h3m4 0h11m3 0h2m1 0h1m1 0h6m3 0h8m2 0h2m8 0h7m2 0h2M128 482h2m33 0h5m6 0h3m1 0h8m74 0h1m7 0h2m7 0h1m1 0h2m2 0h2m48 0h3m3 0h3m5 0h2m2 0h5m2 0h2m5 0h1m5 0h1m7 0h3m2 0h1m7 0h2m92 0h4m3 0h1m4 0h6m2 0h10m9 0h3m12 0h2m1 0h11m1 0h7m2 0h2m1 0h2m3 0h2m5 0h2m1 0h2m3 0h2m1 0h4m4 0h5m4 0h6m9 0h5m1 0h2m4 0h6m13 0h3m3 0h1m3 0h2m4 0h1m4 0h3m23 0h6m3 0h1m4 0h4m3 0h5m3 0h6m2 0h5m142 0h2M102 489h2m16 0h2m6 0h5m29 0h4m89 0h6m7 0h5m4 0h1m3 0h1m50 0h17m5 0h2m4 0h10m4 0h8m10 0h4m85 0h5m1 0h3m1 0h3m6 0h2m8 0h3m11 0h4m2 0h2m6 0h4m1 0h2m2 0h3m19 0h5m7 0h3m3 0h2m3 0h4m2 0h3m4 0h1m1 0h3m3 0h14m1 0h4m2 0h3m40 0h1m30 0h1m7 0h1m8 0h1m9 0h4m1 0h2m1 0h2m3 0h1m6 0h5m5 0h1m2 0h2m8 0h1M110 496h2m8 0h4m2 0h2m2 0h3m26 0h3m5 0h1m84 0h2m6 0h3m7 0h3m4 0h1m1 0h2m2 0h2m13 0h1m28 0h3m9 0h5m136 0h1m12 0h1m11 0h1m63 0h2m18 0h1m17 0h3m14 0h3m112 0h1m2 0h7m3 0h5m3 0h3m2 0h1m2 0h3m5 0h2m1 0h2m71 0h1m16 0h2m5 0h1m5 0h1m3 0h2m6 0h2m2 0h3M122 503h2m6 0h3m26 0h3m23 0h3m58 0h1m14 0h2m20 0h5m8 0h2m1 0h9m3 0h1m2 0h1m2 0h6m3 0h7m147 0h1m42 0h1m225 0h2m12 0h2m11 0h2m1 0h4m5 0h5m2 0h4m3 0h2m2 0h2m3 0h2m5 0h2m4 0h2m1 0h2m5 0h2m7 0h1m2 0h1m12 0h3m1 0h3m2 0h1m3 0h1m3 0h3m5 0h12m2 0h2m1 0h2M101 510h1m55 0h2m29 0h1m57 0h1m43 0h6m2 0h1m2 0h3m7 0h1m88 0h2m386 0h3m6 0h3m27 0h2m1 0h4m38 0h1m30 0h3M133 517h1m112 0h1m273 0h2M99 524h1m89 0h1m210 0h2m76 0h2m40 0h2M100 531h1m139 0h1m233 0h1m1 0h2m446 0h1m140 0h3m6 0h2M157 535h2m807 0h2"/>
<path stroke="#13af8e" stroke-width="3" d="M174 471.5h1m216 0h1m257 0h1M175 478.5h1m197 0h1m17 0h1m163 0h2m14 0h1m20 0h2m11 0h1m15 0h1m25 0h6m6 0h1m1 0h5m8 0h3m1 0h5m3 0h3m3 0h2m3 0h3m3 0h3m4 0h2m4 0h2m15 0h2M162 485.5h5m1 0h7m1 0h9m94 0h2m81 0h3m5 0h1m1 0h1m1 0h2m10 0h1m2 0h2m93 0h2m8 0h2m10 0h3m7 0h2m6 0h1m8 0h9m3 0h5m7 0h2m3 0h2m3 0h2m5 0h5m5 0h3m16 0h1m3 0h3m9 0h1m4 0h2m6 0h2m3 0h3m1 0h4m2 0h2m1 0h6m3 0h2m2 0h3m10 0h5m2 0h9m3 0h1m2 0h8m2 0h2m2 0h4m1 0h8m1 0h3m2 0h8M163 492.5h4m7 0h2m1 0h1m5 0h2m73 0h2m3 0h3m9 0h2m56 0h3m13 0h16m5 0h4m2 0h8m2 0h3m2 0h3m99 0h5m4 0h2m1 0h1m3 0h7m2 0h2m5 0h7m1 0h7m2 0h3m2 0h7m5 0h8m2 0h3m2 0h2m5 0h6m1 0h6m4 0h5m1 0h1m1 0h4m3 0h6m1 0h4m2 0h1m1 0h15m17 0h1m9 0h1m19 0h5m2 0h3m14 0h4m5 0h3m5 0h8m8 0h1M102 499.5h2m7 0h1m7 0h5m4 0h2m32 0h1m3 0h1m16 0h2m64 0h3m3 0h3m2 0h1m5 0h7m2 0h4m47 0h1m5 0h4m8 0h5m7 0h2m7 0h3m6 0h3m2 0h3m9 0h1m2 0h2m84 0h7m79 0h1m9 0h3m5 0h3m1 0h1m3 0h2m2 0h5m3 0h1m11 0h3m2 0h1m6 0h9m77 0h2m9 0h1m11 0h5m1 0h5m3 0h8m4 0h3m47 0h1m11 0h1m25 0h1m38 0h2M104 506.5h7m8 0h1m66 0h3m58 0h2m3 0h2m1 0h3m12 0h3m5 0h1m3 0h1m15 0h3m13 0h3m3 0h3m2 0h1m6 0h1m43 0h1m103 0h1m10 0h2m96 0h1m150 0h8m7 0h4m1 0h3m3 0h10m5 0h10m15 0h2m1 0h5m6 0h2m5 0h2m5 0h2m4 0h1m2 0h3m10 0h3m4 0h3m3 0h2m2 0h10m1 0h2m4 0h1m1 0h11m2 0h1M128 513.5h2m27 0h2m27 0h2m100 0h10m3 0h7m3 0h3m1 0h5m7 0h3m72 0h1m344 0h1m30 0h1m12 0h4m2 0h2m1 0h2m51 0h3m49 0h1M292 520.5h4m3 0h5m4 0h3m6 0h3M156 527.5h1m32 0h1m56 0h1m43 0h2m181 0h1m2 0h2m600 0h2"/>
<path stroke="#13af8e" stroke-width="4" d="M561 475h1m78 0h1m2 0h2m4 0h1m6 0h3m1 0h5m5 0h1m3 0h3m12 0h3m2 0h1m19 0h2M168 482h6m3 0h1m158 0h3m31 0h1m3 0h2m10 0h3m2 0h1m98 0h1m13 0h1m27 0h3m27 0h2m2 0h1m4 0h1m2 0h5m2 0h1m12 0h2m44 0h3m2 0h4m1 0h3m3 0h3m2 0h2m2 0h4m1 0h4m3 0h17m2 0h2m8 0h3m1 0h4m4 0h3m5 0h3m6 0h2M126 489h2m39 0h7m4 0h7m69 0h1m18 0h4m72 0h2m7 0h2m10 0h2m10 0h10m94 0h1m3 0h1m3 0h2m6 0h8m3 0h7m8 0h2m3 0h2m7 0h1m2 0h2m3 0h19m5 0h7m3 0h3m2 0h3m4 0h2m3 0h3m2 0h1m3 0h3m19 0h2m3 0h3m10 0h3m3 0h7m2 0h5m1 0h3m2 0h1m6 0h7m2 0h2m3 0h1m5 0h3m3 0h5m4 0h7m1 0h3m2 0h4m4 0h1m2 0h1M119 496h1m8 0h2m32 0h5m8 0h1m1 0h1m3 0h2m71 0h6m3 0h7m3 0h4m1 0h1m2 0h1m51 0h6m5 0h10m2 0h4m6 0h5m5 0h1m2 0h5m3 0h4m3 0h2m85 0h9m6 0h2m2 0h5m5 0h10m8 0h4m15 0h5m7 0h2m10 0h1m4 0h12m4 0h2m7 0h2m2 0h1m4 0h6m3 0h2m1 0h2m3 0h10m28 0h1m4 0h1m23 0h1m28 0h2m10 0h4m1 0h2m21 0h2m1 0h2M102 503h8m9 0h3m4 0h4m32 0h1m3 0h1m80 0h2m3 0h8m3 0h3m11 0h5m41 0h3m7 0h11m12 0h2m36 0h2m88 0h7m13 0h1m101 0h4m6 0h3m1 0h2m5 0h1m2 0h2m97 0h2m9 0h2m1 0h5m3 0h9m5 0h5m1 0h2m47 0h2m8 0h3m23 0h3m3 0h1m6 0h3m1 0h3m6 0h1m13 0h2M104 510h5m2 0h1m21 0h1m25 0h3m24 0h2m59 0h2m32 0h1m3 0h3m1 0h1m6 0h2m7 0h2m2 0h2m1 0h2m1 0h8m2 0h1m4 0h3m147 0h1m42 0h1m223 0h1m4 0h5m2 0h1m16 0h7m2 0h3m3 0h2m2 0h2m3 0h2m4 0h8m4 0h7m1 0h1m7 0h9m1 0h3m4 0h2m3 0h3m3 0h4m7 0h4m2 0h3m2 0h2m5 0h1m2 0h2m2 0h3M109 517h1m76 0h2m101 0h1m2 0h2m7 0h3m1 0h3m6 0h1m85 0h2M124 524h1m169 0h2m11 0h1m6 0h1m87 0h1m71 0h1M101 531h1m139 0h3m55 0h2m10 0h1m2 0h1m88 0h1m116 0h3m555 0h2M122 535h2m168 0h2m38 0h1m174 0h2m394 0h2m26 0h3m18 0h1m23 0h2m21 0h2m5 0h2"/>
<path stroke="#18b781" stroke-width="3" d="M670 478.5h1M175 485.5h1m356 0h1m26 0h2m84 0h2m2 0h1m11 0h2m3 0h10m5 0h2m9 0h3m2 0h1m12 0h2m4 0h1M167 492.5h7m2 0h1m4 0h2m182 0h1m2 0h2m4 0h2m8 0h1m113 0h2m4 0h1m1 0h1m9 0h2m14 0h1m7 0h2m3 0h2m8 0h4m8 0h2m3 0h2m2 0h5m6 0h1m6 0h2m47 0h17m1 0h9m1 0h6m4 0h9m5 0h2m3 0h3m3 0h8m4 0h5m3 0h5M163 499.5h3m11 0h6m2 0h1m68 0h1m6 0h5m73 0h5m7 0h5m2 0h7m3 0h4m1 0h1m3 0h2m5 0h2m3 0h2m1 0h2m93 0h6m1 0h11m1 0h14m4 0h16m2 0h13m4 0h2m3 0h2m5 0h3m5 0h2m1 0h2m3 0h1m2 0h2m2 0h2m5 0h3m1 0h2m3 0h6m4 0h1m1 0h6m17 0h2m12 0h1m16 0h1m1 0h3m8 0h1m2 0h5m1 0h2m8 0h1m1 0h2m6 0h7m1 0h7m2 0h2m11 0h3M111 506.5h1m10 0h11m26 0h4m20 0h3m63 0h3m6 0h5m5 0h2m5 0h2m2 0h3m6 0h1m38 0h5m1 0h14m2 0h2m11 0h3m3 0h2m16 0h1m2 0h2m1 0h4m85 0h3m6 0h1m7 0h2m5 0h1m3 0h1m22 0h1m21 0h1m14 0h2m13 0h3m9 0h2m8 0h1m6 0h2m6 0h1m5 0h1m4 0h2m103 0h3m9 0h6m4 0h1m3 0h3m58 0h1m27 0h1m18 0h2m13 0h4M102 513.5h7m2 0h1m10 0h2m1 0h3m2 0h3m52 0h1m61 0h5m33 0h3m11 0h2m22 0h4m5 0h7m55 0h2m127 0h1m77 0h2m19 0h2m119 0h2m7 0h7m6 0h11m5 0h2m2 0h6m4 0h2m2 0h1m2 0h11m1 0h8m3 0h1m1 0h13m1 0h6m2 0h4m6 0h3m1 0h3m6 0h10m1 0h1m2 0h2m2 0h4m4 0h2m1 0h4M104 520.5h3m18 0h1m7 0h1m23 0h2m29 0h1m57 0h1m38 0h4m1 0h2m6 0h1m5 0h3m8 0h2m3 0h6m1 0h3m2 0h1m69 0h1m345 0h1m19 0h2m9 0h2m12 0h2m110 0h1M101 527.5h1m194 0h3m8 0h1m6 0h1m5 0h3m77 0h2m1 0h1"/>
<path stroke="#18b781" stroke-width="4" d="M643 482h2m15 0h1m33 0h1m3 0h2M166 489h1m7 0h4m194 0h2m122 0h2m37 0h3m102 0h10m3 0h3m7 0h2m5 0h1m3 0h2m2 0h5m7 0h2m2 0h3m1 0h5m3 0h2m6 0h2m1 0h1m11 0h2M168 496h6m4 0h3m2 0h2m169 0h2m4 0h6m5 0h5m1 0h2m5 0h2m5 0h3m96 0h3m1 0h2m2 0h2m6 0h4m14 0h4m4 0h1m2 0h8m2 0h2m5 0h7m2 0h8m3 0h4m12 0h1m1 0h2m2 0h7m2 0h2m1 0h1m9 0h3m2 0h1m15 0h6m6 0h10m2 0h2m3 0h4m1 0h3m2 0h1m4 0h5m4 0h4m1 0h1m1 0h1m5 0h3m3 0h12m4 0h4m2 0h4M111 503h1m13 0h1m37 0h3m11 0h1m71 0h3m8 0h1m5 0h11m5 0h1m61 0h10m6 0h6m4 0h2m1 0h16m3 0h2m87 0h3m7 0h3m2 0h8m2 0h1m9 0h2m12 0h2m1 0h5m2 0h5m2 0h3m7 0h2m7 0h1m2 0h2m10 0h1m2 0h8m2 0h7m2 0h3m9 0h1m3 0h1m2 0h5m1 0h2m2 0h2m42 0h1m54 0h6m2 0h1m2 0h1m5 0h1m11 0h3M102 510h2m5 0h2m9 0h4m4 0h5m52 0h1m66 0h8m3 0h3m16 0h3m29 0h1m8 0h2m1 0h4m3 0h6m46 0h1m8 0h2m88 0h2m56 0h1m36 0h2m35 0h3m1 0h1m5 0h1m116 0h4m1 0h4m5 0h2m1 0h8m2 0h6m7 0h2m8 0h2m7 0h4m8 0h4m7 0h1m3 0h1m17 0h4m2 0h3m3 0h3m4 0h6m5 0h2m3 0h2m2 0h4m2 0h2m2 0h2m3 0h2M102 517h7m2 0h1m7 0h5m4 0h2m27 0h2m88 0h5m31 0h6m1 0h2m2 0h7m3 0h1m4 0h5m1 0h10m1 0h1m3 0h2m62 0h2m84 0h1m42 0h1m216 0h2m5 0h4m9 0h3m8 0h5m5 0h4m6 0h6m2 0h1m4 0h7m2 0h3m13 0h1m6 0h2m8 0h1m12 0h3m9 0h1m11 0h1m17 0h2m2 0h1M133 524h1m23 0h2m87 0h1m42 0h5m10 0h3m1 0h3m1 0h2m1 0h2m3 0h3m2 0h1m197 0h1m227 0h1m21 0h3M133 531h1m154 0h2m11 0h3m1 0h2m1 0h1m3 0h2m592 0h1M143 535h2m14 0h4m3 0h1m47 0h1m20 0h3m8 0h1m13 0h1m9 0h3m2 0h2m2 0h2m68 0h2m22 0h1m20 0h2m10 0h2m45 0h3m126 0h2m155 0h1m2 0h1m6 0h2m14 0h1m45 0h2m43 0h3m4 0h3m64 0h1m143 0h2"/>
<path stroke="#18c078" stroke-width="3" d="M677 492.5h4m22 0h3M167 499.5h10m172 0h2m21 0h1m13 0h3m151 0h2m13 0h4m2 0h3m3 0h4m3 0h2m5 0h1m7 0h1m17 0h3m9 0h1m17 0h8m2 0h2m1 0h9m1 0h3m2 0h11m1 0h1m3 0h8m1 0h2m5 0h1m2 0h8m1 0h1m2 0h2m3 0h1m15 0h2M171 506.5h3m1 0h2m1 0h5m71 0h1m8 0h5m5 0h2m2 0h1m69 0h2m2 0h11m4 0h2m2 0h3m4 0h8m2 0h2m2 0h1m92 0h6m3 0h1m2 0h2m2 0h5m1 0h1m3 0h10m4 0h8m1 0h5m2 0h5m2 0h3m2 0h2m1 0h4m2 0h1m4 0h3m3 0h2m2 0h8m4 0h1m1 0h6m2 0h3m2 0h3m1 0h6m3 0h4m2 0h5m1 0h4m2 0h6m5 0h2m16 0h2m4 0h2m37 0h1m7 0h1m1 0h5m8 0h6M120 513.5h2m37 0h3m21 0h2m67 0h3m3 0h10m2 0h9m2 0h4m29 0h1m15 0h2m7 0h3m2 0h5m2 0h3m2 0h4m2 0h4m4 0h3m9 0h2m2 0h1m93 0h4m3 0h3m1 0h2m86 0h2m3 0h3m7 0h2m10 0h4m3 0h2m5 0h1m5 0h6m101 0h4m3 0h3m2 0h2m1 0h4m7 0h6m11 0h2m1 0h2m2 0h2m37 0h3m1 0h1m13 0h1m6 0h2m7 0h3m3 0h1m3 0h6m10 0h1m1 0h2m2 0h2m4 0h4m2 0h1M102 520.5h2m5 0h3m8 0h5m1 0h2m58 0h2m59 0h5m2 0h1m18 0h2m7 0h3m11 0h2m9 0h1m6 0h1m15 0h2m148 0h1m42 0h1m216 0h2m3 0h2m5 0h7m1 0h3m2 0h3m2 0h9m9 0h3m9 0h4m21 0h1m14 0h1m6 0h2m2 0h1m4 0h3m7 0h2m3 0h1m1 0h3m7 0h1m12 0h2m3 0h4M133 527.5h1m23 0h5m85 0h2m34 0h7m4 0h2m3 0h8m1 0h6m1 0h5m7 0h3m64 0h2m127 0h1m246 0h1m7 0h1"/>
<path stroke="#18c078" stroke-width="4" d="M174 496h1m1 0h1m356 0h2m8 0h2m98 0h6m10 0h2m2 0h2m9 0h2m1 0h4m5 0h4m6 0h1m1 0h5m3 0h2m13 0h2m6 0h2M168 503h3m4 0h1m2 0h7m169 0h2m2 0h2m6 0h4m2 0h1m18 0h1m102 0h2m9 0h1m1 0h9m2 0h2m5 0h5m2 0h1m5 0h2m5 0h2m3 0h7m2 0h5m3 0h2m2 0h10m1 0h2m8 0h2m7 0h2m7 0h5m19 0h15m1 0h6m4 0h1m2 0h7m1 0h3m3 0h4m5 0h4m4 0h2m1 0h1m10 0h15m2 0h4m8 0h2M119 510h1m4 0h4m34 0h1m3 0h2m9 0h1m5 0h2m64 0h3m8 0h3m3 0h15m58 0h5m3 0h13m2 0h8m1 0h11m2 0h1m1 0h8m87 0h3m2 0h12m2 0h2m4 0h1m2 0h11m8 0h2m3 0h2m3 0h4m3 0h2m5 0h7m2 0h1m2 0h5m7 0h3m2 0h3m3 0h3m2 0h24m3 0h1m1 0h5m1 0h10m22 0h1m35 0h1m25 0h2m16 0h4m25 0h2m73 0h1m46 0h1M125 517h1m4 0h3m26 0h4m25 0h1m65 0h1m18 0h2m2 0h2m2 0h2m25 0h1m16 0h1m1 0h3m2 0h10m9 0h3m17 0h1m14 0h1m97 0h2m10 0h2m26 0h1m69 0h2m5 0h2m1 0h1m1 0h1m12 0h1m1 0h1m10 0h2m109 0h4m4 0h9m3 0h3m2 0h3m7 0h3m4 0h6m9 0h4m7 0h2m3 0h4m2 0h3m2 0h2m1 0h6m4 0h6m1 0h2m2 0h8m3 0h9m1 0h5m9 0h2m2 0h1m1 0h9m2 0h2M102 524h2m5 0h1m9 0h1m6 0h2m58 0h3m92 0h1m1 0h6m7 0h8m7 0h1m5 0h3m3 0h2m1 0h1m6 0h3m144 0h1m261 0h1m4 0h1m9 0h2m1 0h5m3 0h3m8 0h2m44 0h1m12 0h2m11 0h1m24 0h1m26 0h2M111 531h1m45 0h2m122 0h1m3 0h3m2 0h2m6 0h1m5 0h1m2 0h1m1 0h2m4 0h10m75 0h3m362 0h1m139 0h1M119 535h1m5 0h1m8 0h2m64 0h1m51 0h2m1 0h3m15 0h2m3 0h1m6 0h3m39 0h3m6 0h3m8 0h2m21 0h1m3 0h3m5 0h2m33 0h2m23 0h1m47 0h1m18 0h1m32 0h1m18 0h1m4 0h1m9 0h3m8 0h1m8 0h2m9 0h3m6 0h3m7 0h1m1 0h2m2 0h2m3 0h3m23 0h2m43 0h1m17 0h3m14 0h2m7 0h5m3 0h5m1 0h2m10 0h1m4 0h2m6 0h2m40 0h1m13 0h2m2 0h1m24 0h6m8 0h1m30 0h2m18 0h2m99 0h1"/>
<path stroke="#25c96b" stroke-width="3" d="M505 499.5h1m143 0h1m13 0h2m51 0h1M163 506.5h8m6 0h1m187 0h1m7 0h3m9 0h1m108 0h2m11 0h2m29 0h2m5 0h2m3 0h2m7 0h2m1 0h4m5 0h1m2 0h2m11 0h1m13 0h2m12 0h1m4 0h1m19 0h5m2 0h16m2 0h4m2 0h6m1 0h30m1 0h7m1 0h1m5 0h8M110 513.5h1m8 0h1m4 0h1m37 0h9m6 0h6m72 0h3m10 0h2m9 0h2m61 0h2m5 0h2m9 0h2m4 0h4m3 0h9m2 0h2m1 0h7m90 0h3m3 0h1m2 0h14m2 0h11m4 0h14m2 0h22m4 0h1m2 0h10m2 0h3m3 0h2m1 0h4m2 0h5m2 0h3m4 0h3m2 0h5m1 0h1m10 0h11m4 0h2m4 0h6m10 0h1m4 0h2m1 0h1m11 0h1m6 0h2m8 0h4m2 0h5m6 0h6m2 0h2m4 0h3m73 0h1M107 520.5h2m10 0h1m10 0h3m26 0h4m22 0h1m66 0h2m1 0h6m2 0h5m2 0h3m2 0h7m29 0h3m12 0h1m6 0h14m9 0h4m5 0h1m8 0h2m1 0h2m5 0h1m1 0h1m2 0h2m3 0h2m85 0h5m1 0h4m19 0h6m9 0h3m4 0h1m5 0h2m15 0h2m19 0h3m8 0h2m7 0h8m2 0h9m5 0h1m1 0h2m3 0h1m2 0h2m2 0h3m100 0h2m3 0h3m2 0h1m1 0h3m7 0h1m21 0h7m3 0h2m2 0h5m4 0h9m1 0h8m4 0h4m3 0h7m1 0h5m3 0h2m1 0h4m3 0h7m2 0h3m1 0h1m3 0h7m1 0h12m2 0h3M102 527.5h7m1 0h1m8 0h1m2 0h2m62 0h2m66 0h1m20 0h2m2 0h4m9 0h2m29 0h3m4 0h6m144 0h1m258 0h1m3 0h2m3 0h3m1 0h11m2 0h5m3 0h5m125 0h2"/>
<path stroke="#25c96b" stroke-width="4" d="M708 496h1M167 503h1m3 0h4m1 0h1m212 0h2m133 0h1m39 0h2m83 0h1m6 0h4m1 0h2m7 0h1m3 0h2m5 0h5m4 0h4m2 0h1m1 0h10m15 0h2M163 510h3m2 0h6m1 0h1m2 0h5m161 0h3m13 0h2m20 0h2m114 0h2m2 0h4m1 0h2m15 0h4m2 0h3m2 0h3m5 0h2m2 0h3m12 0h2m5 0h7m8 0h3m3 0h2m45 0h4m2 0h7m3 0h6m1 0h1m2 0h2m1 0h3m2 0h3m2 0h2m3 0h8m7 0h16m2 0h7m2 0h16M110 517h1m13 0h1m1 0h2m35 0h4m11 0h5m2 0h1m66 0h2m1 0h18m2 0h2m2 0h2m61 0h9m9 0h10m2 0h4m1 0h5m3 0h1m1 0h2m92 0h3m2 0h10m2 0h2m2 0h2m2 0h7m3 0h4m5 0h5m8 0h2m3 0h7m7 0h4m3 0h5m2 0h5m3 0h2m1 0h6m2 0h4m2 0h5m2 0h1m1 0h1m1 0h12m3 0h2m2 0h2m2 0h2m31 0h2m11 0h1m29 0h2m1 0h1m27 0h3m2 0h1m23 0h2m8 0h2m19 0h2m21 0h2m3 0h2m11 0h2m9 0h2m26 0h6m1 0h2m2 0h2m1 0h1M104 524h5m1 0h2m8 0h4m4 0h5m26 0h4m22 0h1m61 0h7m4 0h12m7 0h1m4 0h1m44 0h6m3 0h3m3 0h2m10 0h2m36 0h4m94 0h1m27 0h2m51 0h1m7 0h2m6 0h1m10 0h3m5 0h1m12 0h2m13 0h3m102 0h1m3 0h4m2 0h2m1 0h3m10 0h3m10 0h1m4 0h5m3 0h15m2 0h1m5 0h2m6 0h2m5 0h1m19 0h2m1 0h1m3 0h6m1 0h3m2 0h1m2 0h2m9 0h1m3 0h2m2 0h1m1 0h4m2 0h2m1 0h2m2 0h1M102 531h7m1 0h1m11 0h2m62 0h3m57 0h6m8 0h1m17 0h1m4 0h2m7 0h4m29 0h8m9 0h2m50 0h2m84 0h1m42 0h1m219 0h2m2 0h8m2 0h2m7 0h7m3 0h2M124 535h1m51 0h2m3 0h2m2 0h1m68 0h1m3 0h2m1 0h5m73 0h8m11 0h4m15 0h2m7 0h5m1 0h2m97 0h3m2 0h2m2 0h2m3 0h2m3 0h3m11 0h1m10 0h5m3 0h9m5 0h2m12 0h1m2 0h2m5 0h1m7 0h1m11 0h2m1 0h2m9 0h1m5 0h1m2 0h2m21 0h3m19 0h1m4 0h2m20 0h1m15 0h2m9 0h3m3 0h2m9 0h2m9 0h1m24 0h2m3 0h2m10 0h2m9 0h2m7 0h1m2 0h2m16 0h2m4 0h1m8 0h2m8 0h3m7 0h2m2 0h3m8 0h4m3 0h3m2 0h2"/>
<path stroke="#36d25c" stroke-width="3" d="M174 506.5h1m502 0h1M174 513.5h3m177 0h2m151 0h2m29 0h2m22 0h4m1 0h2m20 0h1m34 0h2m17 0h4m2 0h4m7 0h5m1 0h3m1 0h4m2 0h1m1 0h11m1 0h6m2 0h8m4 0h2m5 0h6m6 0h2M128 520.5h2m33 0h8m5 0h1m1 0h5m78 0h2m5 0h2m77 0h9m4 0h5m1 0h8m2 0h1m2 0h3m3 0h1m1 0h2m2 0h3m92 0h1m4 0h19m6 0h4m10 0h2m3 0h3m2 0h15m2 0h2m2 0h5m1 0h2m2 0h5m3 0h8m2 0h7m8 0h2m9 0h5m1 0h1m2 0h3m1 0h2m2 0h2m3 0h3m3 0h2m4 0h1m3 0h6m10 0h1m4 0h2m13 0h3m2 0h1m15 0h2m5 0h8m1 0h3m4 0h4m26 0h2m48 0h1m8 0h3m5 0h3m13 0h1M109 527.5h1m1 0h1m8 0h2m2 0h1m1 0h7m29 0h1m11 0h1m10 0h1m63 0h5m1 0h8m3 0h2m2 0h5m2 0h1m48 0h1m9 0h11m9 0h2m8 0h2m3 0h1m4 0h3m5 0h3m5 0h2m90 0h3m7 0h2m10 0h1m3 0h3m5 0h2m13 0h2m5 0h2m15 0h2m5 0h2m10 0h3m5 0h3m2 0h1m2 0h4m2 0h3m4 0h2m8 0h4m1 0h2m5 0h1m2 0h7m80 0h1m22 0h3m2 0h3m3 0h1m11 0h2m6 0h2m8 0h12m4 0h3m2 0h2m5 0h2m2 0h1m2 0h4m2 0h3m2 0h2m1 0h4m6 0h1m2 0h1m5 0h2m2 0h10m3 0h5m1 0h5m2 0h4m1 0h10m2 0h7m2 0h1"/>
<path stroke="#36d25c" stroke-width="4" d="M174 510h1m1 0h1m193 0h1m179 0h2m7 0h2m80 0h2m7 0h3m8 0h2m2 0h1m3 0h2m3 0h2m2 0h3m8 0h6m17 0h2M167 517h4m4 0h3m5 0h2m169 0h6m10 0h1m5 0h1m5 0h3m4 0h5m106 0h2m2 0h2m7 0h3m14 0h8m2 0h2m8 0h7m5 0h2m5 0h2m5 0h3m2 0h1m6 0h2m30 0h1m3 0h2m2 0h2m4 0h6m1 0h2m2 0h4m1 0h3m3 0h3m1 0h3m2 0h11m1 0h4m2 0h6m1 0h2m2 0h1m1 0h1m3 0h6m2 0h1m1 0h2m2 0h23M125 524h1m37 0h3m9 0h3m3 0h4m69 0h4m12 0h7m1 0h3m58 0h3m2 0h10m2 0h4m2 0h4m2 0h8m1 0h9m1 0h4m90 0h3m2 0h4m1 0h5m2 0h2m5 0h1m1 0h11m6 0h1m5 0h2m3 0h5m2 0h3m2 0h7m3 0h2m10 0h2m1 0h2m2 0h3m9 0h2m4 0h4m3 0h5m1 0h6m2 0h4m2 0h6m1 0h6m83 0h1m5 0h2m4 0h2m2 0h4m3 0h2m13 0h2m2 0h1m11 0h2m3 0h2m3 0h2m5 0h3m15 0h2m1 0h5m2 0h6m5 0h2m1 0h8m3 0h8m4 0h3m6 0h1m3 0h2m1 0h2m6 0h5m1 0h3m2 0h2m1 0h1m4 0h2m2 0h1M109 531h1m9 0h3m2 0h2m2 0h5m26 0h4m14 0h1m7 0h1m66 0h2m1 0h5m1 0h5m2 0h10m1 0h2m1 0h1m13 0h2m38 0h3m8 0h9m14 0h2m2 0h2m16 0h2m90 0h2m8 0h2m6 0h2m14 0h2m4 0h1m7 0h1m46 0h2m8 0h1m6 0h5m4 0h2m12 0h1m1 0h3m2 0h2m93 0h2m10 0h2m10 0h2m8 0h2m2 0h6m8 0h3m2 0h13m8 0h1m24 0h1m15 0h1m2 0h1m24 0h1m2 0h2m4 0h2m7 0h2m2 0h1m3 0h2m4 0h5M167 535h7m9 0h2m81 0h4m11 0h1m72 0h2m9 0h3m3 0h2m6 0h3m2 0h2m95 0h6m15 0h3m13 0h2m13 0h2m5 0h2m12 0h1m7 0h2m5 0h2m13 0h3m3 0h2m18 0h5m5 0h1m1 0h2m3 0h1m6 0h3m6 0h4m3 0h6m3 0h1m5 0h1m10 0h1m9 0h3m3 0h2m1 0h1m7 0h3m8 0h2m1 0h1m3 0h2m8 0h2m2 0h4m8 0h2m36 0h6m4 0h2m3 0h4m4 0h3m14 0h1m10 0h2m3 0h2m3 0h1m15 0h1m3 0h3m2 0h2m15 0h2m4 0h2m2 0h2m1 0h2m140 0h1"/>
<path stroke="#56dd47" stroke-width="3" d="M171 513.5h3m485 0h1m5 0h1M171 520.5h5m1 0h1m5 0h2m197 0h2m140 0h1m3 0h2m3 0h2m24 0h2m5 0h1m2 0h2m69 0h3m2 0h4m1 0h3m6 0h10m1 0h4m2 0h13m3 0h2m1 0h15m2 0h5m8 0h1m3 0h4m6 0h1M125 527.5h1m40 0h1m1 0h6m1 0h1m1 0h8m78 0h3m2 0h2m8 0h1m68 0h9m2 0h8m2 0h3m1 0h4m3 0h5m3 0h5m89 0h3m3 0h7m2 0h10m1 0h3m3 0h5m6 0h9m2 0h5m2 0h12m1 0h2m2 0h2m1 0h2m2 0h10m3 0h5m3 0h2m1 0h2m4 0h2m3 0h3m3 0h8m4 0h1m2 0h5m1 0h2m13 0h2m2 0h2m4 0h3m4 0h6m8 0h2m1 0h4m2 0h3m4 0h2m2 0h2m2 0h2m8 0h1m1 0h6m2 0h21m40 0h2m12 0h4m3 0h2m2 0h5m2 0h2m1 0h2m4 0h2m3 0h2m2 0h1m4 0h6m1 0h2m1 0h5m2 0h2m10 0h3m5 0h1m5 0h2m4 0h1m10 0h2"/>
<path stroke="#56dd47" stroke-width="4" d="M171 517h4m367 0h1m18 0h1m78 0h1m2 0h2m4 0h1m3 0h3m3 0h1m21 0h2m6 0h1m2 0h2m1 0h1m1 0h3m12 0h2M166 524h8m4 0h3m179 0h2m4 0h2m8 0h1m9 0h1m97 0h2m14 0h5m1 0h1m18 0h5m2 0h3m5 0h2m3 0h2m8 0h2m2 0h10m5 0h2m5 0h6m3 0h4m19 0h2m12 0h1m9 0h12m4 0h7m3 0h6m1 0h4m2 0h2m5 0h9m2 0h15m1 0h6m2 0h5m3 0h3m2 0h2m4 0h2m9 0h1m75 0h1m1 0h1m13 0h1m32 0h3M126 531h2m38 0h1m9 0h1m4 0h4m69 0h1m11 0h2m65 0h3m3 0h3m2 0h3m9 0h14m3 0h1m2 0h8m2 0h6m89 0h3m2 0h8m2 0h6m3 0h2m2 0h9m7 0h5m3 0h7m2 0h5m3 0h7m2 0h8m2 0h7m5 0h7m2 0h6m5 0h4m5 0h9m1 0h1m3 0h2m2 0h9m8 0h2m13 0h1m4 0h1m5 0h3m3 0h1m12 0h2m3 0h1m1 0h1m16 0h2m7 0h2m1 0h7m4 0h6m48 0h8m1 0h8m1 0h5m4 0h6m1 0h11m2 0h2m1 0h2m1 0h8m1 0h15m1 0h2m2 0h4m2 0h7m2 0h2m1 0h3m2 0h4M163 535h3m8 0h1m102 0h1m78 0h2m4 0h3m26 0h1m95 0h3m4 0h2m2 0h2m13 0h3m9 0h3m2 0h3m19 0h2m5 0h2m3 0h2m6 0h2m14 0h1m3 0h2m9 0h1m2 0h1m23 0h2m8 0h1m20 0h2m7 0h4m3 0h4m8 0h1m4 0h1m3 0h5m6 0h3m4 0h1m1 0h3m52 0h3m23 0h1m6 0h2m6 0h2m2 0h2m4 0h1m1 0h1m2 0h4m5 0h2m3 0h3m7 0h3m26 0h2m16 0h1"/>
<path stroke="#78e736" stroke-width="3" d="M163 527.5h3m1 0h1m8 0h1m377 0h1m6 0h1m42 0h1m32 0h6m2 0h2m2 0h4m3 0h4m6 0h8m2 0h1m4 0h2m3 0h3m3 0h2m2 0h2m2 0h8m1 0h1m6 0h1"/>
<path stroke="#78e736" stroke-width="4" d="M174 524h1m216 0h1m104 0h2m56 0h1m94 0h4m7 0h3m6 0h1m4 0h2m2 0h5m9 0h2m15 0h1m6 0h1m8 0h1M163 531h3m1 0h9m2 0h3m191 0h1m11 0h2m118 0h1m2 0h2m21 0h2m8 0h2m5 0h3m7 0h2m8 0h2m7 0h3m9 0h1m18 0h3m27 0h8m4 0h1m3 0h7m1 0h4m5 0h1m3 0h3m1 0h12m2 0h3m1 0h1m1 0h10m1 0h5m2 0h1m1 0h3m4 0h1m9 0h2m71 0h1m5 0h4m18 0h2m14 0h1M528 535h2m37 0h2m29 0h3m40 0h2m13 0h3m1 0h1m5 0h3m12 0h2m14 0h1m35 0h2m117 0h1"/>
<path stroke="#99f027" stroke-width="3" d="M689 527.5h1"/>
<path stroke="#99f027" stroke-width="4" d="M647 531h2m1 0h3m13 0h4m38 0h1m8 0h1M175 535h1m2 0h3m525 0h2m112 0h4"/>
<path stroke="#b0f310" stroke-width="4" d="M683 535h3"/>
</g>
<g style="opacity:0.999">
<text x="588" y="22" text-anchor="middle" letter-spacing="-0.22" style="white-space:pre">LEMMS PHA Ions and Electrons  2015:135</text>
<text x="81.5" y="177.9" text-anchor="end">100.</text>
<text x="81.5" y="128.9" text-anchor="end">200.</text>
<text x="81.5" y="100.9" text-anchor="end">300.</text>
<text x="81.5" y="80.9" text-anchor="end">400.</text>
<text x="81.5" y="64.9" text-anchor="end">500.</text>
<text x="81.5" y="51.9" text-anchor="end">600.</text>
<text x="81.5" y="40.9" text-anchor="end">700.</text>
<text x="10" y="44" letter-spacing="-0.7">IONS</text>
<text x="46" y="150" text-anchor="middle" letter-spacing="-0.45" transform="rotate(-90 46 150)">Energy (keV)</text>
<rect x="95" y="274" width="986" height="20" fill="#000"/>
<rect x="96" y="275" width="2" height="18" fill="#fff"/>
<rect x="98" y="275" width="982" height="18" fill="#00ff00"/>
<rect x="372" y="275" width="12" height="18" fill="#000"/>
<rect x="373" y="275" width="10" height="18" fill="#ff0000"/>
<rect x="829" y="275" width="13" height="18" fill="#000"/>
<rect x="830" y="275" width="11" height="18" fill="#ff0000"/>
<path fill="none" stroke="#1a3a1a" stroke-opacity="0.85" stroke-width="1" shape-rendering="crispEdges" d="M137.5 291V293M137.5 268V269M137.5 536V537M178.5 291V293M178.5 268V269M178.5 536V537M219.5 290V293M219.5 268V269M219.5 536V537M260.5 291V293M260.5 268V269M260.5 536V537M301.5 291V293M301.5 268V269M301.5 536V537M342.5 290V293M342.5 268V269M342.5 536V537M424.5 291V293M424.5 268V269M424.5 536V537M465.5 290V293M465.5 268V269M465.5 536V537M506.5 291V293M506.5 268V269M506.5 536V537M547.5 291V293M547.5 268V269M547.5 536V537M588.5 290V293M588.5 268V269M588.5 536V537M629.5 291V293M629.5 268V269M629.5 536V537M670.5 291V293M670.5 268V269M670.5 536V537M711.5 290V293M711.5 268V269M711.5 536V537M752.5 291V293M752.5 268V269M752.5 536V537M793.5 291V293M793.5 268V269M793.5 536V537M834.5 290V293M834.5 268V269M834.5 536V537M875.5 291V293M875.5 268V269M875.5 536V537M916.5 291V293M916.5 268V269M916.5 536V537M957.5 290V293M957.5 268V269M957.5 536V537M998.5 291V293M998.5 268V269M998.5 536V537M1039.5 291V293M1039.5 268V269M1039.5 536V537"/>
<text x="29.5" y="300" letter-spacing="-0.6">Sunlight?</text>
<text x="74.5" y="458.5" text-anchor="end">10</text>
<text x="75.5" y="452.2" font-size="11">2</text>
<text x="74.5" y="335.5" text-anchor="end">10</text>
<text x="75.5" y="329.2" font-size="11">3</text>
<text x="10" y="362" letter-spacing="-0.5">ELECTRONS</text>
<text x="46" y="418" text-anchor="middle" letter-spacing="-0.45" transform="rotate(-90 46 418)">Energy (keV)</text>
<rect x="1092" y="32" width="12" height="238" fill="url(#cb)"/>
<text x="1117" y="277.5">10</text>
<text x="1131.5" y="271.2" font-size="11">-1</text>
<text x="1117" y="243.5">10</text>
<text x="1131.5" y="237.2" font-size="11">0</text>
<text x="1117" y="209.5">10</text>
<text x="1131.5" y="203.2" font-size="11">1</text>
<text x="1117" y="175.5">10</text>
<text x="1131.5" y="169.2" font-size="11">2</text>
<text x="1117" y="141.5">10</text>
<text x="1131.5" y="135.2" font-size="11">3</text>
<text x="1117" y="107.5">10</text>
<text x="1131.5" y="101.2" font-size="11">4</text>
<text x="1117" y="73.5">10</text>
<text x="1131.5" y="67.2" font-size="11">5</text>
<text x="1117" y="39.5">10</text>
<text x="1131.5" y="33.2" font-size="11">6</text>
<text x="1155.5" y="150.0" text-anchor="middle" letter-spacing="-0.35" transform="rotate(90 1155.5 150.0)">intensity 1/(s cm^2 ster keV)</text>
<rect x="1092" y="300" width="12" height="238" fill="url(#cb)"/>
<text x="1117" y="545.5">10</text>
<text x="1131.5" y="539.2" font-size="11">-1</text>
<text x="1117" y="511.5">10</text>
<text x="1131.5" y="505.2" font-size="11">0</text>
<text x="1117" y="477.5">10</text>
<text x="1131.5" y="471.2" font-size="11">1</text>
<text x="1117" y="443.5">10</text>
<text x="1131.5" y="437.2" font-size="11">2</text>
<text x="1117" y="409.5">10</text>
<text x="1131.5" y="403.2" font-size="11">3</text>
<text x="1117" y="375.5">10</text>
<text x="1131.5" y="369.2" font-size="11">4</text>
<text x="1117" y="341.5">10</text>
<text x="1131.5" y="335.2" font-size="11">5</text>
<text x="1117" y="307.5">10</text>
<text x="1131.5" y="301.2" font-size="11">6</text>
<text x="1155.5" y="418.0" text-anchor="middle" letter-spacing="-0.35" transform="rotate(90 1155.5 418.0)">intensity 1/(s cm^2 ster keV)</text>
<text x="81.5" y="609.9" text-anchor="end">0.</text>
<text x="81.5" y="592.9" text-anchor="end">50.</text>
<text x="81.5" y="574.9" text-anchor="end">100.</text>
<text x="81.5" y="556.9" text-anchor="end">150.</text>
<text x="46" y="574" text-anchor="middle" letter-spacing="-0.45" transform="rotate(-90 46 574)">Angle (deg)</text>
<path fill="none" stroke="#00e000" stroke-width="1.2" d="M373 605.5L375 602L378 597.5L381 594L384.5 592.5H827L830 594.5L834 599L838.8 605.5"/>
<path fill="none" stroke="#0000e8" stroke-width="1.2" d="M96 582.3H368.5L371 583.5L374 586L376.8 587.2L379.5 586L387.5 578.3H823.8L828.5 583L832 586.5L834.5 587.2L837.5 586.5L842 583.3H1080"/>
<path stroke="#00e000" stroke-width="1.3" d="M1091 548.2L1103.3 552.8"/>
<text x="1107.5" y="555" letter-spacing="-0.6">LET BS Lat</text>
<path stroke="#000" stroke-width="1.3" d="M1091 563.2L1103.3 567.8"/>
<text x="1107.5" y="570" letter-spacing="-0.6">LET BS Lon</text>
<path stroke="#0000e8" stroke-width="1.3" d="M1091 578.2L1103.3 582.8"/>
<text x="1107.5" y="585" letter-spacing="-0.6">Sun Angle</text>
<text x="113.8" y="629" text-anchor="end">00:00</text>
<text x="113.8" y="644" text-anchor="end">2.30</text>
<text x="113.8" y="659" text-anchor="end">35.55</text>
<text x="113.8" y="674" text-anchor="end">43.88</text>
<text x="236.8" y="629" text-anchor="end">03:00</text>
<text x="236.8" y="644" text-anchor="end">2.34</text>
<text x="236.8" y="659" text-anchor="end">35.90</text>
<text x="236.8" y="674" text-anchor="end">44.27</text>
<text x="359.8" y="629" text-anchor="end">06:00</text>
<text x="359.8" y="644" text-anchor="end">2.38</text>
<text x="359.8" y="659" text-anchor="end">36.23</text>
<text x="359.8" y="674" text-anchor="end">44.64</text>
<text x="482.8" y="629" text-anchor="end">09:00</text>
<text x="482.8" y="644" text-anchor="end">2.41</text>
<text x="482.8" y="659" text-anchor="end">36.56</text>
<text x="482.8" y="674" text-anchor="end">45.00</text>
<text x="605.8" y="629" text-anchor="end">12:00</text>
<text x="605.8" y="644" text-anchor="end">2.45</text>
<text x="605.8" y="659" text-anchor="end">36.87</text>
<text x="605.8" y="674" text-anchor="end">45.34</text>
<text x="728.8" y="629" text-anchor="end">15:00</text>
<text x="728.8" y="644" text-anchor="end">2.49</text>
<text x="728.8" y="659" text-anchor="end">37.17</text>
<text x="728.8" y="674" text-anchor="end">45.66</text>
<text x="851.8" y="629" text-anchor="end">18:00</text>
<text x="851.8" y="644" text-anchor="end">2.53</text>
<text x="851.8" y="659" text-anchor="end">37.46</text>
<text x="851.8" y="674" text-anchor="end">45.97</text>
<text x="974.8" y="629" text-anchor="end">21:00</text>
<text x="974.8" y="644" text-anchor="end">2.56</text>
<text x="974.8" y="659" text-anchor="end">37.74</text>
<text x="974.8" y="674" text-anchor="end">46.27</text>
<text x="1097.8" y="629" text-anchor="end">00:00</text>
<text x="1097.8" y="644" text-anchor="end">2.60</text>
<text x="1097.8" y="659" text-anchor="end">38.00</text>
<text x="1097.8" y="674" text-anchor="end">46.54</text>
<text x="60" y="644" text-anchor="end" letter-spacing="-0.2">LT (hrs)</text>
<text x="60" y="659" text-anchor="end" letter-spacing="-0.2">Rs</text>
<text x="60" y="674" text-anchor="end" letter-spacing="-0.2">Dipole L</text>
<text x="201.5" y="701.9" text-anchor="end">-40.</text>
<text x="201.5" y="720.9" text-anchor="end">-30.</text>
<text x="201.5" y="738.9" text-anchor="end">-20.</text>
<text x="201.5" y="757.9" text-anchor="end">-10.</text>
<text x="201.5" y="776.9" text-anchor="end">0.</text>
<text x="201.5" y="794.9" text-anchor="end">10.</text>
<text x="201.5" y="813.9" text-anchor="end">20.</text>
<text x="201.5" y="832.9" text-anchor="end">30.</text>
<text x="201.5" y="850.9" text-anchor="end">40.</text>
<text x="215.5" y="872" text-anchor="middle">40.</text>
<text x="254.5" y="872" text-anchor="middle">20.</text>
<text x="292.5" y="872" text-anchor="middle">0.</text>
<text x="330.5" y="872" text-anchor="middle">-20.</text>
<text x="369.5" y="872" text-anchor="middle">-40.</text>
<text x="292.5" y="888.5" text-anchor="middle" letter-spacing="-0.1">KSM-X</text>
<text x="166" y="772" text-anchor="middle" letter-spacing="-0.1" transform="rotate(-90 166 772)">KSM-Y</text>
<text x="498.5" y="701.9" text-anchor="end">40.</text>
<text x="498.5" y="720.9" text-anchor="end">30.</text>
<text x="498.5" y="738.9" text-anchor="end">20.</text>
<text x="498.5" y="757.9" text-anchor="end">10.</text>
<text x="498.5" y="776.9" text-anchor="end">0.</text>
<text x="498.5" y="794.9" text-anchor="end">-10.</text>
<text x="498.5" y="813.9" text-anchor="end">-20.</text>
<text x="498.5" y="832.9" text-anchor="end">-30.</text>
<text x="498.5" y="850.9" text-anchor="end">-40.</text>
<text x="512.5" y="872" text-anchor="middle">40.</text>
<text x="550.5" y="872" text-anchor="middle">20.</text>
<text x="589.5" y="872" text-anchor="middle">0.</text>
<text x="628.5" y="872" text-anchor="middle">-20.</text>
<text x="666.5" y="872" text-anchor="middle">-40.</text>
<text x="589.5" y="888.5" text-anchor="middle" letter-spacing="-0.1">KSM-X</text>
<text x="463" y="772" text-anchor="middle" letter-spacing="-0.1" transform="rotate(-90 463 772)">KSM-Z</text>
<text x="795.5" y="701.9" text-anchor="end">40.</text>
<text x="795.5" y="720.9" text-anchor="end">30.</text>
<text x="795.5" y="738.9" text-anchor="end">20.</text>
<text x="795.5" y="757.9" text-anchor="end">10.</text>
<text x="795.5" y="776.9" text-anchor="end">0.</text>
<text x="795.5" y="794.9" text-anchor="end">-10.</text>
<text x="795.5" y="813.9" text-anchor="end">-20.</text>
<text x="795.5" y="832.9" text-anchor="end">-30.</text>
<text x="795.5" y="850.9" text-anchor="end">-40.</text>
<text x="809.5" y="872" text-anchor="middle">-40.</text>
<text x="848.5" y="872" text-anchor="middle">-20.</text>
<text x="886.5" y="872" text-anchor="middle">0.</text>
<text x="924.5" y="872" text-anchor="middle">20.</text>
<text x="963.5" y="872" text-anchor="middle">40.</text>
<text x="886.5" y="888.5" text-anchor="middle" letter-spacing="-0.1">KSM-Y</text>
<text x="760" y="772" text-anchor="middle" letter-spacing="-0.1" transform="rotate(-90 760 772)">KSM-Z</text>
<g fill="none" stroke-width="1.3">
<path stroke="#0000ff" stroke-dasharray="2.4 1.4" d="M249.5 697C231 726 225.6 750 225.6 772C225.6 794 231 818 249.5 847"/>
<path stroke="#6a2c00" stroke-dasharray="2.4 1.4" d="M284.3 697C254 722 243.4 748 243.4 772C243.4 796 254 822 284.3 847"/>
<path stroke="#0000ff" stroke-dasharray="2.4 1.4" d="M546.5 697C528 726 522.4 748 522.4 770C522.4 794 528 818 546.5 847"/>
<path stroke="#6a2c00" stroke-dasharray="2.4 1.4" d="M581.5 697C551 722 540.3 746 540.3 770C540.3 796 551 822 581.5 847"/>
</g>
<g fill="none" stroke="#000" stroke-width="1.3">
<ellipse cx="293.4" cy="773.6" rx="35.4" ry="37.9"/>
<path d="M335.6 710C341 713 344.5 719 344.2 727C343.5 741 334 756 319.7 772.4"/>
<ellipse cx="888" cy="772.2" rx="39" ry="15.6"/>
<path d="M823 753.3C827 751.5 830 750.4 834 750.3L850 750.3C862 751.5 876 755 887.4 760"/>
</g>
<path fill="none" stroke="#000" stroke-width="2" d="M554.4 788L641 750.2"/>
<path fill="none" stroke="#000" stroke-width="1" d="M291.0 770.5h3v2l-1 1.2h-2z"/>
<path fill="none" stroke="#000" stroke-width="1" d="M587.8 770.5h3v2l-1 1.2h-2z"/>
<path fill="none" stroke="#000" stroke-width="1" d="M885.1 770.5h3v2l-1 1.2h-2z"/>
<path stroke="#0000ff" stroke-width="3.4" stroke-linecap="round" fill="none" d="M344.2 726.5L343.8 733.5"/>
<circle cx="640.5" cy="750" r="2.3" fill="#0000ff"/>
<path stroke="#0000ff" stroke-width="4" stroke-linecap="round" fill="none" d="M840 750.2H848.5"/>
<circle cx="288.6" cy="811.3" r="2.4" fill="#ff0000"/>
<circle cx="585.7" cy="774" r="2.4" fill="#ff0000"/>
<circle cx="926.3" cy="774" r="2.4" fill="#ff0000"/>
<path stroke="#ff0000" stroke-width="1.3" fill="none" d="M338.4 729l8 8m0 -8l-8 8"/>
<path stroke="#ff0000" stroke-width="1.3" fill="none" d="M636 745.7l8 8m0 -8l-8 8"/>
<path stroke="#ff0000" stroke-width="1.3" fill="none" d="M842.3 745.7l8 8m0 -8l-8 8"/>
<path fill="none" stroke="#000" stroke-width="1" shape-rendering="crispEdges" d="M95.5 30V270M1080.5 30V270M95 30.5H1081M95 269.5H1081M91 258.5H95M91 238.5H95M91 222.5H95M91 209.5H95M91 198.5H95M91 189.5H95M91 181.5H95M87 173.5H95M91 166.5H95M91 160.5H95M91 155.5H95M91 149.5H95M91 145.5H95M91 140.5H95M91 136.5H95M91 132.5H95M91 128.5H95M87 124.5H95M91 121.5H95M91 118.5H95M91 115.5H95M91 112.5H95M91 109.5H95M91 106.5H95M91 103.5H95M91 101.5H95M91 98.5H95M87 96.5H95M91 94.5H95M91 91.5H95M91 89.5H95M91 87.5H95M91 85.5H95M91 83.5H95M91 81.5H95M91 79.5H95M91 77.5H95M87 76.5H95M91 74.5H95M91 72.5H95M91 70.5H95M91 69.5H95M91 67.5H95M91 66.5H95M91 64.5H95M91 63.5H95M91 61.5H95M87 60.5H95M91 58.5H95M91 57.5H95M91 56.5H95M91 54.5H95M91 53.5H95M91 52.5H95M91 51.5H95M91 49.5H95M91 48.5H95M87 47.5H95M91 46.5H95M91 45.5H95M91 44.5H95M91 42.5H95M91 41.5H95M91 40.5H95M91 39.5H95M91 38.5H95M91 37.5H95M87 36.5H95M91 35.5H95M91 34.5H95M91 33.5H95M91 32.5H95M91 31.5H95M91 30.5H95M95.5 298V538M1080.5 298V538M95 298.5H1081M95 537.5H1081M91 536.5H95M91 515.5H95M91 499.5H95M91 487.5H95M91 478.5H95M91 469.5H95M91 462.5H95M91 456.5H95M87 450.5H95M91 413.5H95M91 391.5H95M91 376.5H95M91 364.5H95M91 354.5H95M91 346.5H95M91 339.5H95M91 333.5H95M87 327.5H95M1104.5 31V270M1105 269.5H1113M1105 259.5H1109M1105 253.5H1109M1105 249.5H1109M1105 246.5H1109M1105 243.5H1109M1105 241.5H1109M1105 239.5H1109M1105 237.5H1109M1105 235.5H1113M1105 225.5H1109M1105 219.5H1109M1105 215.5H1109M1105 211.5H1109M1105 209.5H1109M1105 206.5H1109M1105 205.5H1109M1105 203.5H1109M1105 201.5H1113M1105 191.5H1109M1105 185.5H1109M1105 181.5H1109M1105 177.5H1109M1105 175.5H1109M1105 172.5H1109M1105 170.5H1109M1105 169.5H1109M1105 167.5H1113M1105 157.5H1109M1105 151.5H1109M1105 147.5H1109M1105 143.5H1109M1105 141.5H1109M1105 138.5H1109M1105 136.5H1109M1105 135.5H1109M1105 133.5H1113M1105 123.5H1109M1105 117.5H1109M1105 112.5H1109M1105 109.5H1109M1105 106.5H1109M1105 104.5H1109M1105 102.5H1109M1105 100.5H1109M1105 99.5H1113M1105 89.5H1109M1105 83.5H1109M1105 78.5H1109M1105 75.5H1109M1105 72.5H1109M1105 70.5H1109M1105 68.5H1109M1105 66.5H1109M1105 65.5H1113M1105 55.5H1109M1105 49.5H1109M1105 44.5H1109M1105 41.5H1109M1105 38.5H1109M1105 36.5H1109M1105 34.5H1109M1105 32.5H1109M1105 31.5H1113M1104.5 299V538M1105 537.5H1113M1105 527.5H1109M1105 521.5H1109M1105 517.5H1109M1105 514.5H1109M1105 511.5H1109M1105 509.5H1109M1105 507.5H1109M1105 505.5H1109M1105 503.5H1113M1105 493.5H1109M1105 487.5H1109M1105 483.5H1109M1105 479.5H1109M1105 477.5H1109M1105 474.5H1109M1105 473.5H1109M1105 471.5H1109M1105 469.5H1113M1105 459.5H1109M1105 453.5H1109M1105 449.5H1109M1105 445.5H1109M1105 443.5H1109M1105 440.5H1109M1105 438.5H1109M1105 437.5H1109M1105 435.5H1113M1105 425.5H1109M1105 419.5H1109M1105 415.5H1109M1105 411.5H1109M1105 409.5H1109M1105 406.5H1109M1105 404.5H1109M1105 403.5H1109M1105 401.5H1113M1105 391.5H1109M1105 385.5H1109M1105 380.5H1109M1105 377.5H1109M1105 374.5H1109M1105 372.5H1109M1105 370.5H1109M1105 368.5H1109M1105 367.5H1113M1105 357.5H1109M1105 351.5H1109M1105 346.5H1109M1105 343.5H1109M1105 340.5H1109M1105 338.5H1109M1105 336.5H1109M1105 334.5H1109M1105 333.5H1113M1105 323.5H1109M1105 317.5H1109M1105 312.5H1109M1105 309.5H1109M1105 306.5H1109M1105 304.5H1109M1105 302.5H1109M1105 300.5H1109M1105 299.5H1113M95.5 542V606M1080.5 542V606M95 542.5H1081M95 605.5H1081M87 605.5H95M91 602.5H95M91 598.5H95M91 594.5H95M91 591.5H95M87 588.5H95M91 584.5H95M91 580.5H95M91 577.5H95M91 574.5H95M87 570.5H95M91 566.5H95M91 563.5H95M91 560.5H95M91 556.5H95M87 552.5H95M91 549.5H95M91 546.5H95M91 542.5H95M96.5 606V614M137.5 606V610M178.5 606V610M219.5 606V614M260.5 606V610M301.5 606V610M342.5 606V614M383.5 606V610M424.5 606V610M465.5 606V614M506.5 606V610M547.5 606V610M588.5 606V614M629.5 606V610M670.5 606V610M711.5 606V614M752.5 606V610M793.5 606V610M834.5 606V614M875.5 606V610M916.5 606V610M957.5 606V614M998.5 606V610M1039.5 606V610M1080.5 606V614M215.5 696V848M369.5 696V848M215 696.5H370M215 847.5H370M207 697.5H215M211 699.5H215M211 701.5H215M211 702.5H215M211 704.5H215M211 706.5H215M211 708.5H215M211 710.5H215M211 712.5H215M211 714.5H215M207 716.5H215M211 717.5H215M211 719.5H215M211 721.5H215M211 723.5H215M211 725.5H215M211 727.5H215M211 729.5H215M211 730.5H215M211 732.5H215M207 734.5H215M211 736.5H215M211 738.5H215M211 740.5H215M211 742.5H215M211 744.5H215M211 745.5H215M211 747.5H215M211 749.5H215M211 751.5H215M207 753.5H215M211 755.5H215M211 757.5H215M211 759.5H215M211 760.5H215M211 762.5H215M211 764.5H215M211 766.5H215M211 768.5H215M211 770.5H215M207 772.5H215M211 773.5H215M211 775.5H215M211 777.5H215M211 779.5H215M211 781.5H215M211 783.5H215M211 785.5H215M211 787.5H215M211 788.5H215M207 790.5H215M211 792.5H215M211 794.5H215M211 796.5H215M211 798.5H215M211 800.5H215M211 802.5H215M211 803.5H215M211 805.5H215M211 807.5H215M207 809.5H215M211 811.5H215M211 813.5H215M211 815.5H215M211 816.5H215M211 818.5H215M211 820.5H215M211 822.5H215M211 824.5H215M211 826.5H215M207 828.5H215M211 830.5H215M211 831.5H215M211 833.5H215M211 835.5H215M211 837.5H215M211 839.5H215M211 841.5H215M211 843.5H215M211 845.5H215M207 846.5H215M215.5 848V856M234.5 848V852M254.5 848V856M273.5 848V852M292.5 848V856M311.5 848V852M330.5 848V856M350.5 848V852M369.5 848V856M512.5 696V848M666.5 696V848M512 696.5H667M512 847.5H667M504 697.5H512M508 699.5H512M508 701.5H512M508 702.5H512M508 704.5H512M508 706.5H512M508 708.5H512M508 710.5H512M508 712.5H512M508 714.5H512M504 716.5H512M508 717.5H512M508 719.5H512M508 721.5H512M508 723.5H512M508 725.5H512M508 727.5H512M508 729.5H512M508 730.5H512M508 732.5H512M504 734.5H512M508 736.5H512M508 738.5H512M508 740.5H512M508 742.5H512M508 744.5H512M508 745.5H512M508 747.5H512M508 749.5H512M508 751.5H512M504 753.5H512M508 755.5H512M508 757.5H512M508 759.5H512M508 760.5H512M508 762.5H512M508 764.5H512M508 766.5H512M508 768.5H512M508 770.5H512M504 772.5H512M508 773.5H512M508 775.5H512M508 777.5H512M508 779.5H512M508 781.5H512M508 783.5H512M508 785.5H512M508 787.5H512M508 788.5H512M504 790.5H512M508 792.5H512M508 794.5H512M508 796.5H512M508 798.5H512M508 800.5H512M508 802.5H512M508 803.5H512M508 805.5H512M508 807.5H512M504 809.5H512M508 811.5H512M508 813.5H512M508 815.5H512M508 816.5H512M508 818.5H512M508 820.5H512M508 822.5H512M508 824.5H512M508 826.5H512M504 828.5H512M508 830.5H512M508 831.5H512M508 833.5H512M508 835.5H512M508 837.5H512M508 839.5H512M508 841.5H512M508 843.5H512M508 845.5H512M504 846.5H512M512.5 848V856M531.5 848V852M550.5 848V856M570.5 848V852M589.5 848V856M608.5 848V852M628.5 848V856M647.5 848V852M666.5 848V856M809.5 696V848M963.5 696V848M809 696.5H964M809 847.5H964M801 697.5H809M805 699.5H809M805 701.5H809M805 702.5H809M805 704.5H809M805 706.5H809M805 708.5H809M805 710.5H809M805 712.5H809M805 714.5H809M801 716.5H809M805 717.5H809M805 719.5H809M805 721.5H809M805 723.5H809M805 725.5H809M805 727.5H809M805 729.5H809M805 730.5H809M805 732.5H809M801 734.5H809M805 736.5H809M805 738.5H809M805 740.5H809M805 742.5H809M805 744.5H809M805 745.5H809M805 747.5H809M805 749.5H809M805 751.5H809M801 753.5H809M805 755.5H809M805 757.5H809M805 759.5H809M805 760.5H809M805 762.5H809M805 764.5H809M805 766.5H809M805 768.5H809M805 770.5H809M801 772.5H809M805 773.5H809M805 775.5H809M805 777.5H809M805 779.5H809M805 781.5H809M805 783.5H809M805 785.5H809M805 787.5H809M805 788.5H809M801 790.5H809M805 792.5H809M805 794.5H809M805 796.5H809M805 798.5H809M805 800.5H809M805 802.5H809M805 803.5H809M805 805.5H809M805 807.5H809M801 809.5H809M805 811.5H809M805 813.5H809M805 815.5H809M805 816.5H809M805 818.5H809M805 820.5H809M805 822.5H809M805 824.5H809M805 826.5H809M801 828.5H809M805 830.5H809M805 831.5H809M805 833.5H809M805 835.5H809M805 837.5H809M805 839.5H809M805 841.5H809M805 843.5H809M805 845.5H809M801 846.5H809M809.5 848V856M828.5 848V852M848.5 848V856M867.5 848V852M886.5 848V856M905.5 848V852M924.5 848V856M944.5 848V852M963.5 848V856"/>
</g>
</svg>
</body></html>
